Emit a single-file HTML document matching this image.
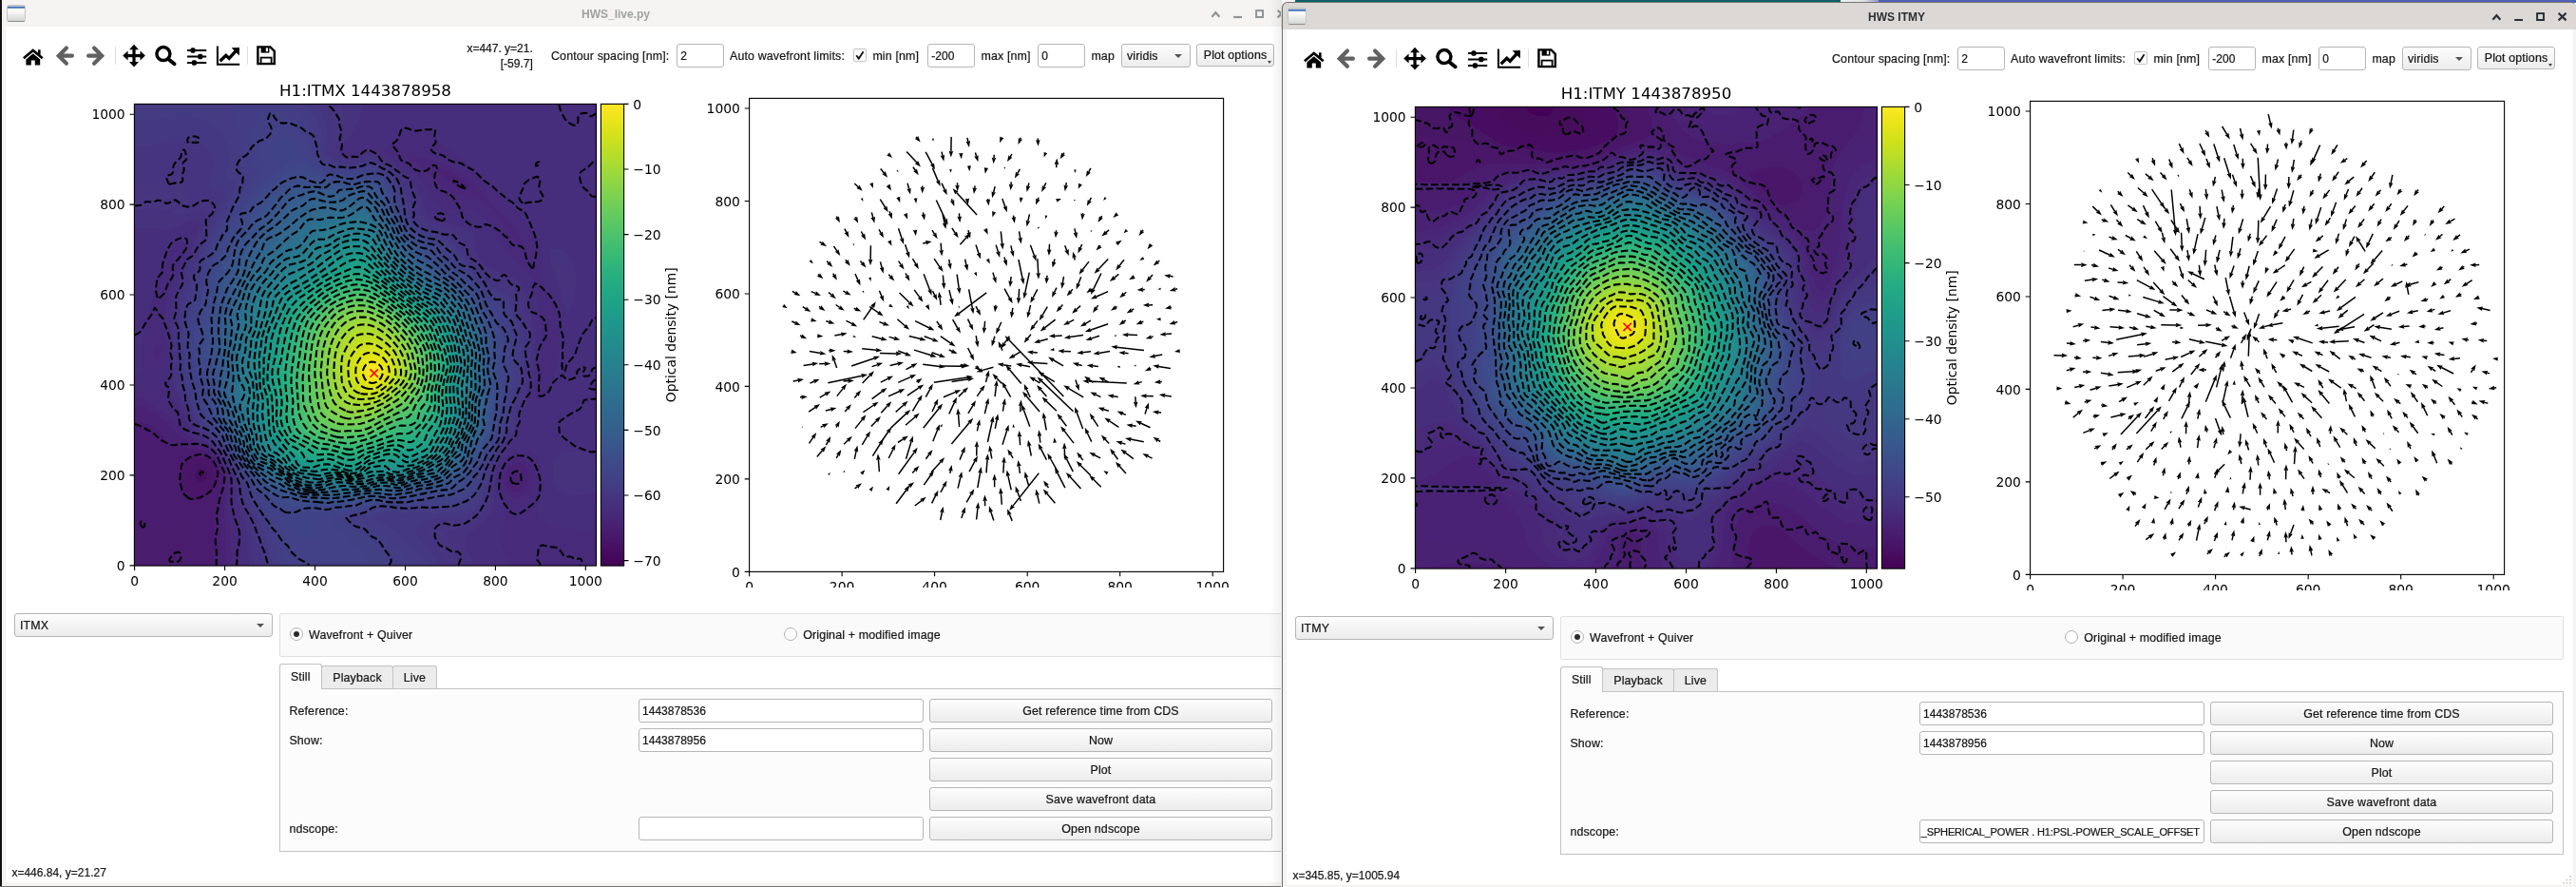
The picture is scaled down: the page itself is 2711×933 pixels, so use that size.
<!DOCTYPE html>
<html><head><meta charset="utf-8"><title>HWS</title><style>
html,body{margin:0;padding:0;}
body{width:2711px;height:933px;overflow:hidden;background:#fff;position:relative;font-family:"Liberation Sans","DejaVu Sans",sans-serif;font-size:12.4px;color:#161616;-webkit-text-stroke:0.22px #161616;}
.abs{position:absolute;}
.win{position:absolute;width:1363px;height:933px;overflow:hidden;background:#f5f4f3;-webkit-mask-image:linear-gradient(#000,#000);mask-image:linear-gradient(#000,#000);}
.tb{position:absolute;left:0;top:0;right:0;height:28px;}
.w1 .tb{background:#f5f4f3;}
.w2 .tb{background:#dbd8d5;}
.w2{border-radius:6px 6px 0 0;}
.ttl{position:absolute;top:5px;height:20px;line-height:20px;left:448px;width:400px;text-align:center;font-weight:bold;font-size:12px;white-space:nowrap;}
.w1 .ttl{color:#a0a2a2;-webkit-text-stroke:0;}
.w2 .ttl{color:#2b3035;-webkit-text-stroke:0;}
.content{position:absolute;left:6px;top:28px;width:1353.5px;height:900px;background:#fff;}
.lbl{position:absolute;white-space:nowrap;line-height:16px;height:16px;letter-spacing:0.15px;}
.inp{position:absolute;box-sizing:border-box;border:1px solid #b6b6b6;border-radius:3px;background:#fff;white-space:nowrap;overflow:hidden;line-height:24px;padding-left:3.3px;letter-spacing:0.15px;}
.btn{position:absolute;box-sizing:border-box;border:1px solid #b6b6b6;border-radius:3px;background:linear-gradient(#fdfdfd,#ececec);text-align:center;white-space:nowrap;line-height:24px;letter-spacing:0.15px;}
.cmb{position:absolute;box-sizing:border-box;border:1px solid #b6b6b6;border-radius:3px;background:linear-gradient(#fdfdfd,#ececec);white-space:nowrap;line-height:24px;padding-left:5px;letter-spacing:0.15px;}
.cmb:after{content:"";position:absolute;right:8px;top:10px;border-left:4px solid transparent;border-right:4px solid transparent;border-top:4.5px solid #555;}
.grp{position:absolute;box-sizing:border-box;border:1px solid #e0e0e0;border-radius:2px;background:#fafafa;}
.radio{position:absolute;box-sizing:border-box;width:14px;height:14px;border-radius:7px;border:1px solid #b0b0b0;background:#fff;}
.radio.on:after{content:"";position:absolute;left:3px;top:3px;width:6px;height:6px;border-radius:3px;background:#2a2a2a;}
.tab{position:absolute;box-sizing:border-box;border:1px solid #c2c2c2;border-bottom:none;border-radius:3px 3px 0 0;text-align:center;white-space:nowrap;letter-spacing:0.15px;}
.tab.off{background:#ececec;}
.tab.on{background:#fcfcfc;z-index:2;}
.num{font-size:12px;letter-spacing:0;}
.panel{position:absolute;box-sizing:border-box;border:1px solid #c2c2c2;background:#fcfcfc;}
</style></head><body>
<div class="abs" style="left:1362px;top:0;width:1349px;height:3px;background:#4f62b8;"></div>
<div class="abs" style="left:1362px;top:0;width:575px;height:3px;background:#0b6268;"></div>
<div class="abs" style="left:1937px;top:0;width:40px;height:3px;background:linear-gradient(90deg,#f0f0f0,#e4e4e6 60%,#8b96c8);"></div>
<div class="win w1" style="left:0px;top:0px;">
<div class="tb">
<svg class="abs" style="left:6px;top:4px" width="22" height="20"><defs><linearGradient id="igw1" x1="0" y1="0" x2="0" y2="1"><stop offset="0.25" stop-color="#fff"/><stop offset="1" stop-color="#d3d6d3"/></linearGradient></defs><rect x="1.5" y="1.5" width="19" height="17" rx="2" fill="url(#igw1)" stroke="#c4c4c4"/><path d="M2.5 18.5 H19.5" stroke="#8c8c8c"/><rect x="2" y="2.6" width="18" height="2.2" fill="#4a74b4"/></svg>
<div class="ttl">HWS_live.py</div>
<svg class="abs" style="left:1268px;top:6px" width="95" height="18" fill="none" stroke="#8f9496" stroke-width="2.2"><path d="M7.4 11.8 L11.4 7.2 L15.4 11.8"/><path d="M30.2 12 H39" /><rect x="54.1" y="5.1" width="6.9" height="6.9" stroke-width="2"/><path d="M76.6 4.8 L84.6 12.4 M84.6 4.8 L76.6 12.4"/></svg>
</div>
<div class="content"></div>
<svg class="abs" style="left:0;top:40px" width="300" height="40" viewBox="0 40 300 40"><path d="M24.9 61.3 L34.8 52.9 L44.7 61.3" fill="none" stroke="#000" stroke-width="2.7" stroke-linejoin="miter"/><rect x="40" y="52.3" width="2.6" height="5.5" fill="#000"/><path d="M34.8 56.2 L27.4 62.4 V68.4 H32.8 V63.6 H36.8 V68.4 H42.2 V62.4 Z" fill="#000"/><path d="M75.9 58.7 H63 M69.9 50.6 L61.8 58.7 L69.9 66.8" fill="none" stroke="#616161" stroke-width="4.2" stroke-linecap="round" stroke-linejoin="miter"/><path d="M93.1 58.7 H106 M99.1 50.6 L107.2 58.7 L99.1 66.8" fill="none" stroke="#616161" stroke-width="4.2" stroke-linecap="round" stroke-linejoin="miter"/><rect x="121" y="49" width="1" height="19" fill="#dcdcdc"/><rect x="260" y="49" width="1" height="19" fill="#dcdcdc"/><g fill="#000"><rect x="132" y="57" width="18" height="3.2"/><rect x="139.4" y="50" width="3.2" height="17.5"/><path d="M141 46.8 L146 52.2 L136 52.2 Z M141 70.4 L146 65 L136 65 Z M129.2 58.6 L134.6 53.6 L134.6 63.6 Z M152.9 58.6 L147.5 53.6 L147.5 63.6 Z"/></g><circle cx="171.9" cy="56.6" r="7" fill="none" stroke="#000" stroke-width="3.5"/><path d="M177.3 62.2 L183.5 67.2" stroke="#000" stroke-width="4" stroke-linecap="round"/><g stroke="#000" stroke-width="2.1"><path d="M197 53 H217.2 M197 59.5 H217.2 M197 66 H217.2"/></g><g fill="#000"><rect x="200.4" y="50.2" width="5.2" height="5.6" rx="1.8"/><rect x="208.2" y="56.7" width="5.2" height="5.6" rx="1.8"/><rect x="201.8" y="63.2" width="5.2" height="5.6" rx="1.8"/></g><path d="M228.9 48.6 V67.7 H252.2" fill="none" stroke="#000" stroke-width="2"/><path d="M231.6 64.2 L237.8 58.2 L241.2 61.4 L248.4 53.4" fill="none" stroke="#000" stroke-width="3.3" stroke-linejoin="miter"/><path d="M243.6 50.2 L252 50 L251.8 58.4 Z" fill="#000"/><path d="M271.4 49.4 H284.4 L288.8 53.8 V67.1 H271.4 Z" fill="none" stroke="#000" stroke-width="2.4"/><rect x="274.6" y="49.4" width="8.8" height="6.2" fill="#000"/><rect x="279.8" y="50.4" width="2.2" height="3.8" fill="#fff"/><rect x="274.6" y="60.6" width="11" height="6.2" fill="none" stroke="#000" stroke-width="1.8"/></svg>
<div class="lbl num" style="left:420px;width:140.8px;text-align:right;top:42.8px;">x=447. y=21.</div>
<div class="lbl num" style="left:420px;width:140.8px;text-align:right;top:58.8px;">[-59.7]</div>
<div class="lbl" style="left:580px;top:50.5px;">Contour spacing [nm]:</div>
<div class="inp num" style="left:712px;top:46px;width:50px;height:25px;">2</div>
<div class="lbl" style="left:768px;top:50.5px;">Auto wavefront limits:</div>
<div class="abs" style="left:898px;top:51px;width:14px;height:14px;box-sizing:border-box;border:1px solid #c4c4c4;border-radius:2px;background:#fff;"></div>
<svg class="abs" style="left:898px;top:51px" width="14" height="14"><path d="M3.2 7.2 L5.8 10.6 L10.6 3.2" fill="none" stroke="#111" stroke-width="1.8"/></svg>
<div class="lbl" style="left:918.4px;top:50.5px;">min [nm]</div>
<div class="inp num" style="left:976px;top:46px;width:50px;height:25px;">-200</div>
<div class="lbl" style="left:1032.5px;top:50.5px;">max [nm]</div>
<div class="inp num" style="left:1092px;top:46px;width:50px;height:25px;">0</div>
<div class="lbl" style="left:1148.4px;top:50.5px;">map</div>
<div class="cmb" style="left:1180px;top:46px;width:73px;height:25px;">viridis</div>
<div class="btn" style="left:1259px;top:46px;width:82px;height:24px;line-height:23.5px;">Plot options</div>
<div class="abs" style="left:1333.5px;top:64px;width:0;height:0;border-left:2.5px solid transparent;border-right:2.5px solid transparent;border-top:3px solid #444;"></div>
<svg class="abs" style="left:6px;top:80px" width="1353" height="538" viewBox="6 80 1353 538" font-family="DejaVu Sans, sans-serif" font-size="13.89px" fill="#000"><defs><filter id="blitmx" x="0" y="0" width="1" height="1" filterUnits="objectBoundingBox"><feGaussianBlur stdDeviation="1.6"/></filter><clipPath id="cpitmx"><rect x="141.4" y="109.4" width="486.1" height="485.7"/></clipPath></defs><g clip-path="url(#cpitmx)"><g filter="url(#blitmx)"><rect x="133.4" y="101.4" width="502.1" height="501.7" fill="#471164"/><path fill="#471365" d="M141.6 594.9l485.7 0 0-485.7-485.7 0 0 485.7zM210 506.7l-2.6-1.6-1.1-1.4-1-2.8 0.1-2.9 1.4-2.8 1.8-1.4 1.4-0.5 2.8 0 2.9 1.6 1.2 1.7 0.5 1.4 0.2 2.9-1.1 2.8-2.2 2.3-1.5 0.7-2.8 0z"/><path fill="#481668" d="M141.6 594.9l485.7 0 0-485.7-485.7 0 0 485.7zM207.1 512.9l-3.2-2.1-2.9-4.2-1.3-4.3 0.2-5.7 1.8-4.3 2.6-2.6 4.3-1.7 4.2 0 4.3 1.8 3.6 4 1.5 4.2-0.3 5.7-1.9 4.3-1.5 1.9-2.8 2.3-4.3 1.4-4.3-0.7z"/><path fill="#48186a" d="M141.6 594.9l485.7 0 0-485.7-485.7 0 0 485.7zM208.6 519.5l-2.9-0.6-2.8-1.4-4.3-4.4-2.9-6.5-0.7-4.3 0-4.3 1.3-5.7 1.7-2.8 2-2.2 2.9-1.8 2.8-0.9 5.7-0.5 4.2 1.1 2.7 1.4 4.4 4.3 1.6 2.9 0.9 2.8 0.3 5.7-1.5 5.7-1.4 2.8-2.6 3.6-2.9 2.5-2.8 1.6-2.9 0.9-2.8 0.1z"/><path fill="#481b6d" d="M141.6 594.9l485.7 0 0-485.7-485.7 0 0 485.7zM202.9 525.5l-2.9-1.6-2.8-2.5-2.6-3.4-2-4.3-1.4-4.3-0.8-5.7-0.1-5.7 0.6-4.2 2.3-5.7 2.5-2.9 2.9-2 2.9-1.2 4.2-1 4.3-0.1 2.8 0.4 4.3 1.5 2.9 1.8 2.8 2.5 2.8 3.8 1.5 3.2 0.9 3.9 0.1 4.3-0.6 4.3-1.4 4.2-2.2 4.3-2.5 3.5-4.3 4.1-2.8 1.8-4.3 1.6-4.3 0.1-2.8-0.7z"/><path fill="#481d6f" d="M206.7 594.9l420.6 0 0-485.7-485.7 0 0 452.2 10-5.5 5.7-2 5.7-1.1 17.1-2 6.1-1.5 9.6-3.1 1.4-0.3 1.4 0.4 2.9 3.5 2.8 5.6 2.8 8.1 1.5 6.6 0.8 7.7-0.1 7.1-0.9 5.7-1.7 4.3zM198.6 541.7l-2.8-3.3-4.3-7.3-2.9-6.3-1.8-5.4-1.5-7.1-0.7-7.2 0-7.1 0.7-5.7 1.4-4.2 1.8-2.9 2.9-2.8 2.2-1.5 3.6-1.5 5.7-1.3 4.2-0.3 4.3 0.4 4.3 1.3 4.3 2.3 3.9 3.4 3.2 4 2.2 4.6 1 4.2 0.2 4.3-0.6 4.7-1.4 5.3-2.8 6.3-2.9 4.5-4.3 5.4-5.7 5.6-5.7 4.4-5.6 3.2-2.9 0z"/><path fill="#481f70" d="M217.3 594.9l410 0 0-485.7-485.7 0 0 348.3 10 2.6 4.4 2.3 2.7 2.8 1.7 2.9 0.9 2.9 0.5 4.2-0.7 4.3-1.1 2.9-7.9 12.8-2 4.2-1 4.3 0.1 2.9 0.8 2.8 1.5 2.9 2.2 2.8 3.6 3.1 2.9 1.6 2.8 0.9 2.8 0.1 2.9-1 2.8-3.1 1.6-4.4 0.9-7.2 0.7-14.2 1.8-5.7 2.2-2.8 2.8-2.2 4.2-2.1 4.4-1.4 5.7-1.2 7.1-0.7 4.2 0.1 4.3 0.7 4.3 1.4 4.3 2.3 4.2 3.7 3.3 3.6 2.6 4.3 1.7 4.3 0.7 4.2 0 5.7-1 5.7-1.6 5.4-9.3 20.3-1.9 7.1-0.5 7.1 1 18.5 0.1 10-0.6 8.5-1.4 7.2z"/><path fill="#482173" d="M224.7 594.9l402.6 0 0-485.7-485.7 0 0 334.1 12.9 2.9 7.2 3.4 5.9 4.3 10.1 11.4 2.4 2.1 2.8 1.7 7.3 1.9 16.9 1 5.7 1.5 4.3 1.9 4.3 3.1 4.3 4 3.4 4.1 2.9 4.3 1.2 2.9 1.1 4.2 0.3 7.1-1.7 10-5.3 17.1-1.7 8.5-0.3 7.2 1 27-0.6 11.4-1.3 8.6z"/><path fill="#482475" d="M230.9 594.9l396.4 0 0-485.7-485.7 0 0 324.8 12.9 3.3 4.2 1.9 5.7 3.3 8.6 6.7 10.7 11.8 4.9 3.8 5.2 1.9 14.8 2.9 4.2 1.5 2.9 1.6 5.7 4.1 5.7 5.5 3.5 4.3 3.6 5.6 1.9 5.8 0.5 7.1-0.9 8.6-3.7 17.1-0.9 7.1 0 7.1 1.4 17.1 0.2 10-0.5 12.8-1.3 10zM540.4 511.5l-2.6-2.1-1.7-2.8-0.6-2.9 0.3-4.3 1.7-3.9 2.9-2.8 2.8-1.1 2.9 0.1 2.8 1.6 2.2 3.3 0.8 4.3-0.6 4.2-1.3 2.9-2.7 2.8-4.1 1.4-2.8-0.7z"/><path fill="#482677" d="M236.5 594.9l390.8 0 0-485.7-485.7 0 0 316.7 10 2.5 8.6 4 7.1 5 7.7 6.5 12.4 12.8 3.4 2.9 5.3 2.8 15.3 5.7 5.7 3.8 5.7 4.5 4.3 4.1 4.3 5.1 3.4 5.3 2.7 5.7 1.1 8.5-3.2 29.9 0.2 7.2 2 17.1 0.5 9.9-0.3 12.8-1.3 12.9zM494.8 199l-12.8-4.1-7.1-3.4-7.1-5.2-11.1-10.1 1.1-0.5 10 2.8 7.1 2.9 5.7 3.1 4.5 3.1 5.4 4.7 4.5 5.2-0.2 1.5zM543.2 518.1l-4.2-1.2-2.3-1.8-2-2.4-1.4-2.8-1-3.3-0.1-5.7 1.7-5.7 2.9-4.3 2.2-1.8 2.8-1.6 4.3-0.7 4.3 1.3 1.9 1.4 2.1 2.8 1.8 5.7 0 5.7-1.4 5.7-3 4.8-4.3 3.1-4.3 0.8z"/><path fill="#482979" d="M241.8 594.9l385.5 0 0-485.7-485.7 0 0 308.6 8.6 2 5.7 2.4 4.3 2.7 17 12.5 5.7 5.1 8.5 10 4.4 4.2 4.1 2.9 10.1 5.6 8.5 6.1 5.7 4.7 7.2 7.7 4.7 7.2 3.4 7.1 0.9 5.7 0 5.7-1.5 22.8 0.5 7.1 2.7 17.1 0.9 10-0.1 14.2-1.1 14.3zM541.8 523.9l-2.8-1-2.9-2-2.6-2.9-1.7-2.8-2.2-7.2-0.2-4.3 0.4-4.3 0.7-2.8 1.9-4.3 2.3-3.3 2.5-2.4 3.2-2.1 2.8-1.2 2.9-0.5 2.8 0 2.9 0.8 2.8 1.8 2.5 2.7 1.5 2.8 1.7 7.1-0.3 8.6-1 4.2-1.5 3.7-2.1 3.5-2.2 2.4-2.8 2.1-2.9 1.2-2.8 0.5-2.9-0.3zM164.4 377.9l-1.4-2-0.6-1.8-0.4-5.7 1-3.9 1.4-1.5 1.4 0 1.5 1.4 1 2.6 0.4 5.5-1.4 4.5-1.5 1.2-1.4-0.3zM548.9 261.2l-6.3-8.1-11.3-17.1-6.3-8.6-6-6.6-5.7-5.1-5.7-4-7.1-3.4-7.1-2.3-15.7-3.6-7.1-3.2-5.7-4.6-16.1-15.6-8.1-6.2-10.4-6.6 0.4-0.7 4.3-0.6 8.6 1 9.9 2.4 11.1 3.6 8.9 3.5 7.1 3.5 7.1 4.4 5.7 4.3 10.3 9.9 12.5 16.6 5.7 6.7 15.6 15.1 5.1 5.8 3.5 5.3 2 4.6 1.6 8.6-0.8 1z"/><path fill="#472a7a" d="M246.8 594.9l380.5 0 0-485.7-485.7 0 0 299.7 7.2 0.9 4.2 1.3 2.9 1.5 5.7 4.3 8.5 4.3 4.3 3 4.3 4 5.7 6.4 13.2 17.9 9.7 8.5 12.7 9.7 5.7 5 7.1 8 4.6 7.2 4.1 8.5 0.7 4.3 0 28.5 1 7.1 3.3 17.1 1.2 11.4 0.1 12.8-1 14.3zM544.7 532.2l-4.3-1-2.9-1.8-2.8-2.6-2.9-3.8-2.5-5-1.7-5.7-0.6-5.7 0.1-4.3 0.7-4.3 1.4-4.2 2.6-5 2.9-3.5 2.8-2.5 4.3-2.5 4.3-1.3 4.3-0.3 2.8 0.5 3.6 1.7 3 2.9 1.8 2.8 1.7 4.3 0.9 4.3 0.4 5.7-0.3 5.7-0.9 5.7-1.3 4.2-1.9 4.3-2.7 4.4-2.9 3-2.8 2.2-2.9 1.3-4.2 0.5zM165.8 397.2l-1.4-0.5-2.8-3-2.9-5.5-2.5-8.4-1.1-9.9 0.4-8.6 1.9-8.5 2.8-6 1.4-1.7 2.8-1.3 1.4 0.3 2.9 2.1 2.8 4.4 1.9 13.6 0.7 9.9-0.2 8.6-0.9 4.3-2.9 6.8-1.4 2-1.4 1.1-1.5 0.3zM557.5 279.4l-16.5-17.8-4.1-5.7-13.7-21.3-5.9-7.2-6-5.7-6.5-4.4-7.1-3.1-8.6-1.8-15.6-1.6-5.7-2.1-4.3-3.6-11.5-14.7-8.5-8.5-11.3-8.7-18.9-11.3-0.2-1.4 2-1.8 2.8-1.3 7.1-1 8.6 0.8 11.4 2.7 17.1 5.9 15.6 6.7 10 5.7 10.7 7.9 9.6 8.6 32.4 31.3 8.5 9.5 5.7 7.8 5 9.8 1.3 4.2 0.7 4.3-0.7 7.1-2.6 10-0.8 0.7z"/><path fill="#472d7b" d="M251.7 594.9l288.5 0-2.7-5.7-8.6-12.9-1.3-3-1.1-4.1-0.2-2.8 0.4-4.3 1.4-4.3 4.1-9.9 0.7-5.7-1-5.7-5.9-18.5-1.2-7.2 0-7.1 0.9-5.7 1.8-5.7 2.9-5.7 2.9-3.8 2.8-2.7 4.3-2.8 4.3-1.8 5.7-1.3 5.7 0.3 2.8 1.1 2.9 1.9 3.6 4.9 2.5 7.1 1.2 9.9-0.4 11.4-0.9 7.2-3.2 14.2-0.7 5.7 0.6 4.3 2.6 4.2 3.2 2.7 4.3 2.3 5.7 2.2 7.1 1.7 11.4 1.5 28.5 1.1 0-448.7-485.7 0 0 287.8 2.9-1.1 2.6-1.8 1.3-1.5 1.3-2.8 0.6-4.3-0.4-18.5 0.7-8.5 1.4-8.6 11-46.2 8.5-26.5 2.9-6.4 2.8-4.9 2.9-3.7 4.3-4.1 4.2-2.6 2.9-0.6 2.8 0.8 1.5 1.6 0 2-5.7 15.9-11.4 29.1-3.4 11.4-1.6 8.6-0.5 14.2 3.1 31.4 0 32.7 0.5 5.7 1.2 4.3 2.6 5.7 8 12.7 8.1 14.3 3.9 5.7 6.1 7.1 16.1 13.3 7.1 7.1 7.1 9.6 5.9 11.3 0.9 2.9 0.5 4.3 0.4 17.1 0.7 8.5 4.9 21.4 1.7 11.4 0.5 14.2-0.8 15.7zM566 421.2l-1.4-1.5-0.3-1.4-0.4-8.6 3.8-19.9 1.6-12.8 0.9-14.3-0.1-14.2-1.2-16-2.7-18.2-2.6-11.4-3.2-8.5-2.9-5-4-5-15.2-14.2-5-5.7-3.7-5.7-10.6-18.8-5.2-6.9-4.7-4.7-7.2-4.8-7.1-2.6-7.1-1-17.1-0.3-4.3-1.1-2.8-1.4-4.3-4.3-7.2-12.5-3.8-5.7-8.8-10-5.8-5.2-5.7-4.2-23.4-14.8-0.9-1.4 0.3-1.4 2.6-3.6 4.3-2.8 7.9-3.6 4.9-4.8 4.3-2.5 5.7-1.9 5.7-0.6 5.7 0.6 5.7 1.8 7.1 4.2 12.2 10.3 10.6 7.9 5.7 5.1 6.3 6.9 16.5 15.1 34.8 33.4 10.9 12.8 4.8 7.1 3.6 6.4 4.2 10.7 2 8.5 0.5 7.2-0.8 12.8 0.9 5.7 2.9 7.1 7.4 12.2 4.2 10.9 2.9 13.2 1.2 15-0.3 9.9-0.9 10.1-1.4 8.5-2.9 11.3-4.3 11.6-4.2 8.5-4.3 6.1-2.9 2.3-1.4 0.1z"/><path fill="#472f7d" d="M256.7 594.9l258.9 0-1.1-4.3-6.3-12.8-1.1-4.3 0-4.3 0.7-2.8 1.7-4.3 11.1-17.1 3-7.1 0.7-7.1-1.6-15.7-0.2-7.1 0.6-7.1 1.8-7.1 2.1-5.7 3.2-5.7 3.1-3.9 4.2-4.1 4.3-2.9 2.9-1.2 11.4-2.6 5.7-0.2 4.2 1.5 2.9 2.7 2.5 5 1.2 4.2 1.1 7.2 1.3 25.6 0.8 7.1 1.6 5.7 2.9 4.3 2.8 2.2 4.3 2 8.5 1.7 8.6 0.1 22.8-1.4 0-82.1-8.6 1-11.4 0.3-8.5-0.3-7.1-1.3-4.7-2-2.9-2.8-1.7-4.3-0.3-4.3 0.9-7.1 2.8-10 5.9-16.1 4.2-10.2 4.3-7.5 10.2-13.2 3.9-5.6 4.3-8.6 5.8-15 1.4-2.5 1.5-0.8 0-84.8-1.5-0.4-1.4-1.5-7.8-14.6-4.6-7.1-4.7-5-4.2-3-4.3-2-4.3-1.1-7.1-0.7-14.3 0.3-4.2-0.8-3.2-2-1.8-2.8-0.8-2.9-0.5-15.6-1-5.7-1.8-4.3-1.8-2.9-4.8-4.7-3.9-2.4-3.7-1.4-3.8-0.7-4.3 0.1-4.2 1.5-2.9 2-2.3 2.8-1.9 3.8-1.5 5.4-0.1 3.6 6.1 7.1 23.1 22.8 7.2 10 5.8 11.4 4.3 11.4 7.2 27 9.1 26.8 2.9 11.7 2 12.8 1 17.1-0.9 18.5-3 18.5-4.3 14.3-2.9 7.1-4.3 8.5-4.4 7.1-4.2 5.7-4.7 5.3-4.3 3.6-2.8 1.4-1.4 0.1-1.5-0.7-1.5-4 0.1-5.7 6.1-21.3 3.9-17.1 2.4-15.7 0.9-14.2-0.4-15.7-1.7-15.7-3.2-18.5-3.9-12.8-4.1-7.7-5.7-6.6-7.1-5.6-13.5-8.6-3.5-2.8-2.4-2.9-2.2-4.2-3.7-12.9-2.3-5.6-3.5-5.7-4.5-5-5.7-3.9-5.7-2.1-5.7-0.9-18.5-0.7-5.7-1.2-4.3-2.1-2.8-2.6-2-2.9-6.5-14.2-4-7.2-5.3-7.1-5.3-5.7-6.4-5.7-6.1-4.4-20-12.6-8.4-4.3-0.6-1.5 1.4-2.8 7.8-7.1 0.7-1.5 1.1-8.5 2.3-7 2.9-5.8 6.7-10 1.6-4.3-274.7 0 0 163 3.4 6.5 1.3 8.6-0.2 11.3-1.7 22.8 0.1 5.7 0.6 4.3 0.8 2.2 1.4-2.2 5.3-22.8 3.9-12.8 8.7-22.8 2.7-5.7 3.5-5.7 4.4-5.7 4.3-4.5 4.7-4 5.3-3.6 4.2-1.9 4.3-0.7 2.9 0.5 2.8 2.2 0 2.1-2.4 7.1-11 29.9-9 22.8-2.9 9.9-1.8 8.6-0.8 7.1-0.1 8.5 2.1 27.1 0.5 24.2 0.8 8.6 1.8 8.5 3.7 10 8.5 17.1 7.4 12.8 6.8 8.5 16.3 14.3 8 8.5 7 10 6.2 12.8 1 5.7 0.8 14.2 1.1 8.6 6.1 22.8 1.8 9.9 1 14.3-0.5 17.1zM368.1 159.4l-4.7-1.7 3.2-3.4 4.3-1.8 2.9-0.4 4.2 0.5 4.3 1.9 1.4 1.7-0.1 1.5-11.3 1.8-4.2-0.1z"/><path fill="#46327e" d="M261.8 594.9l236 0-0.8-4.3-5.3-11.4-1.5-4.3-0.5-4.2 0.5-2.9 1.4-2.8 2.3-2.9 12.3-11 5.7-6 3.4-4.4 2.3-4.2 2-7.1 1-24.3 0.8-5.7 1.9-7.4 2.6-6.8 3.1-5.6 11-14.3 2.5-4.3 1.4-4.3 0.8-5.7 8.1-25.6 5.8-22.8 3.4-21.4 0.8-9.9 0-10-1.6-18.5-4.5-22.8-2.1-7.2-2.9-7-3.6-5.7-3.9-4.3-3.8-3-5.7-3.2-18.5-6.7-4.3-2.8-5.7-5.7-3-4.2-2.7-5.7-0.9-4.3 0.1-10-1.5-4.2-2.3-2.9-3.9-2.6-4.3-1.7-27.1-6-5.6-2.5-2.9-2.3-3.2-4.8-5.5-15.7-5.2-10-7.5-9.9-9-8.6-19.4-12.9-4.3-2.4-4.3-1.6-4.3-0.9-4.2 0-12.9 2.5-4.2 0.2-5.7-1.5-5-3.3-1.1-1.4 2.2-4.3 3.9-4.6 6.2-5.4 5.8-10 2.9-7.1 2.2-7.1 1.2-5.7 0.2-4.3-239.3 0 0 130.3 4.3 0.5 18.5-0.4 5.7 0.7 7.1 2.1 2.9-0.7 12.8-7.2 7.1-2.8 4.3-0.5 2.8 0.5 2.5 1.4 1.3 1.5-0.2 2.8-4.3 12.8-21.5 57-2.6 8.5-1.8 8.6-1.1 8.5-0.2 8.6 1.5 27 0.4 21.4 0.8 8.5 1.8 8.6 3.6 9.9 8.2 17.1 7 12.9 4 5.7 3.8 4.2 15.4 14 7.9 8.8 7.6 11.4 6.3 12.8 0.9 4.3 1.4 14.2 1.2 7.2 7 22.7 2.5 11.4 1.4 15.7-0.1 15.7zM598.6 520.8l7.3 0.1 15.7-1.9 5.7-0.2 0-43.5-5.7 0.3-17.1-0.8-8.6 0.4-5.7 1.7-2.8 1.9-1.8 2.1-2.5 5.7-1.1 7.2 0.1 8.5 1.5 7.1 2.4 4.8 2.8 3.1 4.3 2.3 5.5 1.2zM596.8 328.6l0.6 1.2 4-8.4 2.5-7.1 1.6-7.1 0.8-5.7 0.1-7.1-0.7-7.1-1.2-5.5-1.6-4.5-2.7-5.1-2.6-3.5-3.1-2.7-2.8-1.8-4.3-1.6-4.3-0.6-4.3 0.2-0.7 0.8-0.1 2.9 2.3 10.9 10.8 33.2 4.8 17.1 0.9 1.5z"/><path fill="#463480" d="M267.2 594.9l216.6 0-0.4-2.9-1.7-4.3-11.3-18.5-1.4-4.2 0.2-2.9 1.4-2.1 2.9-1.8 17-5.6 5.7-2.7 5.7-3.6 4.3-3.4 4.3-4.6 2.8-4.2 2.1-4.7 1.5-7.2 2.1-19.9 2.9-12.8 4.3-9.8 11.8-20.1 4.3-10 8-25.6 5.9-25.7 2.7-19.9 0.3-17.1-1.8-15.7-4.5-19.9-2.1-7.1-2.3-5.7-2.4-4.5-3.1-4.1-4-3.7-4.3-2.8-4.3-2.1-12.8-4.7-4.3-2.6-2.8-2.3-5.7-5.9-6.9-8.6-4.7-7.1-6.3-11.4-4.9-5.6-4.2-3-5.5-2.8-19.7-7.1-5.9-4.3-2.1-2.9-1.4-2.8-4.5-15.7-4.7-9.9-6.7-10-8.3-8.6-5.6-4.2-9.7-6.5-8.6-4.3-4.2-1.1-4.3-0.1-15.7 3.1-5.7-0.1-2.8-0.7-3.6-1.7-7.1-5.7-0.4-1.4 0.8-2.9 5.2-10 1.7-7.1 2-15.6 0.1-12.9-219.5 0 0 111.5 5.7 0.3 14.3-1.5 7.1 0.2 10 2.3 4.2 1.8 5.7 3.1 1.5 0.2 4.2-1.1 10-3.6 5.7-1.2 4.7 0.5 2.4 1.5 1.4 1.7 0.3 1.1-0.4 1.4-4.1 10-25.5 68.4-2.8 8.5-2.1 8.6-1.5 9.9-0.5 10 1.3 44.1 0.6 8.6 1.7 8.5 3.3 10 7.8 17.1 7.4 14.2 3.8 5.7 3.5 4.3 15.8 15.2 8.5 10 6.9 10.4 7.1 14.2 0.8 2.9 3.3 19.9 7.9 22.8 2.9 11.4 2.2 15.7 0.6 9.9-0.1 7.2z"/><path fill="#453581" d="M272.8 594.9l199.2 0-0.8-4.3-2.3-4.3-11.4-14.2-3.7-5.7-1.3-4.3 0.3-4.3 1.7-2.8 1.4-1.4 5-2.9 5.4-1.3 12.9-0.9 5.7-0.9 5.6-1.6 5.7-2.4 5.7-3.6 4.1-3.5 3.5-4.3 2.3-4.3 2.2-7.1 3-18.5 3.2-14.2 3.5-8.6 10.4-17.1 4.6-9.9 6.5-20 6.2-25.6 3.5-21.4 0.9-17.1-1.2-15.6-3.4-15.7-3.2-11.4-2.7-7.1-3.5-6.3-4.3-4.9-7.1-5-12.8-5.9-7.1-5.6-15.6-17.9-13.6-18.5-5.9-5.7-4.1-2.8-5-2.5-16.6-6.1-2.6-1.4-3.4-2.9-3-4.2-2.2-4.3-4.5-15.7-5.2-11.4-5.5-8.5-6.8-7.3-11.4-8.5-5.7-3.4-4.3-1.8-4.2-1-4.3-0.1-15.7 3.2-7.1-0.1-4.3-1.3-4.2-2.2-8.7-7.4 0.8-4.3 3.3-10 0.2-4.2-0.6-14.3-2.7-17.1-206 0 0 79.8 2.9 0.7 2.8 0.1 14.3-2.5 8.5-0.8 7.1 0.1 5.7 1 5.7 2.6 4.3 4.2 4.3 7.2 4.8 10.2 0.9 0.6 2.8 0.1 11.4-2.2 4.3-0.1 4.3 1.6 1.4 1.4 1.4 2.8-6.9 12.9-5 11.4-11.6 29.9-12.4 34.1-4.8 15.7-2.2 11.4-1 12.8 0.8 39.9 0.6 10 2 9.9 3.5 10 8.3 18.5 6.6 12.8 6 8.6 16.1 16.4 8.6 10.4 7.4 11.6 7.9 15.7 4.2 19.9 8.9 22.8 3.4 11.4 3.1 18.5 0.8 8.6 0 5.7z"/><path fill="#453882" d="M278.9 594.9l182.5 0-1-4.3-2.6-4.2-13.1-14.3-4.2-5.7-2.3-5.7 0-4.3 1.4-2.8 3.2-2.9 5-2.6 4.3-1.7 10-2.1 21.3-1.5 5.7-1.4 4.3-1.6 5.7-3.1 3.8-3.1 3.3-3.6 2.9-4.5 3.1-9 4.5-22.7 1.9-7.2 1.9-4.7 11.5-19.5 3.9-8.5 5.5-17.1 5.9-24.2 3.6-21.4 1.4-18.5-0.2-8.5-0.8-8.6-3.5-15.7-5.1-15.6-2.8-5.7-3.1-4.3-6.3-5.7-12.9-7.5-5.7-4.7-19.2-22-16.4-20-4.3-3.8-4.7-3.2-18.1-7.1-4.9-2.9-4.9-4.3-1.9-2.8-2.6-5.7-5.5-17.1-5-11.4-4.5-7.1-6.7-7.1-5.4-4.3-7-4.6-4.2-2.1-4.3-1.3-7.1-0.1-11.4 2.6-5.7 0.7-4.3-0.2-4.3-0.9-4.2-1.8-3.8-2.3-8.4-7.1-0.9-1.4 2.6-12.8-0.5-7.2-2.4-11.3-5-14.3-1.1-4.3-194.2 0 0 44.8 4.3 0.4 4.3-0.4 29.9-5.1 12.8-1.2 5.7 0.2 5.7 0.8 4.3 1.3 4.2 1.9 4.3 3 3.7 4.2 2.3 4.3 1.1 4.2 0.2 4.3-0.4 4.3-3.3 15.6-0.4 4.3 1.1 1.4 1.4 0.5 7.1 1.1 4.3 1.6 2.7 2.5 1.5 2.9-1.3 2.8-11.4 19.2-6.5 13.6-12.9 32.7-11.4 32.8-3.1 10-3.1 14.2-1.3 12.8-0.2 15.7 0.9 31.3 1.8 10 3.2 10 9.9 22.7 5.7 11.4 6 8.6 15.2 16.3 8.6 10.7 7.3 11.4 8.9 17.1 5 18.5 9.9 22.8 3.8 11.4 4.3 19.9 1.1 7.2 0.1 5.7z"/><path fill="#443a83" d="M285.6 594.9l164.4 0-0.6-2.9-2.8-4.3-15.1-14.2-15-15.5-7.1-5.1-14.3-6.4-1.9-1.5 10.5-2.7 15.6-2 5.7 0 7.2 1.4 7.1 0.3 19.9-1.9 22.8-1.3 7.1-1.8 5.7-2.4 5.7-3.9 4.3-4.7 2.8-4.9 2.3-6 6.6-28.5 12.7-22.8 5-11.3 4.4-14.3 4.3-18.5 4.3-24.2 1.2-11.4 0.4-10-0.2-8.5-0.8-8.6-1.6-8.5-2.3-8.6-4.5-12.8-2.1-4.2-2.9-4.3-5.4-5.3-11.4-8-5.7-5.2-38.4-44-4.3-3.7-4.3-2.8-19.9-9.4-4.3-3-4.2-4.1-2.8-4.2-3.4-8.6-4.7-14.2-4.2-10-4.5-7.1-6.9-7.1-9.2-6.6-4.2-2.1-4.3-1.3-7.1-0.1-11.4 2.5-5.7 0.7-5.7-0.2-4.3-1-4.9-1.9-4.8-2.8-10.4-8.6-0.1-2.8 1.6-11.4-1.3-6.5-3.8-10.6-8.6-15.7-1.5-4.3-182.7 0 0 21.3 4.3 0.2 4.3-0.5 25.6-6 10-1.7 10-0.5 9.9 1.3 5.7 1.7 5.7 2.6 5.7 3.6 4.3 3.5 4.1 4.4 3.2 4.3 3.1 5.7 2.2 5.7 1.5 7.1 0.1 5.7-0.9 5.7-2.8 10 0.1 1.4 0.9 1.4 1.3 1.1 4.3 2.6 2.4 2 1.8 2.8 0.9 2.9-15.3 22.8-6 10-5 10-13.8 34.1-12.5 37.1-4.3 17.1-2.3 17-0.4 18.6 0.8 25.6 1.8 10 3.2 9.9 10 24.2 5.5 11.4 5.9 8.6 14.5 16.3 8.5 11 7.1 11.1 10.3 18.5 5.6 17.1 10.3 21.4 5 12.8 6.2 22.8 1 5.7 0.2 4.3z"/><path fill="#433d84" d="M293.2 594.9l140.5 0-0.5-2.9-3.2-4.3-21.2-19.9-9-7.1-17.5-11-4.1-3.3 2.7-1.4 11.4-3.9 12.8-2.3 32.8-3.2 11.3 0.6 18.6-0.1 8.5-0.4 5.7-0.7 5.7-1.4 5.7-2.5 4.3-2.7 3.5-3.3 3.6-5 2.9-6.4 2.5-8.6 3.3-15.6 15.2-28.5 3.5-8.5 3-10 5-22.8 3.7-22.8 1.5-18.5-0.5-15.7-1.8-11.4-3.3-12.8-3.7-9.4-4.3-7-4.6-4.9-9.6-8-4.3-4.1-14.2-17.1-29.9-32-7.1-5.1-18.5-9.6-4.3-3.1-3.9-3.6-3.2-4.3-1.5-2.9-8.8-24.2-3.1-7.1-4.6-7.1-6.3-6.3-8.5-5.9-7.1-2.7-5.7-0.3-15.7 2.9-8.5 0.2-4.3-0.7-5.7-1.9-4.8-2.4-5.2-3.5-8.1-6.5-1.1-1.4 1-12.8-0.6-2.9-2.2-5.7-2.9-5.7-3.2-5-12.3-14.9-2.3-4.3-66.2 0-0.8 2.9 0.1 2.8 6.1 20 3.6 18.5 0.5 10-1.5 9.9 0.1 2.9 1.5 2.7 4.9 5.8 1.7 4.3-0.4 1.4-10.4 12.7-6.4 8.7-14.3 22.8-6.9 14.2-12.3 31.3-11.2 35.6-2.8 11.4-2.1 11.4-1.2 10-0.5 10 0.1 17 0.6 11.8 1.4 8.9 2.7 9.3 9.9 25.6 4.9 11.4 6.1 10 14.9 17.7 9.1 12.2 6.3 9.9 12.4 21.4 5.6 14.2 11.5 21.4 5.9 12.8 7.8 22.8 1.4 5.7 0.4 4.3z"/><path fill="#423f85" d="M302.4 594.9l110.6 0-0.2-2.9-2.3-4.3-11.2-12.8-8.4-7.3-20-13.8-5.2-4.5-2.3-2.9 3.6-1.4 20.2-5.7 13.6-2.6 45.6-4.7 21.4 0.8 12.8-1 5.7-1.4 4.2-1.7 3.9-2.2 3.3-2.5 4-4.6 3.2-5.7 2.6-7.1 3.1-14.3 4.8-9.9 10.8-20 3-7.1 2.3-7.1 3.9-17.1 4.5-27.1 1.8-17.1 0.2-14.2-1.1-14.2-2.6-12.9-3.7-11.4-4.7-8.5-3.5-4.3-13-13-15.6-19.2-29.1-30.4-8-6.2-18.5-10.3-4.5-3.5-4.3-4.2-3.1-4.3-2.2-4.3-10.8-28.5-3.4-5.7-4.4-5.2-4.3-3.8-4.3-3-4.2-2.3-4.3-1.3-5.7-0.3-15.7 2.6-8.5 0.3-8.6-1.6-9.2-3.9-16.4-11.4 0.6-11.4-0.6-3.5-4.3-7.9-7.1-8.4-7.1-5.8-8.6-4.8-7.1-2.5-7.1-0.9-4.3 0.5-2.8 0.8-5.7 3.4-4.3 5.3-3.1 8.2-1.6 9.9-1.7 24.3 0.9 2.8 5.5 7.5 1.6 3.9-21.5 25.4-7.2 10-8.5 13.2-4.8 8.4-4.1 8.5-12 29.9-10.5 34.2-5 21.3-2.6 18.6-0.3 21.3 1.1 14.3 2.5 11.4 11 31.3 5.3 12.8 6.2 10 14.6 18.2 7.5 10.3 20.4 32.7 6.3 13 13.8 22.6 8.2 15.7 8.6 19.9 1.4 4.3 0.6 4.3z"/><path fill="#424086" d="M315.7 594.9l72 0 0.3-2.9-0.8-2.8-3.3-5.7-6.7-7.2-13.4-11.4-7.1-6.9-5.7-7.3-2.5-4.3-0.3-1.4 49.2-10 39-3.8 17.1-2.1 15.7 0.5 10-0.9 5.7-1.3 4.2-1.7 4.3-2.5 2.9-2.4 3.7-4.3 3.3-5.7 1.6-4.2 3.4-12.8 15.4-30 3-7.1 2.4-7.1 3.7-17.1 4.3-29.9 1.3-15.7 0.1-14.2-1.3-14.2-2.6-12.9-3.3-9.9-4.8-8.6-11.7-13.7-17.1-21.6-29.9-30.6-8.2-6.7-18.9-11.4-4.3-3.4-4.2-4.3-2.9-3.7-3.2-5.7-11-28.5-3.5-5.7-3.7-4.2-4.2-3.7-4.3-2.8-7.1-2.8-5.7-0.4-15.7 2.3-8.5 0.3-10-1.5-10-3.8-20-11.8 0.4-10-0.7-4.3-2.4-3.9-4.3-4.6-4.3-3.3-5.7-2.9-5.7-1.7-4.3-0.3-4.2 0.6-2.9 1-2.8 1.6-2.6 2.1-4.2 5.7-2.8 7.1-2 8.6-0.6 5.7 1.1 2.8 6.7 8.6 0.7 1.4-0.8 1.4-21.2 22.8-7.1 8.7-7.1 9.8-8.5 12.9-5.9 9.9-4.2 8.5-6.5 15.7-4.8 12.5-3.3 10.3-6.4 22.8-3.7 15.7-2.5 12.8-1.4 9.9-0.7 11.4 0.1 11.4 1.2 12.8 2.6 11.4 11.4 35.6 5.4 12.9 5.6 8.5 19.3 25.6 18 28.2 6.4 8.9 7.8 12.9 25.1 35.5 12.8 21.3 1.8 4.3 0.5 2.9z"/><path fill="#414287" d="M324.3 567.8l2.5 0.6 2.8-0.3 1.4-1 1.2-2.1 0.8-5.7-0.2-14.3 0.3-1.4 2.2-0.8 24.2-3 38.5-6.6 42.7-4.4 18.5-2.5 11.4 0.1 7.1-0.6 5.7-1.3 4.3-1.7 4.3-2.5 2.8-2.3 2.9-3.2 2.8-4.5 4.7-13.7 16.7-32.8 3-7.1 2.2-7.1 3.1-15.7 4.1-34.1 0.9-14.3-0.3-14.2-1.4-14.3-2.7-12.8-3.1-8.5-4.9-8.6-21.5-28.5-9.3-10.4-13.3-12.3-16.6-16.8-6.2-4.6-15.2-9.6-5.7-4.7-4.3-4.4-3-4.1-3.2-5.7-11.3-28.5-2.7-4.2-4-4.7-4.2-3.6-4.3-2.7-2.9-1.2-4.2-1.1-5.7-0.2-14.9 2.1-9.3 0.1-10-1.4-9.5-3-17.6-9-8.5-2.8-1.4-1 0.9-10-0.6-2.8-0.8-1.5-2.4-1.9-4.3-2.2-4.2-1-2.9-0.1-4.3 1-4.5 2.8-3.5 4.3-2.6 5.7 0.4 2.8 0.9 1.5 8.6 8.5-20.6 19.5-10 10.6-8.2 9.8-8.9 12.2-9.9 14.9-4.9 8.5-4.7 9.9-7 17.1-4 11.4-9.3 35.6-3.9 18.5-1.7 11.4-0.8 11.4 0.2 11.4 0.9 8.6 1.6 8.5 10.1 37 4.9 14.3 5.3 10 20.4 28.1 19.9 30.1 19.9 24.8 10 10.7 10 9.1 11.4 8.1 4.3 2.5 4.6 1.9z"/><path fill="#404588" d="M302.5 542.2l4.3 1.2 4.3 0 2.9-0.9 5.7-2.8 18.5-0.5 19.9-1.7 37-5.5 48.5-5.3 21.3-3.2 11.4-0.7 7.1-1.7 6.3-3.1 4.9-4.3 3.1-4.5 4-9.8 17.1-32.7 4.8-11.4 2.3-8.5 1.9-11.4 4.2-45.6-0.6-21.4-2.2-17.1-3.6-12.8-2.6-5.7-3.4-5.7-16.9-24.2-9.3-11-17.6-16-15.8-15.7-5.6-4.3-15.1-10.3-5.7-4.9-4.3-4.6-4.1-5.8-3-5.7-10.1-25.6-2.5-4.3-3.6-4.3-6.6-5.3-7.1-3-7.1-0.5-20 2-11.4-0.7-11.2-2.5-8.1-2.8-12-5.1-4.3-1.3-4.2-0.6-7.2 0.8-7.1 3.2-10 7.2-11.3 10.2-10.8 11.2-9.6 11.4-15.3 21.2-6.4 10.2-4.9 9.5-6.3 14.7-4.4 11.4-3.1 9.9-5.6 22.8-4.2 19.9-2.7 15.7-0.9 11.4 0.5 14.2 2.1 12.9 10 42.7 3.1 10 4 8.5 4.5 7.1 16.2 22.8 16.7 24.9 7.1 9.4 5.7 6.1 15.6 14.2 7.2 5.2 5.6 2.9z"/><path fill="#3f4788" d="M317.6 536.5l16.3 0.2 24.2-1.3 86.9-10.6 15.6-2.2 17.1-3.4 5.7-1.8 4.4-2.3 2.7-2.2 2.9-3.2 8.5-13.9 14.6-27.7 5.3-12.8 2.5-10 1.6-11.4 2.8-35.6 0.4-12.8-1.1-21.3-2.7-17.1-2.1-7.2-2.3-5.7-8.2-14.2-11.8-17.1-8.9-10.2-17.6-15.4-16.1-15.7-20.4-15.3-4.3-3.8-4.8-5.1-3.8-5.1-2.9-4.9-5.1-11.4-5.9-15.6-2.4-4.3-3.6-4.4-2.9-2.7-4.2-2.8-4.3-1.9-2.8-0.7-7.2-0.3-18.5 1.7-9.9-0.3-12.9-2.2-21.3-6.1-7.1-1-7.2 1.1-8.5 4.1-10 7.3-9.9 8.9-9 9.3-9.4 11.4-15.8 21.7-7 11-4.9 10-6.7 15.7-3.1 8.5-2.9 10-5.7 25.6-3.8 19.9-1.9 14.3-0.5 11.4 1.3 14.2 9.2 48.4 4.2 14.3 2.5 5.7 4.1 7.1 33.7 48.9 7.1 9 5.7 5.7 8.5 6.5 11.4 6.3 8.6 2.7 13.6 2.1z"/><path fill="#3e4989" d="M313.9 533.6l11.4 0.8 14.3 0 15.7-0.6 15.6-1.3 82.6-10.5 15.7-3 10-3.2 7.1-3.8 4.2-3.7 4.3-4.8 3.9-5.5 6.1-10.7 10.7-20.6 3.6-8.6 2.5-8.5 1.5-8.5 1.2-12.9 2.1-32.7 0-14.3-1.1-17-1.7-12.9-2.4-9.9-4-10-4.7-8.5-8.3-12.9-5.1-7.1-5.7-6.6-5.7-5.4-16.3-13.6-16.3-15.7-17.2-13.5-8.6-8.2-5.2-6.8-4.1-7.1-4.5-10-5.5-14.2-3.2-5.7-3.1-3.7-4.3-3.5-4.3-2.3-4.2-1.3-5.7-0.5-18.6 1.6-11.3-0.2-11.7-1.5-21.1-4.2-7.1-0.6-5.7 0.6-4.3 1.3-5.7 2.7-5.7 3.6-11.4 9.2-11.4 11.6-9.2 11.4-19.3 26.3-6.8 12.2-7.5 17.1-4.1 11.4-3.6 14.2-4.6 22.8-2.9 17.1-1.6 12.8-0.3 11.4 0.9 11.4 6.7 44.1 2.7 12.8 3.2 10 4.9 10 8.3 12.8 23.3 33.6 5.7 7.5 5.7 6.4 8.5 7.2 10 5.9 11.4 4.2 11.3 2.1z"/><path fill="#3e4c8a" d="M324 532.2l28.4 0.1 27.1-2.1 74-9.7 14.3-2.9 9.9-3.3 5.7-3 5.7-4.4 4.3-4.5 4.3-5.9 7.1-12.3 9.1-17.5 4-10 2.2-8.5 1.9-14.3 2-32.7 0.4-12.8-0.4-12.9-1.4-15.6-1.8-11.4-2.7-10-4.2-9.9-12.3-20-4.2-5.7-5.1-5.7-6-5.5-17.8-14.4-14.9-14.3-18.6-15.5-7-7.2-5.3-7.2-4.1-7.1-4.6-10-5-12.8-3-5.7-3.5-4.2-3.1-2.6-4.3-2.4-4.2-1.4-7.2-0.5-17.1 1.3-9.9 0-10-0.9-22.8-3-8.5-0.1-5.7 1-5.7 2-5.7 2.9-7.1 4.8-10 8.6-9.5 10.2-23.3 30.4-6.3 9.5-7.2 14.2-6.4 15.7-3.8 12.8-3.9 18.5-3.3 18.5-1.9 14.3-0.9 11.4 0.2 11.4 4.7 41.3 2.1 14.2 2.8 12.8 3.7 10 8.2 14.2 19.2 28.1 11.4 15.3 8.5 9.1 4.3 3.5 5.7 3.8 11.4 5.3 11.4 3.1 15.7 1.6z"/><path fill="#3d4d8a" d="M334.5 530.8l16.5 0.1 15.6-0.7 38.5-4.2 51.3-7.6 12.8-2.9 8.5-3.2 5.7-3.2 5.7-4.7 4.4-5 4.9-7.1 9.2-16.4 6-12.1 3.1-8.5 2.3-10 1.6-15.6 1.6-28.5 0.3-12.8-0.5-12.9-1.1-14.2-2-12.8-2.6-10-3.5-8.5-10.8-18.5-5.2-7.2-4.8-5.4-5.7-5.2-20.7-16.4-14.9-14.3-15.7-13.7-7.1-7.3-5.7-7.4-5-8.6-4.7-10-5.1-12.8-3.2-5.7-2.4-2.8-3.8-3.1-4.3-2.2-4.3-1.2-7.1-0.3-22.8 1.3-32.7-2.6-10 0.2-7.1 1.4-7.1 2.9-7.2 4.1-7.1 5.4-8.8 8.3-8.5 10-22.6 29.6-7.1 11.7-7.3 15.7-4.7 12.8-3.9 15.6-4.4 24.3-2.6 19.9-0.7 15.7 0.6 11.3 3.2 34.2 2 15.7 2.3 11.4 3.4 10 4.2 8.5 12.8 19.9 16.5 23.3 8.5 10.3 8.6 7.7 5.7 3.8 5.7 2.9 11.4 4.1 14.2 2.5 17.7 1z"/><path fill="#3c4f8a" d="M337.3 529.4l15.1 0.2 14.2-0.6 35.7-3.6 51.2-7.9 12.8-2.9 10-3.5 5.7-3.2 5.7-4.6 4.7-5.3 5.3-7.6 8.5-14.8 5.8-11.8 3.2-8.5 2.2-10 1.7-17.1 1.5-27 0.2-14.3-0.7-15.6-1.4-14.3-2.1-11.4-2.5-8.5-4.4-10-9.2-15.6-8.5-10.6-7.1-6.5-22.2-17.1-27.7-26.1-7.1-7.3-5.7-7.4-5.6-9.1-5.6-11.4-5.3-12.8-3.4-5.7-2.9-3-3.9-2.7-3.2-1.3-4.3-1-5.7-0.2-21.3 1.2-31.4-1.6-11.4 0.5-7.1 1.5-7.1 2.8-7.1 4.1-7.3 5.4-8.4 8.1-7.6 9-22.8 29.9-8.1 13-6.6 14.1-4.7 12.8-3.8 15.7-4.3 24.2-2.3 19.9-0.6 15.7 0.5 11.4 3 38.4 2 14.3 2.3 9.9 3.1 8.6 5.1 9.9 12.8 20 13.5 18.7 10 11.7 8.5 7.3 10 5.6 7.1 2.8 5.7 1.6 14.2 2.3 19.1 1.3z"/><path fill="#3b518b" d="M335.8 527.9l15.2 0.5 14.2-0.4 14.3-1 21.3-2.4 48.4-7.6 15.7-3.6 10-3.6 5.9-3.2 5.5-4.4 5.7-6.4 5.3-7.7 7.5-12.9 5.7-11.4 3.1-8.5 2.3-10 1.9-18.5 1.3-24.2 0.2-15.7-0.6-15.6-1.5-14.3-2.1-11.4-2.6-8.5-4.3-10-8.3-14.2-4.1-5.7-5.3-5.8-7.1-6.3-16.6-12.1-6.9-5.7-24.9-24.1-7.1-7.4-5.7-7.3-6.1-9.6-5.2-10-6.9-15.7-2.6-4.2-2.5-2.9-3.8-2.7-2.8-1.3-4.3-1-7.1-0.3-21.4 1.1-29.9-0.9-9.9 0.7-7.2 1.6-7.1 2.7-7.1 4.1-7.1 5.3-7.2 6.9-6.8 8-25 32.8-7.9 12.8-6.8 14.2-4.1 11.4-3.7 15.7-3.6 19.9-2.5 20-0.8 17.1 0.4 14.2 2.2 34.2 1.6 14.2 2.3 11.4 2.8 8.6 4.8 9.9 10.5 17.1 13.9 19.5 11.1 13.3 8.8 7.5 10 5.7 5.7 2.2 7.1 2.1 12.8 2.3 19 1.5z"/><path fill="#3a538b" d="M333.2 526.5l14.9 0.7 15.7-0.1 15.7-1.1 18.5-1.9 27-4 22.8-4.1 15.7-3.7 10-3.6 6.3-3.6 5.4-4.2 5.3-6 5.7-8 7.8-13.1 5-10 3.2-8.5 2.3-10 1.9-17.1 1.3-21.3 0.3-17.1-0.6-17.1-1.4-14.2-2.1-11.4-2.9-10-4.2-10-7.7-13.3-4.3-5.7-4.3-4.8-7.1-6.4-17.4-12.5-8.8-7.1-29.3-29.6-6.9-8.9-6.3-9.9-5.3-10-6.4-14.2-2.5-4.3-2.5-2.9-2.9-2.2-2.8-1.5-4.3-1.2-7.1-0.4-21.4 1.2-25.6-0.6-11.4 0.7-7.1 1.5-7.1 2.5-7.2 3.8-6.6 4.8-7.6 7.1-6.1 7.1-26.3 34.2-7.5 11.6-6.3 12.6-4.4 11.4-3.8 14.2-3.6 18.6-2.7 19.9-1.2 18.5 0.1 15.7 1.6 31.3 1.4 15.7 1.9 11.4 2.9 9.9 4.5 10 9.3 15.7 13.1 18.9 11.4 13.8 8.6 7.8 9.9 6 11.4 4.3 12.9 2.7 19.2 2z"/><path fill="#39558c" d="M330.3 525.1l16.4 1 15.7 0 15.6-0.9 18.6-1.8 22.7-3.4 24.3-4.2 17-4.1 10.6-3.7 6.5-3.4 5.7-4.4 5.7-6.1 5.7-7.7 7.1-11.6 5.7-11 3.2-8.5 2.4-10 2-17.1 1.2-19.9 0.3-18.5-0.6-17.1-1.2-12.8-2.3-12.8-2.9-10-4.2-10-7.8-13.2-4.3-5.6-4.3-4.6-7.1-6.1-18.5-13-7.3-5.9-8.4-8-18.5-19.5-7.1-8.7-7.1-10.8-6.4-11.4-6.4-13.6-2.9-5-2.8-3.2-2.9-2.1-5.7-2.1-5.7-0.5-21.3 1.1-25.7-0.3-11.4 0.9-7.1 1.5-7.1 2.5-7 3.7-5.9 4.3-6.2 5.7-6.6 7.5-14.7 19.6-12.6 15.6-7.5 11.4-6.6 12.8-4.5 11.4-3.4 12.8-3.5 17.1-3 21.4-1.2 17.1-0.1 15.6 1.1 28.5 1.3 17.1 1.9 12.8 2.6 10 4.2 10 8.9 15.6 11.7 17.1 11.2 14 5.7 5.8 4.3 3.6 9.9 6.1 10 3.8 12.8 3 17.8 2.2z"/><path fill="#39568c" d="M348.3 525.1l14.1 0.1 15.6-0.8 17.1-1.7 17.1-2.4 24.2-4.2 14.3-3 14.2-4.2 8.7-3.8 7-4.6 6.8-6.7 6.5-8.6 7.9-12.8 5-10 3.2-8.5 2-8.6 1.6-11.4 1.3-17.1 0.6-18.5-0.1-17.1-0.9-14.2-1.8-12.8-2.5-11.4-3.4-10-4.1-8.5-7.3-11.4-7.7-8.7-7.1-6-18-12.4-7.3-5.7-8.9-8.3-12.8-13.8-9.2-10.6-7.1-10-8.5-14.2-8-15.7-2.8-4.7-2.9-3.1-2.8-2-2.9-1.2-4.2-0.9-5.7-0.2-18.5 1.1-24.3-0.1-12.8 1.2-8.5 2.2-7.1 3.1-5.7 3.5-6.7 5.4-9.1 9.9-15.2 20-13.8 17.1-5.8 8.5-5.6 10-5.5 12.8-4.2 14.2-3.4 17.1-3 21.4-1.5 17.1-0.2 17.1 1.2 32.7 2 20 2.1 9.9 3.4 10 4.8 10 7.7 12.8 10 14.4 10.4 12.6 8.2 8 8.5 5.8 11.4 4.9 12.8 3.3 18.5 2.5 18.7 1.2z"/><path fill="#38598c" d="M339.7 523.7l14.1 0.6 14.3-0.2 17.1-1.2 15.6-1.7 25.7-4.2 18.5-3.7 15.6-4.3 10-3.9 7-4.2 5.8-5 6.7-7.8 6.8-10 5.8-10 4.6-10 2.6-8.5 1.9-10 1.5-14.2 1-19.9 0.1-18.6-0.7-15.6-1.5-12.8-2.5-12.9-3.1-9.9-4.5-10-7.3-11.6-8.5-9.5-7.4-6-22.6-15.6-8.2-7.1-7.4-7.8-14.2-16.2-7.2-9.3-10.3-16.6-9.6-17.6-2.8-4.4-2.9-3-2.8-1.8-5.7-1.7-5.7-0.3-17.1 1-24.2 0.1-11.4 1-7.1 1.6-7.2 2.6-7 4-5.8 4.6-10 10.5-15.8 20.5-13 15.7-6.2 8.5-5 8.6-5.5 11.6-3.8 11.1-3.9 17.1-3.2 18.5-2.1 18.6-0.9 17.1 0.4 27 1.2 21.4 1.8 14.2 2.3 10 3.8 10 5.1 9.9 9.7 15.7 10.9 14.5 10 10.9 8.5 6.7 10 5 11.4 3.7 14.3 2.7 20 2.1z"/><path fill="#375b8d" d="M334.2 522.2l15.4 1 14.2 0.2 15.7-0.8 17.1-1.7 24.2-3.7 21.3-4.2 14.3-3.8 11.4-4.3 7.3-4 6.9-5.7 6.4-7.1 6.1-8.6 6.9-11.4 4.1-8.5 2.9-8.6 2.1-9.9 1.6-14.3 1-18.5 0.2-19.9-0.6-15.7-1.6-14.2-2.5-12.9-3.2-9.9-3.8-8.6-7.1-11.4-8.2-9.4-8.6-6.9-23.8-16.4-6.6-5.7-6.6-6.8-14.2-16.6-7.2-9.3-24.2-39.2-4.2-3.8-5.7-2-7.2-0.4-15.6 0.7-20 0.3-14.2 1.3-7.6 1.7-6.6 2.6-5.7 3.2-5.7 4.3-10 10.4-17.7 22.3-12 14.2-5.9 7.9-4.3 6.9-5.4 10.8-4.2 11.4-4 15.7-3.3 17.1-2.4 18.5-1.4 19.9-0.1 17.1 0.9 25.7 1.4 15.6 2 11.4 3.1 10 4.5 9.9 8.2 14.3 9.9 14.2 10.8 12.7 8.5 7.6 10 5.8 11.4 4.2 14.2 3.2 17.4 2.1z"/><path fill="#365d8d" d="M346.9 522.2l14.1 0.4 15.6-0.6 17.1-1.5 14.2-2 22.8-4 15.7-3.5 12.8-3.9 11-4.8 7.5-5.1 6.6-6.3 6.8-8.5 7.4-11.4 4.5-8.6 3.4-8.5 2.3-8.6 1.7-11.4 1.3-15.6 0.5-18.5-0.1-18.6-1-14.2-1.6-11.4-2.5-11.4-3.3-10-4.2-8.5-6.4-10-8.2-9-8.6-6.7-22.8-15.5-11.4-10.2-11.4-13.1-10.8-13.8-24.8-38.7-2.8-3.2-2.9-2-2.8-1.2-4.3-0.9-38.4 0.8-8.6 0.7-7.1 1.1-7.6 2.1-6.6 2.9-6.6 4.2-6.3 5.5-8.5 9.4-28.8 34.9-6.2 8.6-5.7 10-5.6 12.8-4.3 14.2-4 18.5-2.8 20-1.4 18.5-0.5 21.3 0.9 24.3 1.8 18.5 1.9 9.9 3.2 10 5.3 11.4 6.6 11.4 8.9 12.8 9.5 11.4 8.4 7.9 8.5 5.6 11.4 4.8 12.8 3.3 15.7 2.4 18.7 1.6z"/><path fill="#34608d" d="M339 520.8l14.8 0.9 14.3-0.1 17.1-1 14.2-1.6 25.6-4.3 17.1-3.5 12.8-3.7 11.4-4.6 7.2-4.1 7.1-5.9 7.1-8.1 6.8-9.6 5.9-9.9 3.9-8.6 2.7-8.5 2.1-11.4 1.4-15.7 0.7-18.5-0.1-18.5-0.9-15.7-1.7-12.8-2.2-10-3.2-9.9-4.1-8.6-7-10.8-8.6-9.2-8.5-6.6-22-14.7-6.5-5.3-5.7-5.5-8.5-9.8-12.8-16.4-17.1-26.6-7.2-10.2-2.8-3.3-2.9-2.3-2.8-1.5-4.3-1.1-7.1-0.4-28.5 0.9-8.5 0.7-7.2 1.1-7.1 1.9-7.1 2.9-6.2 3.7-6.6 5.5-10 10.8-28.2 33.6-6 8-4.7 7.6-6.1 12.8-4.4 12.9-4.1 17.1-2.9 17-1.9 18.6-0.8 19.9 0.2 22.8 1.2 19.9 1.8 12.8 2.3 10 3.7 10 5.8 11.4 8.9 14.2 9.6 12.3 8.5 9 8.6 6.5 9.9 4.9 11.4 3.7 14.3 2.8 17.9 2.1z"/><path fill="#33638d" d="M342.4 519.4l12.9 0.7 14.2-0.1 17.1-1 14.2-1.7 22.8-3.9 17.1-3.6 12.8-3.9 11.4-4.8 7.6-4.5 6.7-5.7 7.6-8.5 7-10 5.8-10 3.7-8.5 2.4-8.6 1.6-9.9 1.3-15.7 0.6-17.1-0.2-19.9-0.9-14.3-1.5-11.4-2.5-11.4-3.4-9.9-4.2-8.6-6.8-9.9-8.3-8.6-7.9-6.1-23.1-15.2-7.1-5.7-5.8-5.7-6.8-8.1-9.9-13.1-18.5-27.9-8.6-10.6-4.3-3.7-2.8-1.8-4.3-1.6-4.3-0.7-8.5-0.2-19.9 0.5-8.6 0.9-8.5 1.9-8.6 3-7.1 3.7-5.7 4.1-7.1 6.5-34.6 38.5-6.7 8.8-5.7 9.3-6.1 13.2-4.7 14.3-3.9 17.1-2.6 17.1-1.5 18.5-0.6 21.3 0.4 20 1.3 17.1 2 12.8 2.6 10 4.6 11.3 6 11.4 8.5 12.9 9.4 11.4 7.4 7.1 8.5 5.8 10 4.5 11.4 3.4 14.2 2.7 18.5 2.1z"/><path fill="#31678e" d="M344.8 518l13.3 0.6 14.2-0.2 17.1-1.1 12.9-1.6 22.7-4.1 15.7-3.5 12.8-4.1 10.3-4.6 8.2-5.2 7-6.1 7.4-8.6 6.9-10 4.8-8.5 3.7-8.5 2.3-8.6 1.6-11.4 1.1-14.2 0.4-17.1-0.3-20-1-14.2-1.6-11.4-2.4-10-3-8.5-4.2-8.5-7-10.1-8.3-8.5-8.8-6.6-22.8-15-6.8-5.4-5.8-5.7-6-7.1-11.3-15.4-15.6-23.7-7.2-8.6-4.2-3.7-4.3-2.6-4.3-1.7-5.7-1.1-14.2-0.4-12.8 0.7-10 1.8-8.6 2.9-8.5 4.2-7.1 4.8-8.6 7.3-11.4 11.2-18.5 19.5-6.7 7.6-6.3 8.6-5.8 9.9-5.4 12.3-4.7 14.8-3.5 15.6-2.4 17.1-1.4 18.6-0.5 21.3 0.5 18.5 1.6 17.1 2.4 12.8 3.2 11.4 4.9 11.4 5.6 10 7.1 10.4 8.6 10.2 7.1 6.6 8.5 5.7 10 4.4 11.4 3.3 15.7 2.9 18 2.1z"/><path fill="#306a8e" d="M346.3 516.5l13.2 0.6 14.3-0.2 15.6-1 12.9-1.7 22.7-4.1 15.7-3.6 11.4-3.8 10.3-4.7 8.2-5.2 7.1-6.3 7.4-8.4 6.9-10 4.8-8.5 3.5-8.6 2.2-8.5 1.5-11.4 0.9-14.3 0.3-17-0.3-20-1.1-14.2-1.6-10-2.5-10-3.1-8.5-4.5-8.5-6.1-8.6-8.5-8.5-8.3-6.3-23.1-15.1-7.2-5.7-5.3-5.1-10-12.4-21.3-31.7-7.2-8.4-4.2-3.5-4.3-2.4-5.7-2-5.7-1-14.2-0.2-11.4 1.2-10 2.6-10 4.4-9.9 6.2-11.4 9-12.9 11.9-15.6 15.6-7.7 8.7-6.2 8.5-5 8.6-4.7 9.9-4 11.4-3.5 12.9-2.4 12.8-1.8 14.2-1.3 18.5-0.3 20 0.6 18.5 1.5 14.2 2.4 12.8 3.5 12.9 4.8 11.3 5.7 10 7 10 8.5 9.6 7.1 6.2 8.6 5.2 10 4 11.4 3.1 15.6 2.8 16.7 1.8z"/><path fill="#2e6e8e" d="M347.3 515.1l12.2 0.6 14.3-0.2 15.6-1.1 12.9-1.6 21.3-3.9 15.7-3.6 11.4-3.8 9.9-4.5 8.6-5.5 7.1-6.2 7.1-8.1 6.5-9.1 4.9-8.5 3.6-8.6 2.2-8.5 1.5-11.4 0.9-14.3 0.3-14.2-0.3-21.4-1-14.2-1.6-10-2.4-9.9-3.2-8.6-4.4-8.5-7-9.5-7.7-7.6-7.9-6-25.5-16.8-5.9-4.7-5.4-5.3-8-9.9-22.1-32.8-5.8-6.6-4.2-3.5-4.3-2.4-5.7-1.9-5.7-0.9-11.4-0.1-11.4 1.3-10 2.8-9.9 4.7-11.4 7.3-12.8 10-14.3 12.7-14.2 14-7.1 8.3-5.7 8.2-4.9 8.8-4.4 9.9-4 11.4-2.9 11.4-2.1 11.4-1.7 14.3-1.2 17-0.3 18.6 0.6 17.1 1.6 15.6 2.4 12.8 3.9 14.3 4 9.9 5.5 10 7.1 10 7.8 8.7 7.1 6 8.5 5 10 4 11.4 3.1 15.6 2.7 16.3 1.8z"/><path fill="#2c718e" d="M347.8 513.7l13.2 0.6 12.8-0.2 15.6-1.1 12.9-1.6 19.9-3.7 15.7-3.6 11.3-3.7 10-4.6 8.6-5.4 7.1-6.2 7.1-8 6.7-9.5 4.8-8.6 3.4-8.5 1.7-7.1 1.5-11.4 1-14.3 0.2-14.2-0.3-21.4-1-14.2-1.6-10-2.6-9.9-3.3-8.6-3.9-7.1-6.6-9.1-8.5-8.4-8.6-6.4-24.2-15.9-5.7-4.5-5.7-5.3-7.1-8.7-21.4-31.7-5.8-6.8-4.1-3.5-4.3-2.4-5.7-1.9-5.7-0.9-10 0-11.4 1.6-8.5 2.7-9.2 4.4-12.2 7.9-14.2 10.9-15.7 13.5-12.8 12.4-6.7 8-5.9 8.5-4.7 8.5-4.3 10-3.9 11.4-2.5 10-2 11.4-1.7 14.2-1.2 17.1-0.2 17.1 0.7 17.1 1.5 14.2 2.8 14.3 4.3 15.6 3.5 8.6 5.6 9.9 6.3 8.6 7.9 8.5 7.1 5.7 7.6 4.3 10 3.9 11.4 3 15.7 2.8 15.3 1.7z"/><path fill="#2b748e" d="M348 512.3l13 0.6 12.8-0.2 15.6-1.1 12.9-1.7 19.9-3.6 15.7-3.7 9.9-3.3 10-4.6 8.2-5.2 7.5-6.3 7.1-8 6.1-8.5 4.7-8.6 3.4-8.3 2-8.7 1.4-10 0.9-12.8 0.3-14.3-0.4-22.8-0.9-12.8-1.5-9.9-2.5-10-3.4-8.6-3.7-7.1-6.4-8.8-8.6-8.5-9.2-6.9-23.7-15.7-6.9-5.4-4.8-4.5-7-8.6-21-30.8-5.7-6.5-2.8-2.4-4.3-2.4-4.3-1.6-5.7-1.1-10-0.1-9.9 1.5-8.6 2.7-8.5 4.1-10.2 6.7-18.3 13.7-15.7 13.2-11.4 10.8-6.8 7.9-5.1 7.1-5.1 9-4.4 9.5-4 11.4-2.6 10-2.1 11.4-1.7 12.8-1.1 15.7-0.4 17.1 0.6 17.1 1.5 14.2 2.6 14.2 5 18.5 3.4 8.6 4.6 8 6.6 9.1 6.6 7.1 7.2 5.7 8.1 4.5 9.9 3.9 11.4 2.9 14.3 2.6 15.5 1.8z"/><path fill="#2a788e" d="M348 510.8l13 0.7 12.8-0.2 14.2-0.9 14.3-1.9 18.5-3.4 15.6-3.7 10.4-3.4 9.6-4.4 8.5-5.4 6.9-5.8 6.6-7.2 6.2-8.5 4.8-8.6 2.9-7.1 2.2-8.5 1.7-11.4 0.9-12.8 0.3-14.3-0.3-22.8-1-12.8-1.6-9.9-2.2-8.6-3.2-8.4-3.8-7.3-6.1-8.6-8.6-8.5-9.3-7.1-23.6-15.6-7-5.4-4.9-4.6-6.5-7.6-10.9-16.6-9-12.5-6.3-7.4-3.7-2.9-4.2-2.3-4.3-1.4-4.3-0.7-8.5-0.2-8.6 1.3-8.5 2.7-8.6 4.2-9.9 6.7-22.8 17.4-14.3 11.8-9.9 9.5-6.8 8-4.9 7.1-4.8 8.5-4.5 10-3.5 10-2.6 9.9-2.1 11.4-1.4 11.4-1.2 15.7-0.4 15.7 0.5 15.6 1.4 14.3 2.8 15.6 4.5 17.1 3 8.6 4.5 8.5 6 8.6 6.6 7.1 7.1 5.7 7.5 4.2 9.6 3.9 11.4 3.1 14.3 2.6 15.5 1.8z"/><path fill="#297b8e" d="M348.1 509.4l12.9 0.7 12.8-0.2 14.2-1 14.3-1.8 18.1-3.4 14.6-3.4 11.2-3.7 9.1-4.3 8.2-5.1 7.1-6 6.8-7.4 6-8.5 4.5-8.6 2.7-7.1 2.1-8.5 1.6-11.4 0.8-11.4 0.3-14.3-0.3-21.3-0.8-12.8-1.5-10-2.2-8.6-3.2-8.5-4-7.5-7-9.6-8.6-8.3-8.6-6.4-22.8-15.2-7.1-5.4-5-4.6-7.3-8.5-9.2-14.3-5.5-7.7-10-12-2.9-2.4-4.2-2.4-4.3-1.5-4.3-0.7-7.1-0.2-8.5 1.2-8.6 2.9-7.1 3.6-9.3 6.4-27.7 21.4-12.9 10.7-8.5 8.3-5.7 6.7-5.7 8.3-4.8 8.7-3.7 8.6-3.1 8.5-2.7 10-2.2 11.4-1.6 12.8-1.2 15.6-0.2 15.7 0.6 14.3 1.5 14.2 2.9 15.7 4.5 17 3 8.6 4.6 8.5 5.3 7.2 6.7 7.1 7.5 5.6 7.1 3.7 9.2 3.5 10.8 2.8 14.2 2.6 14.2 1.7z"/><path fill="#277f8e" d="M348.2 508l12.8 0.7 12.8-0.2 14.2-1 14.3-1.9 17.8-3.3 14.9-3.6 10-3.3 9.6-4.5 7.5-4.7 7.1-5.9 6-6.5 6.1-8.5 3.8-7.2 3.2-8.5 2.2-8.6 1.7-11.3 1-12.9 0.3-12.8-0.3-21.3-0.9-12.8-1.6-10-2.3-8.6-3.4-8.5-3.8-7.1-6.3-8.6-8.8-8.5-8.3-6.3-24.6-16.5-11-9.2-6.7-7.9-13.2-19.9-7.2-8.7-4.2-4.3-2.9-2.2-4.3-2.3-7.1-1.8-7.1-0.2-8.5 1.5-7.2 2.7-7.1 3.8-8.1 5.8-34.6 27.1-8.6 7.3-6.9 6.9-5.9 7.1-4.8 7.1-4.6 8.6-3.8 8.5-3 8.5-2.7 10-2.2 11.4-1.5 11.4-1.2 15.7-0.2 14.2 0.6 14.3 1.5 14.2 2.6 14.2 4.3 17.1 3.3 10 4.5 8.5 5.2 7.2 6.3 6.3 6.8 5.1 7.4 3.9 8.6 3.2 11.4 3 14.2 2.5 12.9 1.6z"/><path fill="#26828e" d="M348.4 506.6l12.6 0.6 14.2-0.2 14.2-1.1 14.3-2 17.1-3.3 14.2-3.4 10-3.5 8.9-4.2 8.2-5.4 6.9-6 6.2-7.1 4.7-7.2 3.5-7.1 3.5-9.9 2.2-9.9 1.3-10.1 0.9-12.8 0.2-12.8-0.3-20-0.9-11.3-1.7-10-2.4-8.6-2.8-7.1-4.2-7.8-7.1-9.3-7.4-7.1-9.4-7.1-23.3-15.7-7-5.4-4.9-4.5-6.5-7.6-12.8-19.3-9.9-10.9-2.9-2.3-4.3-2.5-4.2-1.4-4.3-0.7-5.7 0-7.1 1.3-7.1 2.8-6.4 3.5-6.5 4.7-38.4 30.2-7.5 6.4-6.8 6.9-5.7 7.2-4.7 7.3-4.4 8.5-3.6 8.6-2.9 8.5-2.6 10-1.8 10-1.5 11.4-1 14.2-0.2 14.2 0.7 14.3 1.4 12.8 2.8 15.7 4 15.6 3.8 11.4 3.7 7.1 5.4 7.2 5.7 5.7 6.6 4.7 7.2 3.7 8.5 3.2 10 2.6 14.2 2.7 13.1 1.6z"/><path fill="#25858e" d="M348.9 505.1l13.5 0.7 12.8-0.3 14.2-1.2 14.3-1.9 17.1-3.3 14.2-3.6 9.2-3.2 8.8-4.2 6.7-4.3 6.8-5.7 6.4-7.1 4.7-7.2 4-8.5 3-8.5 2.1-8.6 1.6-11.4 0.9-11.4 0.3-14.2-0.3-20-0.9-11.3-1.5-8.6-2.3-8.5-3.4-8.6-4-7.1-6.5-8.5-8.5-8.2-8.6-6.5-22.8-15.4-11.9-9.8-7.4-8.6-11.2-17.1-9.3-9.9-7.2-4.9-4.2-1.5-4.3-0.8-5.7 0.1-5.7 1.1-5.7 2.1-7.1 4-45.6 35.4-7.1 6.2-6.5 6.7-5.7 7.1-4.5 7.1-3.7 7.2-3.8 8.7-2.9 8.3-2.6 10-2 10-1.4 11.4-1 14.2-0.2 14.3 0.8 14.2 1.4 12.8 2.6 14.3 3.6 14.2 4.2 12.8 3.6 7.1 4.1 5.7 5.6 5.7 7 5 7.1 3.7 8.5 3.2 10 2.5 14.2 2.7 12.2 1.4z"/><path fill="#23898e" d="M349.9 503.7l12.5 0.6 12.8-0.3 14.2-1.3 13.5-1.8 15.1-2.9 15.6-3.7 9.7-3.4 8.8-4.3 7.1-4.6 6.2-5.3 5.1-5.7 4.7-7.2 4-8.5 3.5-10 2.3-9.9 1.5-11.4 0.8-12.8 0.2-14.3-0.3-15.7-0.9-11.3-1.6-8.6-2.4-8.5-2.9-7.2-3.8-7.1-6.4-8.5-8.6-8.3-8.5-6.5-24.1-16.6-11.5-9.5-6.6-7.5-10.5-16-7.1-7.7-4.3-3.5-4.3-2.7-4.2-1.6-4.3-0.8-5.7 0.1-5.7 1.3-5.7 2.4-5.7 3.5-45.6 35.3-7.1 6.2-5.9 6.2-5.5 7.1-4.5 7.2-4.3 8.5-3.5 8.6-2.8 8.5-2.5 10-3 19.9-0.9 12.8 0 14.3 0.8 14.2 1.5 12.8 2.6 14.3 3.2 12.8 3.8 11.4 4.1 8.5 4.1 5.7 5.7 5.5 5.7 4 7.1 3.7 8.6 3.1 9.9 2.6 14 2.5 12 1.4z"/><path fill="#228d8d" d="M351.5 502.3l12.3 0.5 12.8-0.5 14.5-1.4 15.4-2.4 16.6-3.3 11-2.9 9.5-3.4 8.5-4.3 7.1-4.9 5.7-5.3 4.3-5.1 4.3-7 3.9-8.4 3.3-10 2.3-10 1.5-11.4 0.8-12.8 0.2-15.6-0.3-14.3-1-9.9-1.5-8.6-2.6-8.5-3-7.2-4-7.1-6.6-8.5-7.4-7.1-8.4-6.5-24.2-16.7-11.6-9.6-7.5-8.5-9.4-14.3-5.7-6.1-4.3-3.4-4.3-2.5-4.2-1.7-4.3-0.7-5.7 0.1-4.3 1-5.7 2.5-5.7 3.5-18.3 14.4-25.8 19.4-7.2 6.3-6.8 7.1-4.5 5.9-4.4 6.9-4.4 8.6-3.6 8.5-2.9 8.5-2.5 10-3 19.9-0.9 12.9 0 14.2 0.9 14.2 1.8 14.3 2.7 14.2 3.4 12.8 3.7 10 4.4 8.6 4.7 5.7 4.9 4.2 6.6 4.1 6.6 3.1 8.7 2.8 10.3 2.4 11.4 2 11.9 1.3z"/><path fill="#21908d" d="M354.7 500.9l11.9 0.2 11.4-0.6 14.3-1.6 15.6-2.5 14.3-2.9 12.8-3.4 9.2-3.5 7.9-4.2 5.9-4.3 5.9-5.7 5.2-7.1 3.9-7.2 3.5-8.5 3-10 1.9-9.9 1.3-11.4 0.7-12.8 0.1-14.3-0.3-11.4-1-9.9-1.6-8.6-2.7-8.5-3.1-7.2-4.1-7.1-6.8-8.5-7.5-7-7.7-5.8-22.7-15.7-12.2-10-6.8-7.1-10.4-15.1-5.7-5.9-7.2-4.6-4.2-1.5-4.3-0.8-4.3 0.2-4.3 0.9-5.6 2.4-4.9 3-43.8 32.8-8.2 7.1-6.6 7.1-5.2 7.2-4.3 7.1-4.1 8.5-3.4 8.6-2.7 8.5-2 8.6-2.9 19.9-0.7 12.8 0.2 14.3 1 14.2 1.8 14.2 2.6 12.9 3.4 12.1 3.6 9.2 4.6 8.6 3.3 4.2 5.6 4.9 5.9 3.7 6.9 3.1 8.6 2.7 11.3 2.6 11.4 1.8 12.3 1.2z"/><path fill="#20938c" d="M343 498l12.3 1.1 11.3 0.2 12.9-0.9 14.2-1.7 17.1-2.9 15.7-3.4 9.9-2.9 9-3.7 7.2-4.3 5.3-4.3 5.2-5.7 4.7-6.6 4-7.6 3.3-8.5 2.3-8.6 1.9-10 1.5-12.8 0.7-12.8 0-15.7-0.8-12.8-1.3-8.5-2.2-8.6-3.3-8.5-3.8-7.1-6.6-8.9-8.5-8.2-7.4-5.7-24.4-17.1-12.1-10-6.7-7.1-9.2-12.8-4.3-4.6-5.7-3.9-7.2-2.4-4.2-0.3-4.3 0.6-4.3 1.4-5.7 3-41.3 29.7-7.9 6.4-6.3 6-4.8 5.4-5 7.1-4.1 7.1-3.5 7.1-3.4 8.6-2.7 8.5-3.5 17.1-1.4 12.8-0.6 14.3 0.3 14.2 1.2 14.3 1.8 12.8 2.8 12.8 3.5 11.4 3.7 8.5 4.3 7.2 3.5 4.2 5 4.3 4.7 2.9 6.7 3 8.3 2.7 11.7 2.5 10.5 1.7z"/><path fill="#1f968b" d="M347.3 496.6l10.8 0.7 10-0.1 9.9-0.8 14.3-2 34.2-6.6 9.9-2.9 9.2-4 6.5-4.2 5.7-5 4.4-5 4.7-7.1 3.5-7.1 3.1-8.6 2.5-10 1.7-9.9 1.3-12.8 0.6-12.9-0.1-12.8-0.8-11.4-1.4-8.5-2.2-8.6-3.4-8.5-3.9-7.1-6.6-8.6-7.7-7.3-8.5-6.6-22.8-16-12.2-10-7-7.1-9.3-11.9-3.7-3.7-6.3-4-5.7-1.5-4.2-0.2-4.3 0.8-4.3 1.5-5.7 3.2-38.4 26.6-8.6 6.9-7.1 6.9-4.5 5.3-4.9 7.2-4 7.1-3.9 8.5-5.3 15.7-1.9 8.5-1.6 10-1.2 12.8-0.3 12.8 0.5 15.7 1.4 14.2 2 12.9 2.7 11.4 2.9 8.5 3.9 8.4 4.2 6.6 4.4 4.9 5.6 4.3 5.3 2.9 7.4 2.8 7.2 2 11.5 2.3 10.5 1.4z"/><path fill="#1f9a8a" d="M342 493.8l10.4 1 10 0.2 9.9-0.6 11.4-1.4 20-3.4 21.3-4.5 10-2.8 8.6-3.6 5.6-3.4 5.7-4.5 5.1-5.5 4-5.7 3.8-7.1 2.8-7.2 2.4-8.5 1.9-9.5 1.6-11.9 0.9-12.8 0.2-14.2-0.6-11.4-1.2-8.6-2-8.5-3.1-8.6-3.6-7.1-6-8.5-8.5-8.6-9.1-7.1-22.7-16.1-10.2-8.1-7.7-7.1-10.6-12.1-3.9-3.6-4.7-2.7-4.2-1.3-4.3-0.3-4.3 0.6-4.3 1.4-5.6 3-35.7 23.3-8.5 6.6-7 6.4-5.1 5.7-4.3 5.7-7.2 12.8-6.1 15.7-4 17.1-1.5 11.4-0.9 12.8 0 14.3 0.8 14.2 1.6 14.2 2.1 11.4 2.7 10 3.3 8.5 4 7.2 4.4 5.7 4.5 4.2 5.6 3.8 7.1 3.3 5.7 1.9 10 2.3 9.5 1.6z"/><path fill="#1f9e89" d="M354.1 492.3l9.7 0.1 11.4-0.9 12.8-1.8 16.1-3.1 19.3-4.2 10.2-2.8 7.4-2.9 6.8-3.9 5.7-4.5 4.3-4.5 4.3-5.9 3.6-6.9 2.8-7.1 2.4-8.5 2-10 1.5-11.4 0.9-11.4 0.4-11.4-0.4-10-1-9.9-1.8-8.6-2.3-7.1-3.1-7.1-4.2-7.1-5.6-7.2-6.6-6.3-8.2-6.5-20.3-14.4-10.9-8.4-9.7-8.5-12.2-12-5.7-3.6-5.7-1.4-4.2 0.1-5.7 1.4-11.4 5.9-20 12.3-9.9 6.6-9.8 7.8-7.3 7.1-4.7 5.7-3.9 5.7-3.9 7.1-3.9 8.6-3.1 8.5-2.4 8.6-3.2 18.5-0.9 12.8-0.2 12.8 0.7 15.7 1.4 14.2 1.6 10 2.5 10 3.1 8.5 3.7 7.1 4.2 5.7 4.7 4.6 5.7 4 5.7 2.7 7.1 2.5 10 2.3 10 1.6 10.2 0.8z"/><path fill="#1fa188" d="M348.8 489.5l9.3 0.4 10-0.3 9.9-1 11.4-1.9 17.1-3.5 21.4-5.2 8.5-2.8 7.2-3.3 5.6-3.8 4.8-4.3 4.7-5.7 3.5-5.6 2.7-6.1 2.7-8.2 2.1-8.5 1.9-11.4 1.5-12.8 0.5-11.4-0.1-10-0.9-10-1.5-8.5-2.6-8.6-3-7.1-4.1-7.1-6.8-8.6-9.4-8.5-33-24.2-22.8-19.3-4.2-2.8-5.7-1.9-4.3-0.2-5.7 1.1-5.7 2.2-7.1 3.7-15.7 9.1-10.4 6.7-9.4 7.1-7.2 6.7-5.4 6.1-4.1 5.7-6.9 12.8-5.7 15.7-3.6 17.1-1.3 11.4-0.6 12.8 0.1 14.2 1 15.7 1.3 11.4 2 10 2.5 8.5 3 7.1 3.4 5.7 4.3 5.2 4.3 3.8 5.9 3.8 6.4 2.9 7.6 2.3 10 2.1 10.6 1.3z"/><path fill="#20a486" d="M345.1 486.6l8.7 0.7 10 0 10-0.7 11.4-1.8 17.1-3.6 23.3-6 9.4-2.9 7.1-3.2 5.7-3.7 4.3-3.8 4.3-5 3.5-5.6 2.7-5.7 2.4-7.1 4.1-18.5 1.6-11.4 0.8-11.4 0.1-11.4-0.8-10-1.5-8.5-2.4-8.5-3-7.2-4-7.1-3.5-4.9-4.3-4.9-9.8-8.7-27.3-19.9-24.1-19.1-5.7-3.4-5.7-1.8-4.3-0.1-5.7 1-7.1 2.7-8.6 4.2-12.8 7.2-8.5 5.5-8.6 6.4-6.5 5.9-4.9 5.3-4.2 5.5-6.9 12-3.1 7.1-2.9 8.6-3.7 15.6-1.5 11.4-0.8 12.8-0.1 14.3 0.6 14.2 1 11.4 1.5 10 2.2 8.5 2.6 7.1 2.9 5.7 4.1 5.7 4.3 4.3 5.5 3.9 5.7 2.8 7.1 2.6 8.5 2 9.8 1.5z"/><path fill="#22a785" d="M342.3 483.8l10.1 1 10 0.1 9.9-0.7 10-1.5 12.8-2.6 14.3-3.7 19.9-5.7 10-3.8 5.7-3.4 4.2-3.4 4.3-4.6 3.2-4.5 3-5.7 2.4-6.2 4.2-16.6 1.8-11.3 1.2-11.4 0.3-11.4-0.6-10-1.2-8.5-2.2-8.6-3.3-8.5-3.9-7.2-3.5-4.9-4.2-5-11.4-10-45.6-34-7.1-4.3-5.7-1.9-4.3-0.5-5.7 0.7-7.1 2.2-7.1 3.2-10 5.2-10 6-8.5 6.1-6.9 5.9-9 10-7.1 11.4-5.9 14.2-4.1 15.7-1.7 11.4-0.9 11.4-0.3 12.8 0.2 15.6 0.8 12.9 1.3 9.9 1.8 8.6 2.4 7.1 2.7 5.7 3.9 5.7 4.1 4.3 4.5 3.4 5.7 3.2 5.6 2.3 8.6 2.4 8.4 1.5z"/><path fill="#25ab82" d="M353.9 482.4l8.5 0 9.9-0.7 10-1.5 10-2.2 12.8-3.4 25.4-7.9 7.2-2.9 5-2.8 5.1-4 4.2-4.5 3-4.3 2.8-5.5 2.7-7.3 2-7.2 3.8-19.9 1-10 0.3-9.9-0.5-8.6-1.1-8.5-2.1-8.6-2.6-7.1-3.5-7-3.8-5.8-6-7.1-8-7.1-40.6-30.3-5.7-4-5.7-3.1-4.3-1.7-4.2-0.9-5.7 0-5.7 1.1-7.1 2.5-8.6 4-10 5.5-8.3 5.5-7.3 5.7-6.1 5.7-8.2 10-3.4 5.6-3.5 7.2-2.8 7.1-2.6 8.5-3.3 17.1-1.1 11.4-0.5 12.8 0 15.7 0.7 14.2 0.8 8.6 1.6 8.5 2.1 7.2 2.5 5.6 3.6 5.7 3.8 4.3 5 4 5.7 3.2 7 2.8 7.2 1.9 8.6 1.5 10 0.9z"/><path fill="#28ae80" d="M348.5 479.5l9.6 0.5 8.5-0.3 10-1.1 10-1.9 20.3-5.7 25-8.6 7.4-3.4 4.3-2.8 4.2-3.8 3.5-4.2 3.5-5.7 2.4-5.7 2.3-7.1 3.9-17.1 1.4-10 0.7-10-0.1-8.5-0.8-8.6-1.7-8.5-2.2-7.1-3-7.1-4.2-7.2-4.3-5.7-5.5-5.7-14-11.3-34.6-25.2-7.1-3.7-7.1-2.2-4.3-0.3-5.7 0.6-7.1 2-7.1 3-8.6 4.3-8.5 5.1-7.1 5.1-7.2 6.1-8.5 9.6-3.7 5.5-3.1 5.7-5.6 14.3-3.7 15.6-1.3 10-0.9 12.8 0 31.3 0.6 10 1.1 8.6 1.7 7.1 2.1 5.7 2.8 5.4 3.4 4.5 4.4 4.3 5.1 3.4 5.6 2.8 7.2 2.4 7.1 1.6 8.9 1.2z"/><path fill="#2cb17e" d="M345.5 476.7l9.8 0.7 9.9-0.1 10-1 10-1.9 18.5-5.3 28.5-10.8 5.7-2.7 4.2-2.8 4.3-3.8 2.8-3.4 2.9-4.5 4.7-11.4 3.8-15.1 1.6-9.1 1-10 0.2-10-0.7-8.5-1.6-8.6-2.1-7.1-2.9-7.1-4.1-7.1-4.2-5.7-5.4-5.7-13.7-11.4-32.1-23.2-7.2-3.9-7.1-2.3-4.3-0.4-5.7 0.3-5.7 1.3-7.1 2.6-7.1 3.2-8.5 4.8-7.2 4.8-7 5.7-4.4 4.2-5 5.7-6.5 10-5.5 12.8-3.8 14.3-1.6 9.9-1.1 11.4-0.6 31.3 1.2 20 1.2 7.1 1.8 6.2 2.3 5.2 3.4 5.2 4.3 4.6 4 3 5 2.9 6.6 2.6 7.2 1.8 7.3 1.3z"/><path fill="#31b57b" d="M343.5 473.8l10.3 1.1 10 0 10-0.9 9.9-1.8 17.1-5 34.2-14.3 4.3-2.5 4.3-3.4 2.8-3.1 2.8-4 4.8-10.2 4.1-14.3 1.9-9.9 1.1-10 0.2-8.6-0.6-8.5-1.4-8.5-2-7.2-2.9-7.1-3.9-7.1-4.2-5.7-5.2-5.7-13.5-11.4-29.6-21.4-7.1-3.9-7.2-2.5-4.2-0.6-5.7 0.2-5.7 1-7.1 2.4-7.2 3.1-7.1 3.9-7.1 4.6-5.7 4.4-9 8.8-7.1 10-5.5 11.4-4.2 14.2-1.7 8.6-1.1 9.9-1 28.5 0.5 24.2 0.8 7.1 1.7 7.2 2.2 5.7 2.4 4.2 3.5 4.4 4.3 3.7 4.2 2.8 5.7 2.6 6.9 2.2 7 1.4z"/><path fill="#37b878" d="M355.2 472.4l8.6 0 10-0.9 8.5-1.5 10-2.7 11.4-4.3 15.6-7.6 12.9-5.3 5.7-3.2 3.8-3 2.7-2.8 3-4.3 2.3-4.3 4.7-12.8 3.5-15.7 1-8.5 0.3-7.1-0.4-8.6-1.1-7.1-1.7-7.1-2.6-7.1-2.8-5.7-4.2-6.5-5.3-6.4-7.5-7.1-24.2-18.3-10-6.9-5.7-3.4-5.7-2.5-5.7-1.4-4.3-0.3-5.7 0.4-5.7 1.2-7.1 2.6-7.1 3.3-7.1 4.2-7.1 5-5.5 4.7-4.5 4.6-4.3 5.3-6 10.1-5 12.8-3.2 14.2-1.9 20-0.5 35.6 1 14.2 1.2 5.7 1.9 5.7 3.1 5.7 3.6 4.3 4.4 3.7 4.3 2.6 5.7 2.4 7.1 2.1 7.1 1.3 8.5 0.7z"/><path fill="#3bbb75" d="M351.5 469.5l9.5 0.4 9.9-0.6 8.6-1.3 9.9-2.4 12.2-4.6 16.3-8.7 17.1-8 4.3-3.1 2.8-2.8 5-7.3 4.7-11.4 3.3-12.8 1.4-8.6 0.5-7.1-0.1-8.5-0.8-7.2-1.5-7.1-2.4-7.1-3.3-7.1-3.5-5.7-4.4-5.7-5.6-5.7-7.5-6.5-10.1-7.7-21.2-14.7-7.2-3.5-5.7-1.6-4.2-0.5-5.7 0.2-5.7 1.1-5.7 1.8-6.7 2.9-6.1 3.3-7.2 4.7-5.7 4.6-8.4 8.8-6.6 9.9-4.9 11.4-3.4 12.9-1.5 9.9-0.8 10-0.8 35.6 0.7 15.7 0.9 5.7 1.7 5.7 1.9 4.2 2.9 4.3 4.1 4.2 4.3 3 5.6 2.8 5.8 1.9 13.3 2.3z"/><path fill="#42be71" d="M350.1 466.7l9.4 0.6 10-0.4 10-1.4 9.9-2.5 11.4-4.6 17.1-9.9 15.2-7.4 6.2-4.8 2.8-3.3 2.9-4.4 4.2-9.5 3.6-12.2 1.4-8.6 0.6-7.1-0.1-8.5-0.8-7.2-1.6-7.1-1.8-5.7-3.2-7.1-3.5-5.7-4.3-5.7-5.4-5.7-15.6-12.8-20.5-14.2-7.1-3.7-5.7-1.8-4.3-0.7-5.7 0-5.7 0.9-5.7 1.7-11.4 5.2-11.4 7.8-8.5 8.3-6.8 9.3-4.8 10-3.8 12.8-1.6 8.6-1 9.9-1 32.8 0.4 19.9 0.7 5.7 1.4 5.7 1.7 4.3 2.6 4.3 3.6 4 4.1 3.1 4.5 2.4 5.7 2.2 11.9 2.5z"/><path fill="#48c16e" d="M350 463.8l9.5 0.8 10-0.3 10-1.4 9.9-2.6 10-4.2 17.1-10.5 14.2-7.4 4.3-2.8 2.9-2.6 4.6-6 4.8-10 3.4-11.3 1.3-7.2 0.6-7.1 0-7.1-0.7-7.1-1.4-7.1-2.3-7.2-2.6-5.7-3.5-5.8-4.2-5.6-5.3-5.7-6.3-5.7-9-7.1-10.8-7.7-8.5-5.5-7.1-3.6-5.7-1.8-4.3-0.6-5.7 0-10 2.2-11.4 5.1-9.9 6.7-8.6 8.1-6.3 8.5-5 10-3.9 12.8-2.2 14.2-0.9 18.6-0.2 32.7 0.7 8.6 1.2 5.7 1.5 4.2 2.3 4.3 3.6 4.3 3.5 2.8 4.3 2.5 4.3 1.8 5.7 1.7 6.1 1.1z"/><path fill="#50c46a" d="M350.7 461l13.1 0.9 12.8-1.1 12.8-3.2 5.7-2.3 5.4-2.8 16-10.6 14.2-7.9 5.7-4.6 4.3-5.4 2.9-5.1 2.8-7 2.3-7.9 1.2-7.1 0.6-7.1-0.1-7.1-0.9-7.2-1.7-7.1-2-5.7-2.7-5.7-3.5-5.7-4.4-5.7-5.5-5.7-6.5-5.7-9.1-7.1-10.4-7.2-7.1-4.3-5.7-2.7-5.7-1.8-4.3-0.6-5.7 0.1-10 2.2-9.9 4.5-10 6.8-7.6 7.3-6.3 8.5-4.8 10-3.5 11.4-2.1 14.2-0.8 17.1 0 32.8 0.7 8.5 1.1 5.7 1.6 4.3 2.4 4.3 2.4 2.8 3.3 2.9 3.6 2.3 4.4 1.9 11 2.9z"/><path fill="#58c765" d="M352.3 458.1l11.5 1 12.8-1 7.1-1.5 5.7-1.8 10-4.8 15.7-10.7 14.2-8.5 5.7-4.7 4-5 3.1-5.5 2.4-5.9 2.1-7.1 1.2-7.1 0.5-7.1-0.2-7.2-0.8-5.7-3.3-11.3-2.6-5.7-3.5-5.9-4.3-5.5-5.4-5.7-6.4-5.7-9.1-7.1-9-6.3-7.1-4.2-5.7-2.7-5.7-1.7-8.6-0.6-4.3 0.5-5.7 1.4-9.9 4.4-9.3 6.3-7.3 7.1-6.2 8.6-4.3 8.8-3.4 11.1-2 12.8-0.8 15.7 0.2 34.2 0.6 7.1 1.1 6.2 1.5 4.2 2 3.8 2.2 2.9 3.1 2.8 4.1 2.6 3.6 1.7 10.5 2.8z"/><path fill="#5ec962" d="M354.8 455.3l11.8 0.9 11.4-1.1 10.2-2.6 9.8-4.7 17.1-12 12.8-7.9 5.7-4.8 3.8-4.8 2.5-4.3 2.5-5.7 2.1-7.1 1-5.7 0.6-7.1-0.3-7.2-0.8-5.7-1.4-5.6-2-5.7-2.8-5.7-3.5-5.7-4.6-5.7-5.6-5.7-14.3-11.7-14.2-9.1-5.7-2.6-5.7-1.7-8.6-0.6-8.5 1.6-9.8 4.1-8.7 6-7.1 6.8-6.1 8.6-4.6 10-2.8 9.9-1.8 12.8-0.5 15.7 0.5 31.3 0.6 7.2 1.2 5.7 3 7.1 2.1 2.8 2.9 2.9 4 2.6 3.5 1.7 10.3 2.8z"/><path fill="#67cc5c" d="M358.1 452.5l10 0.7 11.4-1.3 9.9-2.8 8.6-4.4 15.6-11.2 12.9-8.4 5.7-4.9 3.7-4.8 2.5-4.2 2.4-5.7 1.9-7.2 0.9-5.7 0.2-7.1-1.4-11.4-1.6-5.7-2.3-5.7-6-9.9-9-10-14.1-11.5-12.8-8.1-5.7-2.6-5.7-1.6-8.6-0.6-8.5 1.7-8.6 3.7-8.5 5.9-7.1 7.4-4.9 7.1-4.4 10-2.7 10-1.8 14.2-0.1 17.1 0.9 25.6 0.8 7.1 1.3 5.7 1.7 4.3 1.7 2.9 4.6 4.7 7.1 4 10 2.7z"/><path fill="#6ece58" d="M362.6 449.6l9.7 0.3 11.4-1.9 8.6-3.2 8.5-5.1 24.2-17.2 5.7-5 3.8-4.9 2.4-4.3 2.3-5.7 1.7-7.1 0.6-5.7 0-5.7-0.6-5.7-1.2-5.7-3.8-10-6.3-9.9-9.3-10-13.8-10.9-7.1-4.5-5.7-2.9-5.7-2.1-4.3-1-7.1-0.2-8.5 1.7-8.6 4.1-7.8 5.8-6.3 7.1-4.5 7.2-4 9.9-2.4 10-1.2 12.8 0.1 18.5 1.3 21.4 2.1 11.4 3.4 7.1 2.3 2.9 2.8 2.3 7.1 3.8 4.3 1.3 5.9 1.1z"/><path fill="#77d153" d="M360 445.3l9.5 1.3 10-0.7 8.5-2.3 8.6-4.2 25.6-18.2 5.7-4.8 3.3-3.8 2.8-4.3 2.6-5.7 1.6-5.7 1.1-10-0.3-5.7-1-5.7-3.3-9.9-5.8-10-3.9-4.8-5-5.2-12.1-9.9-7.1-4.7-5.7-3.1-5.7-2.3-4.2-1.1-7.2-0.6-8.5 1.6-7.1 3.1-7.1 5-6.1 6.3-4.7 7.2-3.8 8.5-2.4 8.6-1.6 11.3-0.2 14.3 1.2 21.4 2.2 14.2 2.5 7.1 4.2 5.7 5.8 4.3 7.6 2.8z"/><path fill="#81d34d" d="M365.6 442.5l9.6 0.5 8.5-1.2 7.2-2.5 8.5-4.8 21.4-15.5 7-6.4 3.2-4.3 2.3-4.3 1.7-4.4 1.3-5.5 0.6-10-1.6-10-3.9-9.9-5.5-8.6-3.7-4.4-5.6-5.6-11.5-9-11.4-6.5-5.7-2.1-4.3-0.9-7.1-0.2-7.1 1.7-7.1 3.4-6.5 5.1-6 7.1-4 7.1-3.2 8.6-1.9 8.5-1 11.4 0.2 15.7 1.7 17.1 2.4 11.4 3.2 7.1 2.3 3 2.7 2.7 5.8 3.4 7.5 2.3z"/><path fill="#89d548" d="M365.4 438.2l8.4 1.3 8.5-0.7 7.1-2 8.6-4.4 19.6-14.1 7.4-6.6 2.9-3.5 2.6-4.2 1.8-4.2 1.6-5.7 0.7-8.6-1.4-10-3.8-9.9-5.4-8.6-7.9-8.5-11-8.8-10-5.9-5.7-2.4-4.2-1.1-7.2-0.4-7.1 1.5-6.1 2.8-5.7 4.3-5.2 5.7-4.3 7.1-3 7.2-2.2 8.5-1.3 11.4 0.1 12.8 1.4 15.7 2.4 11.4 2.7 7.1 3.8 5.7 5.3 4.3 6.6 2.8z"/><path fill="#93d741" d="M371.7 435.4l4.9 0.4 4.3-0.2 8.5-2 8.6-4.2 11.4-7.9 9.9-7.8 6.4-6.8 3.9-7.1 2.2-8.6 0.2-8.5-1.8-8.6-3.6-8.5-5.8-8.6-8.5-8.5-10-7.6-10-5.2-8.6-2.4-7.1 0.1-5.7 1.5-5.7 3.1-5.7 4.9-4.4 5.6-3.8 7.1-2.8 8.6-1.6 8.5-0.6 11.4 0.7 12.8 1.7 11.4 2.8 10 3.7 7.1 3.9 4.3 6.1 3.8 6.5 1.9z"/><path fill="#9dd93b" d="M371.6 431.1l7.9 1 7.1-0.9 8.5-3.2 8.6-5.3 11.6-8.7 7.2-7.1 4.4-7.1 1.5-4.3 0.9-4.3 0.2-8.5-1.9-8.6-3.9-8.5-5.1-7.1-7.8-7.8-10-7.3-8.5-4.4-8.6-2.2-5.7 0-5.7 1.5-5.6 3.1-4.8 4.2-3.8 5-3.5 6.4-2.5 7.2-1.7 8.5-0.7 10 0.5 11.4 1.7 11.4 2.5 8.5 2.7 5.7 3.9 5.1 4.2 3.5 6.4 2.8z"/><path fill="#a5db36" d="M377.8 428.2l7.4 0 4.2-1 4.3-1.6 8.6-4.7 9.4-6.9 6.3-5.7 4.5-5.7 3.3-7.1 1.3-7.1-0.6-8.6-2.1-7.1-3.8-7.1-5.5-7.1-7.2-6.5-8.5-5.9-8.5-4-7.2-1.6-5.7 0.3-5.7 1.9-4.6 2.9-4.3 4.3-3.9 5.7-3.1 7.1-2 7.2-1.1 8.5-0.1 10 1.1 9.9 1.9 8.6 2.7 7.1 3.5 5.6 4.2 4.1 5.6 3.1 5.6 1.4z"/><path fill="#b0dd2f" d="M376.6 424l7.1 0.8 7.2-1.2 7.1-3 8.2-5.2 7.4-6.1 5.7-6.4 3.3-6 1.8-7.1-0.1-7.1-1.7-7.2-3.3-6.9-4.2-5.9-7.2-6.9-7.1-5-8.5-4.2-7.1-1.8-5.7 0.2-4.3 1.2-4.3 2.4-4.3 3.9-3.3 4.5-2.8 5.7-2.3 7.2-1.2 7.1-0.4 8.5 0.6 8.6 1.3 7.1 2.2 7.1 3 5.7 3.4 4.3 3.8 3.1 5.7 2.6z"/><path fill="#b8de29" d="M381.7 421.1l6.3 0 5.7-1.5 7.1-3.4 7.3-5 6.1-5.7 4.2-5.7 2.4-5.7 1-5.7-0.2-5.7-1.9-7.2-3.2-6.1-4.3-5.5-5.7-5.3-7.1-4.7-7.1-3.1-7.1-1.5-4.3 0.3-5.2 1.7-4.2 2.9-3.4 3.7-3.1 4.8-2.3 5.7-1.8 7.1-0.7 7.2 0.1 7.1 1 7.1 1.9 7.1 2.6 5.7 3 4.3 3.5 3.3 4.3 2.4 5.1 1.4z"/><path fill="#c2df23" d="M380 416.8l5.2 1.1 5.7-0.5 5.7-1.8 7.1-4 5.9-4.7 4.9-5.7 3.1-5.7 1.4-5.7 0-5.7-1.3-5.7-2.6-5.8-4.2-5.6-4.4-4.2-5.7-3.9-7.1-3.2-5.7-1.3-4.3-0.1-4.2 1-4.3 2.3-2.9 2.6-2.8 3.7-2.4 4.5-1.9 5.7-1.1 5.7-0.3 5.7 0.4 7.1 1.1 5.7 1.9 5.7 2.3 4.3 2.8 3.6 4.3 3.4 3.4 1.5z"/><path fill="#cde11d" d="M383.4 414l4.6 0.6 5.7-0.9 5.7-2.3 4.3-2.6 5.4-4.8 3.4-4.2 2.2-4.3 1.5-5.7 0.1-4.3-1.2-5.7-2.7-5.7-3-4.1-4.3-4-4.3-2.8-5.7-2.6-5.7-1.2-4.2 0-2.9 0.6-4.3 2.1-2.8 2.4-2.9 3.6-2.3 4.6-1.4 4.3-1 5.7-0.1 5.7 0.5 5.7 1.1 4.2 1.8 4.8 2.3 3.8 3.4 3.6 3.1 2.1 3.7 1.4z"/><path fill="#d5e21a" d="M386.9 411.2l4 0.1 4.2-0.9 4.3-1.8 4.3-2.8 3.4-3.2 3.3-4.3 2-4.2 0.9-4.3 0-4.3-0.9-4.3-1.9-4.2-2.6-3.6-2.8-2.9-4.3-3-4.2-1.9-5.7-1.3-4.3 0.2-2.9 0.7-3.5 1.8-3.1 2.9-2.1 2.8-2 4.3-1.2 4.2-0.6 4.3 0.5 8.6 1.2 4.2 2 4.3 2 2.9 3 2.8 3.8 2.1 3.2 0.8z"/><path fill="#dfe318" d="M384.7 406.9l3.3 1 4.3 0.2 4.3-1.1 2.8-1.3 5.7-4.6 2.2-2.8 2.1-4.2 0.7-2.9 0.2-4.3-0.8-4.2-1.3-2.9-1.8-2.8-2.7-2.9-2.9-2.1-4.2-2-4.3-0.8-2.9 0-2.8 0.5-2.9 1.2-4.2 3.6-1.7 2.5-1.8 4.2-0.9 4.3-0.2 4.3 1.4 7.1 3.2 5.9 2.8 2.7 2.4 1.4z"/><path fill="#e7e419" d="M387 404l2.4 0.8 2.9 0.2 2.8-0.5 2.9-1.1 4.8-3.6 2.1-2.9 1.4-2.8 0.9-5.7-1.4-5.7-3.5-4.8-2.9-2.1-2.8-1.3-5.7-0.6-4.3 1.2-4.3 3.5-2.8 5.5-0.8 5.7 1 5.7 2.6 4.9 2.3 2.2 2.4 1.4z"/><path fill="#f1e51d" d="M389.4 401.2l4.3 0.5 4.3-1.5 3.5-3.3 2-4.3 0.2-4.2-1.4-4.4-2.9-3.2-4.3-2-4.2 0-2.9 1.1-2.9 2.8-2 4.2-0.4 4.3 1 4.3 2.9 4 2.8 1.7z"/><path fill="#fbe723" d="M389.4 396.9l2.9 1.3 2.8-0.3 2.9-1.8 1.4-2 0.7-2.9-0.4-2.8-1.7-2.8-1.4-1.1-1.5-0.6-2.8-0.1-2.9 1.4-1.5 1.7-1 2.9 0.1 2.8 1 2.7 1.4 1.6z"/></g><path fill="none" stroke="#000" stroke-width="2.08" stroke-dasharray="7.7 3.33" d="M211.4 499.9l-0.7-0.5-0.3-1.4 1-1.5 1.4-0.3 0.8 0.4 0.7 1.5-0.9 1.3-0.6 0.4-1.4 0.1M180.1 590.7l-1.4-0.4-0.5-1.1 0.5-1.5 2.8-4.2 1.4-1.2 1.5-0.7 2.8-0.8 1.4 0.1 0.8 1.1 0.4 1.5 0.3 2.8-0.1 1.4-0.7 1.5-0.7 0.8-1.4 0.8-1.4 0.3-5.7-0.4M150.2 554.6l-1.4-1.2-1.2-2.7 0.3-1.4 0.9-0.8 1.4 0 1.4 1.1 0.5 1.1 0.3 1.4-0.3 1.5-0.5 0.8-1.4 0.2M198.6 524.1l-4.3-3.8-1.7-2.3-1.1-2.7-1.9-7.3-0.4-2.9 0.2-2.8 1.4-11.4 0.8-2.8 1.3-2 2.7-2.3 4.5-2.9 4.2-1.7 4.3-1 2.8-0.2 2.9 0.3 2.8 1 4.3 2.5 2.8 2.6 4.4 7.9 0.6 4.3-0.1 2.8-0.9 4.3-2 5.7-2 4-2.5 3.1-3.2 2.5-4.2 2.7-4.3 1.8-7.1 1.4-1.4 0.1-1.5-0.2-1.4-0.7M540.4 508.3l-1.4-0.9-1.3-2.3-0.3-1.4 0.3-2.8 1.3-2.7 1.4-1.4 1.4-0.8 1.4-0.4 1.5 0.1 1.4 0.7 1.4 1.8 1.1 4.1 0 2.8-1.1 2.3-1.4 1-2.9 0.5-2.8-0.6M141.6 445.7l5.7 2.2 12.9 7 1.4 0.9 5.7 5.3 2.8 2.2 8.6 4.3 1.4 0.4 2.8 0.2 5.7-0.8 11.4-0.2 7.1-0.5 4.3 0.5 5.7 2 4.3 2.5 2.8 2.4 2.9 3.2 1.5 2.2 2.8 7.1 3.4 7.2 1.7 4.2-0.4 7.1-0.7 5.7-1.2 4.3-3.1 10-1.4 8.5-1.8 7.1 0 2.9 1.1 7.1 0.2 2.9-0.4 2.8-1.7 7.1-0.4 4.3 0.2 4.3 0.8 5.7 0.3 4.2-0.4 12.9M487.7 197.9l-4.2-1.8-2.9-2-2.3-2.3-1-1.4 0.4-0.5 4.3 1.8 4.4 3 2.9 2.8-0.2 0.7-1.4-0.3M568.8 594.9l-1-2.9-2.4-2.8-0.5-1.5 0.1-1.4 1-3 0.7-5.5 0.4-1.5 1-1.4 0.8-0.7 1.4-0.7 1.4 0 5.7 1.6 5.7 0.4 2.9 0.8 1.4 0.9 2.2 2 1.2 1.4 2.3 3.7 1.4 1.1 1.4 0.1 2.9-0.3 1.4 0.2 4.3 2.2 1.4 0.3 4.3-0.3 1.4 0.6 0.5 1 0 1.4-0.5 1.6-1.8 2.7M543.2 540.9l-2.8-0.6-1.4-0.6-1.5-1-7.1-9.2-1.4-2.5-2.8-7.7-1-4.2 0-2.8 0.7-10 0.7-4.3 1.6-4.2 2.2-4.3 1.4-2.1 1.9-2.2 3.8-3.2 2.9-1.5 4.3-1.2 4.2-0.1 4.3 0.8 2.9 1.2 1.8 1.2 2.9 2.8 3.2 5.7 2.5 5.7 2 8.5 0.2 4.3-0.5 8.6-0.5 2.8-0.6 1.4-2.5 4.2-1.4 1.8-11.4 9-2.9 1.9-2.8 1.5-1.4 0.3-1.5 0M627.3 475l-4.3 0.4-2.9-0.4-14.2-5.4-2.5-1.5-3.3-2.8-6.2-4.3-1.6-1.4-2.1-2.3-1.1-2-0.5-1.4-0.4-7.1 0-1.5 0.5-1.4 1.4-1.4 8.7-6.2 9.8-5.2 2.1-1.4 1.1-1.5 0.7-1.4 1.4-4.3 0.9-1.4 1.1-0.6 2.8-0.1 5.7-0.7 2.9-0.1M627.3 409.7l-4.3-0.3-1.4-0.3-1.4-0.8 0.3-1.4 0.7-1.4 2.8-4.3 1.8-1.5 1.5-0.3M627.3 386.5l-1.9 0.4-2.1 1.5-0.6 1.4-0.5 2.8-0.6 1.3-1.5 1.1-1.4 0.6-2.8 0.3-1.5-0.5-0.9-1.3-0.2-1.5 0.4-1.4 1.9-2.8 0.2-1.5-1.4-0.6-1.4 0.2-1.4 0.6-2.9 2-1.4 2.1-0.6 4.3-1.1 1.4-4 1.9-2.8 0.7-1.4-0.1-2-1.1-3.7-3.6-1.5 0.6-5.5 4.5-2.9 2.8-1 1.4-1.9 5.7-1.5 2.3-1.4 1.4-2.9 1.9-2.8 1.5-1.4 0.2-1.5-0.8-0.2-0.8-0.2-8.5 0.1-5.7 0.5-4.3 0-2.8-0.5-4.3-2-8.6-0.3-2.8 0.5-2.9 0.9-2.8 0.7-4.3 0.9-2.8 2.5-5.7 3.3-4.3 1.3-2.8 0.2-2.9-0.7-4.3-0.2-4.2-1.1-4.3-2.1-2.9-5-3.6-1.4-0.7-4.3-1.3-1.9-1.5-1.5-2.8-0.8-2.9-0.1-1.4 0.1-1.4 0.8-2.9 2.9-7.1 1.4-7.1 2-3.3 1.1 0.4 1.7 1.3 2.9 1.5 1.4 1.1 2.8 3.1 4.3 3.9 2.9 3.7 4.3 6.8 2.8 6.1 1.3 3.9 1.2 15.6 2.3 7.2 0.5 2.8 0.1 2.9-0.9 8.5 0.3 8.5-0.7 8.6 0.2 2.5 0.3 1.8 1.1 2.6 1.8-1.2 0.8-4.3 1.7-3.5 5.9-6.5 1.9-2.8 2.8-8.5 3.9-10 1.5-2.9 2-2.8 3.8-4.3 0.9-1.4 2.9-6 1.4-1.5 1.4-0.8 1.5-0.3M141.6 352.4l4.3-2 1.4-1.1 1.5-2 5.2-8.8 5.2-7.1 3.3-7.1 0.5-0.5 1.4 1.4 2.3 4.8 4.1 4.2 0.9 1.5 1.3 4.2 2.3 5.7 2.4 7.2 2.8 9.9-0.2 2.9-1.1 4.3 0 1.4 1.6 5.7 0.2 1.4 0 1.4-1.2 5.7 0.6 5.7-0.1 2.9-0.6 1.4-1 1.8-3.3 3.9-1 1.4-0.2 1.4 0.5 1.5 1.1 0.9 1.4 0.7 0.7 1.2 0 2.9-0.8 7.1 0.5 2.8 0.5 1.4 3.4 5.9 2.5 2.7 3.2 2.8 0.6 4.3 1.8 8.6 0.6 1.4 1.2 1.4 2 1.4 6.6 3.2 2.9 0.9 7.1 1.5 5.7 2.2 2.8 1.5 2.9 1.9 2.8 2.8 3.1 4.5 4.1 5.3 1.4 2.5 6.8 15 3.7 10 0.4 5.7-0.3 17.1 0.4 5.7 3.2 14.2 3.4 8.6 1.2 4.2 0.6 4.3-0.4 8.6-0.5 2.8-1.3 4.3-0.5 2.8 0.2 5.7-0.9 8.6M165.8 313.2l-1.4-5.1-0.4-3.8 1.2-9.9 0.4-1.5 0.9-1.4 3.6-4 0.9-1.7 0.2-1.4-0.3-4.3 0.3-2.8 3.8-11.4 2.6-5.7 1.6-2.9 1.1-1.4 2.6-2.1 4-2.2 3.2-1.2 1.4-0.3 2.8 0.3 1.5 0.6 0.5 0.6 0.6 1.5 0.1 1.4-0.3 4.3-0.9 2.8-5 7.1-8.6 10-0.4 1.4-0.1 1.5 0.5 5.7-0.3 2.8-1.3 2.8-2.3 2.9-1.7 2.8-1.2 2.9-1 3.9-1.4 3.2-5.7 5.2-1.5-0.6M560.3 282.2l-1.4-1.4-1.4-1.9-2.9-5.5-1-3.2-1.1-5.7-0.7-1.7-1.4-2-1.5-1.1-1.4-0.7-1.4-0.4-4.3-0.4-1.4-0.3-1.4-0.7-1.2-1.3-1.7-3.2-1.4-1.9-4.4-3.4-2.7-3-1.5-1.3-7.1-4.6-7.1-2.5-1.4 0.1-4.3 2.4-1.4 0.3-2.9-0.3-4.2-1-3.5-1.5-5.2-4.3-1.3-1.4-1.4-2.7-0.8-4.4-0.9-2.9-6.9-11.7-2.8-2.8-3.6-2.6-3-1.4-6.2-2.1-1.5-1.1-1.4-2-1.6-4.8-0.5-4.2 0.6-4.3 2.1-4.3 0.2-1.4-0.2-1.4-0.9-1.5-1.1-0.7-1.4-0.1-1.5 0.3-1.4 0.8-1.3 1.2-1.5 2-1.1 0.8-1.8 0.8-2.8 0.4-4.3-0.4-2.8-0.9-2.2-1.3-5-5.4-1.4-0.8-5.7-2.1-1.4-1.1-1.2-2-1.6-4.3-1.4-2.8-4.4-5.7-1.3-1.4 5.2-4.3 1.1-1.4 1.4-2.9 1.8-5.7 0.8-1.4 1-1 1.4-0.6 2.9 0.1 2.8 1 2.9 1.3 2.8 0.5 2.9-0.1 7.1-1.2 5.7 0.1 4.3-0.6 1.3 0.5 0.5 1.4-0.9 4.3 0 1.4 1.3 5.7-0.3 1.4-3.4 3.8-1.1 1.9 0 1.5 1 1.4 1.6 1.4 2.8 1.4 5.7 1.1 1.4 0.6 5.7 4.2 4.3 2.3 2.9 0.8 4.2 0.4 2.9 1 3.7 2.4 7.7 4.1 4.2 3.6 7.2 7.5 9.5 6.2 5.5 5.7 4.9 3.6 4.3 3.8 6.5 4 4.9 5.4 2.7 1.7 2.9 1.4 1.5 1.2 2.1 3.1 2.7 5.7 6.3 15.7 1.7 7.1 0.6 5.7-0.4 4.3-1.4 7.1-1.6 5.7-0.5 4.3-1 0.6M463.5 231.8l-3.9-1.5-1.5-1.4-0.2-1.5 0.9-1.4 1.8-1.1 1.5-0.5 1.4-0.2 1.4 0.2 1.4 0.8 0.8 0.8 0.7 1.4 0.2 1.5-0.2 1.7-1 1.1-1.9 0.4-1.4-0.3M550.4 213.7l-1.5-1-1.4-1.7-0.9-2.1-0.1-1.4 0.8-2.8 2.8-5.7 1.1-4.3 0.6-1.4 1.4-1.6 2.9-2.2 4.2-1.7 2.9-1.5 1.4-0.4 1.4 0.2 1.4 0.8 0.7 0.7 0.5 1.4-1.1 5.7-0.2 2.8 0.9 2.9 3.2 5.7 0.3 1.4-0.4 1.4-1.1 1.4-1.3 1-1.5 0.5-7.1 1-4.2 0.1-2 0.3-2.3 0.8-1.4-0.3M627.3 206.6l-2.9 0.2-1.4-0.4-0.5-0.3-0.9-0.8-2.9-4-4.5-3.8-1.2-1.7-1.7-4-1.2-4.2-0.2-2.9 0.1-1.4 0.6-1.4 1.1-1.5 7-4.6 1.4-1.2 2.9-3.1 1.4-1 1.4-0.6 1.5-0.1M564.6 174.9l-0.5-0.2-0.3-1.4 0.5-1.4 1.4-1.4 1.7 0 0.8 1.4-0.6 1.4-3 1.6M627.3 119.8l-1.5 0.5-2.8 1.8-1.4 0.3-1.5-0.7-1.4-1.9-1.4-0.8-2.9-0.1-2.8 0.7-1.4 0.7-0.6 0.3-1 1.5-0.2 1.4-0.1 4.3-0.7 2.8-0.3 0.5-1.4 0.9-1.4-0.1-2.9-1.1-2.8-1.6-1.9-1.4-2.5-2.9-2.7-5.1-2.2-4.9-0.8-2.8-0.2-2.9M482.4 594.9l2.5-7.2 0-2.8-0.3-1.4-0.8-1.5-1.8-1.5-1.4-0.3-4.3-0.2-1.4-0.3-1.4-0.7-4.3-3-5.7-1.9-1.4-1.2-3-5.1-1.3-2.8-0.2-1.5 0.1-5.7 0.1-1.4 0.6-1.4 1.3-1.4 1.9-1.5 3.3-1.4 1.4-0.2 3.3 0.2 5.3 1.8 2.8 0.3 4.3-0.5 5.7-1.1 2.8-1.3 8.6-5.6 2.8-2.6 3.1-3.8 5.9-10 2.4-6.1 1.5-5.3 3.5-19.9 1.2-4.3 1.1-2.8 4.1-8.6 2.9-4.7 5.6-6.7 3.6-5.7 4.8-4.2 1.1-1.5 0.6-1.4 0.2-1.4-0.2-4.3 0.3-1.4 2.7-4.3 0.5-1.4 0.1-1.4-0.7-4.3 0-1.4 0.6-2.9 5.2-12.8 1.7-2.8 3.5-4.3 1.1-2.8 0.4-5.7-0.1-4.3-0.5-2.9-1.7-5.7-0.2-5.7-0.6-2.8-1.7-5.7-1.4-11.4 0.3-1.4 0.4-0.8 2.8-3.5 0.7-1.4 0.9-4.3 0.3-4.3-0.4-1.4-0.8-1.4-3.8-4.3-3.1-5.7-5.2-5.7-1-1.4-0.7-1.4-0.3-1.4 0-1.5 1-11.4-0.5-5.7 0.1-1.4 0.7-1.4 2.2-2.6 0.1-1.7-1.5-1.6-4.3-1.1-1.4-0.6-1.5-1-2.2-2.8-2-4.7-1.5-1.7-1.4-0.3-1.4 0.5-1.4 1.4-2 3.4-0.9 0.7-1.4 0.2-4.3-1.6-2.8-1.6-1.4-1.1-4.3-4.3-1.4-1.8-3.2-4.8-2.5-2.8-2.9-2.5-5.2-3.2-1.6-1.4-0.9-1.5-0.5-1.4-1-5.7-0.5-1.4-0.9-1.4-0.8-0.7-4.2-1.9-1.5-0.9-2.1-2.2-3.6-5.1-1.4-0.9-2.8-0.5-4.3 0.1-2.9-0.3-7.1-2.2-7.1-1.1-2.9-0.7-4.2-1.6-2.9-1.4-2.8-1.9-1.7-1.5-2.2-2.9-0.5-1.4-0.3-1.4 0.1-1.4 1.2-2.9-1-4.3-0.2-2.8 0.3-1.9 2.2-5.2 0.3-1.5-0.1-1.4-2.4-4.7-0.9-2.4-1.7-7.1-0.4-4.3-0.4-1.4-1.4-1.4-3.7-1.5-1.5-0.9-4-3.3-4.5-3.1-4.3-3.6-2.8-1.5-4.3-1.7-1.4-0.9-2.3-2-3.4-5.4-1.4-1.5-1.5-1-5.7-3-1.4-0.4-1.4-0.1-1.4 0.4-2.9 1.7-4.3 4.4-1.4 0.7-5.7-0.2-4.3 1-1.4-0.2-1.3-0.7-1.7-1.4-2.7-2.9-0.5-1.4 0.9-5.7 0-2.9-0.6-1.4-1.3-1.4-0.7-1.4 1-2.9 0.9-4.3 0-1.4-1.8-5.7-0.1-4.2-0.6-2.9-4.3-7.2-2.8-3.4-3.8-3.6-0.8-1.5M141.6 216.3l2.9 0 2.8-0.4 1.5-0.5 4.2-3 1.5-0.4 5.7 0.5 1.4-0.2 4.2-1.5 1.5-0.1 2.8 0.7 4.3 2.4 1.4 0.1 2.9-0.8 2.6-1.3 1.6-1.1 1.5-0.3 1.4 0.5 5.7 4.9 1.4 0.7 4.3 1.1 2.8-0.1 1.5-0.3 2.7-1.2 4.4-2.9 2.7-1.3 3-0.7 2.8-0.3 2.9 0.3 1.6 0.7 1.6 1.4 2.5 3.1 0.5 1.2-1.3 4.2-1.5 2.9-1.4 1.4-3.9 2.9-0.9 1.4-0.4 1.4-0.2 1.4 0.6 4.3-0.1 5.7 0.4 5.7-0.6 2.8-1.2 1.7-4.3 3-2.4 2.5-1.9 2.6-2.8 5.7-1.2 1.6-1.6 1.3-2.9 1.6-1.7 1.4-1.1 1.6-1.9 4.1-2.4 4.3-0.5 1.4-0.1 2.9 1.6 7.1-0.1 2.8-0.9 2.7-4.8 8.7-1.3 2.9-0.4 4.2 0.6 10-0.5 2.9-1.7 5.6 0 1.5 0.4 1.4 2.8 5.7 0.9 2.8 0.5 2.9-0.2 8.5 1 7.2 0.3 8.5 1 8.5-0.1 2.9-0.4 4.3 0.1 1.4 2 7.1 0.6 8.6 2.3 7.1 0.5 8.5 3.3 10 0.5 8.5 0.9 2.9 1.7 2.1 3.2 2.2 3.5 1.4 6.1 1.8 5.7 3 2.8 1.9 4.3 3.8 1.8 2.3 8.1 15.7 4.2 7.1 10.5 24.2 1.2 10 1.4 7.1 1.2 4.3 1.8 4.2 5.3 8.6 5.5 11.4 1.9 5.7 3.1 7.1 2.6 8.5 2.7 5.8 3.1 11.3 0.3 2.9M178.7 194l-1.5-1.3-1.9-5.1 0-1.5 0.5-1 0.5-0.4 3.8-1.2 1.4-1.2 0.7-1.9 0.1-4.2 0.1-1.5 0.6-1.4 1.4-2 4.2-4.1 1.5-1.8 0.7-2 0.3-2.9 0.4-1.7 1.4-1.2 1.4 0.3 1 2.6 1 5.7-0.2 1.4-0.3 0.7-2.8 2.2-0.4 1.4 1.1 5.7-0.1 1.4-1.5 4.3-0.3 1.4 0.5 4.3-0.2 1.4-0.6 0.9-0.8 0.5-2.1 0.7-5.7 0.1-1.4 0.3-2.8 1.1M198.6 150.3l-1.3-1.2-0.2-1.4 0.3-1.4 0.8-1.5 1.8-0.9 2.9-0.4 2.8 0 1.4 0.4 1.5 0.9 0.8 1.5 0.3 1.4-0.4 1.4-0.7 0.6-1.5 0.2-4.2-0.1-4.3 0.5M409.6 594.9l2-4.3 0-1.4-0.4-1.5-2.2-4.2-4.6-5.7-2.3-4.3-3.3-4.3-3.3-2.8-4.6-2.1-1.5-1.1-4.1-5.4-1.6-1.3-1.4-0.6-7.1-2-2.9-1.3-1.4-0.9-3.9-3.8-2.4-2.9 2.3-1.4 4-1.3 5.7-1.1 7.1-2.1 2.5-1.2 4.2-2.9 1.9-1 2.8-1 2.9-0.5 4.3-0.1 8.5 0.7 5.7 1 11.4 0.7 8.5-0.6 4.3-0.6 12.8 0.3 21.4-1.1 4.3-1.1 11.3-4.5 4.3-2.6 4.2-3.8 4.4-6.5 2.8-5.1 2.1-5.5 2.2-8.5 4.3-8.5 4.2-6.9 3.9-7.4 1.8-2.4 3.1-3.3 1.2-1.8 1.2-2.5 2.2-5.7 0.8-2.8 0-8.6 4.4-17.1 1.4-3.3 4.2-7.4 2.8-7.8 2.9-4.4 1-2.7 0.1-4.3-1.1-8.5-0.7-2.9-0.8-1.4-1.2-1.4-3-2.9-2.3-2.8-0.7-1.4-0.6-2.9 0.1-2.8 0.5-2.9 3.5-14.2 0-1.4-0.3-1.5-2-4.2-1.6-5.7-1.3-2.9-1.2-1.4-4.9-4.3-1.9-2.8-0.6-2.9 0.1-8.5-0.2-1.4-0.8-1.5-1.4-0.7-5.7 0.1-1.4-0.5-1.5-1.3-4.2-5.6-4.4-9.1-2.8-4.2-3.2-4.3-3.4-5.7-1.1-1.4-1.8-1.4-1.9-0.9-7.1-0.7-2.8-0.8-1.4-0.8-1.4-1.1-1.1-1.4-3-5.7-1.7-2.1-7.1-5.7-6.1-6.5-2.4-2-1.5-1-2.8-1.2-9.6-1.5-4.6-1.7-4.3-2.5-3.9-2.9-3-2.8-1.7-2-1.5-2.3-1.3-2.7-1.3-4.4-0.7-4.3-0.3-4.3-0.9-4.3-0.3-4.2-1.5-5.7-1.2-8.6-1-2.8-2.6-5.7-2.2-2.9-5.1-4.3-2.9-2.1-5.6-2.7-8.6-4.8-2.8-0.9-1.5-0.1-1.4 0.2-5.7 2.8-5.7 1.5-8.5 0.8-2.9 0-5.7-1-7.1 0.2-1.4-0.2-4.3-2-1.4-0.4-4.3 0.2-1.4-0.6-1-0.8-1-1.4-3.5-8.6-0.6-7.1-2.8-10-0.6-1.4-1.1-1.4-2.2-1.4-5.7-2.7-4.3-3.6-2.8-1.5-4.3-1.3-4.3-1.9-2.8-0.3-4.3 0.3-2.4-0.4-1.9-0.8-2.9-2.1-2.2-2.8-2-3.6-1.4-0.9-1.5 0.6-0.5 1-1.4 4.3-0.1 1.4 0.2 1.5 2.8 5.6 0.9 2.9 0 1.4-0.6 1.4-0.8 1.5-3.3 3.9-1.4 1.3-1.4 0.7-4.3 1.3-1.4 0.6-5.7 4.3-1.5 1.5-1.4 1.9-3.3 5.8-1.7 1.5-5 2.9-2.5 2.8-1.6 2.8-1.3 4.3 0.1 1.4 0.4 1.4 0.9 1.4 1.2 1.2 4.3 3.2 0.3 1.3-0.4 1.5-0.1 4.2-0.5 1.5-2.2 4.2-0.4 1.5-0.2 4.2-0.6 2.9-2.1 4.2-3.8 6.6-6.8 16.2-0.3 1.5 0.1 1.4 0.6 4.3-0.3 1.4-1 1.4-2.3 2.4-1.4 1.9-2.6 5.7-1.7 2.2-1.1 2-1.9 5.7-2.4 2.9-3.1 2.5-2.9 1.9-5.7 2.8-1.4 1.1-1.2 1.7-0.4 1.4 0 1.4 0.6 2.9 0.1 1.4-0.4 1.4-1.3 1.4-3.8 2.9-0.9 1.4-0.3 1.4 0.5 2.1 2.4 3.6 0.4 2.4-0.2 6.2-1 4.2-0.3 4.3-0.6 1.4-1.3 1.5-5.1 2.4-1.6 1.8-1 2.9-0.7 2.8-0.9 7.1 0 2.9 1.4 5.3 2.2 6.1 0.6 2.8-0.7 5.7-0.4 7.2 0.4 2.8 1.7 5.7 0 1.4-0.7 5.7 1.1 11.4 1 4.3 0.9 5.7 2.6 7.1 1.5 7.1 0.4 5.7 2.4 7.1 1.4 5.7 1.7 2.9 2.4 2.4 5.7 4.4 7.1 6.3 6.6 8.2 1.4 2.9 1.8 5.7 1.6 3.8 3.7 7.6 8.5 14.2 3.4 8.3 1.2 1.7 3.9 4.3 1.7 2.8 2.8 10 1.8 4.3 5.7 9.6 8.1 11.7 3.3 4.3 3.5 5.7 5.5 5.7 3.8 6.3 1.5 1.9 5.2 4.6 1.3 1.4 2.3 4.3 1.1 1.6 7.2 6.8 8.3 4.4 2 1.4 0.9 1.5M298.5 537.9l1.2 0.6 2.9 0.7 7.1-0.2 2.8-0.8 3.4-1.7 3.5-1.5 8.8-0.8 2.8 0.1 11.4 1.7 2.9-0.1 8.5-2.2 7.2-0.2 7.1-1.4 4.2-0.2 2.9-0.5 7.1-3.2 5.7-1.8 2.9-0.5 7.1 0.2 7.1 1.7 7.1 0.6 15.7 0 8.5-1.9 8.6-0.9 17.1-3.7 4.2-0.7 8.6-0.9 12.8-5.6 2.8-2.2 4.1-4.5 2.1-2.9 2.3-4.2 3.1-2.9 5.5-8.5 1.4-2.9 2-5.7 1.5-2.8 11.3-14.3 1.3-2.8 1.3-15.7 0.7-2.8 1.7-4.3 0.7-2.8 1.5-14.3 1.9-7.1 0.3-10 1.8-4.2 0.2-1.5-0.5-2.8-0.9-2.9-1.1-2.8-2.8-5.7-0.5-2.9 1-6.5 0.7-7.7 0.8-2.8 2.4-4.3 0.4-1.4 0.1-1.5-0.4-1.4-2.1-5.7-1.9-3.5-1.6-2.2-1.2-1.1-4.3-2.9-1.4-1.8-5.4-9.8-4.6-7.6-1.4-3.5-2.4-7.5-1.9-4.3-2.8-4.2-8.6-9.8-3.7-3-9.1-5.1-2.9-2-6.6-7.2-8.2-7.1-2.1-2.8-2.6-4.3-1.8-1.9-2.9-1.4-8.5-1.6-5.7-2.1-7.4-4.4-2.6-2-2-2.3-2.2-3.5-2.4-5-3.8-11.4-3.4-7.1-1-2.9-0.6-2.8-0.3-2.9 0.5-7.1-0.6-2.8-1.1-2.9-4.7-7.1-2.4-2.9-3-1.9-2.9-1.2-2.8-0.5-2.9-0.2-9.9 1.1-4.3 1.1-7.1 3.1-4.3 0.5-2.9-0.1-4.2-0.5-4.3-1.2-4.3-1.8-5.7-1-1.4 0-1.4 0.6-0.8 0.6-0.6 0.7-2.1 3.6-2.2 2.2-1.4 0.9-2.9 0.6-2.8-0.4-5.5-1.9-3.6-1.4-3.7-2.1-1.5-0.5-1.4-0.3-2.8 0-4.3 0.6-2.9 0.8-9.9 4.4-2.9 2.2-4.3 4.3-4.2 2.6-3.8 5.1-6.2 6.1-1.4 1.1-4.3 2.3-2.8 1.9-1.3 1.4-1.6 2.5-1.4 1.4-2.9 1-5.7 0.8-1.4 1.4-0.2 1.4 0.3 1.5 1.5 2.8 0.8 2.9-0.1 2.8-1.2 2.9-1.1 1.5-5.1 5.6-2.8 4.2-2.1 4.8-2.7 5.2-1.5 5.6-0.9 1.5-6.2 6.5-1.5 1-4.2 2.2-1.5 1.1-1.4 1.7-2.8 4.5-1.9 4.4-0.7 2.8-0.2 2.9 0.3 2.8 1.2 4.3 0.3 2.9-1.6 7.1-0.6 5.7-1.1 3.1-2.9 3.2-1.5 2.2-2.5 5.7-0.4 1.4 0.2 2.9 1 4.3 2.9 7.1 1.3 5.7 0.1 1.4-0.3 1.4-3 4.3-0.8 1.4-0.4 1.5-0.1 1.4 0.8 5.7-1 7.1 0.2 1.4 1.6 7.1-0.5 7.2 0.3 2.8 2.4 7.1 0.7 2.9 0.1 2.8-0.8 5.7 0.6 2.9 0.7 1.4 3.8 5.7 6.3 14.2 8.3 10.3 3.6 4 1 1.4 1.2 2.8 1.7 7.2 1 2.2 2.1 3.5 1.9 5.7 1.5 2.8 7.3 10 5.6 8.5 5.3 7.1 3.9 7.2 1.2 1.4 2.6 2.5 6.3 4.6 6.8 8.6 2.5 2.5 1.4 1 4.9 2.1 3.9 2.9M332.8 527.9l9.6 1.1 2.9 0 5.7-1 7.1-0.5 5.7-0.7 21.4-4.3 4.2-0.6 8.6 0.2 9.9 1.8 5.7 0.4 4.3-0.2 11.4-1.5 27.1-5.7 9.9-1.5 4.3-0.3 2.9-0.6 1.8-0.8 1.9-1.4 3.4-3.8 1.4-1.3 5.7-3.5 6.9-7.1 3.9-5.7 3.4-4.3 1.5-2.8 1.8-5.7 1.4-2.9 2.8-4.2 4-4.3 2.8-3.7 1.2-2 0.8-2.9 0.4-4.2 1.2-5.7 0.6-5.7 2.1-8.6 0.2-4.2-0.1-7.2 0.8-7.1-0.1-9.9-0.4-2.9-0.8-2.8-2.6-7.2-0.6-2.8 0-2.9 1.4-5.7 0.4-2.8 0-2.9-0.6-7.1 0.6-5.7-0.2-5.4-1-4.5-4.7-12.9-2.8-5.7-3.5-5.6-2-4.3-0.9-2.9-1.7-7.1-1.1-2.8-1.7-2.9-2-2.2-10-8.9-6-6-2.5-2-5.6-3.7-1.7-1.4-5.5-6.5-8.3-7.7-4.6-5.7-1.4-1.2-2.8-1.4-7.1-1.4-4.3-1.6-2.9-1.7-4.2-3.1-2.9-2.3-2.8-2.8-1.5-1.8-1.6-2.7-5.5-13-5.6-9.8-2.9-8.3-1.5-3.2-1.4-2.2-3-3.3-1-1.5-1-2.8-2-7.1-1.1-1.5-1.8-0.7-2.9-0.2-8.5 0.2-5.7 1-5.7 1.7-2.9 0.3-2.8-0.3-7.1-2.1-2.9-0.5-2.8-0.1-2.9 0.3-2.8 0.7-2.2 1.2-3.5 3.2-1.5 0.6-1.4 0.3-10-0.9-7.1 0.5-4.2-0.1-5.7-1.5-2.9 0.5-2.8 1.1-2.9 1.5-2.1 1.9-2.5 2.8-5.4 4.7-4.6 6.7-9.6 11.5-2.8 2.2-7.2 3.3-4.3 3-2.6 2.8-4.3 5.7-5.9 5.7-2.8 3.4-1.9 3.7-2 5.7-2.3 14.3-0.9 3.4-1.5 3.1-3.4 4.9-7.3 7.1-2 2.8-0.8 2.9-1.6 9.9-2.6 8.6-0.9 8.5-1.7 8.6 0.9 7.1-0.6 5.7 0 1.4 1.3 5.7 0 4.3-1.8 14.2-4.1 17.1-0.3 4.3 0.3 2.8 1.9 7.2 0 2.8-0.5 4.3 0.1 1.4 0.4 1.4 0.9 1.4 4.8 5.6 1.7 3 1.4 4.3 0.4 2.8 0 4.3 0.9 2.8 3.2 5.7 1 1.5 4.2 4.2 1.9 2.9 2 4.2 1.7 5.7 3.1 5.7 0.9 2.9 0.6 2.8 1.3 2.9 9.1 12.8 6.6 7.1 8.4 10.9 2.8 3 2.9 2.1 9.9 6.4 4.3 2.3 2.9 0.6 7.1-0.3 2.8 0.6 5.7 2 2.9 0.7 11.4 1.4 6 0.2M338.9 523.7l5 0.6 9.9-0.4 17.1-2.6 5.7-1.2 11.4-1.3 10 0 8.5 1.2 7.1 0.5 2.9-0.1 5.7-1.1 10-1.3 2.8-0.8 4.8-2.1 2.3-0.7 8.6-0.8 9.9-2.1 8.6-2.1 2.8-1 1.5-1.1 2.7-3.6 1.5-1.4 7.2-3.5 2.8-1.9 1.4-1.4 2.9-3.8 3.5-6.5 0.9-2.8 0.1-4.3 0.3-1.4 3.2-5.7 1-4.3 2.4-6.5 3.1-3.5 0.8-1.4 2.1-5.7 0.4-1.4 0-1.4-1.4-5.7 0.1-2.9 1.2-5.7 0.5-4.3 1.5-5.7 0.9-5.7 3.4-9.9 0.1-1.4-0.1-2.9-2-8.5-0.8-5.7 0.1-4.1 1.1-5.9 0.1-2.9-0.4-2.8-2.2-8.5-0.4-2.9 0-8.5-0.3-2.9-1.7-5.7-5.6-12.8-4.8-12.5-2.4-4.6-2-2.8-2.6-2.9-12.6-12.8-3.2-2.7-4.4-3-3.6-2.8-6.2-6.7-8.6-7.9-4.3-3.1-7.1-2.3-4.2-2.1-4.8-3.6-5.2-5-4.4-5-3-4.2-4.9-11.4-2-3.4-4.4-6.6-1.4-2.8-2.2-5.7-1.5-2.9-1.2-1.4-4.9-4.3-1.2-1.4-1.9-2.8-2.6-5.3-1.4-1.8-1.5-0.9-2.5-0.6-4.6-0.1-2.8 0.6-4.3 1.4-2.9 0.6-14.2 1.1-1.6 0.7-2 2.8-1.3 1.5-2.4 1.4-2.7 0.7-1.4 0-2.8-0.5-10-4.5-2.9-0.4-3.7 0.4-4.8 1.2-4.3 1.7-8.5 2.9-2.9 1.3-2.8 2.1-4.3 4.6-4.8 6.1-10.7 11.4-3 2.7-6.5 4.5-2 1.7-7.4 8.2-6 5.7-2.1 2.9-3 5.7-1.5 4.6-0.7 3.9-0.7 8.6-1 4.2-2.1 4.3-4 6.3-3.7 5.1-1.6 2.8-5.4 14.3-1.2 4.3-0.9 7.1-0.8 4.2-0.6 8.6-0.1 7.1 1.4 14.3 0 2.8-0.5 2.9-2.3 7.1-1.6 7.1-2.3 7.1-0.5 2.9 0 2.8 1.4 7.1-0.4 8.6 1.1 2.8 4.3 5.7 2.1 4.3 2 7.1 0.6 7.1 0.7 2.9 1.2 2 4.4 5.1 5 8.5 1.2 2.9 1.1 4.3 1.9 4.2 1.2 4.3 1.2 2.9 6 9.9 2.2 2.9 6.3 5.7 5.1 5.2 7.1 6.5 4.2 3 8.6 4.4 4.3 1.8 2.8 1 7.1 1.7 8.6 3.2 2.8 0.5 8.6 0.9 12.1 0.3M317.5 519.4l10.7 1.2 10-0.3 7.1 0.5 10-0.5 7.1-1.4 7.1-0.6 5.7-1.1 14.2-1.3 8.6-1.1 17.1 1.5 4.2-0.2 5.7-0.7 5.7-1.1 10.8-3.5 9.2-0.9 8.5-2.2 4.3-1.5 4.3-1.8 2.8-1.8 5.7-5.6 1.4-1.1 4.3-1.9 2.9-1.7 2.8-2.5 1.4-1.7 2.3-4.3 0.8-2.9 0.6-4.2 2.4-7.2 0.7-4.2 3.2-8.9 2.3-5.4 1.3-4.2 1.2-10 0.2-10 0.5-4.3 0.7-2.8 3.7-10 0.9-4.2 0-4.3-1.3-14.3 0.7-9.9 0-2.9-0.5-4.2-2-8.6-0.6-8.5-0.6-2.9-3.7-8.7-4.3-12.6-2.4-5.7-3.3-5.7-6.2-8.6-3.9-4.3-6.9-6.6-10.6-7.6-7.9-6.7-4.3-3.2-2.9-1.6-8.5-4.2-4.3-2.7-4.2-3.4-4.3-4.1-2.9-3.4-7.3-10.6-2.2-4.2-3.3-7.7-7-10.9-3.3-7.1-1.6-2.8-6.9-7.2-5.4-6.5-1.4-1.2-1.4-0.8-1.5-0.5-1.4-0.2-2.8 0.4-10.2 3.2-3 1.4-5.3 4.2-1.5 0.8-4.2 1.1-5.7 0.6-2.9 0-4.3-0.7-8.5-2.4-2.9-0.6-2.8 0.2-1.4 0.5-2.9 1.8-2.8 2.7-2.9 2.2-8.5 3.7-2.9 1.7-5.7 5.6-11 9.9-8.9 6-3.3 2.6-4.1 4.2-4.4 5.7-3.3 5.7-5.9 11.4-1.1 2.9-1.1 7.1-1.2 4.3-2.7 5.4-12.8 23.6-2 5.1-1.6 5.7-0.5 2.9-0.3 4.2 0.7 10-0.6 10 0.1 11.4-0.6 4.3-1.5 8.5-1.1 10-1.9 7.1-0.4 7.1-1.4 8.6 0.1 1.4 0.9 2.8 4.1 7.1 4.6 10 0.7 2.9 0.2 4.2 0.3 1.5 7.3 12.7 2.2 4.3 4.1 14.3 1.3 2.8 4.3 8.6 1.9 2.8 1.9 2.2 11.4 9.2 5.7 4.3 2.8 1.9 5.7 2.9 5.7 2.3 5.7 3.9 7.2 2.1 7.1 3.3 2.1 0.7M326.7 518l4.3 0.1 7.2-0.5 5.7 0.1 5.7-1 5.7-0.1 7.1-1.7 7.1 0.1 17.1-1.3 2.8-0.5 7.2-1.9 2.8-0.4 8.5 0.3 8.6 1.7 2.8 0.3 2.9-0.1 3.4-0.8 8-2.8 7.1-1.6 10-1.2 9.9-3.1 4.3-2.1 3.1-2.1 2.6-2.3 5.7-6.4 2.9-2.1 5.7-3.2 1.4-1.4 1.2-1.6 0.7-1.5 0.9-2.8 2.3-12.8 4.3-10 2.2-4.3 1.5-4.2 0.8-10 0.3-14.3 1-4.2 2.6-7.1 0.8-4.3 0.1-4.3-0.9-15.7 0.2-4.2 0.8-5.7 0-4.3-0.7-4.3-3.2-14.2-3.5-9.5-5.2-16.1-2-5-2.8-4.7-7.1-9.8-3.1-3.3-5.5-5.1-5.7-4-12.8-7.5-9.9-5.2-5.7-3.6-2.9-2.2-10.4-9.5-2.3-2.8-1.8-2.9-7.5-12.8-5.6-11.4-6.8-9.9-3.6-7.2-1.7-2.8-3-3.4-5.7-5.4-2.9-1.8-1.4-0.3-1.4-0.1-1.4 0.3-1.7 0.7-6.9 5.9-4.3 3.3-4.2 2.4-2.9 0.9-2.8 0-9-2.5-5.3-0.6-2.8 0.1-3.6 0.5-7.8 1.9-5.7 3.1-9.1 6.4-6.2 5.7-11.8 9-4.2 2.3-7.2 2.7-2.8 1.8-1.4 1.4-1.4 2.1-1 2-1.9 5.7-6.4 10-2.9 5.7-4.6 10-5.6 9.9-1.9 4.3-3 8.6-5.3 9.9-2.4 5.7-0.9 2.9-0.2 1.4 0.1 2.8 1.6 7.2 0.2 2.8-1.7 17.1-1.7 8.6-0.7 5.6-0.2 4.3 0.6 10 0 4.3-0.8 4.2-3.5 11.4-0.3 2.9 0.2 1.4 0.9 2.8 5.1 10 2.1 5 2.2 6.4 1.3 5.7 0.9 2.9 5.2 9.9 2.5 7.1 0.8 5.7 0.8 2.9 4.8 9.6 1.9 3.2 2.4 2.9 2.8 2.1 5.7 3.3 7.1 3.4 5.1 4 2 1.2 7.2 2.7 4.2 3.9 2.9 1.8 5.7 2.1 8.5 4.1 8.5 1.3M324 515.1l5.6 0.7 4.3-0.2 10-1.3 5.7-1.6 11.4-1.7 2.8 0 5.7 0.7 4.3 0.2 11.4-0.5 2.8-0.4 10-3 4.3-0.5 5.6 0.1 10 2.7 2.9 0.3 1.4-0.1 2.8-0.8 4.3-2.3 2.9-1 7.1-1.5 5.7-0.4 2.8-0.4 5.7-2 4.3-0.9 2.8-1 3.6-2.2 6.4-5.5 7.1-9.2 2.7-2.4 3-1.9 1.5-1.7 0.7-2.1 0.9-7.1 0.8-2.8 3.8-7.2 1.8-4.2 2.3-4.3 0.9-2.8 0.9-10 0.1-11.4 0.3-4.3 0.5-2.8 2.1-7.1 0.5-2.9 0-8.5-0.6-11.4 1.1-12.9-0.1-4.2-0.7-4.3-2.1-7.1-3.3-8.6-2.6-8.5-3-8.6-2-7.1-1.2-2.8-1.8-2.9-3.4-4.2-4.5-6.4-2.8-3.1-2.9-2.6-2.8-2.2-2.9-1.8-10-4.5-4.2-2.1-13.8-8.7-4.7-3.6-11.3-10.6-2.4-2.9-2-3-7.8-14.1-4-8.5-1.7-2.8-2.2-2.8-4.2-4.4-2.4-2.8-1.7-2.9-2.1-4.2-2-2.9-1.8-1.6-1.4-0.8-1.5-0.5-1.4 0-1.4 0.5-1.4 0.7-7.2 5.3-2.8 1.8-2.9 1.4-2.8 0.9-2.8 0.7-4.3 0.4-10-0.4-2.8 0.5-4.3 1.4-2.9 0.5-2.8-0.1-4.3-0.5-2.8 0.1-2.9 0.9-2.2 1.6-2 2.1-3.8 5.1-1.9 2.1-1.5 1.2-7.1 4.5-10.1 9.2-5.8 5.7-1.8 1.5-6.5 4.1-3.1 3-1.6 2.8-1.3 4.3-1.2 2.9-1.3 1.8-4.3 4.3-1.4 1.8-5.7 8.7-1.5 2.5-1.9 5.1-2.3 8.6-3.4 8.5-2.3 7.1-0.2 2.8 1.5 5.7 0 4.3-2.6 10-1.4 9.9-2.4 8.6-0.6 4.2 0.1 4.3 1.4 15.7-0.5 8.5-0.9 7.2 0 2.8 3.2 15.7 0.9 2.8 2.6 5.7 1.8 8.6 3.9 7.1 3.1 8.5 0.4 2.9 0 4.2 0.3 1.5 6.9 12.8 2.2 2.8 1.6 1.2 7.2 3.1 5.6 1.6 1.5 0.9 4.2 4.1 1.5 0.9 5.7 2.2 1.4 0.8 1.4 1.1 3.7 4.1 2 1.4 12.8 5.9 2.9 0.8 2.9 0.4M321.2 512.3l7 0.9 4.3 0 2.8-0.2 3-0.7 9.8-3.3 5.7-1.5 2.9-0.4 8.5 0.8 8.6 1.3 7.1-0.4 4.3 0.1 2.8-0.6 8.6-2.7 2.8-0.5 4.3-0.3 5.7 0.4 9.9 2.7 2.9 0 2.8-1 4.3-2.3 7.1-2.3 2.9-0.7 5.7-0.2 1.9-0.5 3.8-1.9 1.4-0.5 4.3-0.6 2.8-0.8 1.4-0.9 3.7-3.9 4.9-3.1 1.4-1.6 5.7-7.8 4.1-4.6 1.4-2.8 1.6-5.7 4.5-8.6 2-5.6 1.9-4.3 0.9-2.9 1.1-7.1 0.2-17.1 2-11.4 0.2-11.4-0.4-8.5 1-11.4 0.1-7.1-0.4-2.9-1.2-4.2-4.6-11.4-2.8-10-5.9-16.2-1.4-2.3-4.7-5.7-4-5.7-2.5-2.9-1.6-1.4-2.9-2-2.8-1.6-11.4-4.8-5.7-3.4-15.7-11.6-12.5-12.2-2.5-2.8-2.9-4.3-6.3-11.3-4.4-10.1-1.3-1.9-1.4-1.6-2.9-2.2-4.2-2.3-2.9-1.1-7.1-1.7-2.9-0.4-2.8 0-12.8 1.4-4.3 1.2-7.1 3.2-7.1 2.1-4.3 0.8-8.6 0.5-2.8 1-2.9 2.7-5.6 8.5-4.3 4.2-1.8 1.3-2.5 1.3-7.1 1.6-2.9 1.1-2.8 1.8-5.7 4.6-5.7 3.7-1.6 1.6-1.3 1.7-2.7 5.4-1.9 2.8-8.2 8-6.1 9.1-1.5 2.9-1 2.8-3.7 14.3-0.7 5.7 0.8 11.3-0.4 4.3-1 2.9-3 5.7-1 2.8-1.3 10-3 8.5-0.3 4.3 1.3 12.8 1.1 7.1 1.3 3.7 2.9 4.3 1 2 0.5 1.4 0.4 2.9-0.5 3.3-3.2 6.6-1 2.9-0.3 2.8 0.1 1.5 3 7.9 1.6 7.7 3.9 10 1.3 4.3 0.9 4.2 0.1 5.7 0.4 1.5 6 10.4 1.4 1.9 1.5 1.3 2.8 1.4 7.1 2.4 2.9 1.3 1.4 1.1 4.4 4.4 8.4 4.2 1.8 1.5 3.9 4.1 1.4 1 11.4 5.3 3 1M320.5 509.4l2 0.6 2.8 0.5 10-0.2 2.9-0.8 7.1-3.2 8.5-2.2 2.9-0.4 7.1 1.5 10 1.6 11.4-0.9 9.9-2.8 2.9-0.5 4.3-0.2 4.2 0.2 12.8 2.7 2.9 0 2.8-1 4.3-2.2 7.1-2.6 8.6-1.6 4.2-1.8 5.7-2 1.5-0.8 4.4-3.8 5.5-2.8 1.5-1 2.8-3.3 5.4-7.2 0.8-1.4 2.9-7.1 5.2-8.6 1-2.8 1.3-5.7 2.5-7.1 0.9-5.7-0.1-15.7 0.6-8.5 0-7.1 0.7-7.2 0.3-8.5 0.8-8.6-0.3-9.9-1.2-5.7-4.2-11.4-3.3-11.4-2.6-7.1-2.1-4.8-2.4-3.8-4.8-5.7-5.3-7.1-1.8-1.8-4.3-2.9-12.8-5.9-3.7-2.2-9.1-7.3-7.5-5.5-4.8-4.3-11.9-12.2-5.6-7.7-3.4-5.7-4.2-10-1.7-2.8-2.2-2.1-1.4-0.8-2.9-1-14.2-1.8-4.3 0-2.8 0.5-4.3 1.2-11.4 4.3-8.5 4.9-2.9 0.5-5.7 0-2.8 0.7-1.5 0.7-3.3 2.8-8 9.6-2.9 2.4-1.4 0.8-2.9 1.2-2.8 0.6-5.7 0.9-2.9 1.1-4.8 3.4-4.9 4.2-5.9 7.9-7.1 7.3-2.9 3.8-6.1 10.9-2.2 5.7-1.7 5.7-0.9 7.2-0.3 15.6-0.7 2.9-3.7 7.1-0.9 2.8-0.3 2.9-0.1 5.7-0.3 2.8-0.7 2.9-2 6.1-0.4 2.4-0.2 2.9 0.3 5.7 0.9 4.2 1.1 2.9 2.7 4.3 1.2 2.8 1.4 7.1 0.4 4.3-0.2 2.8-2 8.6-0.3 2.8 0.6 10 0.7 5.7 0.8 4.3 2.5 7.1 0.7 2.8 0.9 5.7 0.5 5.7 0.5 1.5 2.7 4.2 1.4 2.9 2.3 3 1.8 1.3 8.1 3.3 2.9 1.6 5.7 5.4 1.4 1.1 7.2 4.2 7.1 5.9 12.2 5.5M322.5 506.6l2.8 0.8 1.5 0.1 8.5 0 1.4-0.3 1.9-0.6 5.3-2.8 11.4-2.5 2.8 0.2 7.1 1.9 8.6 1.1 2.8-0.2 7.1-1.6 5.7-1.8 2.9-0.7 2.8-0.4 7.2-0.3 2.8 0.2 5.7 1.5 8.5 1.5 2.9 0 1.5-0.4 5.6-2.7 4.3-1.7 10.1-2.7 8.4-4 7.1-4.6 5.1-2.8 2-1.7 4.9-5.4 2.3-3.5 2.8-6.9 1.3-2.5 3-4.4 1.5-2.7 0.9-2.8 0.7-5.7 3-8.6 0.5-2.8 0.2-4.3-0.9-12.8-0.5-12.8 0.3-2.9 1.5-8.5 1.2-10 0-5.7-1.5-11.4-0.9-4.2-3.2-9.6-3-10.4-2.2-5.7-1.9-4.3-2.8-4.2-9.2-11.4-2.7-2.9-3.8-2.5-11.4-5.7-4.3-2.5-8.5-7-8.6-6.5-4.9-4.2-6.5-6.9-5.7-5.6-3.7-4.6-4.3-5.7-6.2-10.9-1.4-2-1.4-1.5-1.7-1.3-2.6-1.3-2.9-0.8-5.7-1-4.2 0-4.3 0.9-11.4 3.6-4.3 2.2-5.7 4.2-2.8 1.6-2.9 0.9-7.1 1.1-2.8 1.4-2.9 2.8-4.3 6-1.4 1.4-2.8 1.9-2.9 1.3-4.2 1.4-8.6 1.8-2.8 1.3-4.5 3.5-4.1 4.4-12.8 15.4-2.8 3.8-1.9 3.4-1.4 4.3-2.5 14.3-2.2 8.5-1.2 8.5-0.9 2.9-2.6 5.7-1.1 2.8-0.4 2.9-0.5 8.5-2.3 12.8-0.2 4.3 0.9 4.3 2.8 7.1 1.1 4.3 1.4 15.6-0.1 2.9-1.1 8.5 0.3 15.7 0.7 4.3 2.4 8.5 1.3 10 0.7 2.8 3.9 7.3 0.9 1.3 1.7 1.4 10.2 5.3 10.4 9 9.6 6.8 2.8 1.5 11.4 4.5M332.3 503.7l3 0.6 1.4 0 1.5-0.5 4.2-2.3 1.5-0.5 8.3-1.6 3.1-0.3 2.8 0.3 5.7 1.9 2.8 0.5 5.7 0.6 2.9-0.2 5.7-1.7 7.1-3.5 1.4-0.5 2.9-0.4 11.4-0.3 7.1 2.9 10 1.4 2.8-0.6 7.1-3.4 8.6-2.2 2.8-1 10-5.2 4-2.5 6-4.3 7.1-7.1 1.8-2.8 3.3-8.6 4.1-7.1 0.8-2.8 0.8-5.7 2.3-5.7 1.2-4.3 0.3-2.9-0.1-2.8-1.8-12.8-0.5-10 0.6-5.7 3.3-15.7 0.2-2.8-0.2-2.9-1.6-8.5-1-7.1-1-4.3-5-15.7-1.8-4.2-2.9-5.7-2.9-4.3-7.9-10-2-2.1-4.3-3-8.5-4.3-5.7-3.5-22.8-18.3-12.8-12.9-8.3-10-5.9-7.9-1.9-2.1-2.4-2-2.9-1.8-4.2-1.3-4.3-0.2-4.3 0.4-7.1 1.4-4.3 1.6-3.4 1.9-8 5.8-8.4 4.2-2.4 1.4-2 1.5-6.1 5.7-3.9 2.6-7.1 3.8-14.2 6.2-2.4 1.6-1.9 1.6-2.8 2.9-6.9 8.3-5.8 5.7-1.9 2.9-0.9 2.8-1 8.6-1.8 8.5-3 8.5-2 7.2-2.9 8.5-0.7 2.9-2.1 17-0.3 7.2 0.6 7.1 1.6 10 0.6 9.9 1.3 8.6 0.1 2.8-1 10 0.3 11.4 0.4 2.8 2.8 12.8 0.9 8.6 1 2.8 2.2 4.3 2.3 2.9 3.3 2.3 4.3 1.6 2.9 1.7 6.8 5.8 3.1 3.9 1.5 1.3 5.7 4.2 4.2 2 10 2.9 2.8 0.6 4.3 0.2 2.7 0.5M330.3 499.4l5 0.9 1.4-0.1 4.3-1.5 2.9-0.8 4.2-0.6 5.7-0.3 4.3 0.3 5.7 2 2.8 0.7 4.3 0.3 2.9-0.2 3.1-0.7 3.3-1.4 2.1-1.4 4.3-3.5 2.8-1.5 2.9-0.6 10-1.1 2.8 0.4 1.4 0.7 4.3 3.9 1.4 0.7 2.9 0.7 2.8 0.4 2.9-0.1 1.4-0.3 7.1-3 7.1-1.3 2.9-0.8 5.7-3.1 6.1-2.9 3.8-2.6 5-4.5 5.9-7.1 2-3.5 6.2-13.6 1.9-7.1 2.6-7.2 0.7-2.8 0.3-2.9 0-2.8-1.9-12.8-0.3-11.4 0.9-7.1 3.2-11.4 0.4-2.9 0-2.8-3.3-18.5-0.8-3.2-4.9-13.9-4.3-8.6-2.6-4.3-3.1-4.2-3.6-4.6-2.8-3.1-3-2.3-9.8-5.4-5.7-3.8-22.8-18.3-8.8-8.1-12.6-14.2-5.7-5.9-4.3-3.5-1.4-0.7-2.8-0.9-5.7-0.1-7.2 0.7-4.2 1.1-2.9 1.3-17.1 11.9-9.6 7.5-7.5 4.4-9.9 6.9-11.4 6-4.3 3.3-4 3.6-5.5 5.7-1.7 2.8-0.9 2.9-1.2 5.7-1.1 4.2-2.4 7.1-4.3 11.4-3 10-1 8.6-1.5 8.5-0.3 4.3 0.8 28.5 0.6 4.2 1.9 7.1 0.5 2.9 0.2 4.3-0.6 8.5 0 4.3 2.5 18.5 1.1 5.5 3.3 10.2 0.9 2 1.5 1.4 5.7 2.5 7.1 5.6 1.4 1.5 3.5 5.5 1.2 1.4 2.4 2.2 2.9 2 2.8 1.4 4.3 1.2 13.5 1.7M368.1 498l4.2-0.1 4.3-1.1 2.9-1.6 4.6-4.3 3.9-2.6 4.3-1.6 10-2.4 2.8-0.3 2.8 0.1 2.9 0.3 2.8 0.8 2.4 1.4 3.3 3.5 1.5 0.4 4.2 0 10-1.2 2.9-0.9 4.2-2.2 7.1-3.1 3.2-2.2 3.4-2.8 3.1-4.3 3.9-7.1 3.5-5.3 1-1.8 3.5-8.6 3.6-12.8 0.4-2.8 0.2-4.3-0.3-4.3-1.3-10 0.2-11.3 0.8-5.7 3.3-11.4 0.6-4.3-0.4-4.3-2.9-14.2-1.7-5.7-5.2-12.8-2.1-4.3-5.1-8.6-4.5-6.1-4.3-4.1-10-6.2-6.8-4.9-25.2-20-6.4-5.6-6.9-7.2-5.1-5.7-3.7-3.4-2.8-2.1-2.9-1.6-2.8-0.9-2.9-0.3-4.3 0.1-4.2 0.6-4.3 1.2-4.3 1.8-4.2 2.9-15.6 11.7-15.8 10.6-8.4 5.1-11.5 6.4-2.9 2.1-2.8 2.9-2.1 2.8-2.7 5.7-4.3 11.4-5.4 12.8-2.6 7.9-1.2 4.9-0.6 8.6-1.4 8.5-0.4 4.3 0.1 7.1-0.4 10 0.1 8.5 0.7 4.3 2.5 7.1 0.9 4.3 0.8 10 0.4 9.9 1.1 14.3 0.5 2.8 1 2.9 3 6 1.4 2.2 10 9.3 2.3 2.4 1.8 2.9 1.9 4.2 2.1 2.9 3.3 2.7 2.9 1.6 4.2 1.1 12.8 1 2.9-0.2 7.1-1.7 4.3-0.2 4.3 0.1 5.7 0.6 2.8 0.5 7.1 2.5 2.9 0.5M363.2 493.8l3.4 0.9 2.9 0.3 2.8-0.4 2.7-0.8 3-1.7 7.2-5.9 2.8-1.8 12.9-4.9 5.6-1.6 4.3-0.4 4.3 0.5 2.8 1.4 4.3 3.6 2.8 2 2.9 1.1 2.8 0.2 1.5-0.2 2.8-0.9 5.7-2.7 5.7-2 2.8-1.7 3-2.1 2.2-2.9 5.2-10 4.2-7.1 2.8-5.7 1.8-5.7 1.6-9.9 0.6-5.7-0.2-4.3-1.1-8.6 0.4-9.9 1.2-7.1 3.3-11.4 0.6-4.3-0.2-2.9-0.5-2.8-2.3-10-1.3-4.2-3.8-8.6-4.6-11.4-4-7.1-4.6-6.3-3.9-3.7-17.7-12.8-27.4-21.4-10-8.5-7.9-7.6-1.4-1.1-2.9-1.5-2.8-0.8-2.9-0.4-2.8 0-2.9 0.5-4.3 1.5-4.6 2.3-8.2 5.5-17.1 10.1-9.9 6.7-18.5 11.2-2.9 2.1-2.6 2.8-1.8 2.9-3.5 7.1-7.6 17.1-1.5 4.3-2.4 8.5-0.9 4.3-0.7 10-1.8 9.1-1.1 13.6 0 5.7 0.5 5.7 0.7 2.9 2.5 7.1 0.9 4.3 0.8 11.4 0.3 12.8 0.7 7.1 0.9 4.3 0.9 2.3 1.2 1.9 8.3 11.4 2.4 2.9 5 4.3 2.5 2.8 1.5 2.9 1.4 4.2 0.9 1.5 1.4 1.4 2.5 1.4 2.9 0.6 7.1 0.4 2.8-0.4 5.7-2 7.1-1.1 2.9 0 2.8 0.5 15.1 4.9M363 489.5l5.1 0.8 2.8-0.2 2.9-0.8 4.2-2 2.9-2 4.3-3.6 2.8-1.6 14.3-5.3 4.2-1.3 2.9-0.4 4.2-0.3 2.9 0.2 1.4 0.4 2.9 1.6 4.2 4 1.5 1 2.5 0.9 1.7 0.1 2.9-1 5.7-2.9 7.1-3 2.8-1.8 1.5-1.7 2.8-4.8 5-10.5 3.6-5.9 1.7-4.1 1.9-11.4 0.5-4.2-0.1-4.3-0.8-8.6 0.5-8.5 1.7-8.5 3.1-11.4 0.5-2.9 0-2.8-0.5-2.9-2-8.5-1.3-4.3-4-8.5-3.6-10-1.9-4.3-3.3-5.7-3.8-5-2.9-2.7-11.8-9.4-13.8-10.4-10-7.9-12.8-9.5-15.7-10.6-2.8-1.4-2.9-0.7-4.2 0.2-4.3 1.4-17.1 7.5-10.6 5.8-5.1 3.1-20.8 14-4.9 4.3-4 4.2-2.9 4.3-2.3 4.3-5.3 12.8-1.5 4.3-3.5 17.1-1.4 9.9-2.9 11.4-0.8 5.7 0.1 5.7 0.5 4.3 3.1 11.4 0.9 5.7 0.4 7.1-0.5 14.2 0.4 4.3 0.8 4.3 0.9 2.8 1.3 2.9 8.3 12 2.8 2.5 5.7 2.7 4 2.7 1.5 1.4 2.3 2.9 2.1 4.3 1 1.4 1.9 1.2 2.9 0.4 9.9-1.3 5.7-1.1 4.3-0.2 4.3 1.1 7.9 4.2 4.1 1.4M365.9 483.8l5-0.2 4.3-0.9 2.8-1.4 4.8-3.2 3.8-1.9 8.5-2.5 8.6-3.3 4.2-1.2 7.2-1 4.2 0.2 3.4 1.1 5.2 3.4 1.4 0.5 1.4 0.2 2.9-0.5 4.3-1.9 2.7-1.7 3.6-2.8 1.3-1.4 1.8-2.9 2.5-7.1 1.5-2.8 4.6-5.7 1.9-2.9 1.4-2.7 1.4-4 0.8-3.3 0.5-4.2-0.3-14.3 0.3-5.7 0.8-4.2 3.4-14.3 0.8-5.7-0.1-2.8-0.7-4.3-1.3-5.7-1.2-4.3-3.2-7.1-4-10.8-2.2-4.9-3.5-5.7-3.4-4.2-15-12.8-20.1-15.6-14.2-10.3-5.7-3.3-7.1-3.3-4.3-1.7-4.3-0.7-2.8 0.2-2.9 0.6-11.4 3.6-7.1 3.1-10 5.4-7.3 4.9-9.4 7.1-6.7 5.7-8.5 8.5-2.2 3.2-2 3.9-2.2 5.7-2.7 8.6-4 19.9-1.5 10-3 10-0.4 2.8 0.2 4.3 2.9 17.1 0.9 8.5 0 5.7-1.1 10 0.3 5.7 1 4.3 1.1 2.8 2.9 5.7 2.8 4.3 1.9 2.1 1.4 1.1 10.5 5.3 4.7 2.9 6.2 4.6 4.3 2.2 2.8 0.5 8.6-0.7 4.2 0.4 5.7 1.6 8.6 3.5 3.5 0.7M365.5 478.1l4 0.1 4.3-0.9 11.4-5.1 9.9-2.6 10-3.8 10-2.5 2.8-0.4 2.9 0.1 9.9 2.1 2.9-0.4 1.5-0.9 1.5-1.4 3.6-5.7 3.1-4.2 7.3-8.6 3.6-5.7 2.1-4.3 1-4.2 0.6-4.3 0.2-4.3-0.2-7.1 0.4-4.3 2.9-12.8 0.9-5.7 0-5.7-0.4-7.1-1.1-5.7-1.2-4.3-5.9-14.8-2.4-5.1-3.3-5.6-3.4-4.4-2.8-2.8-11.1-10-18.3-14.1-15.6-11.1-4.3-2.4-5.7-2.2-5.7-1.5-4.3-0.5-2.8 0-2.9 0.5-4.3 0.9-4.2 1.4-11.4 4.9-7.1 3.7-5.7 4-11.1 9.3-4.4 4.3-7.8 8.5-1.9 2.8-1.3 2.9-2.6 7.1-1.7 5.7-4.2 20-3.1 21.3 0.5 15.7 1.8 15.6-1 11.4 0.3 7.2 0.8 4.2 1.4 4.3 1.5 3.8 1.4 2.5 2.1 2.2 2.1 1.5 12.9 6.5 8.6 4.8 1.4 0.6 2.8 0.5 5.7 0.2 4.3 0.6 10 2.6 5.7 1.9 3.1 0.8M364.1 472.4l4 0.5 3.5-0.5 9.3-3.6 14.2-4.2 10-3.9 12.8-4.2 2.9-0.4 5.7 0.3 2.8-0.3 2.9-1.2 5.7-4.2 4.2-3.9 3.4-4.3 3.7-8.6 2.9-5 1.4-3.2 0.9-4.6-0.2-8.5 0.2-2.9 2.5-9.9 0.8-5.7 0.1-4.3-0.5-12.8-0.6-4.3-1.1-4.3-2.8-7.1-3.6-7.4-3.7-6.8-4-5.7-6.8-7.2-5.4-5-17.4-13.5-4-2.8-15.6-10.1-2.9-1.2-4.2-1.2-7.2-1.2-2.8 0-2.9 0.3-8.5 2.1-8.5 3.3-8.6 4.4-5.2 3.6-10.3 8.5-4.2 4.3-6.3 7.1-2 2.9-1.4 2.8-2.6 7.1-1.7 5.7-3.2 17.1-0.8 7.1-1.3 8.6-0.9 7.1-0.4 12.8 2 18.5-0.6 10 0.1 2.9 0.8 5.7 1 4.2 1.4 4.1 1.7 3.1 2.6 2.8 4 2.8 14.5 7.7 2.8 0.8 7.2 0.7 2.8 0.5 17.4 4.6M357.1 465.3l8.1 1.2 2.9 0 2.8-0.5 12.8-3.3 7.2-2.2 5.4-2.4 7.4-3.7 11.4-5 2.8-1 4.3-0.8 7.1 0.1 2.9-0.6 1.4-0.5 2.8-1.7 2.2-2.4 1.3-2.9 1.3-5.7 1.1-2.8 1.8-2.9 3.7-4.3 1.4-2.6 0.5-1.6 0.6-10 2.2-8.5 0.9-5.7 0.3-7.1-0.5-12.9-0.9-5.6-1.5-4.3-2-4.3-5.2-9.5-4-6.2-3.4-4.2-5.1-5.7-4.8-4.3-15.5-11.9-4.3-2.9-15.6-9.3-2.9-1.2-4.3-1.1-4.2-0.5-4.3 0-4.3 0.7-7.1 1.9-5.7 2-4.3 2-5.7 3.2-4.2 3-6.7 5.6-4.7 4.5-5 5.4-3.2 4.3-1.5 2.8-1.7 4.3-2 7.1-1.3 5.7-2 12.9-1.2 9.9-1.4 8.6-1.1 12.8 1 12.8 1.1 17.1 0.7 4.3 1.4 4.2 2.6 5.7 3.6 5.2 3.5 3.4 6.5 4.5 2.8 1.6 2.7 1 5.9 1.1 8.5 2.3 4.7 0.9M354 459.6l4.1 0.5 7.1 0 11.4-1.1 5.7-1 4.3-1.3 3.3-1.4 12.4-7 9.9-4.6 7.1-2.7 2.9-0.7 4.3-0.7 2.8-0.9 1.4-1 2-2.3 5.2-10.4 5.8-8.2 1.3-3.3 3.7-13.7 0.7-5.7 0.2-7.2-0.8-12.8-0.7-4.2-1-2.9-2-4.3-4.8-8.5-3.7-5.7-5.9-7.4-4.2-4.5-17.1-13.4-4.3-2.8-10-5.7-7.1-3.2-4.3-1.2-4.2-0.4-5.7 0.2-4.3 0.8-4.3 1.2-5.7 2.2-7.1 3.3-4 2.4-3.1 2.4-3.6 3.3-6.8 7.1-2.4 2.9-2.9 4.3-2.2 4.2-1.1 2.9-3.2 12.8-3.8 28.5-0.7 9.9 0.5 22.8 0.6 4.2 0.7 2.9 6.4 14.8 2.8 3.8 4.3 4.2 2.8 2.2 2.9 1.4 11.4 4.1 3 0.9M351.3 452.5l4 1 2.8 0.3 8.5-0.6 10 0.1 2.9-0.3 2.8-0.6 4-1.4 3.1-1.3 12.9-7.3 15.6-7.7 7.1-3 2.9-2 1.4-1.5 5.4-8.5 4.6-6.6 2.8-5.4 2.2-6.5 1-5.7 0.3-5.7-0.4-5.7-1.5-12.8-0.8-2.9-1.9-4.2-4.6-8-3.1-4.9-4-5.2-5.6-6.2-8.1-7.1-4.8-3.8-5.7-3.8-8.5-4.8-5.7-2.5-5.7-1.8-2.9-0.5-4.3-0.2-4.2 0.3-4.3 0.7-4.3 1.3-7.1 2.9-4.3 2.1-2.4 1.6-3.3 2.8-4.2 4.6-4.6 5.4-4 5.5-1.7 3-1.9 4.3-2.5 8.6-1.1 5.7-1.5 12.8-1.1 7.1-0.5 8.5 0.1 4.3 0.9 8.6 0.1 12.8 1.1 7.1 4.1 12.8 1.2 2.3 1.4 2 2.8 2.6 4.3 3.1 2.9 1.5 7.4 2.8M354.6 445.3l3.5 0.8 7.1 0.4 10-0.3 4.3-0.5 4.2-1.2 7.2-2.5 17-8.4 14.2-8.2 3.6-2.9 10.9-14.2 2.4-4.3 1.4-4.2 1.1-5.7 0.1-4.3-0.5-4.3-2-12.8-0.7-2.8-1.9-4.3-5.9-10-4.1-5.6-6.6-7.2-7.4-7.1-3.1-2.7-4.8-3-8-4.3-4.3-2-4.3-1.5-2.8-0.6-4.3-0.4-4.3 0-4.3 0.4-4.2 1-4.3 1.4-4 1.7-2.5 1.4-3.5 2.6-2.8 2.6-6.6 7.6-3 4.3-2.5 4.3-1.3 2.8-1.4 4.3-1.8 7.1-1.3 7.2-1.8 18.5 0.2 7.1 1.1 7.1 0.7 10 2 14.2 1.7 5.7 1.2 2.5 1.4 1.8 1.7 1.4 7.1 4.3 2.7 1.4 3.5 1.4M362 439.6l4.6 0.9 4.3-0.3 17.1-3.7 5.7-2.1 12.8-6.5 10-6 2.8-2 2.9-2.7 7.1-7.4 2.9-3.4 2.3-3.8 1.8-4.3 0.7-2.8 0.5-4.3-0.4-4.3-3.2-14.2-0.9-2.8-2-4.3-2.4-4.3-2.9-4.3-9.5-11.4-5.4-5.1-4.2-3.4-4.3-2.7-5.8-3-5.6-2.5-4.3-1.3-4.3-0.5-5.7 0.1-4.3 0.4-2.8 0.7-2.9 1.1-3.8 2-3.3 2-3.2 2.3-2.5 2.3-2.9 3.4-2.8 4.2-3.2 5.7-1.7 4.3-3.3 11.4-0.8 5.7-0.4 7.1-0.9 8.6-0.2 5.7 1.4 8.5 0.6 7.9 2.5 13.5 1.1 2.8 0.8 1.4 2.6 2.9 5.8 3.7 6.3 3.4 3.3 1.4M364.6 432.5l3.5 1 2.8 0.1 15.7-2.5 5.7-1.9 11.4-5.1 10.7-7.3 9.2-7.8 2.2-2.1 2.3-2.9 1.7-2.8 1.9-4.3 0.8-2.8 0.4-2.9-0.3-4.3-3.3-12.8-1.4-3.7-1.4-2.9-4.3-6.6-9.1-11-2.9-2.8-3.7-3-4.2-3.1-4.3-2.4-5.7-2.8-4.3-1.6-2.8-0.5-2.9-0.2-4.3 0.1-2.8 0.4-2.9 0.8-4.2 1.8-2.9 1.5-2.6 1.8-4.5 4.3-2.3 2.9-2 3.1-3.5 6.8-1.7 4.3-1.3 4.3-1.7 9.9-1.2 12.9-0.2 4.2 0.5 5.7 1.4 8.6 1 4.3 2.5 8.5 1.4 2.7 1.4 2.1 2.3 2.3 2 1.4 7.9 4.3M371.4 425.4l6.6 0.6 7.2-0.6 4.2-0.8 5.7-1.5 5.7-2.4 4-2.4 4.6-3.3 11.6-9.5 2.5-2.9 1.5-2.6 1.4-3.1 0.8-2.8 0.4-2.9-0.1-2.8-0.7-4.3-1.4-5.7-2.3-5.7-2.2-4.3-1.8-2.8-8.3-9.8-4.3-4-6.5-4.7-3.4-2.1-4.3-1.9-4.3-1.3-2.8-0.4-2.9-0.1-2.8 0.3-2.9 0.6-4.9 2-2.3 1.4-2.8 2.1-2.2 2.2-2.4 2.9-2.5 3.3-2.3 3.8-2.5 5.7-1.8 7.1-0.9 7.1-0.6 8.6 0 5.7 0.7 5.7 1.4 7.1 0.8 2.8 1.7 4.3 1.5 2.8 2 2.7 1.5 1.4 2.3 1.6 1.9 1.1 2.9 1.1 3.3 0.7M375.9 419.7l5 0.3 8.5-0.6 5.7-1.1 4.3-1.7 7.1-4.8 10.9-9.2 1.9-2.3 1.2-2 1.4-4.2 0.2-2.9-0.2-2.8-1.6-7.2-2.9-7.1-1.5-2.8-1.8-2.9-1.9-2.1-4.3-4.2-5.6-4.5-7.2-4.4-2.8-1.2-2.9-0.8-4.2-0.4-5.7 0.8-4.3 1.4-2.9 1.8-2.8 3-4.2 6.4-3.6 7.1-1.2 2.8-0.7 2.9-0.7 9.9 0.1 7.2 0.6 7.1 1.2 4.7 2.8 5.8 1.4 2.1 1.5 1.6 1.8 1.4 2.4 1.4 2.9 1.1 2.1 0.4M379.4 414l4.3 0.6 7.2-0.2 4.2-0.9 2.9-1.2 5.7-3.8 7.1-6 3.6-4.2 0.8-1.4 1-2.8 0.2-1.5-0.1-2.8-1.3-5.7-2.3-5.7-2.5-4.3-3.7-4-4.2-3.3-5.7-3.4-4.3-1.5-4.3-0.6-4.3 0.2-2.8 0.7-2.9 1.5-2.8 2.6-4.3 5.7-2 3.5-1.4 4.3-0.9 4.3-0.3 4.3 0.7 9.9 0.5 2.9 0.8 2.8 1.4 2.9 2.6 3.4 3.2 2.3 3.9 1.4M384.9 408.3l3.1 0.7 4.3 0 2.8-0.6 2.9-1.3 4.2-3.1 2.9-2.8 3.2-4.3 1.2-2.8 0.3-2.9-0.6-4.3-1.3-3.9-1.7-3.2-2.5-3-2.9-2.3-4.2-2.3-2.9-1-2.8-0.4-4.3 0.4-2.9 1.2-1.4 1.1-2.8 2.9-2.4 3.4-1.4 2.9-0.9 2.8-0.5 4.3 0 4.3 0.6 4.2 1.1 2.9 2 2.8 1.5 1.5 2.8 1.8 2.6 1M389.2 402.6l3.1 0.4 2.1-0.4 2.2-0.9 2.4-1.9 1.3-1.5 0.9-1.4 1.2-2.8 0.3-1.5-0.1-2.8-0.3-1.5-1.4-2.8-1.5-1.6-1.4-1.2-1.4-0.8-2.9-1.1-2.8-0.2-1.5 0.3-2.8 1.5-1.4 1.2-1.5 1.9-1.3 2.9-0.3 1.4-0.2 1.4 0.2 2.9 0.4 1.4 1.2 2.7 1.2 1.6 1.5 1.4 2.8 1.4"/></g><path d="M389.5 388.4l8.4 8.4M389.5 396.8l8.4 -8.4" stroke="#f00" stroke-width="1.6" fill="none"/><rect x="141.4" y="109.4" width="486.1" height="485.7" fill="none" stroke="#000" stroke-width="1.1"/><path d="M141.6 595.1v4.9M236.6 595.1v4.9M331.5 595.1v4.9M426.5 595.1v4.9M521.4 595.1v4.9M616.3 595.1v4.9M141.4 594.9h-4.9M141.4 499.9h-4.9M141.4 405.0h-4.9M141.4 310.0h-4.9M141.4 215.1h-4.9M141.4 120.2h-4.9" stroke="#000" stroke-width="1.1" fill="none"/><text x="141.6" y="615.5" text-anchor="middle">0</text><text x="236.6" y="615.5" text-anchor="middle">200</text><text x="331.5" y="615.5" text-anchor="middle">400</text><text x="426.5" y="615.5" text-anchor="middle">600</text><text x="521.4" y="615.5" text-anchor="middle">800</text><text x="616.3" y="615.5" text-anchor="middle">1000</text><text x="131.7" y="600.0" text-anchor="end">0</text><text x="131.7" y="505.0" text-anchor="end">200</text><text x="131.7" y="410.1" text-anchor="end">400</text><text x="131.7" y="315.1" text-anchor="end">600</text><text x="131.7" y="220.2" text-anchor="end">800</text><text x="131.7" y="125.3" text-anchor="end">1000</text><text x="384.5" y="100.8" text-anchor="middle" font-size="16.67px">H1:ITMX 1443878958</text><defs><linearGradient id="cbitmx" x1="0" y1="0" x2="0" y2="1"><stop offset="0.0000" stop-color="#fde725"/><stop offset="0.0312" stop-color="#ece51b"/><stop offset="0.0625" stop-color="#d8e219"/><stop offset="0.0938" stop-color="#c2df23"/><stop offset="0.1250" stop-color="#addc30"/><stop offset="0.1562" stop-color="#98d83e"/><stop offset="0.1875" stop-color="#84d44b"/><stop offset="0.2188" stop-color="#70cf57"/><stop offset="0.2500" stop-color="#5ec962"/><stop offset="0.2812" stop-color="#4ec36b"/><stop offset="0.3125" stop-color="#3fbc73"/><stop offset="0.3438" stop-color="#32b67a"/><stop offset="0.3750" stop-color="#28ae80"/><stop offset="0.4062" stop-color="#22a785"/><stop offset="0.4375" stop-color="#1fa088"/><stop offset="0.4688" stop-color="#1f988b"/><stop offset="0.5000" stop-color="#21918c"/><stop offset="0.5312" stop-color="#23898e"/><stop offset="0.5625" stop-color="#26828e"/><stop offset="0.5938" stop-color="#297a8e"/><stop offset="0.6250" stop-color="#2c728e"/><stop offset="0.6562" stop-color="#2f6b8e"/><stop offset="0.6875" stop-color="#33638d"/><stop offset="0.7188" stop-color="#375b8d"/><stop offset="0.7500" stop-color="#3b528b"/><stop offset="0.7812" stop-color="#3e4989"/><stop offset="0.8125" stop-color="#424086"/><stop offset="0.8438" stop-color="#453781"/><stop offset="0.8750" stop-color="#472d7b"/><stop offset="0.9062" stop-color="#482374"/><stop offset="0.9375" stop-color="#48186a"/><stop offset="0.9688" stop-color="#470d60"/><stop offset="1.0000" stop-color="#440154"/></linearGradient></defs><rect x="632.4" y="109.4" width="24.2" height="485.7" fill="url(#cbitmx)" stroke="#000" stroke-width="1.1"/><text x="666.3" y="114.5">0</text><text x="666.3" y="183.1">−10</text><text x="666.3" y="251.7">−20</text><text x="666.3" y="320.3">−30</text><text x="666.3" y="388.9">−40</text><text x="666.3" y="457.5">−50</text><text x="666.3" y="526.1">−60</text><text x="666.3" y="594.7">−70</text><path d="M656.6 109.4h4.9M656.6 178.0h4.9M656.6 246.6h4.9M656.6 315.2h4.9M656.6 383.8h4.9M656.6 452.4h4.9M656.6 521.0h4.9M656.6 589.6h4.9" stroke="#000" stroke-width="1.1" fill="none"/><text transform="translate(710.8 352.3) rotate(-90)" text-anchor="middle">Optical density [nm]</text><path d="M989.7 547.0L991.4 538.6M1011.8 545.0L1014.0 538.8M1027.6 546.5L1029.0 534.0M1045.8 547.4L1042.7 537.9M1065.2 547.9L1062.3 540.8M943.1 529.7L953.8 515.5M962.8 532.0L970.1 526.3M980.6 529.4L984.8 520.9M1017.2 528.4L1022.4 519.4M1036.7 532.2L1036.5 526.4M1054.3 530.7L1053.4 518.7M1074.3 526.9L1070.6 516.8M1093.8 529.7L1091.6 520.3M1110.4 529.2L1101.6 519.0M899.6 513.8L902.3 511.8M916.0 516.0L916.3 515.6M933.9 515.5L934.2 515.1M953.3 514.3L957.4 511.0M972.3 510.1L979.6 499.7M989.9 517.8L993.8 510.7M1008.1 513.6L1010.9 501.6M1028.8 513.1L1031.6 496.9M1046.7 512.3L1046.6 504.5M1064.2 515.4L1060.8 500.1M1082.8 511.6L1080.0 501.7M1103.5 513.1L1101.5 510.2M1120.9 513.1L1112.7 497.1M1137.5 514.0L1125.9 501.3M1158.7 512.3L1150.5 503.9M871.9 499.2L872.1 499.0M906.5 498.4L906.9 497.9M925.4 496.3L924.4 483.2M945.6 498.7L962.3 475.6M960.2 497.5L963.3 494.3M980.1 496.7L990.3 485.6M999.8 497.9L1000.5 494.7M1020.1 496.1L1026.2 484.7M1038.0 497.4L1039.1 483.1M1055.8 497.5L1056.5 486.0M1073.4 497.9L1072.3 489.8M1093.3 497.6L1065.8 532.4M1112.9 495.6L1105.2 482.0M1129.3 496.2L1122.4 482.6M1147.8 500.0L1136.9 489.2M1165.7 497.9L1165.3 497.6M1184.9 498.1L1177.9 490.1M859.8 480.4L865.6 473.7M880.2 481.8L882.3 478.2M899.3 482.8L901.1 474.4M918.4 479.6L926.6 466.5M935.2 482.0L940.0 472.5M953.5 482.8L959.1 464.2M974.4 482.8L978.0 477.7M1010.1 483.6L1013.5 475.2M1027.7 479.6L1027.9 469.6M1043.8 482.5L1042.3 474.3M1066.1 481.9L1063.4 477.4M1085.3 479.5L1083.1 468.5M1101.4 483.6L1095.3 471.8M1120.6 482.0L1120.3 471.5M1139.8 484.1L1136.8 480.2M1158.2 481.8L1151.5 478.5M1176.5 483.3L1171.6 476.5M1192.9 482.7L1184.2 476.1M1212.6 482.2L1207.6 479.7M851.5 466.4L855.9 459.9M869.4 468.1L871.5 464.2M888.2 467.3L892.7 462.8M907.3 467.9L913.0 458.4M927.8 464.3L934.9 454.0M944.9 465.5L950.9 461.6M981.8 464.2L986.8 451.8M1001.4 466.9L1020.4 444.3M1039.4 465.0L1044.2 443.4M1055.0 467.8L1059.8 452.4M1073.6 468.2L1073.0 458.8M1094.8 465.7L1094.0 458.2M1110.1 465.7L1110.1 465.2M1130.0 466.1L1119.8 452.9M1148.7 464.6L1144.2 455.2M1167.2 466.5L1162.9 461.9M1184.5 467.1L1180.2 465.9M1203.8 464.7L1189.8 462.1M1221.2 464.5L1218.5 462.9M863.6 449.4L866.6 447.9M880.0 449.5L880.9 447.8M900.0 450.6L907.8 440.9M916.8 448.6L922.9 442.3M937.5 450.1L953.9 434.9M953.0 447.3L963.2 438.5M971.7 450.3L988.4 429.2M990.1 448.7L990.3 448.4M1009.6 449.0L1008.5 435.5M1028.4 453.4L1029.8 446.7M1047.3 450.8L1049.2 441.0M1066.7 449.6L1066.7 449.2M1083.8 448.8L1077.2 430.8M1101.2 452.5L1098.9 439.5M1122.4 448.2L1116.0 439.7M1139.6 451.1L1133.1 433.5M1155.7 448.6L1150.0 439.8M1177.4 449.3L1167.2 442.6M1195.7 448.2L1191.2 447.6M1210.5 449.7L1200.3 445.0M851.1 433.1L858.2 428.4M868.8 431.9L874.7 430.5M889.2 433.0L892.1 429.6M908.4 433.7L919.7 426.0M927.3 434.2L934.3 426.6M942.7 433.4L951.2 425.8M960.4 432.4L967.6 420.3M981.0 433.0L984.8 424.8M998.8 435.4L1004.5 423.1M1018.9 434.8L1024.0 426.3M1036.3 435.2L1039.0 424.3M1055.4 432.6L1056.7 424.9M1073.7 433.3L1074.1 426.4M1094.1 432.9L1079.8 416.3M1111.9 432.2L1100.8 421.6M1129.5 432.7L1095.9 400.6M1166.8 432.3L1161.2 430.5M1184.8 436.4L1181.0 434.8M1205.0 435.5L1207.1 429.0M1222.1 434.1L1218.7 433.7M842.0 417.8L844.0 417.7M862.7 418.2L869.2 414.4M880.8 416.6L887.4 408.4M899.3 418.5L902.3 414.9M917.6 419.6L928.8 411.4M935.0 416.9L946.9 411.5M954.9 416.2L967.4 407.7M974.3 417.7L979.1 408.8M992.9 417.7L1005.8 412.4M1008.9 417.1L1014.8 411.3M1028.3 416.9L1033.2 409.7M1047.1 417.2L1048.4 405.5M1063.6 417.7L1057.3 406.7M1084.2 418.0L1080.1 409.2M1101.4 417.1L1094.9 409.5M1119.4 417.1L1061.7 357.4M1140.2 417.8L1124.3 408.3M1158.4 417.6L1152.7 414.9M1176.7 417.5L1171.3 416.7M1194.8 417.2L1195.2 423.3M1213.8 416.7L1206.0 416.4M1232.8 416.9L1225.5 415.9M834.7 401.0L840.2 400.0M852.4 403.1L857.2 401.0M871.3 402.7L907.3 395.2M887.6 401.0L893.0 400.6M907.6 402.9L915.8 394.5M926.8 402.1L934.8 398.1M945.2 402.4L958.8 396.4M964.6 401.9L965.7 401.2M982.8 402.2L1018.0 396.9M1001.6 401.6L1019.4 398.9M1037.5 402.0L1039.3 395.2M1054.5 403.6L1048.5 397.4M1074.8 403.4L1062.2 388.5M1094.3 402.9L1088.3 399.2M1109.8 401.7L1097.5 394.1M1131.9 399.5L1133.9 405.4M1150.4 402.4L1145.9 399.2M1167.1 402.1L1161.6 399.4M1185.8 403.1L1145.3 401.1M1201.7 401.6L1198.2 402.6M1222.8 401.5L1220.7 401.7M845.6 384.6L855.4 382.9M862.2 382.8L868.4 382.6M880.7 386.9L877.7 378.6M896.1 385.0L920.4 376.7M917.6 385.6L923.5 383.6M936.6 384.5L945.3 382.6M953.5 388.7L960.3 385.0M971.2 383.2L989.0 385.4M989.7 385.1L1012.2 385.3M1010.7 383.8L1014.7 384.3M1026.7 385.4L1027.7 386.3M1045.4 386.2L1033.2 389.6M1064.3 385.1L1055.3 383.7M1084.1 385.7L1074.8 383.9M1102.4 382.5L1086.4 381.5M1119.1 384.8L1108.1 378.5M1138.7 384.5L1134.5 383.4M1155.9 385.4L1149.6 384.8M1178.7 386.1L1178.3 386.0M1211.3 387.3L1210.3 387.8M1231.9 387.6L1219.0 385.4M832.6 369.8L833.3 369.9M851.9 369.6L863.6 371.4M872.1 368.7L873.7 368.7M887.7 369.6L892.1 369.8M907.2 366.8L922.5 368.2M925.9 371.4L943.5 371.9M945.1 368.9L953.6 372.3M962.1 368.1L980.1 373.7M980.6 370.7L989.4 373.9M998.7 368.0L1002.2 369.6M1018.6 366.0L1022.6 374.0M1055.0 368.7L1053.1 364.5M1074.6 369.6L1066.7 374.3M1091.8 371.1L1086.6 370.6M1109.4 367.5L1108.9 367.6M1126.9 369.8L1119.2 369.4M1148.0 369.8L1139.1 370.7M1168.0 369.6L1156.3 371.4M1187.5 371.7L1183.2 371.3M1204.0 368.5L1175.1 365.3M1223.2 373.0L1215.1 374.6M1241.8 369.0L1241.1 369.1M842.0 352.9L843.9 353.8M860.1 353.4L860.8 353.5M878.4 353.0L885.9 351.6M898.0 353.5L898.3 353.7M917.7 353.7L928.1 356.4M935.6 354.4L941.6 356.0M956.7 353.4L969.0 356.6M972.7 353.7L982.3 357.4M989.8 353.7L1000.6 361.1M1027.2 353.2L1028.2 359.6M1046.8 353.8L1045.4 358.8M1062.3 353.7L1056.8 361.7M1084.9 351.8L1081.3 356.2M1102.8 356.5L1093.7 359.0M1117.8 353.0L1109.7 353.4M1140.0 352.6L1125.7 354.6M1157.0 353.2L1148.2 356.1M1197.1 352.5L1186.7 352.1M1213.7 353.9L1211.3 354.6M1233.0 351.0L1226.3 351.5M833.3 338.0L837.2 339.8M853.5 336.5L854.2 336.6M869.3 337.7L872.8 338.7M890.5 337.3L897.0 340.7M908.7 336.4L918.5 322.2M925.4 338.6L930.4 340.5M944.4 335.7L952.7 343.0M963.1 337.6L978.1 345.0M985.8 338.0L989.0 342.6M1002.6 336.2L1008.0 345.5M1018.5 335.6L1021.7 342.3M1036.6 337.8L1035.9 345.3M1053.8 338.7L1050.5 346.0M1092.0 337.4L1087.5 343.3M1110.7 336.2L1099.4 344.9M1130.2 336.3L1124.3 339.3M1147.9 337.2L1142.0 340.6M1166.1 340.8L1147.4 347.2M1184.7 337.0L1182.4 338.5M1203.4 338.1L1201.1 339.0M1221.6 335.7L1221.1 335.7M1239.3 338.6L1236.0 339.5M824.1 321.3L824.6 321.7M844.7 322.7L848.2 324.9M862.0 322.4L863.6 323.6M879.6 320.5L883.9 323.5M898.7 324.3L900.9 325.2M915.1 322.5L924.8 329.1M935.9 320.9L936.4 321.2M954.8 321.6L955.0 322.0M975.6 321.1L975.8 321.6M990.1 320.8L989.0 312.5M1027.0 322.1L1029.4 326.7M1048.0 320.8L1047.7 322.6M1065.8 323.9L1065.1 328.8M1084.6 321.0L1082.6 328.9M1102.3 322.6L1096.7 332.2M1118.4 320.5L1115.6 323.8M1137.1 321.6L1132.5 325.8M1155.7 321.1L1153.5 324.1M1175.5 322.5L1173.8 323.5M1193.3 325.0L1190.7 326.4M1213.1 320.8L1208.7 320.9M1232.9 323.2L1231.7 323.4M833.8 306.3L837.3 308.3M853.7 306.6L858.5 308.6M871.9 307.5L875.4 310.4M887.4 306.2L890.5 307.8M925.4 305.7L928.0 311.9M946.6 308.0L957.4 318.5M962.2 304.9L968.0 312.9M981.6 306.1L983.8 310.8M999.0 305.1L1001.4 315.1M1019.6 304.3L1023.4 324.5M1038.2 307.9L1008.9 329.8M1057.1 303.7L1062.8 314.1M1072.6 303.9L1072.1 313.8M1091.8 304.3L1087.0 313.5M1111.9 302.6L1109.5 307.7M1128.9 304.2L1126.5 306.9M1148.8 304.1L1148.0 304.7M1166.1 306.6L1153.3 312.2M1185.3 307.2L1182.7 309.5M1204.8 304.6L1202.5 304.7M1221.5 303.4L1221.2 303.6M1239.1 303.7L1236.5 304.4M860.8 288.6L861.9 289.5M876.7 287.6L877.9 289.6M900.0 288.0L903.1 295.1M915.5 291.9L915.6 292.3M935.2 288.7L937.4 291.1M953.0 287.4L954.6 290.5M972.2 288.3L978.6 305.3M992.4 289.5L993.1 298.3M1007.1 288.7L1009.2 303.4M1026.4 286.6L1026.6 287.0M1044.9 286.6L1046.7 292.5M1064.1 291.0L1063.5 296.2M1083.3 286.7L1078.7 308.4M1102.0 289.8L1101.7 293.0M1119.5 290.8L1118.3 298.0M1137.7 291.2L1134.7 299.1M1158.9 287.5L1150.5 304.7M1177.3 288.4L1172.5 292.3M1193.7 290.9L1193.1 291.3M1213.0 289.0L1210.0 292.4M1234.6 290.9L1230.9 290.3M852.6 274.0L852.9 274.4M870.1 274.4L872.2 276.7M889.9 273.3L891.2 275.1M905.4 274.6L907.6 277.1M926.5 275.4L928.2 282.0M945.6 274.7L948.3 278.7M960.5 272.1L964.0 278.1M983.1 272.1L989.2 281.1M998.8 272.8L999.6 277.8M1015.6 272.6L1017.0 279.1M1039.4 272.6L1039.6 273.1M1056.9 270.5L1058.0 274.3M1071.9 273.0L1076.2 293.5M1091.9 272.2L1092.7 287.8M1110.0 272.5L1109.1 275.9M1131.3 273.5L1130.5 270.5M1146.0 275.1L1139.1 284.0M1166.2 272.6L1155.7 283.6M1183.0 273.2L1177.8 279.8M1203.5 271.3L1203.0 271.6M1220.4 274.0L1218.3 275.8M862.5 254.4L865.1 256.0M877.4 258.9L881.0 264.1M916.4 258.3L916.1 273.4M935.9 253.2L936.2 253.7M952.6 257.3L955.4 265.8M971.2 256.0L974.9 255.2M990.1 255.6L990.7 263.7M1010.4 257.3L1017.1 249.8M1027.0 257.6L1030.1 267.0M1048.2 257.6L1050.5 265.3M1063.9 258.4L1065.3 264.6M1084.4 257.7L1088.6 269.2M1104.5 256.8L1104.2 263.1M1120.7 258.2L1122.7 263.5M1138.7 257.0L1136.8 261.1M1158.3 258.4L1157.5 259.3M1174.8 256.6L1175.7 256.0M1211.6 257.1L1211.2 257.6M888.9 240.6L890.9 244.6M906.4 243.5L908.4 247.3M925.0 241.3L927.2 245.2M945.5 240.2L949.3 251.4M963.1 241.8L963.2 242.5M981.0 242.1L983.6 246.3M1001.9 240.0L1005.4 245.3M1019.0 242.1L1019.7 245.0M1036.9 240.6L1037.3 241.4M1053.3 243.4L1054.7 256.6M1072.5 243.3L1073.8 250.8M1111.6 242.3L1111.4 244.5M1130.9 240.3L1131.9 245.2M1167.1 241.9L1163.9 244.6M1186.0 242.0L1185.6 242.4M1203.1 241.9L1202.0 243.3M880.4 227.5L881.2 229.1M899.9 228.4L900.5 229.5M917.3 223.4L918.8 229.0M936.2 222.3L937.0 225.0M952.9 224.7L953.1 225.3M971.4 223.4L971.9 226.0M992.1 225.7L994.2 235.3M1009.4 224.4L1009.7 228.3M1028.1 226.0L1006.6 202.5M1046.2 222.7L1046.0 223.3M1066.5 226.6L1066.9 229.1M1083.5 225.3L1081.8 232.7M1101.0 226.6L1100.9 227.0M1139.5 224.1L1139.4 225.5M1159.7 227.2L1158.6 229.0M1175.9 224.8L1175.4 225.3M906.9 208.6L907.1 209.0M926.3 209.7L931.7 218.3M945.3 207.4L945.5 208.1M963.5 208.5L963.6 209.1M985.3 210.5L995.1 231.4M1001.4 209.4L1002.2 211.4M1017.8 209.0L1017.9 209.6M1039.7 209.1L1039.9 210.6M1054.8 209.0L1057.9 217.7M1074.7 207.7L1074.7 208.3M1093.1 207.7L1092.2 210.0M1111.8 211.0L1112.3 210.8M1148.4 207.9L1146.5 211.6M1163.6 207.9L1163.3 208.2M899.3 193.0L903.3 196.8M917.0 192.6L917.2 193.2M934.6 194.7L934.9 195.3M955.1 192.7L956.7 198.9M970.8 195.4L970.8 197.5M991.0 192.6L994.3 199.9M1007.5 192.3L1007.5 195.4M1026.1 195.3L1025.7 198.2M1047.1 196.2L1045.6 202.5M1064.3 191.4L1064.0 194.4M1082.9 192.5L1082.0 196.2M1100.8 192.4L1098.7 196.7M1122.3 192.1L1121.7 195.5M1137.1 193.4L1136.9 194.0M926.7 177.6L930.4 182.1M960.9 175.7L963.4 179.3M981.4 176.6L987.3 190.6M1000.4 178.0L1000.4 178.4M1020.0 174.3L1020.0 174.9M1037.9 176.5L1037.7 177.1M1073.4 177.8L1070.8 182.4M1111.7 176.3L1111.9 172.4M1131.5 178.6L1131.5 179.0M1147.9 176.8L1145.7 180.9M934.6 161.9L935.1 162.3M954.1 159.6L964.9 171.1M974.2 159.8L981.3 173.1M991.0 159.6L992.0 163.9M1011.3 160.9L1011.3 161.6M1026.4 160.5L1027.6 164.5M1046.2 162.8L1046.0 166.4M1064.9 162.1L1063.1 165.1M1100.4 160.5L1100.2 161.0M1119.9 160.6L1118.8 162.3M964.1 144.1L964.9 145.0M981.8 145.7L981.9 146.0M1001.1 144.1L1000.9 159.6M1018.0 144.8L1018.8 149.1M1054.4 144.2L1054.1 144.9M1074.3 144.8L1073.7 146.5M1092.3 145.6L1092.3 147.9" stroke="#000" stroke-width="1.5" fill="none"/><path d="M992.6 532.8L993.5 539.8L991.4 538.6L989.0 538.8zM1015.9 533.2L1015.9 540.2L1014.0 538.8L1011.5 538.7zM1029.6 528.2L1031.2 535.0L1029.0 534.0L1026.6 534.5zM1040.9 532.2L1045.1 537.8L1042.7 537.9L1040.8 539.2zM1060.0 535.3L1064.6 540.5L1062.3 540.8L1060.4 542.3zM957.4 510.8L955.2 517.5L953.8 515.5L951.5 514.7zM974.7 522.7L971.0 528.5L970.1 526.3L968.1 524.9zM987.5 515.7L986.6 522.6L984.8 520.9L982.5 520.5zM1025.3 514.3L1024.0 521.1L1022.4 519.4L1020.0 518.8zM1036.4 520.5L1038.9 527.1L1036.5 526.4L1034.3 527.2zM1052.9 512.8L1055.7 519.2L1053.4 518.7L1051.1 519.5zM1068.6 511.3L1073.0 516.7L1070.6 516.8L1068.7 518.3zM1090.2 514.5L1094.0 520.4L1091.6 520.3L1089.5 521.5zM1097.8 514.6L1103.8 518.1L1101.6 519.0L1100.4 521.1zM907.0 508.3L903.1 514.1L902.3 511.8L900.3 510.4zM919.0 511.5L917.6 517.1L916.3 515.6L914.4 515.0zM936.4 511.0L935.5 516.4L934.2 515.1L932.3 514.7zM962.1 507.3L958.3 513.2L957.4 511.0L955.5 509.6zM983.0 494.9L981.0 501.6L979.6 499.7L977.3 499.0zM996.6 505.5L995.4 512.4L993.8 510.7L991.4 510.3zM1012.3 495.9L1013.0 502.9L1010.9 501.6L1008.5 501.8zM1032.6 491.1L1033.8 498.0L1031.6 496.9L1029.2 497.2zM1046.6 498.6L1048.9 505.2L1046.6 504.5L1044.3 505.2zM1059.6 494.4L1063.2 500.3L1060.8 500.1L1058.7 501.3zM1078.5 496.0L1082.4 501.7L1080.0 501.7L1078.0 502.9zM1098.2 505.4L1103.8 509.5L1101.5 510.2L1100.0 512.1zM1110.0 491.8L1115.0 496.6L1112.7 497.1L1110.9 498.7zM1121.9 496.9L1128.1 500.3L1125.9 501.3L1124.7 503.4zM1146.3 499.7L1152.6 502.8L1150.5 503.9L1149.3 506.0zM874.1 497.1L872.6 500.0L872.1 499.0L871.1 498.4zM889.3 494.7L888.4 497.3L887.8 496.6L887.0 496.2zM910.3 494.3L908.0 499.7L906.9 497.9L905.1 497.1zM923.9 477.3L926.7 483.7L924.4 483.2L922.1 484.1zM965.7 470.8L963.7 477.5L962.3 475.6L960.0 474.8zM967.4 490.0L964.5 496.4L963.3 494.3L961.2 493.2zM994.2 481.2L991.5 487.6L990.3 485.6L988.1 484.5zM1001.6 488.9L1002.6 495.8L1000.5 494.7L998.1 494.9zM1029.0 479.5L1027.9 486.4L1026.2 484.7L1023.8 484.2zM1039.6 477.2L1041.3 483.9L1039.1 483.1L1036.7 483.6zM1056.9 480.2L1058.8 486.9L1056.5 486.0L1054.2 486.6zM1071.4 484.0L1074.7 490.2L1072.3 489.8L1070.1 490.9zM1062.2 537.0L1064.4 530.4L1065.8 532.4L1068.1 533.3zM1102.3 476.8L1107.5 481.5L1105.2 482.0L1103.5 483.7zM1119.7 477.3L1124.8 482.1L1122.4 482.6L1120.7 484.2zM1132.7 485.1L1139.0 488.1L1136.9 489.2L1135.8 491.4zM1161.4 495.0L1166.7 496.4L1165.3 497.6L1164.7 499.4zM1174.0 485.7L1180.1 489.1L1177.9 490.1L1176.6 492.2zM869.4 469.2L866.9 475.7L865.6 473.7L863.4 472.7zM885.3 473.1L883.9 479.9L882.3 478.2L880.0 477.6zM902.4 468.6L903.2 475.6L901.1 474.4L898.7 474.6zM929.7 461.5L928.1 468.4L926.6 466.5L924.2 465.9zM942.6 467.2L941.7 474.1L940.0 472.5L937.6 472.1zM960.9 458.6L961.1 465.6L959.1 464.2L956.7 464.2zM981.5 472.9L979.5 479.6L978.0 477.7L975.8 476.9zM1015.8 469.8L1015.4 476.8L1013.5 475.2L1011.1 475.0zM1028.1 463.7L1030.2 470.4L1027.9 469.6L1025.6 470.3zM1041.2 468.5L1044.7 474.5L1042.3 474.3L1040.2 475.4zM1060.3 472.4L1065.7 476.8L1063.4 477.4L1061.8 479.2zM1082.0 462.7L1085.5 468.8L1083.1 468.5L1081.0 469.7zM1092.6 466.5L1097.7 471.3L1095.3 471.8L1093.6 473.5zM1120.1 465.6L1122.6 472.1L1120.3 471.5L1118.0 472.3zM1133.2 475.5L1139.0 479.4L1136.8 480.2L1135.4 482.1zM1146.2 475.8L1153.2 476.7L1151.5 478.5L1151.1 480.8zM1168.1 471.8L1173.9 475.8L1171.6 476.5L1170.2 478.5zM1179.4 472.6L1186.1 474.7L1184.2 476.1L1183.3 478.4zM1202.3 477.1L1209.2 478.0L1207.6 479.7L1207.2 482.1zM859.2 455.0L857.4 461.8L855.9 459.9L853.6 459.2zM874.2 459.0L873.2 465.9L871.5 464.2L869.1 463.8zM896.9 458.7L893.8 465.0L892.7 462.8L890.6 461.7zM916.1 453.4L914.6 460.2L913.0 458.4L910.7 457.8zM938.3 449.2L936.4 455.9L934.9 454.0L932.6 453.3zM955.9 458.4L951.6 463.9L950.9 461.6L949.1 460.0zM989.1 446.3L988.7 453.3L986.8 451.8L984.5 451.6zM1024.2 439.7L1021.7 446.3L1020.4 444.3L1018.2 443.3zM1045.4 437.6L1046.3 444.5L1044.2 443.4L1041.8 443.6zM1061.6 446.8L1061.8 453.8L1059.8 452.4L1057.4 452.4zM1072.6 452.9L1075.3 459.3L1073.0 458.8L1070.7 459.6zM1093.3 452.3L1096.3 458.6L1094.0 458.2L1091.8 459.1zM1109.6 460.3L1112.0 465.6L1110.1 465.2L1108.2 465.9zM1116.1 448.2L1122.0 452.0L1119.8 452.9L1118.4 454.8zM1141.7 449.8L1146.6 454.8L1144.2 455.2L1142.5 456.8zM1158.9 457.6L1165.1 460.9L1162.9 461.9L1161.7 464.0zM1174.5 464.3L1181.5 463.8L1180.2 465.9L1180.3 468.3zM1184.0 461.0L1190.9 459.9L1189.8 462.1L1190.0 464.5zM1213.4 459.8L1220.2 461.2L1218.5 462.9L1217.9 465.2zM845.2 448.6L844.3 450.1L844.0 449.5L843.5 449.2zM871.8 445.2L867.0 450.3L866.6 447.9L864.9 446.2zM883.9 442.7L882.6 449.6L880.9 447.8L878.6 447.3zM911.5 436.3L909.1 442.9L907.8 440.9L905.5 440.0zM926.9 438.0L924.0 444.4L922.9 442.3L920.7 441.2zM958.3 430.9L955.0 437.1L953.9 434.9L951.9 433.7zM967.7 434.6L964.2 440.7L963.2 438.5L961.2 437.2zM992.1 424.6L989.8 431.2L988.4 429.2L986.2 428.3zM992.0 445.9L991.1 449.4L990.3 448.4L989.2 448.0zM1008.0 429.6L1010.8 436.0L1008.5 435.5L1006.2 436.4zM1031.1 440.9L1031.9 447.8L1029.8 446.7L1027.5 446.9zM1050.3 435.2L1051.3 442.2L1049.2 441.0L1046.8 441.3zM1066.3 446.1L1068.0 449.5L1066.7 449.2L1065.5 449.8zM1075.2 425.2L1079.6 430.6L1077.2 430.8L1075.3 432.2zM1097.9 433.7L1101.3 439.8L1098.9 439.5L1096.7 440.6zM1112.4 435.0L1118.3 438.8L1116.0 439.7L1114.6 441.6zM1131.1 428.0L1135.5 433.4L1133.1 433.5L1131.2 435.0zM1146.8 434.8L1152.3 439.1L1150.0 439.8L1148.5 441.6zM1162.3 439.4L1169.1 441.1L1167.2 442.6L1166.6 444.9zM1185.4 446.7L1192.2 445.4L1191.2 447.6L1191.6 449.9zM1195.0 442.6L1201.9 443.2L1200.3 445.0L1200.0 447.4zM863.1 425.1L858.9 430.7L858.2 428.4L856.4 426.8zM880.4 429.1L874.6 432.9L874.7 430.5L873.5 428.4zM896.0 425.2L893.4 431.6L892.1 429.6L889.9 428.6zM924.6 422.7L920.4 428.3L919.7 426.0L917.8 424.5zM938.3 422.3L935.5 428.7L934.3 426.6L932.2 425.5zM955.6 421.8L952.2 428.0L951.2 425.8L949.1 424.5zM970.6 415.2L969.2 422.0L967.6 420.3L965.3 419.7zM987.3 419.5L986.6 426.4L984.8 424.8L982.4 424.5zM1007.0 417.7L1006.3 424.7L1004.5 423.1L1002.1 422.7zM1027.0 421.3L1025.6 428.1L1024.0 426.3L1021.6 425.8zM1040.4 418.6L1041.0 425.6L1039.0 424.3L1036.6 424.5zM1057.7 419.1L1058.9 426.0L1056.7 424.9L1054.3 425.2zM1074.6 420.5L1076.4 427.3L1074.1 426.4L1071.8 426.9zM1076.0 411.8L1082.0 415.3L1079.8 416.3L1078.5 418.3zM1096.5 417.6L1102.9 420.5L1100.8 421.6L1099.7 423.8zM1091.6 396.5L1098.0 399.4L1095.9 400.6L1094.8 402.7zM1155.6 428.7L1162.6 428.5L1161.2 430.5L1161.2 432.9zM1175.5 432.6L1182.5 433.0L1181.0 434.8L1180.7 437.2zM1208.9 423.4L1209.1 430.4L1207.1 429.0L1204.7 429.0zM1212.8 433.0L1219.7 431.5L1218.7 433.7L1219.1 436.1zM849.9 417.3L843.5 420.0L844.0 417.7L843.2 415.4zM874.4 411.5L869.8 416.8L869.2 414.4L867.5 412.8zM891.0 403.8L888.7 410.4L887.4 408.4L885.1 407.6zM906.2 410.5L903.6 417.0L902.3 414.9L900.1 414.0zM933.5 407.9L929.6 413.6L928.8 411.4L926.8 409.9zM952.3 409.1L947.3 413.9L946.9 411.5L945.4 409.7zM972.3 404.4L968.1 410.0L967.4 407.7L965.5 406.2zM981.8 403.6L980.7 410.5L979.1 408.8L976.7 408.4zM1011.3 410.2L1006.0 414.8L1005.8 412.4L1004.3 410.6zM1019.0 407.2L1015.9 413.4L1014.8 411.3L1012.7 410.2zM1036.6 404.9L1034.7 411.6L1033.2 409.7L1030.9 409.0zM1049.1 399.7L1050.6 406.5L1048.4 405.5L1046.1 406.0zM1054.4 401.6L1059.7 406.1L1057.3 406.7L1055.7 408.4zM1077.7 403.8L1082.5 408.9L1080.1 409.2L1078.3 410.8zM1091.0 405.0L1097.1 408.5L1094.9 409.5L1093.6 411.5zM1057.6 353.2L1063.9 356.3L1061.7 357.4L1060.6 359.5zM1119.2 405.3L1126.1 406.7L1124.3 408.3L1123.7 410.7zM1147.3 412.4L1154.3 413.1L1152.7 414.9L1152.3 417.3zM1165.5 415.8L1172.4 414.5L1171.3 416.7L1171.7 419.0zM1195.6 429.2L1192.8 422.7L1195.2 423.3L1197.4 422.5zM1200.1 416.3L1206.7 414.2L1206.0 416.4L1206.6 418.8zM1219.7 415.1L1226.5 413.7L1225.5 415.9L1225.9 418.3zM846.0 398.9L839.9 402.4L840.2 400.0L839.1 397.8zM862.6 398.7L857.4 403.4L857.2 401.0L855.7 399.2zM913.1 394.0L907.1 397.6L907.3 395.2L906.2 393.1zM898.9 400.3L892.5 403.0L893.0 400.6L892.2 398.4zM919.9 390.3L917.0 396.7L915.8 394.5L913.7 393.4zM940.1 395.4L935.2 400.5L934.8 398.1L933.2 396.3zM964.2 394.0L959.1 398.8L958.8 396.4L957.2 394.5zM970.6 398.0L966.4 403.5L965.7 401.2L963.9 399.7zM1023.9 396.0L1017.7 399.3L1018.0 396.9L1017.0 394.7zM1025.2 398.0L1019.1 401.3L1019.4 398.9L1018.4 396.7zM1040.8 389.5L1041.4 396.5L1039.3 395.2L1036.9 395.3zM1044.4 393.1L1050.6 396.3L1048.5 397.4L1047.3 399.5zM1058.4 384.0L1064.4 387.5L1062.2 388.5L1060.9 390.5zM1083.2 396.2L1090.1 397.6L1088.3 399.2L1087.7 401.6zM1092.5 391.0L1099.3 392.5L1097.5 394.1L1096.9 396.4zM1135.7 411.0L1131.4 405.4L1133.9 405.4L1135.8 404.0zM1141.1 395.8L1147.8 397.7L1145.9 399.2L1145.1 401.5zM1156.4 396.8L1163.3 397.6L1161.6 399.4L1161.3 401.8zM1139.4 400.8L1146.1 398.8L1145.3 401.1L1145.9 403.4zM1192.6 404.3L1198.2 400.2L1198.2 402.6L1199.6 404.6zM1214.8 402.2L1221.2 399.3L1220.7 401.7L1221.6 403.9zM861.2 381.9L855.1 385.3L855.4 382.9L854.4 380.7zM874.3 382.5L867.7 384.9L868.4 382.6L867.6 380.3zM875.6 373.1L880.1 378.5L877.7 378.6L875.8 380.1zM926.0 374.8L920.5 379.1L920.4 376.7L919.0 374.8zM929.1 381.7L923.6 386.0L923.5 383.6L922.1 381.6zM951.0 381.2L945.1 385.0L945.3 382.6L944.1 380.5zM965.5 382.1L960.8 387.3L960.3 385.0L958.6 383.3zM994.8 386.2L988.0 387.6L989.0 385.4L988.6 383.1zM1018.1 385.4L1011.5 387.6L1012.2 385.3L1011.5 383.0zM1020.5 385.1L1013.7 386.5L1014.7 384.3L1014.3 381.9zM1032.3 390.0L1025.7 387.6L1027.7 386.3L1028.7 384.0zM1027.5 391.2L1033.2 387.2L1033.2 389.6L1034.5 391.6zM1049.5 382.8L1056.4 381.5L1055.3 383.7L1055.6 386.1zM1069.0 382.8L1075.9 381.8L1074.8 383.9L1075.0 386.3zM1080.5 381.1L1087.2 379.2L1086.4 381.5L1086.9 383.8zM1103.0 375.6L1109.9 376.9L1108.1 378.5L1107.6 380.9zM1128.8 381.8L1135.8 381.3L1134.5 383.4L1134.6 385.8zM1143.7 384.3L1150.5 382.6L1149.6 384.8L1150.1 387.2zM1175.4 385.3L1179.0 385.0L1178.3 386.0L1178.4 387.3zM1193.1 385.1L1195.4 383.5L1195.4 384.5L1195.9 385.3zM1204.9 390.2L1209.9 385.4L1210.3 387.8L1211.8 389.6zM1213.2 384.4L1220.1 383.3L1219.0 385.4L1219.3 387.8zM838.8 371.1L832.1 371.9L833.3 369.9L833.1 367.6zM869.4 372.4L862.5 373.6L863.6 371.4L863.2 369.1zM879.6 368.7L873.0 371.0L873.7 368.7L873.0 366.4zM898.0 370.1L891.3 372.1L892.1 369.8L891.5 367.5zM928.4 368.8L921.6 370.5L922.5 368.2L922.1 365.9zM949.4 372.1L942.8 374.2L943.5 371.9L942.9 369.6zM959.1 374.5L952.1 374.2L953.6 372.3L953.8 369.9zM985.7 375.5L978.7 375.7L980.1 373.7L980.1 371.3zM995.0 375.9L988.0 375.8L989.4 373.9L989.6 371.5zM1007.6 372.1L1000.6 371.4L1002.2 369.6L1002.6 367.2zM1025.2 379.2L1020.2 374.4L1022.6 374.0L1024.3 372.3zM1050.6 359.1L1055.4 364.1L1053.1 364.5L1051.3 366.1zM1061.6 377.3L1066.1 371.9L1066.7 374.3L1068.5 375.9zM1080.8 370.0L1087.6 368.4L1086.6 370.6L1087.1 373.0zM1104.9 368.3L1109.2 365.9L1108.9 367.6L1109.7 369.1zM1113.3 369.0L1120.0 367.1L1119.2 369.4L1119.7 371.7zM1133.2 371.4L1139.5 368.4L1139.1 370.7L1140.0 373.0zM1150.4 372.3L1156.6 369.0L1156.3 371.4L1157.3 373.6zM1177.3 370.7L1184.1 369.1L1183.2 371.3L1183.7 373.6zM1169.3 364.6L1176.1 363.1L1175.1 365.3L1175.6 367.6zM1209.3 375.8L1215.3 372.2L1215.1 374.6L1216.2 376.7zM1235.9 370.1L1241.4 366.9L1241.1 369.1L1242.2 371.0zM849.2 356.3L842.3 355.6L843.9 353.8L844.2 351.4zM866.5 353.7L860.0 355.6L860.8 353.5L860.2 351.2zM891.7 350.5L885.7 354.0L885.9 351.6L884.8 349.4zM901.1 355.0L897.5 354.6L898.3 353.7L898.5 352.4zM933.8 357.8L926.8 358.4L928.1 356.4L928.0 354.0zM947.3 357.5L940.4 358.1L941.6 356.0L941.6 353.6zM974.7 358.1L967.7 358.6L969.0 356.6L968.9 354.2zM987.8 359.5L980.9 359.3L982.3 357.4L982.5 355.0zM1005.5 364.4L998.7 362.6L1000.6 361.1L1001.3 358.8zM1029.2 365.4L1025.9 359.3L1028.2 359.6L1030.4 358.6zM1043.7 364.4L1043.4 357.4L1045.4 358.8L1047.8 358.7zM1053.5 366.5L1055.3 359.8L1056.8 361.7L1059.1 362.4zM1077.6 360.8L1079.9 354.2L1081.3 356.2L1083.5 357.1zM1088.1 360.6L1093.8 356.6L1093.7 359.0L1095.0 361.1zM1103.8 353.6L1110.3 351.1L1109.7 353.4L1110.5 355.7zM1119.8 355.5L1126.0 352.3L1125.7 354.6L1126.7 356.8zM1142.6 357.9L1148.2 353.7L1148.2 356.1L1149.6 358.1zM1172.2 353.4L1174.8 351.9L1174.6 352.9L1175.1 353.8zM1180.8 351.9L1187.5 349.9L1186.7 352.1L1187.3 354.5zM1205.6 356.2L1211.3 352.2L1211.3 354.6L1212.6 356.6zM1220.4 351.9L1226.8 349.2L1226.3 351.5L1227.1 353.7zM842.6 342.2L835.7 341.6L837.2 339.8L837.6 337.4zM859.7 337.9L853.0 338.6L854.2 336.6L854.0 334.3zM878.4 340.4L871.5 340.7L872.8 338.7L872.8 336.3zM902.2 343.5L895.3 342.4L897.0 340.7L897.4 338.4zM921.8 317.3L920.0 324.0L918.5 322.2L916.2 321.4zM935.9 342.6L928.9 342.4L930.4 340.5L930.6 338.1zM957.1 346.8L950.6 344.2L952.7 343.0L953.7 340.8zM983.4 347.6L976.5 346.8L978.1 345.0L978.5 342.6zM992.3 347.5L986.7 343.4L989.0 342.6L990.5 340.7zM1011.0 350.6L1005.7 346.1L1008.0 345.5L1009.6 343.7zM1024.3 347.6L1019.4 342.7L1021.7 342.3L1023.5 340.7zM1035.3 351.1L1033.7 344.3L1035.9 345.3L1038.2 344.8zM1048.1 351.4L1048.7 344.4L1050.5 346.0L1052.9 346.3zM1084.0 348.0L1086.1 341.4L1087.5 343.3L1089.8 344.1zM1094.7 348.5L1098.5 342.6L1099.4 344.9L1101.3 346.2zM1119.1 342.0L1123.9 336.9L1124.3 339.3L1126.0 341.0zM1136.8 343.5L1141.5 338.2L1142.0 340.6L1143.7 342.2zM1141.8 349.1L1147.3 344.8L1147.4 347.2L1148.8 349.1zM1177.6 341.9L1181.7 336.2L1182.4 338.5L1184.3 340.0zM1195.6 341.2L1200.9 336.6L1201.1 339.0L1202.6 340.9zM1216.9 335.8L1221.5 334.1L1221.1 335.7L1221.6 337.4zM1230.4 341.1L1236.1 337.1L1236.0 339.5L1237.4 341.5zM828.7 324.3L823.1 322.9L824.6 321.7L825.1 319.7zM853.3 328.0L846.4 326.5L848.2 324.9L848.8 322.6zM868.5 327.0L861.8 325.1L863.6 323.6L864.4 321.3zM888.7 326.8L882.0 324.9L883.9 323.5L884.6 321.2zM906.3 327.6L899.4 327.1L900.9 325.2L901.2 322.8zM929.7 332.4L923.0 330.6L924.8 329.1L925.6 326.8zM940.1 323.3L935.1 322.4L936.4 321.2L936.8 319.4zM956.7 325.3L953.5 322.2L955.0 322.0L956.1 320.9zM978.3 326.4L973.7 322.0L975.8 321.6L977.4 320.1zM988.2 306.7L991.3 312.9L989.0 312.5L986.8 313.6zM1009.8 324.4L1008.2 322.6L1009.1 322.5L1009.7 322.0zM1032.1 331.9L1027.0 327.1L1029.4 326.7L1031.1 325.0zM1047.0 328.5L1045.5 321.6L1047.7 322.6L1050.1 322.2zM1064.3 334.6L1062.9 327.8L1065.1 328.8L1067.5 328.4zM1081.1 334.6L1080.6 327.7L1082.6 328.9L1085.0 328.8zM1093.7 337.3L1095.1 330.4L1096.7 332.2L1099.1 332.7zM1111.7 328.3L1114.3 321.8L1115.6 323.8L1117.8 324.7zM1128.1 329.7L1131.5 323.6L1132.5 325.8L1134.6 327.0zM1150.0 328.9L1152.0 322.2L1153.5 324.1L1155.8 324.9zM1168.9 326.7L1173.2 321.2L1173.8 323.5L1175.7 325.1zM1185.6 329.4L1190.2 324.1L1190.7 326.4L1192.5 328.1zM1202.8 320.9L1209.3 318.6L1208.7 320.9L1209.4 323.2zM1226.0 324.6L1232.0 321.0L1231.7 323.4L1232.9 325.5zM842.4 311.2L835.5 309.9L837.3 308.3L837.8 305.9zM864.0 310.9L857.0 310.4L858.5 308.6L858.8 306.2zM879.9 314.2L873.4 311.7L875.4 310.4L876.3 308.2zM895.7 310.6L888.8 309.5L890.5 307.8L890.9 305.5zM909.4 308.3L907.2 306.5L908.1 306.3L908.8 305.5zM930.2 317.4L925.6 312.1L928.0 311.9L929.8 310.4zM961.6 322.6L955.3 319.7L957.4 318.5L958.5 316.4zM971.4 317.7L965.7 313.7L968.0 312.9L969.5 311.0zM986.3 316.1L981.4 311.1L983.8 310.8L985.5 309.1zM1002.8 320.9L999.0 315.0L1001.4 315.1L1003.5 313.9zM1024.4 330.3L1021.0 324.2L1023.4 324.5L1025.5 323.4zM1004.1 333.3L1008.0 327.5L1008.9 329.8L1010.8 331.2zM1065.7 319.2L1060.5 314.6L1062.8 314.1L1064.5 312.4zM1071.7 319.7L1069.8 312.9L1072.1 313.8L1074.4 313.2zM1084.3 318.7L1085.3 311.8L1087.0 313.5L1089.4 313.9zM1107.0 313.0L1107.7 306.1L1109.5 307.7L1111.9 308.0zM1122.7 311.4L1125.2 304.9L1126.5 306.9L1128.7 307.9zM1143.3 308.2L1147.2 302.4L1148.0 304.7L1150.0 306.1zM1147.9 314.5L1153.0 309.8L1153.3 312.2L1154.9 314.0zM1178.2 313.3L1181.7 307.3L1182.7 309.5L1184.7 310.8zM1196.6 304.9L1203.1 302.3L1202.5 304.7L1203.3 306.9zM1218.5 304.7L1221.1 302.4L1221.2 303.6L1221.9 304.5zM1230.8 305.9L1236.6 302.0L1236.5 304.4L1237.8 306.4zM866.4 293.3L859.9 290.8L861.9 289.5L862.9 287.3zM880.9 294.7L875.6 290.2L877.9 289.6L879.5 287.9zM905.5 300.5L900.7 295.3L903.1 295.1L905.0 293.5zM916.4 296.0L914.1 292.2L915.6 292.3L916.9 291.6zM941.4 295.5L935.2 292.2L937.4 291.1L938.6 289.0zM957.4 295.7L952.2 291.0L954.6 290.5L956.3 288.8zM980.6 310.8L976.2 305.5L978.6 305.3L980.5 303.8zM993.6 304.2L990.8 297.8L993.1 298.3L995.4 297.4zM1010.0 309.3L1006.8 303.1L1009.2 303.4L1011.4 302.4zM1028.1 290.7L1024.9 287.2L1026.6 287.0L1027.8 286.0zM1048.4 298.1L1044.3 292.5L1046.7 292.5L1048.7 291.1zM1062.9 302.1L1061.3 295.3L1063.5 296.2L1065.9 295.8zM1077.5 314.2L1076.6 307.3L1078.7 308.4L1081.1 308.2zM1101.1 298.8L1099.5 292.0L1101.7 293.0L1104.0 292.5zM1117.4 303.8L1116.2 296.9L1118.3 298.0L1120.7 297.6zM1132.7 304.6L1132.8 297.7L1134.7 299.1L1137.1 299.3zM1147.9 310.0L1148.8 303.1L1150.5 304.7L1152.9 305.1zM1167.9 296.0L1171.6 290.1L1172.5 292.3L1174.4 293.7zM1188.1 294.2L1192.6 288.9L1193.1 291.3L1194.9 292.9zM1206.1 296.8L1208.8 290.3L1210.0 292.4L1212.2 293.3zM1225.1 289.4L1232.0 288.2L1230.9 290.3L1231.2 292.7zM855.8 277.5L851.4 275.1L852.9 274.4L853.8 272.9zM876.3 281.0L870.1 277.8L872.2 276.7L873.4 274.6zM894.8 279.8L888.9 275.9L891.2 275.1L892.6 273.1zM911.5 281.5L905.4 278.1L907.6 277.1L908.9 275.1zM929.6 287.7L925.8 281.8L928.2 282.0L930.2 280.7zM951.5 283.6L945.9 279.4L948.3 278.7L949.8 276.9zM966.9 283.2L961.6 278.6L964.0 278.1L965.6 276.3zM992.6 286.0L986.9 281.8L989.2 281.1L990.7 279.2zM1000.5 283.6L997.2 277.5L999.6 277.8L1001.7 276.8zM1018.3 284.9L1014.6 279.0L1017.0 279.1L1019.1 278.0zM1041.9 277.4L1037.7 273.5L1039.6 273.1L1041.0 271.7zM1059.7 280.0L1055.6 274.3L1058.0 274.3L1060.0 273.0zM1077.4 299.2L1073.8 293.2L1076.2 293.5L1078.3 292.3zM1093.0 293.7L1090.4 287.2L1092.7 287.8L1095.0 287.0zM1107.6 281.6L1107.0 274.7L1109.1 275.9L1111.5 275.9zM1129.1 264.8L1132.9 270.6L1130.5 270.5L1128.5 271.7zM1135.5 288.7L1137.7 282.0L1139.1 284.0L1141.3 284.8zM1151.6 287.8L1154.5 281.5L1155.7 283.6L1157.8 284.7zM1174.2 284.4L1176.5 277.8L1177.8 279.8L1180.1 280.6zM1199.3 274.1L1202.5 269.9L1203.0 271.6L1204.4 272.8zM1213.7 279.6L1217.4 273.6L1218.3 275.8L1220.3 277.1zM870.1 259.2L863.3 257.6L865.1 256.0L865.7 253.7zM884.3 268.9L878.7 264.8L881.0 264.1L882.5 262.2zM898.8 258.5L897.3 256.5L898.2 256.5L898.9 256.0zM916.0 279.3L913.8 272.6L916.1 273.4L918.4 272.7zM938.5 258.7L934.0 254.0L936.2 253.7L937.8 252.3zM957.2 271.4L953.0 265.9L955.4 265.8L957.3 264.4zM980.7 253.9L974.7 257.6L974.9 255.2L973.7 253.1zM991.2 269.6L988.4 263.2L990.7 263.7L993.0 262.8zM1021.0 245.4L1018.4 251.8L1017.1 249.8L1014.9 248.8zM1032.0 272.6L1027.7 267.0L1030.1 267.0L1032.1 265.6zM1052.2 271.0L1048.1 265.3L1050.5 265.3L1052.5 264.0zM1066.7 270.3L1062.9 264.4L1065.3 264.6L1067.4 263.4zM1090.6 274.7L1086.2 269.3L1088.6 269.2L1090.5 267.7zM1103.9 269.0L1101.9 262.3L1104.2 263.1L1106.5 262.5zM1124.8 269.1L1120.3 263.7L1122.7 263.5L1124.7 262.1zM1134.4 266.4L1135.0 259.5L1136.8 261.1L1139.2 261.4zM1153.5 263.6L1156.3 257.2L1157.5 259.3L1159.7 260.3zM1180.7 252.8L1176.4 258.3L1175.7 256.0L1173.9 254.5zM1207.5 262.2L1209.8 255.7L1211.2 257.6L1213.4 258.5zM893.5 249.9L888.5 245.0L890.9 244.6L892.6 243.0zM911.1 252.5L906.0 247.8L908.4 247.3L910.1 245.6zM930.1 250.3L924.9 245.7L927.2 245.2L928.9 243.4zM951.1 257.0L946.8 251.5L949.3 251.4L951.2 250.0zM963.8 248.2L960.9 242.1L963.2 242.5L965.3 241.6zM986.7 251.3L981.2 246.9L983.6 246.3L985.1 244.5zM1008.7 250.3L1003.1 246.0L1005.4 245.3L1007.0 243.5zM1021.1 250.7L1017.3 244.9L1019.7 245.0L1021.7 243.8zM1039.7 246.7L1034.9 241.7L1037.3 241.4L1039.1 239.8zM1055.4 262.5L1052.4 256.2L1054.7 256.6L1056.9 255.7zM1074.7 256.6L1071.4 250.5L1073.8 250.8L1075.9 249.7zM1094.1 238.6L1092.7 240.9L1092.3 240.0L1091.6 239.5zM1110.9 250.3L1109.2 243.5L1111.4 244.5L1113.8 244.0zM1133.2 251.0L1129.5 245.0L1131.9 245.2L1134.0 244.0zM1147.8 244.5L1147.9 242.0L1148.6 242.5L1149.4 242.5zM1159.3 248.4L1162.9 242.4L1163.9 244.6L1165.9 245.9zM1182.5 245.3L1184.8 240.8L1185.6 242.4L1187.2 243.2zM1198.6 248.1L1200.6 241.4L1202.0 243.3L1204.3 244.1zM884.0 234.3L878.8 229.6L881.2 229.1L882.9 227.4zM903.2 234.7L898.1 229.9L900.5 229.5L902.2 227.8zM920.4 234.7L916.4 228.9L918.8 229.0L920.9 227.7zM938.8 230.6L934.6 225.0L937.0 225.0L939.0 223.6zM955.2 230.7L950.8 225.5L953.1 225.3L955.0 223.9zM973.0 231.8L969.5 225.7L971.9 226.0L974.0 224.9zM995.4 241.1L991.8 235.1L994.2 235.3L996.3 234.1zM1010.2 234.2L1007.4 227.8L1009.7 228.3L1012.0 227.4zM1002.6 198.2L1008.7 201.5L1006.6 202.5L1005.3 204.6zM1044.5 228.6L1044.1 222.1L1046.0 223.3L1048.2 223.3zM1067.8 234.9L1064.5 228.7L1066.9 229.1L1069.0 228.1zM1080.5 238.4L1079.7 231.5L1081.8 232.7L1084.2 232.5zM1100.4 230.4L1099.7 226.4L1100.9 227.0L1102.3 226.8zM1138.9 231.4L1137.2 224.6L1139.4 225.5L1141.8 225.0zM1155.5 234.0L1157.0 227.2L1158.6 229.0L1160.9 229.6zM1171.4 228.9L1174.5 223.3L1175.4 225.3L1177.3 226.4zM908.3 211.9L905.8 209.1L907.1 209.0L908.1 208.1zM934.8 223.3L929.4 218.9L931.7 218.3L933.3 216.5zM947.2 213.2L943.3 208.1L945.5 208.1L947.3 206.8zM964.2 213.9L961.6 208.7L963.6 209.1L965.4 208.3zM997.6 236.7L992.7 231.7L995.1 231.4L996.9 229.8zM1004.4 216.9L999.8 211.6L1002.2 211.4L1004.1 209.9zM1018.9 215.2L1015.6 209.3L1017.9 209.6L1020.0 208.6zM1040.5 216.4L1037.5 210.1L1039.9 210.6L1042.1 209.6zM1059.9 223.2L1055.5 217.8L1057.9 217.7L1059.8 216.2zM1074.0 213.4L1072.8 207.4L1074.7 208.3L1076.7 207.9zM1090.0 215.4L1090.3 208.5L1092.2 210.0L1094.6 210.2zM1117.0 209.1L1112.4 212.8L1112.3 210.8L1111.1 209.1zM1130.9 212.1L1130.2 209.9L1131.0 210.1L1131.7 209.9zM1143.8 216.8L1144.8 209.9L1146.5 211.6L1148.9 212.0zM1161.2 211.0L1162.5 207.0L1163.3 208.2L1164.7 208.7zM907.7 200.8L901.3 198.0L903.3 196.8L904.4 194.6zM919.0 198.0L915.1 193.3L917.2 193.2L918.9 191.9zM938.0 200.4L932.6 195.9L934.9 195.3L936.6 193.6zM958.1 204.6L954.3 198.8L956.7 198.9L958.7 197.7zM970.7 203.4L968.5 196.8L970.8 197.5L973.1 196.8zM996.7 205.2L991.9 200.2L994.3 199.9L996.1 198.3zM1007.7 201.3L1005.2 194.7L1007.5 195.4L1009.8 194.6zM1024.9 204.0L1023.5 197.2L1025.7 198.2L1028.1 197.8zM1044.1 208.2L1043.5 201.2L1045.6 202.5L1048.0 202.3zM1063.6 200.3L1061.8 193.5L1064.0 194.4L1066.4 193.8zM1080.6 202.0L1079.9 195.0L1082.0 196.2L1084.4 196.1zM1096.1 202.1L1097.0 195.1L1098.7 196.7L1101.1 197.1zM1120.7 201.3L1119.5 194.4L1121.7 195.5L1124.1 195.2zM1134.7 198.8L1135.2 192.6L1136.9 194.0L1139.0 194.2zM934.1 186.7L928.1 183.0L930.4 182.1L931.7 180.1zM945.5 181.3L943.3 179.5L944.3 179.3L944.9 178.5zM966.7 184.2L961.1 180.0L963.4 179.3L964.9 177.5zM989.6 196.0L984.9 190.8L987.3 190.6L989.1 189.0zM1000.8 181.8L999.0 178.1L1000.4 178.4L1001.7 177.8zM1020.3 180.2L1017.9 174.4L1020.0 174.9L1022.0 174.2zM1036.8 182.8L1035.7 176.1L1037.7 177.1L1040.1 176.8zM1057.6 178.0L1056.5 175.7L1057.4 175.9L1058.2 175.6zM1067.9 187.5L1069.1 180.6L1070.8 182.4L1073.1 182.9zM1112.3 166.5L1114.2 173.2L1111.9 172.4L1109.6 172.9zM1131.2 182.1L1130.3 178.5L1131.5 179.0L1132.7 178.7zM1142.8 186.1L1144.0 179.2L1145.7 180.9L1148.0 181.4zM939.1 165.9L933.2 163.5L935.1 162.3L936.0 160.3zM968.9 175.4L962.8 172.2L964.9 171.1L966.1 169.0zM984.0 178.3L978.9 173.6L981.3 173.1L983.0 171.4zM993.3 169.7L989.6 163.7L992.0 163.9L994.1 162.7zM1011.7 167.2L1009.1 161.0L1011.3 161.6L1013.5 160.7zM1029.4 170.2L1025.2 164.5L1027.6 164.5L1029.6 163.2zM1045.6 172.3L1043.7 165.6L1046.0 166.4L1048.3 165.8zM1060.0 170.1L1061.5 163.3L1063.1 165.1L1065.4 165.7zM1098.6 165.5L1098.7 159.8L1100.2 161.0L1102.2 161.1zM1115.6 167.3L1117.2 160.5L1118.8 162.3L1121.1 163.0zM968.7 149.6L962.7 146.0L964.9 145.0L966.2 143.0zM982.2 148.7L980.8 145.9L981.9 146.0L982.9 145.6zM1000.8 165.5L998.6 158.8L1000.9 159.6L1003.2 158.9zM1020.0 154.9L1016.5 148.9L1018.8 149.1L1021.0 148.0zM1052.1 150.3L1052.3 143.4L1054.1 144.9L1056.5 145.0zM1071.5 152.0L1071.8 145.0L1073.7 146.5L1076.1 146.7zM1092.6 153.8L1090.0 147.3L1092.3 147.9L1094.6 147.1z" fill="#000"/><rect x="788.6" y="103.4" width="499.0" height="498.0" fill="none" stroke="#000" stroke-width="1.1"/><path d="M788.6 601.4v4.9M886.1 601.4v4.9M983.6 601.4v4.9M1081.2 601.4v4.9M1178.7 601.4v4.9M1276.2 601.4v4.9M788.6 601.4h-4.9M788.6 503.9h-4.9M788.6 406.4h-4.9M788.6 309.0h-4.9M788.6 211.5h-4.9M788.6 114.0h-4.9" stroke="#000" stroke-width="1.1" fill="none"/><text x="788.6" y="621.8" text-anchor="middle">0</text><text x="886.1" y="621.8" text-anchor="middle">200</text><text x="983.6" y="621.8" text-anchor="middle">400</text><text x="1081.2" y="621.8" text-anchor="middle">600</text><text x="1178.7" y="621.8" text-anchor="middle">800</text><text x="1276.2" y="621.8" text-anchor="middle">1000</text><text x="778.9" y="606.5" text-anchor="end">0</text><text x="778.9" y="509.0" text-anchor="end">200</text><text x="778.9" y="411.5" text-anchor="end">400</text><text x="778.9" y="314.1" text-anchor="end">600</text><text x="778.9" y="216.6" text-anchor="end">800</text><text x="778.9" y="119.1" text-anchor="end">1000</text></svg>
<div class="cmb" style="left:15px;top:645px;width:272px;height:25px;">ITMX</div>
<div class="grp" style="left:294px;top:645px;width:1056px;height:46px;"></div>
<div class="radio on" style="left:305px;top:660px;"></div>
<div class="lbl" style="left:325px;top:659.5px;">Wavefront + Quiver</div>
<div class="radio" style="left:825px;top:660px;"></div>
<div class="lbl" style="left:845.2px;top:659.5px;">Original + modified image</div>
<div class="panel" style="left:293.5px;top:724px;width:1056.5px;height:172px;"></div>
<div class="tab on" style="left:293.5px;top:697.5px;width:45.5px;height:27.5px;line-height:26px;">Still</div>
<div class="tab off" style="left:338px;top:699.5px;width:76px;height:24.5px;line-height:25px;">Playback</div>
<div class="tab off" style="left:413px;top:699.5px;width:47px;height:24.5px;line-height:25px;">Live</div>
<div class="lbl" style="left:304.4px;top:739.6px;">Reference:</div>
<div class="lbl" style="left:304.4px;top:770.6px;">Show:</div>
<div class="lbl" style="left:304.4px;top:863.6px;">ndscope:</div>
<div class="inp num" style="left:671.8px;top:735px;width:300px;height:24.6px;">1443878536</div>
<div class="inp num" style="left:671.8px;top:766px;width:300px;height:24.6px;">1443878956</div>
<div class="inp" style="left:671.8px;top:859px;width:300px;height:24.6px;"></div>
<div class="btn" style="left:978px;top:735px;width:361px;height:24.6px;">Get reference time from CDS</div>
<div class="btn" style="left:978px;top:766px;width:361px;height:24.6px;">Now</div>
<div class="btn" style="left:978px;top:797px;width:361px;height:24.6px;">Plot</div>
<div class="btn" style="left:978px;top:828px;width:361px;height:24.6px;">Save wavefront data</div>
<div class="btn" style="left:978px;top:859px;width:361px;height:24.6px;">Open ndscope</div>
<div class="lbl num" style="left:12.4px;top:909.9px;">x=446.84, y=21.27</div>
</div>
<div class="abs" style="left:0;top:0;width:2px;height:933px;background:#111;"></div>
<div class="abs" style="left:0;top:932px;width:1349px;height:1px;background:#777;"></div>
<div class="abs" style="left:1337px;top:0;width:12px;height:933px;background:linear-gradient(90deg,rgba(0,0,0,0),rgba(0,0,0,0.06));"></div>
<div class="win w2" style="left:1348px;top:3px;">
<div class="tb">
<svg class="abs" style="left:6px;top:4px" width="22" height="20"><defs><linearGradient id="igw2" x1="0" y1="0" x2="0" y2="1"><stop offset="0.25" stop-color="#fff"/><stop offset="1" stop-color="#d3d6d3"/></linearGradient></defs><rect x="1.5" y="1.5" width="19" height="17" rx="2" fill="url(#igw2)" stroke="#c4c4c4"/><path d="M2.5 18.5 H19.5" stroke="#8c8c8c"/><rect x="2" y="2.6" width="18" height="2.2" fill="#4a74b4"/></svg>
<div class="ttl">HWS ITMY</div>
<svg class="abs" style="left:1268px;top:6px" width="95" height="18" fill="none" stroke="#2b3035" stroke-width="2.2"><path d="M7.4 11.8 L11.4 7.2 L15.4 11.8"/><path d="M30.2 12 H39" /><rect x="54.1" y="5.1" width="6.9" height="6.9" stroke-width="2"/><path d="M76.6 4.8 L84.6 12.4 M84.6 4.8 L76.6 12.4"/></svg>
</div>
<div class="content"></div>
<svg class="abs" style="left:0;top:40px" width="300" height="40" viewBox="0 40 300 40"><path d="M24.9 61.3 L34.8 52.9 L44.7 61.3" fill="none" stroke="#000" stroke-width="2.7" stroke-linejoin="miter"/><rect x="40" y="52.3" width="2.6" height="5.5" fill="#000"/><path d="M34.8 56.2 L27.4 62.4 V68.4 H32.8 V63.6 H36.8 V68.4 H42.2 V62.4 Z" fill="#000"/><path d="M75.9 58.7 H63 M69.9 50.6 L61.8 58.7 L69.9 66.8" fill="none" stroke="#616161" stroke-width="4.2" stroke-linecap="round" stroke-linejoin="miter"/><path d="M93.1 58.7 H106 M99.1 50.6 L107.2 58.7 L99.1 66.8" fill="none" stroke="#616161" stroke-width="4.2" stroke-linecap="round" stroke-linejoin="miter"/><rect x="121" y="49" width="1" height="19" fill="#dcdcdc"/><rect x="260" y="49" width="1" height="19" fill="#dcdcdc"/><g fill="#000"><rect x="132" y="57" width="18" height="3.2"/><rect x="139.4" y="50" width="3.2" height="17.5"/><path d="M141 46.8 L146 52.2 L136 52.2 Z M141 70.4 L146 65 L136 65 Z M129.2 58.6 L134.6 53.6 L134.6 63.6 Z M152.9 58.6 L147.5 53.6 L147.5 63.6 Z"/></g><circle cx="171.9" cy="56.6" r="7" fill="none" stroke="#000" stroke-width="3.5"/><path d="M177.3 62.2 L183.5 67.2" stroke="#000" stroke-width="4" stroke-linecap="round"/><g stroke="#000" stroke-width="2.1"><path d="M197 53 H217.2 M197 59.5 H217.2 M197 66 H217.2"/></g><g fill="#000"><rect x="200.4" y="50.2" width="5.2" height="5.6" rx="1.8"/><rect x="208.2" y="56.7" width="5.2" height="5.6" rx="1.8"/><rect x="201.8" y="63.2" width="5.2" height="5.6" rx="1.8"/></g><path d="M228.9 48.6 V67.7 H252.2" fill="none" stroke="#000" stroke-width="2"/><path d="M231.6 64.2 L237.8 58.2 L241.2 61.4 L248.4 53.4" fill="none" stroke="#000" stroke-width="3.3" stroke-linejoin="miter"/><path d="M243.6 50.2 L252 50 L251.8 58.4 Z" fill="#000"/><path d="M271.4 49.4 H284.4 L288.8 53.8 V67.1 H271.4 Z" fill="none" stroke="#000" stroke-width="2.4"/><rect x="274.6" y="49.4" width="8.8" height="6.2" fill="#000"/><rect x="279.8" y="50.4" width="2.2" height="3.8" fill="#fff"/><rect x="274.6" y="60.6" width="11" height="6.2" fill="none" stroke="#000" stroke-width="1.8"/></svg>
<div class="lbl" style="left:580px;top:50.5px;">Contour spacing [nm]:</div>
<div class="inp num" style="left:712px;top:46px;width:50px;height:25px;">2</div>
<div class="lbl" style="left:768px;top:50.5px;">Auto wavefront limits:</div>
<div class="abs" style="left:898px;top:51px;width:14px;height:14px;box-sizing:border-box;border:1px solid #c4c4c4;border-radius:2px;background:#fff;"></div>
<svg class="abs" style="left:898px;top:51px" width="14" height="14"><path d="M3.2 7.2 L5.8 10.6 L10.6 3.2" fill="none" stroke="#111" stroke-width="1.8"/></svg>
<div class="lbl" style="left:918.4px;top:50.5px;">min [nm]</div>
<div class="inp num" style="left:976px;top:46px;width:50px;height:25px;">-200</div>
<div class="lbl" style="left:1032.5px;top:50.5px;">max [nm]</div>
<div class="inp num" style="left:1092px;top:46px;width:50px;height:25px;">0</div>
<div class="lbl" style="left:1148.4px;top:50.5px;">map</div>
<div class="cmb" style="left:1180px;top:46px;width:73px;height:25px;">viridis</div>
<div class="btn" style="left:1259px;top:46px;width:82px;height:24px;line-height:23.5px;">Plot options</div>
<div class="abs" style="left:1333.5px;top:64px;width:0;height:0;border-left:2.5px solid transparent;border-right:2.5px solid transparent;border-top:3px solid #444;"></div>
<svg class="abs" style="left:6px;top:80px" width="1353" height="538" viewBox="6 80 1353 538" font-family="DejaVu Sans, sans-serif" font-size="13.89px" fill="#000"><defs><filter id="blitmy" x="0" y="0" width="1" height="1" filterUnits="objectBoundingBox"><feGaussianBlur stdDeviation="1.6"/></filter><clipPath id="cpitmy"><rect x="141.4" y="109.4" width="486.1" height="485.7"/></clipPath></defs><g clip-path="url(#cpitmy)"><g filter="url(#blitmy)"><rect x="133.4" y="101.4" width="502.1" height="501.7" fill="#440256"/><path fill="#450559" d="M141.6 594.9l485.7 0 0-485.7-485.7 0 0 485.7z"/><path fill="#460a5d" d="M141.6 594.9l485.7 0 0-485.7-340.8 0-0.6 4.3-1.9 3.1-1.5 1.2-2.7 1-4.3 0.6-7.1-0.8-5.5-2.2-3.1-2.9-1.8-4.3-116.4 0 0 485.7z"/><path fill="#470d60" d="M141.6 594.9l485.7 0 0-485.7-308.3 0 2.6 15.7-0.5 5.6-1.4 3.6-2.9 3.4-4.3 2.3-4.2 1.1-7.2 0.5-13.2-0.8-26.6-3.7-10-1.9-5.7-1.8-6.3-4-5.1-5.7-4.1-7.1-1.5-4.3-0.5-2.9-86.5 0 0 485.7z"/><path fill="#471063" d="M141.6 594.9l485.7 0 0-485.7-291 0 2.6 14.3 0.3 5.7-1.1 7.1-1.6 4.3-1.6 2.8-2.4 1.9-11.1 3.8-11.7 2.5-8.6 1-7.1-0.8-25.6-4.6-21.4-2.7-5.7-1.3-4.2-1.6-4.3-2.5-3.5-2.8-12.5-12.8-6.8-8.6-1.5-2.8-0.8-2.9-66.1 0 0 485.7z"/><path fill="#471365" d="M141.6 594.9l485.7 0 0-485.7-276.5 0 0.6 4.3 3.2 11.4 0.6 5.7-1.4 5.7-3.8 5.7-15.2 7.1-10.9 3.7-14.2 2.8-21.4 2.2-22.8-3.9-24.2-2.9-5.7-1.4-4.2-1.6-5.7-3.2-14.3-9.7-26.6-15.9-6.7-5.7-2.6-4.3-33.9 0 0 485.7z"/><path fill="#481668" d="M141.6 594.9l485.7 0 0-485.7-263.4 0 0.7 4.3 3.8 11.4 1 5.7-0.6 4.3-1.2 2.8-2.1 2.9-1.9 1.4-28.5 11.4-11.2 3.4-14.2 2.4-29.9 2.9-18.5-2.8-26.8-3.1-7.4-1.8-15.7-6.2-9.9-2.8-18.6-3-28.4-2.8-7.2-1.4-5.7-1.9 0 458.6z"/><path fill="#48186a" d="M141.6 594.9l363.3 0 1.8-7.2 3.8-8.1 2.8-3.3 1.5-0.9 2.8-0.7 2.9 0.2 2.8 0.9 7.1 3.6 15.1 9.8 3.5 2.8 2.3 2.9 76 0 0-485.7-252 0 0.7 4.3 3.3 11.4 0.7 5.7-0.2 2.8-0.9 2.9-3 4.3-2 1.4-3.4 1.4-30.9 12.2-12.8 4.1-15.7 2.7-39.9 3.6-18.5-2.3-19.9-1.4-17.1-1.7-8.6-0.2-11.3 1.5-20 5.1-8.5 1.4-12.8 0.4-12.9-1.4 0 427.5z"/><path fill="#481c6e" d="M141.6 594.9l349.1 0 1.8-14.3 0.6-14.2 0.8-4.3 1.1-2.8 2.7-3.9 4.2-3.3 4.3-1.7 5.7-0.8 7.5 1.1 3.9 1.5 4.3 2.5 5.7 4.3 12.6 11.7 7.3 5.7 10 6.5 16.1 9.1 4 2.9 44 0 0-485.7-241.2 0 0.6 4.3 3.3 11.4 1.2 5.7-0.2 5.7-1.6 3-3.2 2.7-12.4 4-38.5 14.7-9.8 2.7-8.7 1.4-51.3 4.9-24.2-1.5-12.8 0.3-8.5 0.8-8.6 1.9-7.1 2.7-6.8 3.7-11.7 7.4-5.9 2.6-15.5 0.8-22.8-0.5 0 407zM527.6 213.3l-2.9-1.5-7.6-5.7-12.6-11.4-11.5-12.8-0.3-1.5 0.7-1.5 2.8-2 7.2-1.9 11.4-1.5 8.5-0.3 5.7 0.6 5.7 1.5 4.3 2.1 3.7 3 4 5.7 1.9 5.7 0.3 5.7-1.4 5-2.8 4.2-5 3.6-6.4 2.4-5.7 0.6z"/><path fill="#481f70" d="M141.6 594.9l339.5 0 1.9-14.3 0.5-19.9 1.3-5.7 1.5-3.5 4.2-5.9 5.7-4.6 7.2-3.1 8.5-1.3 5.7 0.4 4.3 1 5.7 2.1 4.2 2.3 7.5 5.5 13.9 13.1 7.1 5.7 10 6.3 11.4 5.6 11.4 4 11.4 2.4 9.9 0.6 12.9-0.8 0-475.6-230.2 0 0.7 4.3 1.9 5.7 3.8 8.6 3 5.5 5.7 7.4 4.3 3.7 5.2 3.3-0.9 0.5-2.9 0-21.3-2.3-10 0.4-5.7 1-7.1 2-35.6 13.6-14.3 3.7-11.4 1.5-29.9 2.5-24.2 3-15.7-0.4-12.8 1.3-7.3 1.7-6.9 2.6-5.7 3.2-7.3 5.6-4.4 1.4-22.5 1-34.2 0 0 7.1 39.9 0.1 6.5 0.3 2.1 1.5-2.9 2-4.3 2.1-4.2 1.3-5.7 1-12.8 0.7-18.6-1 0 389.8zM536.1 224.8l-14.2-9.4-10-7.7-9.8-8.7-14.4-14.5-7.1-6.2-8.6-5.8-16.2-9.1-7.3-5.7 2.2-0.4 25.6 3.5 14.2 0.5 12.9-1 29.9-4.5 9.9-0.6 7.2 0.8 2.8 1 2.9 1.8 2.8 3.2 2.1 4.2 1.7 5.7 1.5 7.1 1.3 10 0.6 8.5-0.2 7.2-1.1 5.6-1.6 3.9-2.4 3.3-3.3 2.8-2.5 1.4-3.7 1.5-5.2 1.2-7.1 0.6-2.9-0.2z"/><path fill="#482173" d="M141.6 593.4l0 0.5 1.5 0.4 4.2 0.4 23.8-4.1 11.8-1 11.4-0.2 12.8 0.4 10 1 8.6 1.6 8.5 2.5 116.4 0 3.7-10 2.3-15.7 2.6-7.1 2-2.8 4-1 4.3-0.3 7.6 1.3 1.3 2.8 1 7.1-0.6 15.7 1.8 10 92.3 0 2.9-15.7 1.3-22.8 1.8-7.1 2.5-5.7 4.9-6.7 2.8-2.7 4.3-3.1 8.5-3.8 4.3-1.1 5.7-0.7 7.1 0.3 5.7 1.2 5.7 2 5.7 2.9 8.6 6 15.6 14.2 5.7 4.5 10 6.3 10 4.8 9.9 3.3 10 2 8.5 0.3 12.9-0.9 0-463.2-10.1 0-2.8 2.9-1 2.8-1 8.6-3.1 7.1-3.9 5.7-14.7 18.5-6.2 10-3.4 8.5-1.9 8.6-1 8.5-0.9 19.9-1.7 8.6-2.5 6.4-4.2 7.4-4.3 4.7-4.3 2.1-5.7 0-8.5-2-1.4-0.7-8.4-6.5-23-16-11.1-9.6-17.3-16.8-5.7-4.5-5.7-3.7-10-4.5-24.2-7.6-20-9.4-9.9-4.1-8.6-2.7-7.1-1.3-8.5-0.1-10 1.9-11.4 3.7-25.6 10.1-12.9 3.4-9.9 1.4-28.5 2.2-22.8 2.9-11.4 1.9-10 0.5-8.5 1.2-10 3.2-9.1 5.2-3.8 1.4-19.8 1.6-49.9 0.2 0 5.1 47.8 0.2 13.4 1.4 0.7 1.5-4.9 5.7-4.8 4.2-5.2 3.2-5.7 2.2-8.5 2.1-10 1.3-9.9 0.6-12.9 0 0 375.1zM451.1 147.7l16.7 1.1 17.1-0.3 12.8-1.8 12.8-3.6 11.9-5.4 11.1-7.1 19.7-15.7 2.3-2.8 0.6-2.9-146.8 0 1.3 5.7 3.5 7.2 5 7.1 5.4 5.7 6.2 5 6 3.5 6.9 2.7 7.5 1.6z"/><path fill="#482475" d="M263.3 593.4l1.9 1.5 72.5 0 5.5-10 1.9-4.3 3.9-15.6 1.9-5.7 1.5-1.5 7.1-2.8 5.7-1.2 5.7-0.3 5.7 0.5 4.3 1.1 6.7 2.7 1.1 1.5 0.5 21.3 3.1 14.3 72.9 0 4.4-17.1 1.7-21.4 1-7.1 2-7.1 3.2-7.2 2.9-4.2 3-3.4 4.3-3.7 4.3-2.9 4.2-2.1 5.7-2.1 10-1.9 7.1 0 7.2 1.1 6.6 2.2 6.2 2.9 10.6 7 16.4 14.1 7.1 5.4 8.6 5.3 8.5 4 8.6 2.8 8.5 1.5 7.1 0.3 12.9-1.1 0-411.7-4.3 1.3-5.7 3-5.7 3.8-6.5 5.3-4.9 5.1-3.8 4.9-2.6 4.3-2.8 5.7-3.3 11.4-3.4 25.6-5.3 24.2-2.9 27.1-3 9.6-3 7.5-1.2 1.9-2.9-3.2-2.8-5.3-6.1-17.7-3.2-7.1-3.3-5.7-4.5-5.7-4.3-4.3-5.7-4.8-18.5-12.9-8.5-6.7-8.6-7.7-14.2-14-5.7-4.9-7.1-4.9-8.6-3.8-7.1-2.2-16.3-3.6-8.8-2.8-6.2-2.9-20-10.9-5.7-2.3-5.7-1.7-8.5-1-8.6 0.8-11.4 3.2-26.7 10.5-10.3 3.1-12.8 2-28.5 2.3-29.9 4.2-22.8 4.9-13 4.9-13.3 1.4-16.4 0.7-51.3 0.3 0 3.9 37.1 0 22.8 0.7 10.7 1.5 0.2 1.5-8.1 9.7-4.3 4.4-5.7 4.4-5.7 3-9.9 3.6-12.9 3.3-12.8 2-11.4 0.7 0 334.7 2.9 0.9 4.3 0.4 19.9-1.6 10 0.1 32.7 3.6 8.6 1.5 8.5 2.7 7.1 3.3 27.7 17.7zM451.5 136.3l9.1 0.6 11.4-0.9 11.4-2.2 9.7-3.2 10.3-5.1 9.2-6.3 6-5.7 2-4.3-97 0 1.1 4.3 2.2 4.3 3.8 5.3 4.3 4.6 4.3 3.5 3.7 2.2 3.4 1.6 5.1 1.3z"/><path fill="#482677" d="M285.7 593.4l2 1.5 35.2 0 9.6-9.4 4.2-6.1 3-7.3 4.1-14.3 7.2-4 7.1-2.6 7.1-1.5 7.1-0.4 7.2 0.6 5.7 1.4 7.1 3.1 3.3 2 1.5 1.4-0.1 12.9 0.5 7.1 1.2 5.7 4 11.4 54.4 0 1.2-4.3 3.8-8.6 1.9-7.1 1.1-7.1 1.9-22.8 1.4-7.1 1.5-4.3 7.8-7.6 10-7.7 21.4-13.3 4.2-1.6 7.2-0.1 7.1 1 7.1 2.2 6.5 2.9 12 7.8 18.5 15 7.1 5.2 7.2 4.3 7.1 3.4 8.5 2.7 7.1 1.1 7.2 0.1 11.4-1.2 0-383.7-4.3 1.2-4.3 2-5.7 3.7-4.3 3.6-4.1 4.4-3 4.1-4.6 8.7-2.7 8.6-1.9 9.9-3.1 24.3-1.9 22.7-1.4 8.6-3.1 10-9.8 24.3-1.4 1.8-2.8-0.2-1.5-0.5-2.8-2.6-1.4-2.2-3.2-7.8-7.5-25.7-3.4-7.1-4.8-7.1-3.9-4.3-5.7-5.1-19.9-14.3-7.2-5.7-27-26.2-7.1-5-8.6-4.1-8.5-2.4-18.5-3.7-8.6-2.9-6.6-3.2-17.6-10.4-5.7-2.6-5.7-1.9-8.5-1.1-10 1-10 2.9-24.2 9.8-11.4 3.4-11.4 1.8-27 2.2-31.4 4.7-9.9 2.1-12.8 4.8-5.7 1.2-41.3 1.9-48.5 0.3 0 2.6 52.7 0.4 19 1.1 7.2 1.4-0.3 1.5-15.1 17-5.1 4.5-7.1 4.7-12.8 6-15.7 5.6-12.8 3.2-10 1 0 262.2 4.3-0.3 5.7-2.2 11.4-6.2 24.2-14.8 5.7-2.5 5.7-0.9 2.9 0.4 2.9 1.4 15.5 18.5 5.3 8.5-1.2 1.5-24 1.3-18.5-0.2-39.9-1.6 0 9.6 20.4-0.6 42.3-0.3 15.8 0.3 12.2 1.4 1.8 1.5 7.1 9.9 10.1 15.7 4.3 9.4 4.6 16.2 3.8 7.1 3.6 4.3 4.9 4.3 13.2 8.5zM457.5 117.8l7.4 0.2 7.8-1.6 6.5-2.9 2.8-2.4 1.1-1.9-37.2 0 1.2 2.9 3 2.8 3.4 1.8 4 1.1z"/><path fill="#482979" d="M414.5 594.9l32.5 0 1.1-2.9 6.9-10 3.4-8.5 1.2-5.7 0.7-7.1 0.6-21.4 1.4-2.8 9.2-10 11.9-9.8 15.7-10.5 24.2-14.5 2.9-0.1 7.1 1.7 5.7 2.2 7.1 3.6 10 6.7 24.2 18.9 7.1 4.5 7.1 3.5 7.1 2.5 7.1 1.2 7.2 0 11.4-1.3 0-358.1-2.9 0.6-4.3 1.8-7.1 5.1-5.7 6.3-4.6 8.2-2.9 8.5-1.8 10-0.9 11.4-0.8 24.2-0.9 7.1-1.3 5.7-3.3 8.5-10.5 21.4-5.7 15.4-4.3 2.4-2.9 0.6-2.8-0.8-1.4-1.1-2.6-3.7-1.7-3.9-2.8-10.3-4.9-22.8-3.5-10-5-8.5-3.5-4.3-4.5-4.5-27.1-20.4-7.1-6.7-17.5-18.2-5.3-4.5-5.7-3.9-5.7-2.8-7.1-2.4-21.3-4.1-8.6-2.5-8.5-4.1-17.1-10.5-10-4.3-8.5-1.5-4.3 0-5.7 0.8-11.4 3.2-22.8 9.3-10 3.1-11.3 1.9-28.5 2.4-31.4 5.3-9.9 2.2-11.4 4.3-2.9 0.7-17.1-0.4-35.6 1.6-41.3 0.1 0 0.8 31.4-0.1 19.9 0.6 33.4 1.9 0.8 0.2 1.1 1.2-8.2 8.2-17.1 18.9-8.6 6.1-15.6 8.6-15.7 7.3-11.4 3.6-10 1.3 0 220.8 5.7-0.5 7.2-1.6 11.3-3.1 17.1-5.9 8.6-1.2 8.5 7.1 7 6.7 17.2 20.5 11.5 12.3-1 1.4-1.9 0.2-35.6 0.5-55.6-0.4 0 6 54.2-0.4 32.7 0.4 11.4-0.5 5.6 1.3 21.7 17.1 1.3 1.4 2.7 8.9 4.4 22.5 2.2 5.7 2.7 4.2 4 4.3 5.2 3.6 5.7 2.5 7.2 1.7 5.7 0.2 5.7-0.8 5.7-2.1 4.2-2.6 4.1-3.9 3-4.5 2.9-6.4 3.3-10.5 9.5-5.2 8.9-3.3 11-2.1 11.4-0.3 10 1.6 8.6 3.5 8.4 5.8-0.4 12.8 1.1 8.6 2.2 5.7 5.5 8.5 1.1 2.9z"/><path fill="#472d7b" d="M426.9 587.7l3.8 0.8 2.9-0.1 5.7-1.7 5.7-3.7 4.5-5.2 3.3-7.1 1.8-8.6 0.2-8.5-1.4-11.4 0.5-1.5 3.1-4.2 6.2-7.1 10.7-10 12.4-9.5 28.5-18.5 17-10.4 1.5-0.5 4.2 1.2 5.7 2.5 5.7 3.2 10 6.9 22.8 17.8 7.1 4.6 7.1 3.6 7.2 2.4 7.1 1.1 5.7-0.1 11.4-1.5 0-333.2-5.7 1.8-5.7 4.1-4.3 4.7-3.8 6.5-2.3 7.1-1 6.9-0.2 7.3 0.7 24.2-0.8 7.2-1.8 7.1-3.8 8.5-9.8 15.6-4.3 7.8-4.1 9.4-4.4 12.4-5.7 4.6-4.3 1.5-2.8-0.6-1.4-1-2.9-3.4-1.8-3.5-2.1-5.7-1.8-7.1-4.4-27.1-2.7-10-2.4-5.7-2.4-4.3-3.8-5-4.7-4.9-5.2-4.5-15.7-11.4-6.7-5.5-6.1-6-16.7-18.2-4.9-4.3-5.5-3.9-5.7-2.9-7.1-2.6-22.8-4.4-8.5-2.5-8.6-4.1-19.9-12.2-5.7-2.4-5.7-1.4-8.5-0.4-10 1.9-8.5 2.8-20 8.3-11.4 3.4-9.9 1.5-21.4 1.6-11.4 1.7-32.8 6.3-7.1 2.1-11.3 4.4-11.5 10.5-17.5 19.4-13.8 13.2-22.8 14.7-8.5 4.7-10 3.4-10 1.3 0 185.6 5.7-0.8 14.3-4.3 5.7-1.3 7.1-0.1 7.1 1.7 10.6 11.2 16.9 15.6 19.5 23.1 14.1 14 1 1.4-0.9 0.9-4.2 0.5-12.8-0.4-29.9 0.4-54.2-0.4 0 4.5 85.5 0 7.1-0.4 11.4-1.6 2.8 0.4 2.9 1.7 36.5 28.6 1.1 1.4 0.4 8.5 1 7.2 2.5 7.1 2.6 3.8 2.9 2.5 4.3 2.3 4.2 1 4.3 0 2.9-0.6 5.7-2.9 2.8-2.6 2.8-3.9 1.9-3.9 2.4-7.1 10.9-5.7 6.2-2.7 11.2-3 14.4-1.8 11.4-0.2 8.6 1.4 5.6 2 4.4 2.2 9.4 6.4 1.4 1.4-0.7 5.7-0.1 5.7 0.7 5.7 1.3 4.2 2.2 4 2.8 3.2 4.1 2.8 3.5 1.4zM211.1 194.7l14.6 0.1 2.8-0.5 2-1-6.3-1.2-7.1-0.3-23.5 1.5 17.5 1.4z"/><path fill="#472f7d" d="M428.1 576.3l2.6 1 2.9 0.2 4.3-0.9 4.2-2.9 2.9-3.5 2.7-6.7 0.6-5.7-0.7-5.7-2.8-7.1 7.4-10 8.2-8.5 13.1-11.5 12.8-9.8 32.7-21.9 21.4-13 1.4 0 2.9 1.1 8.5 4.8 8.6 6.2 21.3 17.1 7.1 4.7 5.7 2.9 7.2 2.6 7.1 1.1 5.7-0.2 11.4-1.8 0-307.1-4.3 1.4-4.3 3.1-3.1 4.1-2.3 5.7-0.7 4.3 0 5.7 2 18.5 0.2 7.1-1.1 8.6-2.4 7.1-4.9 8.6-11.9 15.2-5.7 8.5-5.7 11.6-6 15.9-5.4 5.8-2.8 1.9-2.9 1-2.8-0.3-3.7-2.7-3.4-4.8-2.5-5.1-2.4-7.2-2-8.5-3.5-27.1-2.2-9.9-2.1-5.7-2.4-4.5-3.9-5.5-4-4.3-6.4-5.5-14.2-10.5-7.1-5.9-5.7-5.7-15.8-17.9-5.6-5.1-5.7-4-5.7-3-7.1-2.4-21.6-4.1-9.6-2.8-8.7-4.2-14.2-9.2-5.7-3.1-5.7-2.4-5.7-1.3-8.6-0.2-8.5 1.6-8.5 2.8-20 8.3-11.4 3.3-9.6 1.5-18.9 1.4-9.9 1.3-35.6 7.5-11.4 3.8-7.1 3.8-8.6 6.7-19.9 21.6-21.4 22-18.5 15.3-5.7 3.7-5.7 2.3-7.1 1.7-8.6 0.8 0 152.6 2.9-0.4 4.3-1.5 15.6-8.9 4.3-1.9 1.4 0 11.1 20.3 8 11.4 6.4 7.1 17.2 16.8 15.7 18.7 7.1 7.6 8.6 8 11.4 9.1 39.8 29.8 11.4 7.2 7.2 3 7.1 0.2 5.7-1.4 15.6-6.5 11.4-2.7 28.5-3.3 7.1 0 7.2 1.1 4.2 1.3 5.7 2.5 15.9 9.7-1.4 8.6 0.7 7.1 1.1 2.9 1.8 2.8 3.5 2.8zM141.6 512.3l0 0.7 84.1-0.1 8.1-0.6 2-1.5-10.1-1.1-29.9 0.3-54.2-0.3 0 2.6zM206.8 193.3l10.3 0.8 7.3-0.8-7.3-0.7-10.3 0.7z"/><path fill="#46327e" d="M313.9 543.6l4.3 0.7 4.3-0.1 22.8-5.8 21.3-2.2 18.6-2.7 7.1-0.5 7.1 0.4 6.9 1.6 20.2 8.6 4.2 0.5 2.9-0.6 4.3-2.4 14.5-13.2 29.6-24.2 34.2-23.8 31.3-20.5 4.3 1.7 7.1 4.5 26.2 21 6.6 4.5 5.7 3 7.1 2.5 5.7 0.7 5.7-0.4 11.4-2.4 0-226.4-2.9 1.2-2.8 2.5-21.4 21.3-6.9 8.4-3.7 5.7-3.6 7.2-8.6 22.2-4.3 4.8-2.8 2.4-4.3 1.5-2.8-0.5-4.3-3.2-2.8-3.7-2.9-5.1-3.7-8.5-2.3-7.1-1.9-8.6-2.8-27-1.9-10-2-5.7-2.5-4.7-3.8-5.3-4-4.3-6.4-5.5-13.7-10.1-6.3-5.3-5.7-5.8-15.6-18.5-5.7-5.2-5.7-3.9-5.7-2.9-7.1-2.3-20-3.7-8.5-2.3-9.5-4.2-16.1-10.3-7.2-3.8-7.1-2.3-8.5-0.8-7.2 0.9-7.1 2-22.8 9.3-9.9 3.1-10 1.9-21.4 1.7-9.9 1.4-20 5-17.1 3.7-10.4 3.8-9.1 5.7-7.9 7.1-15.3 17.1-20.3 21.4-5.8 7.1-8.1 11.3-7.1 7.3-5.7 3.7-5.7 2.2-8.5 1.8-8.6 0.7 0 123.4 5.7-1.5 17.1-10.2 1.4 0.2 7.3 10.7 11.2 22.7 7.1 11.4 7.2 8.6 18.3 18.5 13.1 15.7 7.1 7.5 8.5 7.9 10 7.9 37 26.1 12.8 8.2 8.5 3.6zM141.6 512.3l25.2 0 29-0.8 28.4 0.9 2.9-0.2 3.7-1.4-6.6-0.4-28.4 0.3-54.2-0.4 0 2z"/><path fill="#463480" d="M316.5 536.5l7.4 0.4 17.1-2.2 22.8-1 8.5-1.2 17.1-3.5 7.2-0.8 5.7 0 5.6 0.6 18.6 3.9 4.2 0 5.7-1.4 8.6-4.2 11.4-7.4 28.5-22.6 28.4-20.4 24.9-17.1 16.4-12.3 4.3 2.3 5.7 4.1 24.2 20.1 5.7 3.8 5.7 2.9 5.7 1.7 5.7 0.4 4.3-0.8 11.4-3.6 0-194-5.7 1.6-8.6 5.1-8.5 6.6-7.1 7-5.7 8-4.3 8.1-4.3 10.7-4.3 13.7-1.4 3.1-2.8 3.5-2.9 2.4-2.8 1.3-2.9 0-4.2-2.1-2.9-2.9-2.8-3.9-5.7-10.4-5-11.7-2.6-8.6-1.6-8.5-1.7-24.2-0.9-7.1-2-7.2-3.6-7.1-4-5.2-4.7-4.8-18.5-14.2-6.7-5.9-5.7-6.2-10.7-13.5-5.4-5.7-6.7-5.4-7.1-4-8.6-2.9-19.9-3.7-8.5-2.4-9.6-4.4-16.1-10.2-7.1-3.7-7.1-2.2-8.6-0.5-5.7 0.7-7.1 1.9-22.8 9.3-9.9 3.1-10 1.8-21.4 1.8-8.5 1.3-22.8 6.2-15.7 3.6-9.9 3.9-8.9 5.8-8.9 8.5-28.7 31.4-7.2 8.5-8 11.4-12.4 22.4-4.3 2.4-5.6 1.6-8.6 1.2-10 0.5 0 96.7 2.9-0.4 4.3-1.7 12.8-8.1 1.4-0.5 8.5 11.8 5 8 3.6 7.2 7.8 18.4 3.8 7.1 3.8 5.7 7 8.6 16.5 17 18.7 21.4 13.6 12 19.9 14.2 31.4 19.6 7.1 3.5 6.8 2z"/><path fill="#453781" d="M344.1 530.8l12.6 0.6 9.9-0.6 8.6-1.7 17.1-4.4 10-1.4 8.5 0.1 15.7 1.7 5.7-0.1 7.1-1.3 7.1-2.6 7.1-3.7 5.7-3.9 24.2-19.7 50.8-37.1 16.7-14.2 10.9-11.5 1.4-0.3 9.9 10.4 12.9 11.3 7.1 5.4 5.2 3.2 6.2 2.4 4.2 0.4 4.3-1 4.3-2.6 7.1-7.5 2.9-2 0-155.4-7.2 1.4-8.5 4.1-8.5 6.1-5.7 5.9-5.7 8.5-5.2 11.5-3.2 10-5.9 22.8-4.3 2.4-4.2 0.2-2.9-1.1-2.8-2-2.9-3-2.8-4.2-7.1-14-8.7-19.6-2.6-8.6-1.6-8.4-1-24.3-0.8-7.1-2.1-7.2-2.9-5.7-4.3-5.7-4.3-4.2-18.4-14.3-6.3-5.7-5.4-6-10.8-13.9-4.9-5.3-5.7-4.7-7.1-4.2-10-3.5-19.2-3.7-9.3-2.6-9.4-4.5-14.8-9.4-7.1-3.8-7.1-2.3-8.6-0.7-5.7 0.7-7.1 1.8-22.8 9.3-9.9 3-11.4 2-22.8 2.1-11.4 2.4-15.7 5-20.7 5.6-7.8 3.7-6.6 4.8-7.6 7.3-25.6 28.3-7.3 8.6-5.4 7.1-7.6 12.8-18.2 37.5-4.4-1.9-5.5-1.3-12.9-0.9 0 69.5 4.3-1 4.3-2.1 5.7-4.2 4.3-4.2 1.4-0.2 9.9 15.6 7.2 12.5 4.9 10.3 8.3 21.4 3.7 7.1 3.6 5.7 6.9 8.5 16.1 17.1 15 17.1 7.3 7.1 9.6 7.9 11.4 8.2 11.4 7.2 20 11.2 11.4 5.6 7.1 2.3 5.7 1 23 0.8z"/><path fill="#443983" d="M348.1 527.9l10 0.9 10-0.7 8.5-2 17.1-5.3 10-1.8 8.5-0.2 17.1 1.2 7.1-0.4 4.3-0.8 5.7-1.8 8.5-4.3 7.2-5 22.8-19.2 40.9-30.4 8.3-7.1 10.3-9.9 8.8-10 6.5-10 5.6-12.8 1.7-5.7 0.9-5.7-0.2-5.7-1.2-4.3-10.4-19.7-7.8-20.1-8.9-20-3.1-8.5-1.6-6.9-0.7-5.9-0.2-21.4-0.8-8.5-2.8-8.6-4.6-7.1-7-7.1-15.2-11.6-6.3-5.5-5.3-5.7-14.1-18.1-4.8-4.7-5.7-4.3-5.3-2.8-7-2.6-22.2-4.5-9.1-2.8-9-4.4-19.5-11.9-7.1-2.8-5.7-1-7.1 0.1-8.6 1.8-24.1 9.6-11.5 3.3-9.9 1.7-21.4 2-10 1.9-19.9 6.8-17.1 4.8-7.1 3.2-5.7 3.7-8.9 8.2-24.3 27-9.4 11.4-6.7 10-5.2 10-5.8 14.2-13.4 37-2.3 10 0.2 7.1 1.7 6.4 17.1 37.9 4.3 10.8 6.6 19 4.5 9.9 4.3 7.2 5.5 7.1 31.2 34.2 10.9 9.9 16.8 12.5 11.4 7 17 8.6 11.4 5 10 3.3 7.1 1.4 24.2 3.5zM592.5 429.7l3.4 0.6 2.9-0.3 4.3-2.4 2.9-3.6 5.3-11.4 3.8-5.7 3-2.9 3.5-2.3 5.7-2 0-94.4-5.7 0.5-7.2 2.2-7.1 3.8-5.7 4.7-4.2 4.9-4.3 6.8-2.9 6.3-2.7 8.3-10.4 52.7-0.9 5.7-0.2 5.7 1.4 7.9 3.3 6.3 5.3 5.2 2.8 1.8 3.7 1.6zM141.6 358.5l0 0.3 1.5-0.2 2.8-1.1 2.9-1.9 2.8-2.9 2.8-4.2 1.2-2.9 1.4-7.1-1.1-6.4-3.1-5-2.6-2.2-2.9-1.5-5.7-1.1 0 36.2z"/><path fill="#433d84" d="M348.2 525.1l9.9 1.2 8.5-0.4 8.6-1.9 17.1-5.9 8.5-2.2 10-1 18.5 1.1 7.1-0.2 8.6-1.7 8.5-3.9 8.6-6 15.6-13.9 10-8.1 32.5-24.1 10.9-9.9 11.3-12.8 8-11.4 4.4-10 2.5-11.4 0.2-7.1-0.9-7.1-8.5-32.8-4-11.4-9.1-19.9-2.7-8.6-1.3-9.9 0.3-20-0.6-8.5-0.9-4.3-1.6-4.3-4.4-7.1-7-7.1-14.9-11.4-6.4-5.7-6.3-7.1-11.8-15.7-5.4-5.3-5.7-4.3-5.7-3.1-5.7-2.2-22.7-4.8-9.7-3.1-8.8-4.2-20-12.1-5.7-2.2-5.7-1.1-7.1 0-7.1 1.3-7.1 2.4-18.6 7.5-11.4 3.3-9.9 1.7-20 1.9-9.9 2-21.4 7.7-17.1 5.3-4.8 2.2-5.2 3.2-4.9 3.9-5 5-19.9 22.1-10.6 12.8-7.7 11.4-5.6 11.4-4.4 12.8-3.8 15.7-2.3 15.6-0.6 11.4 0.4 8.6 3.5 21.3 3.6 15.7 9.9 32.8 3.6 9.9 5.1 10 7.3 10 32.9 35.6 13.6 11.4 16.3 11.5 14.2 7.3 21.4 8.4 11.4 3.4 27.1 6.4zM594.3 396.9l3.1 0.5 2.8-0.7 21.4-9.7 5.7-1.6 0-69.9-5.7 0.2-5.7 1-4.3 1.6-4.3 2.4-4.2 3.5-2.9 3.1-2.9 4.1-2.9 5.7-2.4 7.1-1.8 8.6-1.1 9.9-0.4 11.4 0.3 8.6 1.2 7.9 1.5 3.7 2.6 2.6z"/><path fill="#423f85" d="M354.7 523.7l7.7 0.3 8.5-1.2 7.1-2.2 15.7-5.9 10-2.4 9.9-0.6 18.6 1.2 8.5-0.8 7.1-2.1 7.1-3.7 7.2-5.4 21.3-19.2 12.1-9.3 20.7-15 9.9-9.2 10.2-12.8 8.2-12.9 4-9.9 1.3-5.7 0.7-5.7-0.4-11.4-4.8-32.8-3.4-11.4-9.2-19.9-3-8.5-1-5.7-0.4-5.7 0.6-20-0.3-7.1-0.9-4.3-1.4-4.2-4.2-7.2-6.8-7.1-14.8-11.4-6.4-5.7-5.1-5.7-12.9-17.1-5.5-5.5-5.7-4.2-5.7-3-5.7-2.1-22.8-5-8.5-2.8-9.2-4.4-19.3-11.5-7.1-2.7-5.7-1-7.1 0.2-7.2 1.6-23.5 9.1-12.1 3.5-9.9 1.6-20 2.1-9.9 2.1-7.2 2.5-15.6 6.4-14.3 4.8-8.5 4.4-8.5 7.1-11.4 12.2-15.1 17.4-9.4 12.8-4.9 8.6-4 9.9-3 11.4-1.6 11.4-0.3 8.6 0.6 7.1 3.5 15.6 0.9 5.7-0.1 5.7-1.6 12.9-0.3 7.1 0.5 8.5 1.2 8.6 4.3 18.5 4.5 15.6 4.5 10 6.5 10 7.3 8.5 26.4 28.1 17.7 14.7 12.2 8.7 11.4 5.8 15.7 5.9 41.3 12.8 10.8 2.4zM603.2 375.5l4.1 1.3 4.3-0.3 4.3-1.3 8.5-3.8 2.9-0.7 0-43.1-8.6-0.4-4.3 0.7-2.8 0.9-2.9 1.6-3.1 2.4-2.6 2.9-2.6 4.2-1.7 4.3-1.4 5.7-0.6 5.7 0.2 5.7 0.5 4.3 1.4 4.5 1.4 2.6 3 2.8z"/><path fill="#424186" d="M351.7 520.8l7.8 1 7.1-0.4 8.6-2.1 18.5-7.2 8.6-2.4 9.9-0.9 17.1 1.2 8.6-0.2 8.5-2 7.1-3.5 7.1-5.3 14.3-13.5 8.5-7.4 9.2-7.1 20-14.3 9.4-8.5 7.6-10 9-15.7 4-9.9 1.9-10 0.1-10-1.1-27-0.9-8.6-3.2-11.4-9-18.8-3.3-9.6-1.2-10 0.8-21.4-0.4-7.1-1.8-7.1-4-7.1-6.7-7.2-14.7-11.4-5.7-5.1-5.7-6.3-12.8-17.1-5.7-5.6-5.7-4.2-5.7-3-5.7-2-21.4-4.8-8.5-2.7-9.9-4.7-18.6-11.1-7.1-2.7-5.7-1-7.1 0.1-7.2 1.5-23.4 8.9-12.2 3.5-9.9 1.7-18.5 2-10 2.1-7.1 2.4-15.7 7-14.2 5.3-7.2 3.7-7.1 5.4-9.9 10.1-14.8 16.7-9.6 12.8-5.1 8.5-3.8 8.6-2.5 8.5-1.5 10-0.2 8.5 0.6 7.1 4.8 21.4 1 8.5-0.3 7.4-3.2 22.6 0 8.5 0.7 8.5 2.6 14.3 3.4 12.8 4.1 10 5.1 8.5 8.7 10.7 25 26.3 19.9 17.1 9.6 7.2 8.1 4.4 8.6 3.5 29.9 9.3 21.4 7.6 7.8 2.2z"/><path fill="#414487" d="M356.3 519.4l7.5 0.2 7.1-1.2 7.1-2.4 15.7-6.4 8.6-2.5 9.9-0.8 17.1 1.2 8.6-0.3 8.5-2 7.1-3.6 7.1-5.6 12.9-12.5 8.5-7.6 10-7.7 18.4-12.9 5-4.3 4.2-4.2 7-10 7-14.3 4.1-11.3 1.8-11.4 0.2-17.1 0.9-17.1-0.6-8.6-1.2-5.7-1.8-5.7-9.4-19.7-2.8-8.7-1.1-10 0.9-19.9-0.2-7.2-1.6-7.1-3.8-7.1-6.5-7.1-14.8-11.6-6.1-5.5-5.3-6.1-12.8-17.1-4.3-4.4-5.7-4.4-5.7-3.1-5.7-2.2-22.7-5.4-8.6-2.9-8.6-4.1-19.9-11.5-7.1-2.5-5.7-0.8-5.7 0.2-7.2 1.4-23.3 8.8-10.8 3.1-10 1.8-19.9 2.4-10 2.2-8.7 3.3-15.5 7.4-12.7 5.4-5.3 2.8-7.7 5.9-9.9 9.9-11.4 12.7-8.7 11.4-5.3 8.6-4 8.5-2.6 8.6-1.2 8.5-0.2 5.7 0.5 7.1 4.5 22.8 1.2 14.2-0.4 11.4-3.4 24.2-0.2 7.2 0.6 8.5 1.7 11.4 3 11.4 3.5 8.5 5 8.6 8.8 10.8 23.9 24.8 20.7 18.5 9.6 7.1 7.1 3.8 7.1 2.7 28.5 8.6 25.6 9.8 9.6 2.2z"/><path fill="#404688" d="M352.3 516.5l8.7 1.1 8.5-1 7.1-2.2 18.5-7.7 10-2.4 8.5-0.4 18.6 1.3 8.5-0.8 4.3-1.1 4.2-1.9 7.2-4.6 5.1-4.5 13.4-13.4 7.1-6.2 7.9-6 16.3-11.1 5.7-4.6 5.6-5.7 4.1-5.7 3.2-5.7 3.1-7.1 3.1-8.5 2.3-8.6 1.2-7.1 1.1-17.1 2.3-18.5-0.1-8.5-1.7-8.6-2.6-7.1-7.7-15.7-3-8.5-0.9-5.7-0.3-5.7 1.1-19.9-0.4-7.2-0.8-4.2-1.6-4.3-4.6-7.1-5.7-5.7-13.4-10.5-5.7-5.1-5.6-6.6-12.9-17.1-5-4.9-4.9-3.7-5.7-3-5.7-2.2-21.4-5.2-8.5-2.8-9.4-4.4-19.1-11-7.1-2.6-5.7-0.8-5.7 0.1-7.2 1.4-23.4 8.6-10.7 3.1-10 1.8-19.9 2.5-8.6 2-10 3.9-31.3 15.9-7.1 5.3-10 9.5-9.9 10.7-7.4 9.4-5.4 8.5-4.2 8.6-2.4 7.1-1.5 8.5-0.2 5.7 0.5 7.1 3.8 24.3 0.7 19.9-0.4 14.2-3.2 24.2 0.2 12.9 1.4 9.9 2.1 8.6 3.3 8.5 4.1 7.1 4.1 5.7 4.8 5.7 21 21.5 22.3 21.3 9.1 7.1 5.6 3.3 7.2 3 28.5 8.3 24.2 9.8 8.4 2.6z"/><path fill="#3f4889" d="M355.5 515.1l8.3 0.4 7.1-1.3 7.1-2.4 17.1-7.3 8.6-2.3 8.5-0.5 21.4 1.3 7.1-0.9 5.7-1.7 5.7-3.1 4.7-3.5 16.7-16.7 8.7-7.6 26.4-18.5 5.9-5.7 4.2-5.7 3.8-7.1 3.2-8.5 3.9-15.7 2.3-21.4 3.6-21.3-0.1-8.6-1.5-7.1-2.7-7.1-7.9-16.1-2.6-8.1-1.1-10 1.1-19.9-0.2-7.1-0.7-4.3-1.5-4.3-4.3-7.1-5.7-5.7-13.5-10.7-5.4-5-6-6.9-12.8-17.1-4.6-4.5-5.4-3.9-5.7-3-5.7-2.2-19.9-5-8.5-2.7-9.7-4.5-18.8-10.7-7.1-2.6-5.7-0.9-5.7 0.1-7.2 1.4-23.5 8.4-10.6 3-10 1.9-18.5 2.5-10 2.3-11.4 4.9-27 15-7.2 5.1-9.9 9-8.8 9-6.9 8.5-5.5 8.6-4.1 8.5-2.3 7.2-1.3 8.5 0.3 10 2.7 21.3 0.1 20 1.2 19.9-0.4 5.7-3.5 21.4-0.3 7.1 0.2 7.1 1.1 8.6 1.8 7.1 2.8 7.1 3.9 7.1 5.3 7.1 6.6 7.3 38.3 38.3 4.6 4.3 5.5 4.1 5.7 3.2 5.7 2.4 28.5 8.1 8.5 3.2 17.1 7.4 10.2 2.9z"/><path fill="#3e4c8a" d="M351.6 512.3l5.1 1 4.3 0.3 8.5-1 8.5-2.9 17.1-7.4 10-2.5 8.5-0.3 17.1 1.4 8.6-0.6 4.3-1.2 4.2-1.7 7.1-4.7 5.1-4.6 12-12.6 7.2-6.4 7.1-5.3 15.6-10.2 5.7-4.4 5.3-5.3 4.1-5.7 4-8.5 3.2-11.4 2.1-11.4 2.2-18.5 3.8-17.1 1-7.1-0.2-8.6-1.7-7.1-3-7.1-6.5-13.1-2.9-8.4-1-5.6-0.3-5.7 1.1-18.5-0.3-8.5-0.8-4.3-1.6-4.3-4.7-7.1-5.2-5.1-11.5-9.2-6.3-5.6-5-5.7-14-18.6-4.5-4.3-5.7-4.2-4.3-2.3-5.7-2.3-20.5-5.4-8.6-2.8-9.3-4.3-19.9-11-5.7-2-5.7-0.9-5.7 0-7.2 1.4-23.7 8.2-10.4 3-8.6 1.6-18.5 2.7-7.1 1.5-10 3.5-11.6 6.2-18.5 11.4-6.9 5-11.4 9.8-9.3 9.5-6.6 8.5-4.8 8.5-3.2 8.6-1.8 10-0.1 8.5 1.9 22.8 0 27 2.4 24.3-0.7 7.1-3.4 9-1 8.1-0.1 8.5 0.7 7.1 1.6 7.2 2.6 7.1 2.9 5.7 4.7 6.8 5.7 6.5 21.3 20.9 20 21.2 8.5 7 5.7 3.2 5.7 2.3 28.5 7.8 22.8 9.9 7.7 2.7z"/><path fill="#3d4e8a" d="M353.8 510.8l7.2 0.9 8.5-1.1 8-2.6 16.2-7.2 10-2.8 8.5-0.5 15.7 1.3 5.7 0 5.7-0.7 5.7-1.7 5-2.6 4.9-3.7 15.9-16.3 8.4-7.4 25.6-17.4 5.4-5.1 3.4-4.3 3.2-5.7 2.7-7.1 2.8-12.8 3.1-24.2 4.6-18.5 1.2-7.1 0-7.2-1.4-7.1-2.2-5.9-7.6-15.4-2.8-8.6-1.2-10 1.1-19.9-0.5-8.5-2-7.2-4.5-7.1-5.3-5.3-11.4-9.2-5.9-5.4-5.5-6.2-12.8-17.2-5.1-5.1-4.9-3.7-5.7-3.1-5.7-2.3-19.9-5.4-8.6-2.9-8.5-3.9-19.9-10.8-5.7-2-5.7-1-5.7 0-7.2 1.3-24.2 8.2-11.4 3.1-31.3 5.5-10 3.5-9.4 4.9-17.3 11.4-10.3 7.5-11.4 9.5-8.5 8.5-5.7 7.3-4.8 8.5-3 8.6-1.3 8.5 0 8.6 1.4 22.8-1.3 27 0.8 8.6 2.5 16.1 0.4 6.7-1.1 8.5-4 11.4-0.3 8.5 0.7 7.2 1.3 5.7 2 5.6 2.8 5.7 3.9 5.9 5.7 6.7 21.3 19.9 17.3 20.2 5.5 5.4 4.3 3.4 5.7 3.4 5.7 2.4 28.5 7.6 8.5 3.4 15.7 7.3 8.5 2.7z"/><path fill="#3c508b" d="M356.5 509.4l7.3 0.2 7.1-1.3 7.1-2.5 15.7-6.9 10-2.8 8.5-0.5 15.7 1.2 5.7 0 5.7-0.7 5.7-1.9 5.7-3.3 4.2-3.4 15.7-16.3 6.7-5.9 7.6-5.4 14.1-8.9 5.6-4.2 4.3-4.3 3.3-4.3 3-5.7 2.1-5.7 2.3-11.4 3.1-25.6 5.4-19.9 1.1-7.2-0.2-7.1-1.4-6.3-2-5.1-6.9-14.2-3.2-10-1.2-10 1-19.9-0.4-7.1-1.8-7.1-4.3-7.2-5.4-5.6-11.4-9.3-5.7-5.3-5.7-6.5-12.8-17.2-4.6-4.5-5.4-4-5.6-3.1-5.8-2.2-18.5-5.2-8.6-2.8-8.9-4-19.5-10.5-5.7-2-5.7-1.1-5.7 0-5.7 0.9-34.2 10.8-33 6.1-9.7 3.4-8.6 4.4-11.7 7.9-18.2 13.6-11.4 9.5-6.8 6.8-5.5 7.1-3.9 7.1-2.4 7.2-1.4 8.5-0.2 10 1 18.5-1.9 22.8-0.2 8.5 0.8 8.6 3.1 18.5 0.6 8.5-0.7 7.1-3.8 14.7-0.5 5.3 0.7 5.7 1.4 5.7 2.2 5.7 2.3 4.2 3.8 5.7 4.3 4.9 20.4 17.9 5.2 5.9 13.1 16.9 4 4.3 5.7 4.6 4.3 2.6 5.7 2.6 27.9 7.3 7.7 2.9 18.5 8.7 9.8 2.6z"/><path fill="#3b528b" d="M351.8 506.6l4.9 1 4.3 0.3 8.5-1.1 7.1-2.4 17.1-7.4 10-2.7 8.5-0.6 20 1.2 5.7-0.6 5.7-1.7 5.6-3.1 4.3-3.3 15.7-16.6 6.5-5.8 26.2-17.1 4.5-4.2 3.5-4.3 3.2-5.7 2.1-5.7 2-10 2.6-25.6 6.2-21.3 1.2-7.2-0.2-7.1-1.2-5.7-2.2-5.7-6.7-14.2-3.1-10-1.1-10 0.8-19.9-0.5-7.1-2-7.1-4.6-7.2-4.2-4.2-11.7-9.7-5.6-5.4-5.5-6.3-12.8-17.1-4.5-4.5-5.4-4-4.6-2.6-5.7-2.3-19.9-5.8-8.6-3-7.6-3.4-19.4-10.3-5.7-2-5.7-1.1-5.7 0-7.2 1.1-31.3 9.9-33.6 6.7-9.1 3.1-8.6 4.4-9.8 6.7-22.9 17.7-8.6 7.1-6.6 6.5-4.4 5.7-4 7.1-2.4 7.2-1.4 8.5-0.2 10 0.7 15.6-2.4 24.3-0.3 9.9 0.8 8.6 3.6 19.9 0.6 10-0.8 8.5-2.6 14.3-0.3 5.7 1.2 7 3.8 8.6 3.4 5.1 3 3.5 16.9 14.6 5.7 5.6 5.7 6.9 11.6 15.6 5.5 5.6 4.2 3.4 5.7 3.3 5.7 2.2 20 4.9 8.5 2.7 21.4 9.8 6.5 2.3z"/><path fill="#3a548c" d="M353.7 505.1l7.3 0.9 8.5-1.1 7.1-2.3 17.1-7.4 10-2.6 8.5-0.7 20 1 5.7-0.7 4.4-1.3 5.5-2.8 5.5-4.3 14.5-15.5 6.5-5.9 6.3-4.4 14.2-8.4 6-4.3 4.5-4.2 3.3-4.3 2.4-4.3 2.2-5.7 1.9-10 1.3-18.5 1-7.1 1.6-6.4 4.9-14.9 1.3-7.2 0-5.7-1.4-7.1-8.6-19.9-2.7-8.6-1.4-11.4 0.7-18.5-0.4-7.1-1.9-7.1-1.9-3.6-2.5-3.5-4.1-4.3-11.9-10.2-5.7-5.5-5.7-6.7-11.9-16.1-4.3-4.2-5.1-4-5.6-3.2-5.8-2.4-20-5.9-8.5-3.1-27.1-13.5-5.7-1.8-4.2-0.7-5.7-0.1-7.2 1.1-31.3 9.7-31.3 6.4-9.8 3.2-8.4 4.3-10.4 7.1-25.5 20.3-7.2 5.9-5 5.1-4.5 5.7-3.7 7.2-2.3 7.1-1 7.1 0.1 24.2-2.8 25.7-0.3 9.9 0.8 8.6 3.5 18.5 1.1 9.9-0.2 8.6-2.2 17.1 0.1 5.7 1.5 7.1 2.5 5.7 2.7 4.3 5 5.7 14.7 13 5.7 5.7 5.7 6.9 11.5 15.7 5.4 5.7 4.5 3.4 5.7 3.2 5.7 2.2 18.5 4.6 8.5 2.6 21.4 9.7 8.4 2.7z"/><path fill="#39568c" d="M355.9 503.7l7.9 0.3 7.1-1.3 7.1-2.5 15.7-6.7 10-2.7 8.5-0.6 20 0.7 5.7-0.8 4.2-1.3 4.3-2.2 5.5-4.2 14.4-15.4 6.7-6 6.2-4.3 14.6-8.5 6.7-4.9 3.7-3.7 3.2-4.2 2.2-4.3 2-5.7 1.7-10 0.8-15.6 0.9-7.2 1.7-7.1 5.2-15.6 1.4-8.6-0.2-5.7-1.2-5.7-8.6-20.4-2.8-10.3-0.9-9.2 0.5-18.5-0.9-8.5-2.6-7.1-4-5.7-20-18.6-4.9-5.6-12.8-17.1-4.3-4.4-5.7-4.4-4.7-2.6-5.2-2.3-20-6.1-8.5-3.1-27.1-13.3-5.7-1.8-5.7-0.9-5.7 0.2-7.1 1.2-29.9 9.2-31.3 6.7-8.6 2.9-8.6 4.4-9.9 6.8-27 21.8-5.7 4.8-5.1 5.1-4.4 5.7-3.6 7.1-2 7.1-0.9 7.1-0.2 21.4-3.1 27.1-0.3 9.9 0.9 8.6 3.5 18.5 1.2 9.9 0.1 8.6-1.6 17.1 0.2 5.7 1.6 7.1 2.6 5.7 2.9 4.3 3.7 4.2 14.4 13.2 5.7 5.8 4.4 5.3 12.7 17.3 5.2 5.4 4.8 3.8 4.3 2.4 5.7 2.3 19.9 5.1 7.1 2.3 22.8 10 9.2 2.6z"/><path fill="#375a8c" d="M360.4 502.3l6.2-0.5 5.7-1.3 20-8.2 10-2.9 9.9-0.9 20 0.4 5.7-0.9 4.2-1.5 4.3-2.3 4.3-3.3 14.2-15.1 6.9-6.2 7.4-5 14.2-8.2 5.7-4.2 4-4 3-4.3 2.2-4.2 1.4-4.3 1.6-8.6 0.8-17 0.9-7.2 1.8-7.4 5.1-15.3 1.5-8.6-0.2-5.7-1.2-5.7-8.1-19.9-2.8-10-1-8.5 0.3-20-0.8-7.1-2.4-7.1-3.8-5.7-4.1-4.3-15.3-14-5.7-6.6-12.8-17.1-5.2-5-4.8-3.5-9.9-4.9-20-6.3-8.5-3.2-25.7-12.4-5.7-1.8-5.7-0.9-7.1 0.2-7.1 1.4-27.1 8.3-29.9 6.6-11.4 3.9-7.7 4-7.9 5.4-35.2 28.8-5.4 5.7-3.6 5.1-3 6.3-1.6 5.7-0.7 5.7-0.9 24.2-3.3 28.5 0.4 12.8 4.2 22.8 1.1 8.5 0.1 8.6-1.1 17.1 0.3 5.7 0.8 4.3 1.5 4.2 2.2 4.3 3 4.3 5.2 5.7 16 15 5.7 6.8 12.9 17.4 4.7 4.9 5.2 4 4.3 2.4 5.7 2.2 18.5 4.8 8.5 2.8 24.3 10.4 5.7 1.4 5.1 0.5z"/><path fill="#365c8d" d="M352.3 499.4l8.7 1.1 8.5-1 7.1-2.3 17.1-7 10-2.7 8.5-0.7 18.5 0.3 5.7-0.8 4.3-1.4 4.3-2.2 4.2-3.2 15.1-15.7 6.4-5.7 7-4.7 14.3-8.1 5.7-4.2 3-2.9 3.3-4.3 2.3-4.2 1.5-4.3 1.6-8.6 0.8-17 0.9-7.2 1.7-7.1 5.5-17.1 1.2-7.1-0.2-5.7-1.2-5.7-7.9-19.9-2.6-10-1-10 0.1-18.5-1-7.1-2.7-7.1-3.9-5.6-18.5-17.7-5.7-6.6-11.7-15.7-4-4.3-5.7-4.5-4.4-2.6-6.4-2.8-20.5-6.7-8.5-3.3-24.3-11.7-5.7-1.8-5.7-0.9-7.1 0.2-7.1 1.3-28.5 8.5-28.5 6.6-9.9 3.5-7.2 3.6-7.4 4.9-35.3 28.8-5.4 5.4-3.3 4.3-3.1 5.7-1.9 5.7-1.3 8.5-1.2 22.8-3.2 25.7-0.3 8.5 0.5 7.1 4.3 22.8 1.2 10 0.1 8.5-0.7 14.3 0.4 7.1 0.9 4.3 1.5 4.2 4.3 7.1 5.1 5.7 16.4 15.7 5.7 6.9 12.8 17.3 4.2 4.4 4.3 3.3 8.6 4.4 27 7.7 21.4 9.2 7 2.3z"/><path fill="#355f8d" d="M353.5 498l7.5 0.8 8.5-1.1 7.1-2.2 17.1-6.9 10-2.7 8.5-0.8 18.5 0 4.3-0.6 4.3-1.3 4.6-2.3 5.3-4 13.9-14.5 6.6-5.7 6.6-4.4 14.2-8.2 5.7-4.1 3.4-3.2 3.2-4.3 2.1-4.3 1.4-4.2 1.2-7.2 0.9-17 0.9-7.2 1.6-7.1 5.6-17.1 1.2-7.1-0.2-5.7-1.2-5.7-7.6-19.9-2.6-10-1-10 0-17.1-0.9-7.1-2.6-7.1-3.8-5.7-20.1-19.9-17.1-22-4.2-4.1-4.3-3.2-10-5-28.5-10-24.2-11.4-5.7-1.9-5.7-0.9-7.1 0.1-8.5 1.7-27.1 8-27 6.5-10.7 3.7-7.9 4.2-7.1 4.8-35.6 29.5-4.3 4.3-4 5.6-2.1 4.3-1.7 5.7-1.1 7.1-1.7 22.8-3.2 25.7-0.3 8.5 0.6 7.1 4.2 22.8 1.2 10 0.3 8.5-0.5 14.3 0.3 5.7 2.2 8.5 4 7.1 4.9 5.7 12.6 12 5.7 6.1 17.1 22.4 4.3 4.3 4.2 3.2 8.6 4.3 25.6 7.3 21.4 9 8.2 2.6z"/><path fill="#33638d" d="M356.6 495.2l7.2 0.1 7.1-1.3 7.1-2.3 15.7-6.3 8.6-2.4 8.5-1.1 18.5-0.6 8.6-2 4.2-2.1 4.7-3.4 14.2-14.2 6.8-5.7 6.4-4.3 13.5-7.7 5.7-4.1 2.8-2.7 3.1-4 2.2-4.3 1.4-4.3 1.2-7.1 1-17.1 0.9-7.1 1.7-7.1 5.1-15.7 1.2-7.1-0.1-5.7-1.2-5.7-6.7-18.5-2.6-10-1.2-9.9-0.4-17.1-1-7.1-2.7-7.2-3.8-5.7-18.1-18.5-17.9-22.8-4.5-4.2-3.9-2.9-4.9-2.8-5.7-2.5-27.1-9.8-21.3-10-7.2-2.4-5.7-0.9-8.5 0.2-8.5 1.6-25.7 7.5-24.2 6.2-11.4 4.1-7.1 3.7-7.6 5.1-34.1 28.5-4.3 4.3-3.9 4.9-2.7 5-1.9 5.7-1.3 7.2-1.9 19.9-3.4 27.1-0.2 8.5 0.5 7.1 4.2 22.8 1.2 10 0.3 22.8 0.5 5.7 1 4.2 1.6 4.3 4.4 7.1 4.9 5.5 15.9 15.9 17.8 22.8 7.6 6.6 4.2 2.5 5.7 2.4 22.8 6.7 22.8 9.2 9.9 2.5z"/><path fill="#31688e" d="M351.3 490.9l8.2 1.2 8.6-0.7 7.1-2 17.1-6.6 8.5-2.5 10-1.6 17.1-1.1 8.5-2.2 4.3-2.1 4.3-3.1 14-13.5 5.9-4.9 24.2-15 3.2-2.9 3.5-4.2 2.3-4.3 1.4-4.3 1.3-7.1 0.9-15.7 0.9-7.1 1.6-7.1 4.9-15.7 1.2-7.1 0-5.7-1.1-5.7-6.3-18.5-2.4-10-1.1-8.5-0.8-17.1-0.9-6.3-2.3-6.5-4.5-7.1-17.4-18.6-16.8-21.3-4.3-4.3-4.6-3.4-9.8-5.1-24.4-9.1-22.7-10.3-7.2-2.3-5.7-1-8.5 0.1-10 1.9-44.1 12.3-12.8 4.5-8.6 4.4-7.1 4.9-31.3 26.4-5.5 5.2-3.5 4.3-3.4 5.7-1.9 5.1-1.8 9.1-5.2 41.3-0.4 8.5 0.3 7.2 5.2 32.7 1.3 28.5 2.2 8.6 3.9 7.1 4.6 5.7 16.7 17.1 15.9 20.2 4.3 4.4 4.3 3.4 4.3 2.6 5.7 2.5 22.7 6.9 20 7.9 6 1.9z"/><path fill="#2f6c8e" d="M352.7 488.1l8.3 0.8 7.1-0.8 7.1-1.9 17.1-6.5 8.5-2.5 8.6-1.5 17.1-1.8 8.5-2.3 4.3-2.2 4.3-3 13.5-12.5 6.4-5.2 18.5-11.2 4.9-3.6 3.6-3.5 2.7-3.6 2.9-7.1 1.3-7.1 1.8-21.4 1.6-7.1 4.7-15.7 1.2-7.1 0-5.7-1-5.7-5.8-18.5-2.3-10-1-8.5-1.1-15.7-1-5.7-1.2-4.2-1.9-4.3-5-7.1-15.5-17.1-16-20.2-4.2-4.3-5.3-4-10.4-5.4-21.4-8.2-22.7-10-7.2-2.3-7.1-1.1-8.5 0.3-11.4 2.2-38.5 11-14.2 5.2-7.7 4-8 5.5-28.6 24.4-6.1 5.7-3.7 4.4-3.4 5.6-2.3 5.7-2.3 11.4-4.9 37-0.3 8.5 0.3 7.2 4.9 32.7 1.6 27.1 2.1 8.5 3.9 7.1 4.6 5.7 16.3 17.1 15.1 18.9 4.2 4.4 4.3 3.4 5.4 3.2 6 2.6 19.9 6.2 20 7.6 7.4 2.2z"/><path fill="#2d708e" d="M354.4 485.2l8 0.4 7.1-1 7.1-2 14.3-5.4 8.5-2.6 8.5-1.8 17.1-2.4 7.9-2.3 5-2.5 4.2-2.9 13.1-11.7 6.9-5.3 16.8-10.3 4.5-3.3 2.9-2.6 2.8-3.6 1.9-3.4 1.6-4.2 1.3-7.1 1.2-14.3 1-7.1 5.8-21.4 1.2-7.1 0-5.7-0.8-5.7-5.4-18.5-2.1-9.6-2.3-21.7-1.2-7.2-3.2-8.5-4.9-7.1-14.9-17.1-14.8-18.6-4.3-4.4-5.6-4.5-10-5.4-41.3-17.2-8.6-2.8-7.1-1.1-8.5 0.1-11.4 2.2-26.8 7.5-15.9 5.2-8.6 3.5-7.8 4.2-6.4 4.3-8.6 6.9-24 21.5-5.1 5.7-3.7 5.7-2.8 6.8-1.8 7.5-5.3 37-0.4 8.5 0.3 8.6 4.5 32.7 2 25.7 2.1 8.5 4.3 7.9 5.2 6.3 14.7 15.7 14.3 17.6 4.3 4.4 4.6 3.6 5.3 3.2 7.2 3 18.5 6 18.5 6.9 9.1 2.3z"/><path fill="#2b748e" d="M357.2 482.4l6.6-0.1 7.1-1.2 27.1-9.1 8.5-2 17.1-3 8.6-2.7 8.5-5.2 18.5-15.4 15.7-9.9 5.6-4.1 5.1-5.7 2.1-3.8 1.4-4 1.3-6.5 2.4-19.9 5.6-21.4 1.2-7.1 0.1-4.3-0.6-5.7-6.7-27-3.9-28.5-1.8-5.7-1.8-4.2-5.9-8.6-27-32.8-5.6-5.6-5.6-4.3-11.5-6.2-35.6-15-8.5-2.8-8.6-1.6-8.5 0.1-11.4 2-18.2 4.9-20.3 6.5-8.7 3.5-8.4 4.3-7.1 4.6-8.5 6.8-24.2 22.3-5.3 6.2-3.5 5.7-2.8 7.1-2.1 8.5-3.4 20-1.5 12.8-0.3 8.5 0.4 10 4 31.3 2.2 24.2 2.3 8.8 4.6 8.3 4.6 5.7 14.3 15.7 13.5 16.4 5 4.9 5 3.8 5.7 3.2 7.4 3 33.9 11.7 5.7 1.6 6.2 1z"/><path fill="#2a788e" d="M350.1 478.1l9.4 1.2 10-1.1 7.1-2 21.4-7.2 22.8-4.9 7.1-2.1 5.4-2.4 4.6-2.9 18.5-14.9 18.5-12.4 4.3-3.8 2.5-3.1 3.5-7.1 1.4-5.7 3.2-21.3 4.7-18.5 1.4-7.2 0.2-5.7-0.5-5.7-5.8-25.6-4.5-28.5-1.8-5.7-1.9-4.2-6.7-10-25.7-31.1-5.6-5.6-5.7-4.3-11.4-6.2-29.9-12.8-10-3.5-8.6-1.7-8.5-0.3-11.4 1.7-12.8 3.1-18.5 5.8-11.4 4.2-8.6 4-8.5 5-8.6 6.4-12.4 11.1-11.6 11.4-5.9 6.8-3.8 6-3.1 7.1-2.4 8.5-2.7 14.3-1.8 12.8-0.6 11.4 0.4 11.4 5.5 50.9 2.2 10.3 4.1 8.6 5.4 7.1 12.7 14.2 12.6 15 4.7 5 5.3 4.4 5.7 3.5 7.1 3.2 31.3 10.9 7.7 2.2z"/><path fill="#287c8e" d="M351.5 475.2l9.5 0.8 8.5-1.1 7.1-1.9 21.4-6.9 21.3-5.1 7.2-2.2 5.7-2.7 4.2-2.7 17.6-13.8 18-12.7 3.2-2.9 3.4-4.3 3.3-7.1 1.4-5.7 2.9-17.1 4.9-19.9 1.4-8.6 0.1-5.7-0.8-7.1-4.6-21.4-5-28.5-1.8-5.7-2.8-5.6-3.5-5.7-5.4-7.2-21.3-25.6-6.7-6.4-6.8-5-13.5-7.1-23.8-10.2-11.4-3.8-8.6-1.5-8.5 0-11.4 1.7-12.8 3.1-15.7 5-11 4.3-9 4.2-8.5 5.2-8.5 6.4-10 8.9-10.8 10.9-6.1 7.1-4.7 7.1-3.3 7.1-2.7 8.6-2.8 12.8-1.8 12.8-0.6 11.4 0.5 14.2 4.7 44.2 1.2 7.1 1.5 5.7 2.1 5 2.9 5 5.5 7.1 22.9 26.7 5.7 5.8 5.7 4.5 5.7 3.3 8.6 3.6 25.6 8.9 10.5 2.7z"/><path fill="#26818e" d="M354.2 472.4l8.2 0.1 9.9-1.6 24.3-7.4 21.3-5.5 7.1-2.3 5.7-2.8 5.7-3.6 31.6-23.9 4-3.9 2.6-3.2 3.6-7.1 9.4-41.3 1.4-8.6 0.1-7.1-0.9-7.1-7.1-38.5-1.9-8.5-2.6-7.2-2.9-5.6-9.9-14.3-10.3-12.5-9.1-10.3-6.5-6-7.5-5.4-13.2-7.1-19.2-8.3-11.4-3.8-10-1.8-8.5-0.1-11.4 1.5-11.4 2.7-14.3 4.4-11.3 4.5-10 4.9-8.6 5.2-8.5 6.5-9.5 8.5-9.4 10-6.9 8.5-4.5 7.2-3.3 7.1-3.1 9.9-2.5 11.4-1.5 11.4-0.5 11.4 0.7 17.1 1.4 15.7 2.5 21.3 1.6 8.6 1.6 5.7 2.4 5.7 3.5 5.7 6.5 8.5 18.4 21.4 6.9 7 5.7 4.5 7.1 4.1 10.6 4.3 22.1 7.5 11.8 2.5z"/><path fill="#25848e" d="M348.1 468.1l7.2 1 5.7 0 8.5-1.1 8.5-2 42.8-12.2 9-4.2 9.5-6.5 24.7-19.1 5.2-5.3 3.3-4.7 2.4-5.4 1.7-6 7-29.9 1.6-8.5 0.5-8.6-0.7-8.5-7.7-41.3-2.1-7.2-3-7.1-4.1-7.1-4.9-7.1-9-11.4-10.2-11.4-7.4-7.1-7.4-5.7-12.3-7.1-14.6-6.7-12.9-4.7-9.9-2.2-8.6-0.5-9.9 0.8-11.4 2.2-11.4 3.1-11.4 4.1-11.4 5.2-10 5.7-8.1 5.8-8.3 7.1-8.5 8.5-7.2 8.6-6 8.5-3.8 7.2-3.3 8.5-2.7 10-2.1 11.4-0.8 11.4 0 12.8 0.7 15.6 1.7 17.1 1.9 12.8 1.8 8.6 2.5 7.1 3.7 7.1 7.1 10 14.3 16.9 8.6 9 6.6 5.4 7.1 4.3 9.1 3.9 17 5.9 11.4 3z"/><path fill="#23888e" d="M351.3 465.3l9.7 0.2 12.8-1.9 41.3-11.3 7.3-2.7 6.9-3.5 14.9-10.7 17.5-14.3 4.6-5.1 3.1-4.8 2.5-5.7 2.5-8.6 5.5-22.8 2-11.4 0.3-8.5-0.9-10-3.8-22.8-3.1-14.2-2.8-8.6-3.2-7.1-4.1-7.1-5.9-8.5-9.2-11.2-9.7-10.2-8-7.1-7.9-5.7-11.4-6.4-12.8-5.8-11.4-3.8-10-1.8-8.5-0.4-10 0.9-9.9 1.8-11.4 3.2-11.4 4.2-10 4.7-10 5.8-8.5 6.2-8.1 7-8 8.6-6.9 8.5-5.6 8.6-4.2 8.5-3.2 8.6-2.5 9.9-1.6 10-0.7 11.4 0.2 17.1 0.7 14.2 1.6 14.3 2 11.4 2.4 8.5 2.9 7.1 4.1 7.2 7.3 9.9 11 13 8.6 8.9 7.1 5.8 8.6 4.9 9.9 4.1 15.7 5 11.7 2.5z"/><path fill="#228d8d" d="M345.6 461l8.2 0.9 7.2-0.1 12.8-1.7 11.4-2.5 21.3-5.8 11-3.6 9-4.2 8.5-5.5 11.4-8.8 10-8.5 4.3-4.4 4.2-5.6 2.9-5.7 3-8.6 4.9-18.5 2.3-11.4 0.8-10-0.3-9.9-2.2-15.7-3-15.7-2.7-9.9-3.2-8.6-4.3-8.5-5.4-8.6-7-9.1-10-10.8-9.1-8.6-9.2-7.1-10.2-6.1-11-5.3-10.3-3.6-10-2.3-8.6-0.7-9.9 0.4-10 1.5-10 2.4-10.9 3.8-10.4 4.6-10 5.6-8.5 5.9-8.1 6.6-7 7.2-7.1 8.5-5.9 8.6-4.7 8.5-3.5 8.5-2.6 8.6-2 10-1.1 11.4-0.3 12.8 0.4 15.6 1.2 14.3 1.8 11.4 2.5 9.9 3.2 8.6 3.8 7.1 6.7 10 8.4 10.2 10 10.6 7.4 6.2 6.8 4.4 9.2 4.2 12.2 4.2 11.7 2.9z"/><path fill="#21918c" d="M350.1 458.1l9.4 0.1 14.3-1.7 12.8-2.4 14.2-3.7 11.4-3.5 8.6-3.5 7.1-3.9 8.1-5.6 9-7.1 8-7.1 5.2-5.7 3.9-5.7 3.5-7.1 3.6-10.8 3.5-13.4 2.1-11.4 0.7-10-0.5-11.4-1.9-14.2-2.6-12.8-2.9-10-3.8-10-4.5-8.5-5.5-8.6-7.4-9.3-10-10.2-9.8-9-8.7-6.4-8.5-5.2-10-4.6-10-3.4-9.9-2-8.6-0.5-9.9 0.5-10 1.4-10 2.6-10 3.6-9.9 4.7-10 5.9-8.5 6.1-7.2 6.2-6.4 6.8-6.8 8.6-5.6 8.5-4.5 8.5-3.4 8.6-2.5 8.5-1.8 10-1 11.4-0.3 15.7 0.6 14.2 1.3 12.8 1.9 10 2.4 8.5 3.5 8.6 4.7 8.5 6.9 10 8.5 10 8.2 8.1 8.6 6.7 8.5 4.7 10 4 11.4 3.3 10.5 1.6z"/><path fill="#1f948c" d="M342.9 453.9l8.1 0.8 8.5-0.2 17.1-1.8 11.4-2 12.8-3.3 10.8-3.5 9.2-4 7.8-4.5 9.3-6.7 8.8-7.6 6.8-7 4.3-5.8 3.8-7.1 3.3-8.5 3.5-11.5 2.2-9.9 1.3-10 0.2-11.4-0.9-11.4-2-12.8-2.7-11.4-3.3-10-4.5-9.9-4.8-8.6-6.2-8.5-7.6-8.6-11.8-11.4-10.4-8.4-8.5-5.6-8.6-4.3-8.5-3.2-8.6-2.1-8.5-1.1-10 0-9.9 0.9-8.6 1.7-8.5 2.5-10 4.1-10 5.3-8.5 5.5-8 6.2-7.5 7.1-6.1 7.1-6.1 8.6-5 8.5-3.9 8.5-3 8.6-2 8.5-1.4 10-0.8 12.8 0.1 15.7 0.8 12.8 1.4 10 2.4 9.9 2.9 8.6 4 8.5 6.1 10 6.6 8.5 8.1 8.8 8.5 7.5 7.2 4.8 8.5 4.3 10 3.5 10.4 2.5z"/><path fill="#1f998a" d="M346.9 451l9.8 0.1 18.5-1.6 10-1.3 8.5-1.8 10-2.9 9.9-3.7 8.6-4.1 7.1-4.4 7.9-5.9 7.9-7.1 5.1-5.7 4.7-6.6 4.1-7.7 3.4-8.5 3-10 2.1-9.9 1.1-10 0.2-11.4-0.8-11.4-1.7-10.2-2.7-11.2-3.3-9.9-4.5-10-4.9-8.5-6.2-8.6-7.7-8.5-11.9-11.4-10-8.2-7.2-4.7-8.5-4.4-8.5-3.1-8.6-1.9-8.5-1-10 0-10 1.1-8.5 1.8-8.6 2.7-9.9 4.4-8.6 4.8-8.5 5.7-7.1 5.8-7.2 7.1-6.8 8.4-5.7 8.5-4.7 8.6-3.5 8.5-2.6 8.6-1.8 8.5-1.3 11.4-0.5 14.2 0.4 14.3 1.1 11.4 1.9 9.9 2.6 8.6 3.4 8.5 4.5 8.6 5.9 8.9 7.1 8.6 7.2 7.1 8.5 6.7 8.6 5.1 8.5 3.6 10 2.8 8.7 1.3z"/><path fill="#1e9d89" d="M339.3 446.8l7.4 0.9 7.1 0.1 22.8-1.7 10-1.2 8.5-1.9 10-3 8.5-3.4 8.6-4.4 8.2-5.4 7-5.7 6.2-5.9 5.6-6.9 4.3-6.9 3.6-7.3 3.2-8.6 2.7-10 1.8-9.9 0.8-11.4-0.3-11.4-1.1-10-2.3-11.4-3-9.9-3.9-10-4.4-8.6-5.6-8.5-7-8.5-10.1-10.3-10.9-9.7-7.6-5.6-7.5-4.3-8.2-3.5-8.5-2.5-8.6-1.3-8.5-0.4-10 0.6-8.5 1.3-8.6 2.3-8.5 3.3-8.6 4.3-8.5 5.3-7.1 5.3-7.3 6.6-6.4 7.1-6.3 8.3-4.5 7.4-4.3 8.5-3.2 8.6-2.2 8.5-1.9 11.4-0.9 11.4-0.2 12.8 0.8 12.9 1.3 9.9 2 8.6 2.8 8.5 3.8 8.6 4.7 8.5 6 8.5 7.2 8.1 7.1 6.5 7.5 5.4 8.2 4.5 8.5 3.4 8.3 2.1z"/><path fill="#1fa188" d="M341.5 443.9l6.6 0.6 7.2-0.1 22.7-1.5 10-1.3 8.6-1.9 8.5-2.8 8.5-3.6 7.2-3.8 7.1-4.6 7.1-5.8 5.7-5.6 5.3-6.6 4.5-7.1 4.1-8.6 3.1-8.5 2.2-8.6 1.7-9.9 0.7-10-0.2-11.4-1.1-10-2.1-9.9-2.9-10-3.9-10-4.4-8.5-5.7-8.6-7-8.5-10-10.1-9.9-8.9-7.2-5.3-8.5-4.9-7.1-3-8.6-2.3-8.5-1.2-8.6-0.3-9.9 0.6-8.6 1.5-7.1 2-8.5 3.4-8.3 4.3-7.4 4.7-7.1 5.4-7.1 6.6-6.7 7.5-5.2 7.1-4.4 7.1-4.2 8.6-3.2 8.5-2.6 10-1.5 10-0.9 11.3-0.1 12.9 0.7 11.4 1.5 9.9 2 8.6 3 8.5 3.9 8.6 4.9 8.5 6.3 8.5 6.5 7 7.1 6.1 7.1 4.9 8.5 4.5 8.6 3 7.6 1.6z"/><path fill="#21a585" d="M344.9 441.1l8.9 0.1 21.4-1.2 14.2-1.7 8.6-2 7.1-2.5 8.5-3.8 7.2-4 7-4.9 5.8-4.9 5.7-6.1 4.6-6.1 4.2-7.1 4-8.5 2.9-8.6 2.1-8.5 1.4-10 0.6-10-0.4-9.9-1-8.6-2.1-9.9-3-10-3.5-8.6-4.4-8.5-5.6-8.5-6.9-8.4-10-10.2-9.7-8.5-7.4-5.4-7.1-4-7.1-3-8.6-2.3-8.5-1.1-8.6-0.2-8.5 0.6-8.6 1.5-8.4 2.5-7.2 3-7.8 4.1-7.9 5.3-7.5 6.1-6.7 6.7-6.4 7.6-4.9 7.1-4.4 7.7-3.5 7.9-2.9 8.6-1.9 8.5-1.5 10-0.7 11.4 0 11.4 0.9 11.4 1.7 9.9 2.3 8.6 3.3 8.5 4.2 8.6 5.4 8.5 5.5 7.1 5.7 5.8 7.1 5.9 7.2 4.6 8.5 4.1 8.5 2.6 8.2 1.3z"/><path fill="#23a983" d="M337.5 436.8l6.4 1 8.5 0.3 24.2-1.2 8.6-0.8 7.1-1.3 7.1-2 7.1-2.6 7-3.4 7.3-4.3 7.1-5.4 6.2-5.9 4.7-5.7 4.7-7.2 3.7-7.1 2.9-7.1 2.6-8.6 1.7-8.5 1.1-10 0.2-9.9-0.7-10-1.8-10-2.6-9.9-3.1-8.6-4.1-8.5-5.2-8.6-6.7-8.5-7.9-8.6-10-9.3-7.1-5.6-7.1-4.5-7.1-3.4-7.1-2.3-7.2-1.4-8.5-0.8-8.5 0.2-8.6 1-8.5 2-7.2 2.6-7.1 3.4-7.1 4.3-7.1 5.2-6.6 5.8-6.7 7.1-5.5 7.1-4.6 7.1-4.4 8.6-2.8 7.1-2.6 8.6-1.9 9.9-1.1 10-0.4 11.4 0.4 10 1.2 9.9 1.7 8.6 2.6 8.5 2.9 7.1 4.4 8.6 4.9 7.5 5.3 6.7 6.1 6 7.1 5.6 7.1 4.3 7.1 3.2 7.9 2.3z"/><path fill="#26ad81" d="M339.1 433.9l6.2 0.9 7.1 0.2 24.2-1 8.6-0.9 7.1-1.3 7.1-2 7.1-2.8 5.7-2.8 7.1-4.4 5.7-4.4 6-5.7 4.8-5.7 4.7-7.1 3.7-7.1 2.8-7.1 2.5-8.6 1.7-8.5 1.1-10 0-10-0.7-8.5-1.7-10-2.3-8.5-3.1-8.6-4-8.5-5.2-8.6-6-7.7-8.5-9.3-8.6-8-7.1-5.7-7.1-4.5-7.1-3.4-7.2-2.3-7.1-1.3-8.5-0.7-8.6 0.3-7.1 0.9-7.1 1.6-7.1 2.5-7.2 3.4-7.2 4.3-7 5.2-6.9 6.2-5.9 6.4-5 6.5-5 7.7-4 7.9-2.8 7.1-2.5 8.6-1.8 8.5-1.1 10-0.4 11.4 0.4 10 1.2 9.9 1.9 8.6 2.7 8.5 3 7.1 4.6 8.6 4.8 7.1 5.4 6.4 5.7 5.4 7.1 5.3 7.1 4 7.2 2.8 6.6 1.7z"/><path fill="#2ab07f" d="M340.6 431.1l6.1 0.7 7.1 0.2 22.8-0.9 8.6-0.9 12.8-2.9 7.1-2.8 5.7-2.8 7.1-4.6 5.6-4.5 5.7-5.7 4.6-5.7 3.6-5.7 3.7-7.1 2.8-7.2 2.5-8.5 1.6-8.5 0.9-8.6 0-10-0.7-8.5-1.7-10-2.4-8.5-3.1-8.6-3.4-7.1-5.2-8.5-5.4-7.1-7.8-8.6-9-8.5-6.5-5.3-7.1-4.6-7.2-3.3-7.1-2.2-7.1-1.3-7.1-0.5-8.6 0.2-7.1 0.9-7.1 1.7-7.1 2.6-7.2 3.4-6.5 4.1-7.4 5.7-6 5.6-5.7 6.3-5 6.6-4.5 7.1-3.5 7.1-2.9 7.2-2.5 8.5-1.7 8.6-1.1 9.9-0.3 10 0.5 10 1.1 8.5 1.8 8.5 2.4 7.8 3.3 7.9 3.9 7.3 4.5 7 5.4 6.6 5.7 5.4 5.7 4.4 7.1 4.2 7.2 2.9 8.1 2.1z"/><path fill="#31b57b" d="M341.9 428.2l6.2 0.7 7.2 0.1 28.4-1.4 7.2-1.3 5.7-1.6 7.1-2.7 5.7-2.9 5.7-3.7 5.7-4.5 5.4-5.4 4.5-5.8 3.7-5.6 3.6-7.2 2.8-7.1 2.4-8.5 1.6-8.6 0.7-8.5 0-10-0.9-8.5-1.6-8.6-2.4-8.5-3.2-8.6-3.5-7.1-5.4-8.5-5.6-7.1-7.8-8.5-7.8-7.2-6.5-5-5.7-3.6-7.1-3.2-7.1-2.2-7.1-1.2-7.2-0.5-8.5 0.3-7.1 1.1-7.1 1.9-5.7 2.2-6.1 3.1-6.8 4.2-7.1 5.6-5.7 5.4-5.7 6.4-5 6.8-4.3 7.2-3.4 7.1-2.7 7.1-2.4 8.6-1.5 8.5-0.8 8.5-0.2 10 0.5 8.6 1.2 8.5 1.9 8.5 2.9 8.6 3.1 7.1 4 7.1 4.9 7.2 4.9 5.7 5.5 4.9 5.7 4.1 7.1 3.9 7.1 2.7 6.6 1.4z"/><path fill="#37b878" d="M343.1 425.4l12.2 0.7 19.9-0.6 8.5-0.8 7.2-1.3 5.7-1.7 10.7-4.9 6.3-4.1 5.3-4.4 4.7-4.9 4.3-5.4 3.4-5.4 3.7-7.2 2.7-7 2.4-8.5 1.4-8.6 0.6-8.5-0.1-8.6-0.8-8.5-1.6-8.6-2.4-8.5-2.8-7.1-3.4-7.2-5.4-8.5-5.5-7.1-7.9-8.5-7.1-6.5-6.5-5-6.3-3.7-5.7-2.5-7.1-2.1-7.2-1.1-7.1-0.4-7.1 0.2-7.1 1.1-7.1 2-5.7 2.3-5.7 3-6.3 4.1-6.5 5.2-5.7 5.5-5.6 6.4-4.4 6-4.1 6.8-3.5 7.1-2.7 7.1-2.3 8.6-1.5 8.5-0.8 8.6 0 9.9 0.7 8.6 1.4 8.5 1.8 7.1 3 8.6 3.3 7.1 4.1 7.1 4.1 5.7 5 5.6 5.7 5 5.7 3.9 5.7 3 7.1 2.5 6.4 1.4z"/><path fill="#3dbc74" d="M344.1 422.5l12.6 0.7 18.5-0.5 8.5-0.8 11.4-2.7 5.7-2.3 5.4-2.9 6-4.1 4.3-3.7 4.8-5 4.3-5.7 3.5-5.7 3.4-7.1 2.5-7.2 1.8-7.1 1.2-7.1 0.7-8.5-0.1-8.6-0.9-8.5-1.6-8.6-2.4-8.5-2.8-7.1-3.6-7.2-4.5-7.1-5.6-7.1-6.5-7.1-7.8-7.1-6.3-4.8-5.7-3.3-5.7-2.5-7.2-2-7.1-1.1-7.1-0.4-7.1 0.4-5.7 1-7.1 2.1-5.7 2.4-5.7 3.2-5.7 3.8-5.7 4.7-5.7 5.5-5.7 6.6-4.3 6-4 6.8-3.1 6.8-2.7 7.5-1.9 7.1-1.4 8.5-0.7 8.6 0 8.5 0.8 8.6 1.5 8.5 1.9 7.1 2.6 7.2 3.3 7.1 3.7 6.3 4.3 5.9 4.3 4.9 5.7 5 5.6 3.9 5.7 3 6.5 2.3 6.6 1.4z"/><path fill="#46c06f" d="M345 419.7l13.1 0.7 15.7-0.4 8.5-0.8 11.4-2.7 10-4.5 5.4-3.7 5-4.3 4-4.2 4.4-5.7 3.5-5.7 3.3-7.2 2.5-7.1 1.8-7.1 1.1-7.1 0.6-8.6-0.2-7.1-0.8-8.5-1.6-8.6-2.1-7.1-2.7-7.1-3.5-7.1-4.5-7.2-5.5-7.1-6.6-7.1-7-6.3-5.7-4.2-5.7-3.3-5.7-2.4-7.1-2-5.7-0.9-7.1-0.4-7.1 0.4-5.7 1-5.7 1.6-5.7 2.4-5.7 3.1-5.7 3.9-5.7 4.6-5.7 5.6-5.7 6.7-4 5.9-3.3 5.7-3.3 7.1-2.6 7.1-1.8 7.1-1.2 7.1-0.7 8.6 0 8.5 0.7 7.2 1.5 8.5 1.9 7.1 2.6 7.1 3.3 7.2 4.1 6.7 4.2 5.7 4.3 4.7 5 4.2 5 3.4 5.7 3 5.7 2.1 6.8 1.5z"/><path fill="#4ec36b" d="M346.1 416.8l13.4 0.7 12.8-0.3 8.6-0.7 11.4-2.6 10-4.7 5.3-3.7 4.6-4.2 4.3-4.8 3.8-5.3 3.3-5.7 2.9-6.4 2.1-6.4 1.8-7.1 1-7.1 0.4-8.6-0.2-7.1-1-8.6-1.4-7.1-2-7.1-2.9-7.1-3.5-7-4.3-6.6-5-6.4-6.4-6.8-5.7-5.1-5.7-4.2-5.7-3.3-5.7-2.4-7.1-1.9-5.7-0.9-7.1-0.3-5.7 0.4-5.7 1-5.7 1.8-5.7 2.5-5.7 3.2-5.7 4.1-5.7 4.8-5.5 5.7-4.5 5.5-3.9 5.9-3.2 5.7-3.2 7.1-2.4 7.2-1.6 7.1-1.1 7.1-0.4 7.1 0.2 7.4 0.9 8.3 1.4 7.1 2 7.1 5.6 12.9 3.4 5.6 4.2 5.7 3.9 4.3 5.6 4.9 4.3 2.9 5.7 2.9 5.7 2.1 6.5 1.4z"/><path fill="#56c667" d="M347.4 414l6.4 0.6 10 0 17.1-1 10-2.5 5.7-2.4 4.2-2.4 5-3.7 4.6-4.3 3.6-4.2 3.9-5.7 3.2-5.7 2.4-5.7 3.6-12.8 1-7.2 0.3-7.1-0.2-7.1-1-8.6-1.4-7.1-2.1-7.1-2.9-7.1-3-5.7-4.2-6.4-5-6.4-6.3-6.6-5.6-4.8-5.8-4.1-5.7-3-5.7-2.2-5.7-1.4-11.4-1.1-5.7 0.4-5.7 1.1-5.7 1.8-5.7 2.7-5.7 3.4-5.7 4.2-5.7 5.1-4.3 4.6-4.4 5.6-3.7 5.7-3.3 6.1-2.8 6.7-3.4 12.8-1 7.1-0.3 7.1 0.3 7.2 0.9 7.1 3.5 13.4 2.6 6.5 3.1 6.2 3.2 5.2 4.4 5.7 4.1 4.3 5.2 4.3 4.4 2.9 5.7 2.7 5.7 1.9 5 1z"/><path fill="#60ca60" d="M349.3 411.2l15.9 0.5 14.3-1 9.9-2.5 5.7-2.5 4.3-2.5 4.5-3.4 4.3-4.3 4-4.9 3.3-5.1 5.3-11.4 1.8-5.7 1.4-7.1 0.8-7.1 0.1-7.1-0.5-8.6-1.1-7.1-3.7-12.8-5.6-11.4-3.8-5.7-5.1-6.2-5.7-5.7-5.7-4.7-5.7-3.7-5.7-2.8-5.7-1.9-5.7-1.2-5.7-0.6-5.7 0-9.9 1.8-5.7 2.2-5.7 2.9-10 7.1-4.6 4.2-5.1 5.7-7.4 11-5.2 11.8-3.1 12.8-0.8 12.9 0.5 7.1 1.1 7.1 3.8 12.8 5.6 11.4 3.8 5.7 3.5 4.3 4.4 4.3 4.9 3.8 5.6 3.3 4.4 1.9 9.7 2.4z"/><path fill="#69cd5b" d="M353.2 408.3l16.3 0.1 11.4-1.3 5.7-1.5 4.3-1.6 8.5-5.2 7.7-7.6 3.7-5 3-5 4.7-11.3 1.4-5.7 1.2-7.2 0.4-7.1-0.1-7.1-0.8-7.1-1.3-7.1-3.8-11.4-2.7-5.7-3.5-5.7-4.3-5.7-5.3-5.7-4.8-4.3-5.5-4-4.2-2.5-5.7-2.5-5.7-1.6-5.7-1-5.7-0.3-5.7 0.3-10 2.6-10 5.1-9.9 7.8-8.6 9.7-6.4 10.6-4.4 11.4-2.3 11.4-0.3 12.8 2 12.8 4.3 12.6 5.7 10.3 7.1 8.8 4.3 3.9 4.3 3.1 4.6 2.6 5.3 2.2 5.7 1.5 5.1 0.6z"/><path fill="#73d056" d="M347.8 404l11.7 1.1 15.7-0.6 10-2.2 8.3-4 4.5-3.2 4.1-3.9 6.5-8.5 5-10 3.3-11.4 1.3-12.8-0.9-12.8-1.4-7.1-1.7-5.7-4.8-10.8-3.1-4.9-4.4-5.7-4-4.3-5.6-4.8-4.3-3-5.7-3.1-10-3.3-9.9-1.1-5.7 0.4-4.3 0.8-4.4 1.3-5.6 2.4-8.5 5.3-8.8 8-7.6 9.9-5.2 10-3.5 11.4-1.3 11.4 0.6 11.4 2.6 11.4 4.7 11.4 6.4 9.9 7.8 8 8.6 5.7 4.6 2 5 1.4z"/><path fill="#7fd34e" d="M355.8 401.2l13.7-0.1 10-1.3 8.5-3 7.1-4.6 7.2-7.2 6-9.5 2.5-5.6 1.8-5.7 1.9-11.4 0-12.9-2-11.3-3.5-10-5.7-10-3.9-4.9-4.3-4.4-8.5-6.6-4.9-2.6-5.1-2-10-2.1-9.9 0.1-8.6 2.1-5.7 2.5-4.2 2.4-8.6 6.7-7.1 8.1-5.7 9.3-4 9.9-2.3 11.4 0 11.4 2 11.4 4.3 11.4 5.7 9.5 7.1 7.9 4.3 3.5 4.3 2.7 8.5 3.5 9.1 1.4z"/><path fill="#89d548" d="M354.5 396.9l13.6 0 9.9-1.2 7.2-2.4 7.1-4.3 7.1-7 5.7-8.8 4.1-10.5 1.9-9.9 0.2-11.4-1.8-11.4-3.5-10-5.2-9-7.1-8.3-8.5-6.5-8.6-4.1-10-2.1-8.5-0.1-8.5 1.7-8.6 3.8-8.5 6.1-7.2 7.6-6 9.5-3.9 10-2 9.9-0.1 10 2 11.4 3.8 10 4.8 8.3 7.1 8.1 7.2 5.4 8.4 3.8 7.9 1.4z"/><path fill="#93d741" d="M347.8 391.2l8.9 1.4 12.8-0.4 8.5-1.4 7.2-2.7 7.1-4.9 5.7-6.2 5.1-8.6 3-8.5 1.7-10-0.2-11.4-1.9-9.9-4.1-10-5-7.7-7.2-7.3-8.5-5.5-8.6-3.2-8.5-1.2-8.5 0.4-8.6 2.4-7.1 3.8-7.1 5.6-7.1 8.4-4.8 8.6-2.9 8.5-1.4 8.5 0.2 10 2.1 10 3.5 8.5 4.7 7.6 6 6.7 6.8 5 8.2 3.5z"/><path fill="#a0da39" d="M349.7 386.9l8.4 1.1 11.4-0.5 8.5-1.7 7.1-3.1 5.8-4.3 5.7-6.7 4.1-7.5 2.3-7.2 1.4-8.5-0.1-10-2.1-9.9-3.7-8.6-4.8-7.1-5.7-5.8-7.1-4.8-8.6-3.3-8.5-1.4-8.5 0.4-7.2 2-7.1 3.5-7.1 5.6-5.7 6.6-4.3 7.2-3.1 8.5-1.5 8.5 0.2 8.6 1.6 8.5 3.4 8.6 5.1 8 5.7 5.9 7.1 4.8 7.3 2.6z"/><path fill="#aadc32" d="M352.4 382.7l8.6 0.5 9.9-0.8 7.1-1.9 5.7-2.7 5.7-4.4 5.2-6.4 3.6-7.1 2-7.1 0.9-8.6-0.7-8.5-2.4-8.6-3.5-7.1-5.1-6.6-5.7-4.9-7.1-4-7.1-2.2-8.5-0.8-7.2 0.7-7.1 2.3-5.7 3.2-6.2 5.2-5.2 6.4-4.1 7.8-2.2 7.1-0.9 7.2 0.5 8.5 2.2 8.6 3.5 7.1 4.1 5.7 6.1 5.7 6.5 3.6 7.1 2.1z"/><path fill="#b5de2b" d="M357.2 378.4l8-0.2 8.6-1.5 5.7-2.1 5.7-3.6 5.2-5.4 3.3-5.5 2.3-5.9 1.3-7.1 0-8.6-1.5-7.1-2.9-7.1-3.5-5.3-4.3-4.7-5.9-4.3-6.9-2.9-7.1-1.5-7.1-0.1-7.1 1.4-5.7 2.4-5.7 3.9-5.3 5.4-3.8 5.7-3.1 7.1-1.5 7.1-0.1 7.1 1.2 7.2 2.7 7.1 4.2 6.7 4.3 4.4 5.7 3.9 5.7 2.3 7.6 1.2z"/><path fill="#c2df23" d="M350.9 372.7l5.8 0.9 7.1 0 7.1-1.1 5.7-1.9 4.3-2.3 4.9-4.1 3.6-4.9 2.4-5.1 1.5-5.7 0.5-7.1-0.9-7.2-2-5.9-3.1-5.4-4.1-4.8-5.7-4.3-5.7-2.6-5.7-1.4-7.1-0.4-5.7 0.7-5.7 2-5.7 3.4-4.8 4.5-4 5.7-2.6 5.7-1.4 5.7-0.4 7.1 1.1 7.1 2.2 5.7 3.5 5.7 4 4.3 5.3 3.6 5.6 2.1z"/><path fill="#cde11d" d="M352.9 368.4l5.2 0.7 5.7-0.1 5.7-0.9 5.7-1.9 4.3-2.5 4.1-3.8 3-4.2 1.9-4.4 1.3-5.7 0.1-5.7-0.9-5.7-2.2-5.6-3.1-4.8-3.6-3.8-4.1-2.8-5.1-2.3-5.7-1.3-5.7-0.3-5.7 0.9-4.3 1.5-4.8 2.9-4.7 4.3-3.3 4.6-2.4 5.3-1.3 5.7-0.1 5.7 1 5.7 2.3 5.7 3.4 4.9 3.9 3.7 4.6 2.7 4.8 1.5z"/><path fill="#d8e219" d="M355 364.2l4.5 0.4 5.7-0.3 4.3-0.9 4.3-1.7 4.2-2.7 2.9-2.9 2.3-3.3 1.8-4.3 0.8-4.3 0-5.7-0.9-4.3-1.8-4.2-3-4.3-2.9-2.8-3.4-2.4-4.3-1.9-4.3-1-5.7-0.2-5.7 1-3.9 1.6-4.3 2.9-2.9 2.8-2.9 4.3-1.9 4.2-0.9 4.3-0.1 5.7 0.8 4.3 1.9 4.5 2.8 4 3 2.9 4.2 2.5 5.4 1.8z"/><path fill="#e5e419" d="M358.1 359.9l4.3 0.1 4.2-0.7 4.3-1.5 2.9-1.6 2.4-2 2.4-2.9 1.5-2.8 1.2-4.3 0.3-2.8-0.5-4.3-1.4-4.3-1.7-2.8-2.4-2.9-3.3-2.4-3.7-1.8-3.4-0.9-4.2-0.4-4.3 0.5-4.3 1.5-2.8 1.6-2.9 2.5-2.8 3.7-1.5 3-1.1 4.1-0.1 4.3 0.4 2.8 1.6 4.3 1.8 2.9 2.7 2.8 3.3 2.2 2.8 1.2 4.3 0.9z"/><path fill="#efe51c" d="M356.1 354.2l6.3 0.7 5.7-1.4 4.2-2.9 2.9-4 1.3-5.2-1-5.7-3.2-4.8-4.2-3-5.7-1.5-5.8 0.7-2.8 1.2-2.8 2.1-2.1 2.4-1.6 2.9-0.8 2.8-0.3 2.9 0.4 2.8 1 2.9 3.4 4.3 5.1 2.8z"/><path fill="#f8e621" d="M356.9 347.1l2.6 0.9 2.9 0.2 3.3-1.1 2.4-2.2 1.1-2.1 0.3-2.9-0.8-2.8-2.1-2.4-2.8-1.5-2.8-0.3-2.9 0.7-2.9 2.1-1.6 2.8-0.3 2.9 0.9 2.8 2.7 2.9z"/></g><path fill="none" stroke="#000" stroke-width="2.08" stroke-dasharray="7.7 3.33" d="M299.7 138l-1.4-0.6-0.9-1.1-0.6-1.4-0.1-1.5 0.6-4.2-0.4-0.5-1.5-0.1-1.6-0.8-0.4-1.5 0.1-1.4 0.5-1 0.8-0.4 3.5-0.6 2.8-1.8 1.5-0.5 1.4 0.1 2.8 0.8 1.5 0.6 1.4 1.2 2.8 3.2 3.9 2.7 1 1.4 0.8 3.3 0.2 2.4-1.6 1.3-1.4 0-1.4-0.3-5.7-2.4-1.5 0-4.2 2.8-1.5 0.3-1.4 0M157.3 168.8l-1.4-1.4-0.9-2.6 0.1-1.4 1-4.3-0.5-5.7 0.3-1.4 0.9-1.5 1.9-0.8 1.5 0 1.4 0.4 3 1.9 1.7 1.4 0.6 1.4-2.5 3.5-1.1 2.2-1.2 5.7-0.5 0.9-1.4 1.2-1.5 0.5-1.4 0M205.7 167.7l0.7-1.5 0.7-0.8 1.5 0 0.6 0.8 0.2 1.4-0.8 1-1.5 0.3-1.4-1.2M175.8 161l-1.4-1.2-2.9-3.4-2.3-1.6-0.4-1.4 1.4-1.4 1.3-0.6 1.5 0 4.2 0.4 2.9 0 1.4 0.5 0.8 1.1 0.7 2.8 0 2.9-0.4 1.4-1.1 1.1-1.4 0.2-2.9-0.3-1.4-0.5M144.5 151.1l-0.6-0.6 1.4-1.4 3.5-1.9 1.4-0.6 1.6 1.1-0.1 1.4-1.2 1.4-1.7 0.9-1.5 0.3-1.4 0-1.4-0.6M198.6 109.2l0 4.4 0.9 4.2 0.5 1.2 1.5-1.4 1.2-4.1 0.1-4.3M350.2 109.2l0.8 1.8 2.8 2 1.5 1.5 2.8 5 1.4 1.6 1.5 1 3.3 1.4 0.6 1.4-1.6 2.9-0.3 1.4 0.5 5.7-0.9 1.4-3.1 1.6-4.6 1.2-2.3 1.5-1.6 1.6-4.3 3.2-4.3 4.1-3.1 2.5-1.1 1.4-1.6 2.8-1.3 1.5-2.8 1.4-7.2 2.9-2.8 0.9-5.7 0.1-2.8-0.7-2.9-1.4-1.4-0.5-1.4 0-4.3 0.9-7.1 1.1-4.3 1.3-2.9 0.5-4.2 1.5-4.3 2.1-1.4 0.2-1.4-0.5-3.9-2.7-1.8-0.9-1.5-0.3-4.2 0-1.5-0.7-0.9-1-0.6-1.4-0.1-1.4 1.1-4.3 0.1-1.4-0.3-1.4-1-1.5-1.1-0.7-1.4-0.4-2.9 0.2-4.3 1.2-2.8 1.4-2.9 1.9-2.8 1.2-5.7 0.5-2.8 0.7-1.5 0.5-2.8 1.8-1.4 0.5-1.1-1.6-0.6-2.9-1.2-1.4-1.4-0.7-4.3-0.9-1.4-0.6-2.9-2.4-1.4-0.8-1.4-0.3-1.4 0.1-4.3 1.2-1.4-0.1-1.5-0.6-1.4-1-1.4-1.4-1.6-2.5-1.2-2.8-0.2-1.5 0.3-2.8-0.1-1.7-0.4-1.2-2.7-4.2-0.5-1.4-0.2-1.5 0.1-1.4 0.8-3.4 1.1-2.3-1.1-0.4-1.4 0.2-2.9-0.4-5.7-2.3-4.2-1.3-1.5 0-1.4 0.3-1.7 1.1-1.9 1.4-0.5 1.4 0.8 2.9 1.8 4.2 0.4 1.5-0.2 1.4-1.4 1.4-2.5 1.4-1.1 1.4-0.1 1.5-0.7 1.4-1.4-0.8-0.7-2.1-1-1.4-1.2-0.4-2.8-0.1-4.3 0.7-2.8-0.4-2.3-1.2-2-2.5-1.4-1.2-7.2-2.5-5.7-1.1M198.2 594.9l0.5-1.5-0.5-1.4-3.9-0.8-4.2-0.4-1.5-0.4-1.5-1.2-0.6-1.5 0.1-1.4 0.6-1 1.4-0.9 2.9-0.4 1.4-0.5 5.8-2.9 2.8-1.7 1.4-0.2 1.8 0.5 2.1 1.4 1.9 2.9 3.6 1.4 3.4 1.1 1.4 0.1 2.9-0.8 1.4 0.1 1.5 0.9 2.3 2.9 6.2 4.2 0.9 1.5M340.4 594.9l1.1-2.9 1.2-1.4 3.1-2.9 0.8-1.4 0.7-4.3 0.8-1.4 2.5-2.8 0.4-1.5-0.5-2.8-2.4-4.1-0.3-1.6 0.3-1.4 1.1-1.4 2.7-1.5 4.8-1.8 4.5-1 2.1-2.9 3-1.4 4.6-1.4 2.9-0.5 1.4 0.1 4.3 1 7.1-0.8 0.7 0.2 0.9 1.4-0.3 1.4-1.3 2.1-1.4 1.2-4.3 2-4.3 2.7-2.8 0.9-1.5 0.1-1.4-0.2-1.4-0.7-4.3-2.7-1.4-0.1-0.8 1.9-1 4.2-1.6 4.3 0 1.4 0.3 1.4 1.5 2.9-0.3 1.4-2.2 4.3-1.1 1.4-3.6 2.9-0.7 1.4 0.2 1.4 1.1 2.9M367.7 594.9l-0.3-4.3 1.2-5.7-0.3-1.4-1.7-2.9-0.6-1.4 1.1-1.4 1-0.7 1.4-0.7 1.4-0.2 2.9 0.4 3.2 1.2 1 0.9 1.6 3.3 1.1 1.5 1.6 1.4 1.4 1.9 0.7 2.4-0.2 1.4-1.6 4.3M490 594.9l4.9-5.7 0.7-1.5 0-1.4-1-1.4-2.6-1.3-5.7-0.8-5.7-1.9-2-1.7-1.1-1.4-0.7-1.5-0.2-1.4 0.1-1.4 2.7-11.4-1-2.8-3.2-5.7-0.6-1.5-0.2-2.8 0.6-5.7 1-2.9 1.7-2.9 2.9-2.9 2.8-2.1 1.5-0.5 1.4 0.2 3.1 1.1 4 1.9 1.4 0.2 1.4-0.4 1.5-1.4 1.4-2.1 1.4-1.4 4.3-1.1 1.4-0.8 2.9-3.4 1.4-0.6 1.4 1.1 0.4 0.9 0.4 4.3 2.1 8.7 1.4 1.7 1.4 0.5 4.3-0.5 1.4 0.2 1.4 0.8 1 1.4 0.8 4.3 0.6 1.4 1.9 2.7 1.4 1.3 1.4 0.5 1.5 0.2 5.7 0 7.1-2.5 2.8-0.6 1.5 0.6 1.4 1.8 1.4 4.1 1.4 1.7 1.5 0.1 1.4-0.4 4.3-2 1.4 0.1 1.4 1 0.8 1.4 1.1 2.8 0.9 0.7 2.9 0.6 1.4 0.5 1.6 1.1 1.3 1.4 1.3 2.8 0.6 5.7 0.8 1.4 1.5 1.1 4.3 1.2 4.3 2.3 0.7-4.6-0.1-1.4-0.7-2.8-0.1-1.4 1-1.5 2-0.4 5.7 0.4 1.5 0.5 1.4 0.8 3 3 2.3 2.8 1.8 2.7 0.5 0.2 0.9 0.3 1.4-0.6 4.3-2.6 1.4-0.5 1 0.5 0.4 1.5 0.6 4.2-0.3 5.7 0.7 7.2M591.7 587.7l1.4 1.1 1.4-0.6 0.3-0.5 0.7-1.4 0.1-1.4-1.1-1.4-2.8-0.5-1.7 0.5 1.7 4.2M217.1 526.5l-1.5-1.4-0.6-1.4-0.2-1.5 0.4-1.4 1-1.4 0.9-0.7 4.3-1.5 1.4 0.3 1.4 0.8 1.5 1.3 0.8 1.2 0.6 1.4 0.1 1.5-0.5 1.4-1.1 1.4-1.4 0.8-1.4 0.5-1.4 0.1-1.4-0.2-2.9-1.2M141.6 526.1l0.8 0.4 1 1.4-0.3 0.5-1.5 1M141.6 195.7l22.8-0.2 31.4 0.2 4.3 0.4 5.1 1.4 0.8 1.5-1 2.8-0.9 1.4-1.2 1.1-1.4 0.6-4.3 0.5-2.7 0.7-1.3 1.4-0.2 2.8-0.4 1.5-3.1 4.2-1.1 4.3-1.2 1.6-1.4 0.4-1.4-0.2-4.3-2.1-1.4-0.2-1.5 0.4-1.4 0.8-2.8 2.6-1.5 0.7-4.2 0.9-1.5 0.5-4.2 3.3-1.4 0.6-1.5 0.1-1.4-0.6-1.6-1.7-1.5-2.8-0.2-1.4 0.2-2.9-1.2-1.2-1.4 0-2.8 0.8-1.5-0.5-1.4-5-1.4-1.1-2.9-0.2M562.8 190.4l0.4 0.2 1.4-0.1 4.3-4.5 1.8-1.3 1-1.5-1.4-0.7-2.9 1.4-6.5 0.8-0.6 0.3-1.3 1.1 0.8 1.5 3 2.8M557.5 144.9l-0.5-1.5 0.5-0.5 1.4 0.1 0.5 0.4 0.5 1.4-1 0.9-1.4-0.8M553.2 126.4l-1.4-1.5-0.3-1.4 0.5-1.4 1.2-1.6 2.9-1.8 1.4-0.7 1.4-0.3 1.4 0.3 1.8 1.2 0.9 1.4 0.2 1.5-0.9 1.4-6.2 2.9-1.5 0.4-1.4-0.4M435 120.2l-1.3-1 0.7-1.4 1.5-1.4 6.2-5 1.5-0.8 1.4 0.7 0.3 0.8-0.3 1.4-5.7 6.2-1.4 0.7-1.5 0.2-1.4-0.4M396.9 109.2l-0.4 1.5-2 2.8 0 1.4 0.6 1.2 1.5-0.2 1.4-0.7 1.4-0.1 1.4 0.5 2.9 1.7 1.4 0.5 1.4 0.1 1.4-0.4 1.5-0.8 2.1-1.8 2.1-2.5 1.5-0.9 1.4 0.3 2.8 1 1 0.7 1.9 3 1.4 1.5 1.4 0.2 2.9-0.1 3.6 1.1 0.8 1.4-0.6 4.3-0.4 1.4-1.3 2.9-0.4 1.4 0.8 1.4 0.3 0.2 1.5-0.6 1.1-1 1.7-0.9 1.4-0.3 1.5 0.3 1.4 1 3.8 4.2 0.9 1.4 1.5 4.3 5.2 10.5 1.4 1.8 2.4 1.9 0.6 1.4-1.6 0.9-1.4 1.2-2.9 3.9-1.4 1.5-1.4 0.6-4.3 0.6-1.4 0.5-1.4 0.7-5.7 4.2-2.9 1.2-2.8 0.7-1.4 0.1-1.6-0.4-2-1.4-5.6-5.7-3.7-6.4-1.7-2.2 0.4-1.4 1.3-1.3 0.1-1.5-4.3-2.4-3.5-3.3-2.7-1.5-0.5-1.4-0.1-4.3-1-2.8-2.2-3.6-0.7-0.7-0.7-0.5-1.4-0.2-1.5 0.3-1.4 0.8-2.5 2.5-0.8 1.4 0.5 1.5 1.6 1.3 6.9 4.3 1.4 1.4-1.1 1.5-0.2 1.4 0.4 2.8-0.5 1.8-1.4 1.3-1.4 0.2-1.5-0.4-2.8-1.8-4.3 0-2.8-0.3-4.3-1.3-1.4-0.3-1.2 0.8 0.1 1.5 2.5 3.4 0.3 0.8-0.1 1.5-1.2 1.4-5.6 4.3-3.4 1.2-1.7 0.2-2.6-0.1-7.1-2.4-4.6-0.4-1.1-0.3-1.4-0.9-2.8-2.6-1.5-0.5-1.4 0.7-4.3 4.6-2.8 2.1-4.3 1.8-10 3.6-5.6 1-5.7 0.3-7.2 2.2-2.8-0.3-2.9-1.3-1.4-0.3-1.4 0.1-4.3 2-1.4 0.4-4.3 0.1-1.4 0.3-5.7 3.2-2.8 0.9-2.9 0.6-2.8 0-2.9-0.6-3.4-1.4-2.3-1.3-1.4-0.3-4.4 0.2-4.5 1.4-5.4 1.2-2.8 0-4.3-0.6-1.4 0.1-2.7 0.7-8.7 3.3-1.4 1-2.9 3.1-1.4 1.2-2.8 0.6-2.3 0.8-3.4 0.5-2.9 0.4-7.1 0.1-7.1 1-4.3 0.3-39.9-0.1-11.4-0.5M513.5 109.2l0.5 2.9 0.5 1.4 0.3 0.6 1.4 1.5 1.4 0.1 2.9-1 1.4-0.3 1.4 0.1 0.9 0.4 0.5 0.6 1.3 3.7 1.6 1.4 1.4 0.7 2.8 0.8 5.7 0.2 2.9 0.4 1.9 0.8 2 1.4 1.1 1.4 0.2 1.5-0.6 4.2 0.4 1.4 1.1 1.5 4.5 4.2 1.1 1.5 0.5 1.4-0.5 4.3 0.2 7.1 0.9 3.7 1.4 1.8 1.5-0.2 1.4-0.8 1.4-1.3 1.3-1.8 0.7-1.4 0.9-4.8 1.1-0.9 1.7-0.3 2.8-0.2 2.9 0.3 5.7 2.7 4.3 0.5 1.8 1.3 1.2 1.4 0.8 1.4-0.2 1.4-0.8 0.4-2.8 0.3-1.1 0.8-0.4 4.5-0.4 1.2-1 1.2-1.4 0.5-1.4-0.5-1.1-2.7-1.8-1.3-1.4-0.1-1.4 0.5-1.2 0.9-0.3 1.5 1.3 1.4 3.3 1.4 0.6 1.4-1.5 2.9-0.5 1.4 0.1 1.4 1.2 2.9 1.2 1.4 1.5 0.5 2.8 0 1.4 0.3 1.5 1.1 1.4 2.4 0.8 2.8 0.1 1.4-0.6 4.3 0.9 4.3-0.1 1.4-1.1 1.4-2.9 1.6-1.4 1.2-0.9 1.5-0.7 5.7 0.2 6-0.8 4 0.2 1.4 0.9 1.4 3.3 2.9 1.2 1.4 0.5 1.4 0 1.4-0.4 1.5-1 1.4-3.9 2.8-1.4 1.5-2.9 4.3-2.8 5.2-2.5 3.3-0.6 1.4-0.1 1.4 0.7 4.3-0.1 1.4-0.3 0.5-2.8 1.5-1.1 0.9-0.7 1.4 0.3 1.4 0.9 1.4 2 1.7 1.4 0.4 1.4-0.1 2.9-0.7 1.4 0.6 1.4 1.4 0.7 1 0.4 1.4-0.1 1.5-0.8 2.8-0.2 1.4 0.1 1.5 1.9 4.2 0.3 1.5-0.9 1.4-4.2 1.4-2.9-0.8-2.8-1.8-1.9-1.7-0.9-1.4-0.5-1.4-0.5-5.7-0.5-1.4-1.4-2.6-3.4-4.6-1.5-4.2 0-1.5 1.3-1.4 0.7-1.4 0-1.4-0.4-1.5-1.3-2.8-1.1-1.2-2.8-1.2-1.5-1.1-2.5-3.6-1.6-1.4-3-2.2-2.8-1.3-0.9-0.8-1.1-1.4-1.3-4.3-0.7-1.4-3.2-4.6-1.4-1.5-1.4-1-4.3-2.2-1.4-1.5-2.1-3.5-5-6.1-1.4-2.4-2.9-9.5-1.4-2.6-2.9-1.9-2.8-1.2-4.3 0.1-4.3-1.4-7.1-1.8-1.4-0.6-1.4-1-3.1-2.9-1.2-0.7-4.3-1.1-1-1.1-1.9-5.7-0.2-1.4 0.2-1.4 0.7-1.4 3.2-2.9 0.5-0.8 0.2-0.6-0.4-1.4-2.7-1.8-6.9-2.5-0.9-1.4 3.1-1.4 9-1.5 5.7-2.5 2.8-0.9 8.6-0.1 3.3-0.7 0.9-1.5-0.4-2.8-1.2-4.3 0.6-4.3-0.5-4.2 0.1-1.5 0.6-1.4 1.1-1.4 2.6-1.7 2.8-0.5 2.9 0.3 1.2-0.9 1.4-5.7 0.1-1.5-1.3-0.8-4.3-0.9-1.4-0.7-5.9-7.5-0.6-1.5M546.8 109.2l-0.7 1-1.4 0.1-1-1.1M439.7 594.9l0.4-5.7 0.3-1.5 0.7-1.4 1-1.1 2.9-1.6 2.5-4.4 1.5-1.4 4.3-2.9 1.1-1.4 0.6-1.4 1-4.3-0.1-1.4-1.8-4.3-0.3-1.4 0.2-1.4 1.1-4.3-1.6-8.6 0-2.8 0.3-1.4 0.7-1.5 3.3-4.3 1.4-1.6 4.3-2.7 1.4-1.3 2.8-4.3 3.1-2.8 2.7-2 2.8-1.6 1.4-0.3 4.3-0.3 1.4-0.5 1.6-1 2.7-2.7 2.8-1.4 1.8-1.6 2.5-4.7 1.4-1.6 1.5-0.5 4.2 0.1 1.5-0.4 4.2-2.9 4.3-1.9 1.4-1 2.9-2.7 1.4-0.7 5.7-1.2 2.9-1.1 1.4 0.2 2.8 1.6 1.4 0.3 1.5 0 5.7-2 4.2-2.7 2.4-1.6 1.4-1.4 0.5-1.5-0.8-1.4-2-1.5-1.2-1.3-0.6-1.5-0.2-1.4 0.3-1.4 1.7-1.4 2.2 0 3.5 1.2 1.3 1.6 0.8 1.4 0.7 0.7 2.9 1.4 1.1 0.8 0.8 1.4 0.9 3.3 1.6 3.8 0.1 1.5-0.8 1.4-2.3 1.6-1.4 0.4-1.5 0-2.8-0.6-1.4 0.1-2.8 1.3-1.9 1.4-0.4 1.5 0.9 1.4 1.8 1.4 2.4 0.7 4.2-0.4 1.5 0.5 2.5 2.1 3.2 3.2 1.4 1 1.4 0.4 4.3 0.2 4.2-0.2 2.9 2.2 2.8-0.1 1.9 0.4 1 0.6 0.6 0.8 0.5 1.4 0.4 4.3 1 1.4 1.8 1.1 5.7 2.5 1.4-0.1 1.4-0.9 1.1-1.1 0.7-1.5-0.5-5.7 0.4-1.4 0.7-1.4 0.5-0.6 1.4-0.8 4.3-0.8 2.8 0.5 2.9 1.7 4.2 6.9 1.4 1.4 1.5 0.8 2.8 0.5 4.3 0 4.3 0.4M617 543.6l1.7 0.5 1.4 0 0.8-0.5 0.9-1.4-0.1-5.7 0.7-2.9 0.1-1.4-0.7-1.4-1.7-0.7-2.8 0.1-1.4 0.6-1.7 1.4-0.8 1.4-0.3 1.4 0.1 2.9 0.7 2.8 1 1.5 2.1 1.4M570.2 523.7l1.5 0.5 1.4-0.4 2.4-1.6 1.1-1.4-0.1-1.4-0.5-1.1-1.4-1.4-1.5 0.9-1.4 2-1.5 2.4 0 1.5M141.6 514.3l14.3-0.9 21.3 0.3 8.6-0.3 8.5 0.2 14.3-0.4 11.4-0.8 11.4 0.1 2.8-0.2 2-1.5-4.8-0.7-11.4 0.2-10-0.9-7.1-0.3-18.5 0.4-10-0.8-14.2 0.1-10-0.5-8.6 0M208.4 485.2l1.6 0 0.6-1.4 0.2-2.9-0.8-0.3-1.4 1.9-0.4 1.3 0.2 1.4M141.6 471.3l4.3 0.9 1.4 0.2 1.5-0.3 1.4-0.8 2.8-2.5 2.9-0.8 1.4-0.7 1.3-2 0.4-1.5-0.1-1.4-0.6-1.4-2.4-2.5-1-1.8-0.2-1.4 0.3-1.4 0.9-1.5 4.3-1.7 5.6-3.6 1.5-0.4 1.4 0.5 1.3 1 0.7 1.4-0.2 1.4-1.8 1.4-0.6 1.5 0.1 1.4 0.5 1 1.4 1.2 1.4 0 1-0.8 1.3-2.8 0.6-0.4 1.4-0.3 2.9 0.4 2.8 0.8 4.3 2 2.5 3.2 1.8 1.4 5.7 2.4 2.8 2.2 2 1.1 2.3 0.7 2.8 0.5 1.4 0 2.9-0.4 1.4 0.2 0.5 0.4 0.5 1.4-1.2 2.9-0.3 1.4 0 5.7 0.5 1 1.2-1 1.7-0.4 1.4 0.3 1.4 0.8 7.1 6.9 1.5 1.7 2.8 6.3 1.4 2.3 1.5 1 1.4 0.3 9.9 1.1 2.9 0.7 10 5.3 2.5 2.2 1.6 2.8-0.3 1.5-1.5 2.8-0.4 1.4 0.3 1.5 0.6 0.4 1.4 0.4 2.9-0.2 2.8 0.5 1.5 0.7 0.7 1 0.7 2 0.5 3.7-0.6 4.3 0.1 1.4 1.4 3.6 1.4 1.6 4.3 2.7 4.3 3.5 2.8 1.6 5.7 2.1 5.7 4.4 1.4 0.3 1.5-0.3 2.8-1.4 1.4-0.1 1.1 0.5-0.2 1.4-2.1 2.9 1.2 1.4 1.5 0.8 2.8 2.3 1.4 0.9 2.9 1.1 0.7 0.6 0.6 1.4 0 1.5-0.5 1.4-0.8 0.7-5.7 2-1.4 0.2-1.5-0.4-2.8-2.3-1.4-0.7-1.5-0.2-1.4 0.5-1.2 1.6-0.2 1.4 0.3 1.5 1.3 2.8 1.2 1.2 1.5 0.6 1.4 0.2 2.8-0.1 4.3-1 1.4-0.1 1.5 0.3 4.2 2.3 1.5 0 1.2-0.6 1.7-1.4 1.6-2.8 1.3-1.4 6.2-4.3 0.6-1.4-0.5-1.5-1.5-2.8-0.2-1.4 0.9-1 2.9-2.2 1.4-0.5 4.3 0.7 4.3-0.2 1.4-0.5 1.4-1 3.6-3.9 2.1-1.5 2.9-1.2 2.8-0.3 4.3 0.1 8.5-0.8 1.4-0.4 4.3-1.8 4.3-1.2 5.7-2.1 1.4 0 1.4 0.4 4.3 2.7 1.4 0.5 2.9 0 14.2-1.5 1.4 0.1 2.9 0.9 0.8 0.4 1.3 1.4 2.1 2.9 0.7 1.4 0.2 1.4-0.4 1.5-2.3 2.8-0.6 1.4-0.1 1.5 1.6 5.7 0.8 4.2 1 2.9-0.1 1.4-0.7 1.2-1.5 0.3-0.8-1.5-0.1-1.4-0.5-0.7-1.4-0.7-1.4 0.4-1 1 0.2 1.4 1.1 2.8-0.4 1.5-0.8 1.4-1.4 1.4-1.9 1.4-0.9 1.5 0.6 1.4 3 1.8 1.1 1 3.8 7.2M143.1 273l-0.5-1.4 0.2-2.9-0.2-1.4-0.7-1.4 0-1.4 4-1 1.4 0.2 1.5 1.6 0.2 0.6 0.3 1.4-0.1 1.4-0.4 1.5-1.5 2.3-1.4 1.1-1.4 0.3-1.4-0.9M222.4 196.1l1.8 0.2 4.3-0.3 2.9-0.7 0.8-0.6 0.4-1.4-2.7-1.4-1.4-0.2-4.3-0.3-4.2 0.1-5.7 0.9-8.6 0.2-4.8 0.7 4.8 0.7 8.6 0.4 4.2 1.1 3.9 0.6M627.3 183.5l-2.9 1.2-1.6 1.4-3.3 4.3-1.3 1.4-2.3 1.3-4 1.6-1.9 1.4-1.3 1.9-2.9 6.7-1.3 2.1-3 3.5-0.7 1.5-0.5 1.4-1.3 7.1 0.2 1.4 1.3 4.3 0.2 1.4-0.3 1.5-2 2.8-0.7 1.4-0.1 1.5 0.1 1.4 0.6 1.4 1 1.4 3 2.9 1 1.4 0.7 1.4 0.4 1.5 0.1 1.4-0.5 1.4-0.9 1.1-4.3 2-1.4 1.2-1.4 2.8-0.4 2.9 0.3 1.7 2.1 4 0 1.4-1 2.8 0.1 1.5 0.6 1.4 2 2.8 0.4 1.5-0.2 1.4-1.1 2.8-0.9 1.5-3.4 3.2-2.6 3.9-5.9 5.5-1.5 2-0.7 2.4-0.5 4.3-0.3 1.4-0.6 1.5-2.7 4.2-1.1 2.9-1.2 7.1-1.3 5.7-1 7.1-0.6 1.4-4.2 4.1-1.4 1.9-1.5 0.2-4.2-1.2-1.6-0.7-4.1-2.5-5.7-1.5-2.9-2-2-2.5-0.4-1.4-0.1-1.5 0.4-1.4 2.2-5.7 0.9-5.7 0.6-1.4 2.4-2.9 0.8-1.4 0.1-1.4-0.6-1.5-2.9-2.8-0.9-1.4-0.1-1.4 0.5-1.5 1.6-2.8 0.2-1.4-0.5-1.5-1.8-2.8-2-4.3-1.7-2.8-0.9-2.9-0.3-4.2 0.8-5.7 0-1.5-1.3-5.7-1.5-2.8-4.1-4.3-1-1.4-2.6-4.3-1.7-1.4-4-2.3-1.9-2-2.2-5.7-1.6-2.7-1.4-1.6-4.3-3.6-1.9-2-0.9-1.6-1.2-4.1-1.1-2.9-4.9-7.2-1.4-1.8-1.4-1.3-2.9-1.7-2.8-0.7-2.9 0.2-1.4-0.2-1.4-0.7-7.5-6.5-5-2.9-4.6-1.6-1.4-0.8-2.9-2.7-1.4-0.8-1.4-0.1-4.3 0.9-1.4 0-1.8-0.6-2.1-1.4-1.8-3-1.4-1.5-1.5-0.8-7.1-2.4-5.7-3.2-1.4-0.3-8.5-0.2-4.3 0.3-4.3-0.5-5.7 0.2-1.4-0.2-1.4-0.6-1.5-1.3-0.4-0.7-0.5-1.5-0.3-4.2-0.4-1.4-1.2-2.1-1.4-1.5-1.5-0.8-4.2-1.5-1.4-0.3-1.5 0.3-2.8 1.2-1.4 0.2-1.5-0.3-4.2-1.9-2.9-0.4-2.8 0.6-5.7 3.5-4.3 1.3-10 0.5-4.2-0.2-2.9 0.1-3.7 1.3-6.3 3.4-2.6 0.8-3.1 0.2-4.2-0.9-1.5 0.2-1.4 0.6-2.3 2.8-2 1-8.5 0.4-10 2.7-2.8 0.6-5.7-0.2-1.4 0.2-1.5 0.6-4.2 2.9-1.5 0.4-5.7-0.9-1.4 0.6-2.7 3.1-1.6 0.7-1.4 0.1-2.8-0.4-8.6-2.3-2.8-0.3-8.6 0.4-2.8 0.6-1.4 0.7-1.5 1.2-4.2 5-4.3 3.1-2.9 1.1-9.9 1.8-1.4 0.5-1.5 0.9-2.4 2.5-0.8 1.5-1.5 4.2-0.8 1.4-4.1 4.3-1.9 4.3-1.9 1.4-3.7 1.9-1.4 1.1-1.1 1.3-3.5 5.7-1.1 1.4-1.4 1.2-1.4 0.7-4.3 0.9-1.4 0.8-4.3 4-1.4 1-1.4 0.6-3.8 0.8-1.9 1.1-4.3 3.3-1.2 1.3-1.7 2.8-1.1 1.4-6 5.6-1.4 0.5-1.4 0.1-1.5-0.1-2.8-1-1.4-1-2.9-3.3-1.4-1-1.4-0.3-2.5 0.5-4.6 2-1.5 0.2-5.7-0.1M319.7 527.5l-1.4-1-0.3-1.4 0.5-1.4 0.9-1.5 1.7-1.5 1.4-0.6 2.8-0.2 2.8 0.9 1.1 1.4 0.2 1.5-1.2 1.1-2.9 0.9-2.8 1.4-1.4 0.4-1.4 0M627.3 465.4l-2.9-0.3-1.4-0.4-2.9-1.3-1.4-0.2-1.4 0.9-3.3 2.6-1.1 1.4-0.3 1.4 0.3 2.9 1 1.4 2 1.2 1.4 0.1 1.4-0.4 1.3-0.9 1.7-2.8 1.3-1.6 1.4-0.5 2.9 0.1M141.6 377.2l4.5-1.7 2.8-1.4 0.9-1.4 0.6-2.8 0.6-1.5 3.5-4.6 1.4-1.1 1.4 0 2.9 0.7 1.5-0.7 1-1.4 0.5-1.4 0.1-4.3 0.5-1.4 2.5-2.9 0.5-1.4-1.1-1.4-2.2-1.4-0.8-1.5 0.2-1.4 1-2.8 2.7-5.7-1.2-1.5-3.8-0.8-2.9-0.1-1.4 0.4-1.4 1-2.9 4.4-1.4 0.9-1.4 0-4.3-1.4-4.3 0.2M147.8 332.8l1 0.2 1.4-0.7 1.1-0.9 0.8-1.4-0.2-1.4-0.3-0.4-1.4-0.4-1.7 0.8-1.2 1.4-0.3 1.4 0.3 1.2 0.5 0.2M149.7 311.5l1.9 0.8 1.4-0.3 0.7-0.5-0.3-1.5-0.4-0.3-1.4-0.2-1.4 0.4-0.3 0.1-0.2 1.5M627.3 279.3l-1.5 0.7-1.4 1.5-2.8 4-2.7 1.8-1.5 1.4-1.6 2.8-2.5 2.9-3.1 4.2-3.9 2.9-1.3 1.4-1.7 4.3-1.6 2.8-2.3 2.9-3 2.8-0.7 1.5-0.4 2.8-0.6 1.4-4.5 4.4-0.6 1.3-0.2 1.5 0.5 8.5-0.5 2.8-0.6 1.5-1 1.4-1.5 1.4-3.2 2.6-2.7 1.7-1 1.4-0.1 1.4 1.8 8.6 0.2 2.8-0.3 1.5-2.6 4.2-0.4 1.5-0.1 5.6-0.8 2.9-1.6 2.8-1.5 1.5-5.1 3.2-1.5-0.3-1.5-2.9-2.9-4.3-0.6-1.4-0.7-4.3-0.6-1.4-4.7-5.7-0.4-1.4 0.3-4.3-0.2-1.4-1.2-2.9-3.1-5.9-1.4-1.9-2.9-2.3-0.9-1.3-2-4.3-3.6-4.2-1.8-2.9-1.4-2.8-0.5-1.4-0.4-4.3-0.8-2-1.4-1.5-1.4-0.8-1.6-1.4 0-1.4 1-2.9 0.1-1.4-0.7-5.7 0.4-2.9 0.4-1.4 0.8-1.4 1-1 2.8-1.7 1.2-1.6 0-1.4-1.3-4.3 0-2.8 0.5-4.3-0.1-2.8-0.7-2.9-0.6-1.4-0.4-0.7-1.4-1.3-4.3-1.4-1.4-0.7-2.8-3.1-1.9-2.8-1-2.2-1.3-7.8-1.5-2.5-1.5-1-1.4-0.6-4.3-0.5-1.4-0.6-5.7-3.9-4-2.2-3.2-1.5-1.3-1.1-1-1.7-0.7-2.9 0.2-1.4 0.7-1.4 5-7.1 3-2.9 0.6-1.4 0-1.4-0.3-1.5-0.6-1.4-1.2-2-1.5-1.4-1.4-0.8-1.4-0.5-8.6-0.7-4.2-2.2-4.3-0.8-1.4-1.3-1.3-4.5-1.6-1.8-11.4-3.7-4.7-3.1-7.6-4.2-3.3-3-1.5-0.7-1.4-0.4-4.2-0.2-1.5-0.4-1.5-1-2.7-2.5-1.5-0.7-2.8-0.2-5.7 0.9-4.3 0.1-5.7 1.1-2.8 0-1.5-0.3-1.4-0.6-1.4-1.3-1.4-2.3-1.4-4.2-0.7-5.7-0.6-1.4-1.6-1.4-2.8-0.5-4.3 0.7-2.9 0.1-2.8-0.6-4.3-1.5-1.4-0.1-1.4 0.3-4.3 2.5-2.9 0.8-2.8 0.1-5.7-0.5-2.9 0.4-5.3 1.1-2.7 1.4-3.3 2.8-1.5 0.7-2.3 0.8-11.9 2.7-4.3 2.5-1.4 0.5-1.4 0.2-5.7-0.8-1.5 0.1-2.4 0.5-6.1 1.9-2.8 0.6-4.3 0.7-5.7 0.1-1.4 0.5-4.3 2.9-7.1 3.6-2.5 1.1-1.8 0.5-2.9 0.4-1.4-0.1-5.7-1.4-2.8-0.3-2.9 0-2.8 0.5-11.4 4-7.9 4.9-6.4 2.1-4.2 2.1-2.1 1.5-2.2 2.4-3.6 4.7-3.5 5.8-5.7 5.6-2.6 4.3-3.1 3.2-1.4 2-2.5 4.8-3 8.5-3.4 5.7-4.4 10-1 1.4-4.2 2.1-0.9 0.8 0.2 2.8-0.2 1.4-0.5 1.5-2.6 4.2-1.2 2.9-0.8 1.4-2 1.4-4.9 1.9-4.2 2.6-1.5 0.5-1.4 0.1-2.8-0.1-1.5 0.2-0.8 0.5-1 1.4-0.4 1.5-0.3 2.8 0.3 2.9 0.7 1.4 1.5 1.7 1.5 2.2 2.9 7.5-0.8 1.4-2.3 1.4-1.4 1.5-1.7 5.7-0.2 1.4 0.3 1.4 2.5 4.3 0.6 1.4 0.3 1.4-0.4 5.7-1.8 5.7-0.1 1.4 0.6 1 0.9 3.3-0.5 5.7 1.1 4.8 0.3 3.8-0.5 2.8-1.8 4.3-0.4 2.8 0.5 1.4 2.1 2.9 0.5 1.4 0.9 4.3 1 1.4 1.6 1.5 1.1 1.4 0.6 1.4 0.1 1.4-0.3 1.4-0.9 1.5-0.6 0.9-1.4 1.2-1.9 0.7-0.5 1.4 1 2.1 1.4 1.3 2 0.9 0.9 0.9 1.1 2 3.1 2.6 1.5 1.5 1.8 3 3.9 4.8 0.4 0.9 0.1 1.4 0 4.3 0.7 7.1-0.1 4.3 0.3 1.4 1 1.4 1.6 1.4 8.8 6.5 4.2 4.9 1.5 0.8 4.2 1.2 1.5 0.8 1.4 1.4 4.9 8.6 4.7 7.2 4.6 7.9 0.9 2 1.3 4.3 0.7 1.5 1.4 1.8 1.4 1.1 1.5 0.7 2.8 0.7 10 0.2 7.1-0.8 2.8 0.5 2.9 1.3 2.8 2.3 2.9 3.5 3.8 7.1 3.3 4.8 2.9 3 2.8 2.1 1.4 1.4 2.9 4.4 1.4 1.4 4.3 2.5 5.7 2 1.1 1.2 0.3 1.5 0.8 1.4 1.8 1.4 5.9 3.7 4.3 1.3 1.4 1 1.5 1.5 1.4 0.8 1.4-0.4 4.3-2.7 4.9-2.4 0.8-0.6 0.6-0.8 2.2-5.4 1.4-2 1.5-0.2 4.2 0.4 4.3-0.9 1.4 0 1.5 0.5 4.2 1.9 8.6 2.5 2.8 1.8 2.9 2.6 1.4 0.9 1.4 0.4 1.4 0 4.3-1.1 4.3-0.3 1.4-0.4 1.6-0.7 4.1-2.8 1.4-0.6 1.5-0.2 1.4 0.2 1.4 0.6 4.3 3.5 1.4 0.7 1.4 0.1 7.2-0.7 5.6-1.5 1.5 0.1 5.7 2 5.7 1.3 1.4-0.1 5.7-2 4.3-0.3 1.4-0.4 7.1-5.1 1.4-1.8 0.5-1.5 0.4-2.9 0.6-7.4 1-2.5 1.6-1.5 1.6-0.2 2.9 0.5 2.8 0.1 8.6-0.8 4.2-0.7 4.3 0.7 1.4-0.5 1.5-1 4.2-4.4 5.1-3.6 1.1-1.5 2.3-4.2 1.5-1.5 1.4-0.9 2.9-1.2 2.8-0.5 6-0.2 1.1-0.3 2.1-1.1 0.8-1.4-0.1-1.5-1.6-2.8 0-1.4 1-1.5 2.7-2.8 2.4-4.3 1.1-1.4 1.5-1.4 3-2 2.8-1 4.3-0.5 1.4-0.5 1.4-1.1 0.8-2.1 0.9-9.9 0.9-2.9 0.8-1.4 1.2-1.4 1.9-1.4 4.9-2 1.3-0.9 1.2-1.4 1.8-2.9 3.8-4.2 1.9-3.2 1.4-1.2 4.3-2 2.4-2.2 1-1.4 1.3-2.9 0.1-4.2 0.4-1.5 0.5-0.7 1.4-0.7 1.4 0.7 1.5 1.8 0.9 1.8 1.4 1.4 1.9 0.9 1.4 0.2 2.9-0.3 1.4-0.8 1.4-1.6 2.9-4.4 1.4 0 1.4 0.6 5.7 4.2 1.5 0.3 1.4-0.2 1.4-0.6 1.7-1.1 2.6-2.9 1.4 0 4.3 2.7 0.8 1.6 0.1 4.3 0.2 1.4 0.6 1.4 1.1 1.4 3 2.9 0.7 1.4 0.1 1.4-1.3 5.7-1 2-1.5 0.8-4.2 0.5-1.5 1 1.4 4.3 0.7 1.4 1.2 1.4 2.4 1.6 2.9 1 7.1 1 1.4-0.8 2.1-4.2 0.1-1.4-1.2-4.3-0.1-1.4 0.8-2.9 3.7-8.5-0.1-1.4-2.4-2.5-0.7-1.8 0.2-1.4 0.6-1.5 3.9-5.7 0.5-1.4 0-2.8-1.4-4.3 0.1-1.4 1.1-1.4 1.8-1.5 3.8-2.4 1.5-0.6M405.3 522.2l1.2 0.3 1.1-0.3 1.8-1.2 1.4-1.6 2.8-4.6 1.5-1.3 1.4-0.2 1.4 0.3 2.9 1.3 2.1 1.6 0.7 1.5 0.5 2.8 0.5 1.4 0.4 0.5 1.5 0.5 2.8 0.1 2.9-0.6 1.4-0.6 1.4-1.2 0.9-1.5 2.4-10 1-2 1.4-1.8 3.6-3.3 3.4-4.3 4.4-3.2 1.4-2 1.5-3.3 1.4-1 2.8-0.4 7.1 1.5 5.7 0 1.5-0.3 5.7-3.1 4.2-3.6 4.3-1.2 1.4-0.7 1.4-1.3 5.6-8.4 1.3-2.9 1.4-4.3 0.8-1.4 1.7-1.4 4.1-1.4 2.2-1.5 2.9-3.8 3-3.3 2.8-4.2 1.2-1.5 1.5-1.2 7.2-3.4 5.6-3.4 1.5-1 1.4-1.5 1.4-2.3 0.7-2.8 0.5-4.3 0.1-5.7 0.2-1.4 0.7-1.5 1.4-1.4 3.5-1.9 2.4-2.3 2.5-4.3 0.8-2.9 0.2-4.2 1.3-5.2 0.2-2-0.2-1.7-1.6-4-0.7-2.8-0.4-5.7-0.9-5.7 0.3-5.7 1.6-5.7 0.2-1.4-0.2-1.4-1.2-2-4.3-3.7-1.4-1.6-1.6-2.7-1.2-3.1-1.5-2-1.4-1-4.3-0.6-7.1-2.8-1.4-1.2-1.2-2.1-0.5-2.9 0.1-4.2-0.8-4.3-0.2-2.9 0.2-4.2 1.2-8.6 1.1-2.8 1.7-2.9 4.7-5.7 1.8-2.8 0.8-2.9 0.1-2.8-0.3-1.4-0.7-1.5-0.9-1.1-4.2-3.8-4.3-5-2.1-4.3-6.6-10-1.3-1.2-2.3-1.6-7.7-4.4-7.1-5.7-2.5-2.7-4.6-7-1.3-3-0.2-1.4 0.1-1.9 0.7-2.4 0.7-1.1 3-3.2 0.3-1.4-0.5-1.8-1.4-0.8-2.8-0.4-2.9-1.1-6.6-4.5-1.8-1.4-2.8-4.3-1.3-1.4-3.1-2.4-1.5-0.6-4.4-1.2-2.3-1.5-2.7-2.8-2-1.5-4.2-1.7-4.3-2.5-4.3-1.7-5.7-2.8-1.4-0.4-2.8 0.1-6.9 1.9-3.1 3.2-1.4 0.8-1.5 0-9-2.5-3.8-2.9-2.9-2.8-0.6-1.5 0-1.4 0.5-2.8-0.2-2.9-1.4-2.8-1.1-1.2-1.4-0.8-1.4-0.4-2.9 0.1-8 2.3-4.8 1-2.8-0.2-4.3-1.2-2.9-0.6-2.8-0.2-1.4 0.1-2.9 0.9-1.4 0.7-2.8 2.4-2.9 1.8-7.1 2.3-10.4 4.4-2.4 0.8-1.5 0.2-2.8-0.1-5.7-1.3-1.4 0-1.7 0.4-5.4 3.6-1.5 0.7-1.4 0.4-1.4 0-5.7-0.9-2.9 0.3-4.2 1.3-3.4 1.7-3.8 3.5-1.4 1-1.4 0.6-5.7 0.4-4.3 1.7-1.4 0.3-1.4-0.1-5.7-1.1-2.9 0-2.8 0.5-1.4 0.7-2.9 2.4-1.4 0.8-5.7 1.3-2.3 0.8-9.8 5.7-3.6 2.7-1.4 1.4-3.7 4.4-4.8 5.1-1.8 2.1-1.9 2.8-3.5 8-2.5 4.8-1.9 5.7-0.9 1.4-3.2 3.4-2.3 3.8-1.2 2.8-1.7 5.7-5.9 11.4-1.9 5.7-3 7.1-0.3 1.4-0.2 5.7-1.3 5.7 0.2 2.9 0.6 1.4 1.3 2 4.3 4 1.4 2.3 0.4 3.1-0.4 3.9-0.4 1.8-2 4.3-0.9 2.8-0.7 1.4-1.1 1.5-2 1.8-1.4 0.8-1.4 0.5-2.9 0.3-1.4 0.5-1.4 1.4-1.5 2-1.4 2.6-0.2 2.9 1.6 5.6 1.5 2.4 3 3.4 1.3 2.8 0.2 1.5-0.7 7.1-0.6 1.4-3.2 1.9-1.5 1.2-1.8 2.6-0.6 1.4-0.2 1.4 0.2 1.5 0.6 1.4 3.3 4.4 0.3 1.3 0.6 5.7 1 2.8 1.3 2.9 3.9 6.7 3.3 4.7 2.5 5.7 4.1 5.8 1.1 2.7 1 5.7 0.8 2 6.2 8 2.6 2.8 4.8 4.3 1.3 1.4 5 7.2 1.5 1.4 2.8 1.4 1.4 1.1 2.9 4.8 1.4 1.2 10 5 4.2 0.1 1.5 0.7 0.9 1.3 1.1 2.9 1.5 1.4 2.2 1.4 1.4 1.3 2.4 3 4.4 4.3 1.7 2.3 2.9 4.7 1.4 1.7 5.7 4.9 11.4 7.7 2.8 1.3 2.9 0.7 2.8-0.2 4.3-1 1.4 0.1 7.2 1.4 1.4-0.1 1.4-0.5 2.9-1.4 1.4-0.4 2.8-0.1 4.3 0.6 2.8-0.1 1.5-0.5 1.9-1.2 5.2-4.3 4.3-1.2 2.8-0.2 1.4 0.2 5.7 1.8 4.3 0.1 2.9 0.6 8.5 4.6 8.5 3.1 2.9 0.6 1.4 0 4.3-0.7 1.4 0 3.5 1.1 3.6 2.2 1.5 0.2 1.4-0.5 4.3-3.9 1.4-0.4 1.4 0.9 0.6 1.5 0 2.9-1.2 2.8 0.8 1.4M608.4 362.7l0.3 0.3 0.5-0.3-0.1-1.4-0.4-1.4-1.4-2.4-1.4-1.8-1.4-0.5-0.7 0.4-0.7 0.6-0.5 0.8-0.1 1.5 0.6 0.9 5.3 3.3M627.3 322.7l-5.7-0.3-1.5 0.1-1.4 0.5-4.3 2.2-1.6 0.5-1.2 0.7-0.6 0.7 0.1 1.5 0.5 0.7 1.4 0.9 2.9 0.4 1.4 0.6 1.4 1.5 1.4 2.3 1.5 1.5 1.4 0.4 1.4-0.2 2.9-1M385.1 508l4.3 0.5 3.3-0.5 2.1-1.4 1.8-3.3 1.4-1.4 1.4-0.5 2.9-0.2 2.8-1.1 2.7-2.1 3-3.2 1.4-1.1 1.4-0.4 1.5 0 4.2 1.4 5.7 0.5 1.5 0.7 4.2 2.9 1.5 0.3 4.2-0.6 2.9-1 5.7-4 1.4-1.2 1-1.4 0.4-1.4 0.1-4.3 0.6-1.4 0.7-0.7 1.5-0.5 1.4-0.1 1.4 0.1 4.6 1.2 2.5 0.3 2.9-0.3 1.4-0.7 5.3-5 0.8-1.4 0.1-1.5-0.9-4.2 0.3-1.5 1.1-1.4 1.9-1.1 1.4-0.4 1.4 0 1.4 0.5 2.9 2 1.4 0.4 1.4-0.2 1.7-1.2 0.2-1.4-1.1-4.3 0.1-1.4 0.7-1.4 1.3-1.7 1.4-1.2 3-1.4 7-2.5 12.8-11.6 1.4-0.8 5.6-2.2 1.5-1.3 3.9-5.8 3.3-2.4 1.2-1.9 1.5-10 0.2-2.8-0.2-1.4-0.5-1.4-0.8-1.2-2.4-1.7-1.4-1.4-0.2-1.4 1.3-4.3 0.6-4.3 0.8-2.8 1.3-2.1 1.4-1.2 2.8-1.7 0.7-0.7 0.8-1.5 1.8-5.7 0.8-5.7 0.9-4.2 3.1-10-0.2-1.4-0.7-1.4-1.5-1.3-2.8-1.4-1.4-1-1.4-2-1.4-2.9-1.5-1.4-1.4-0.4-2.9-0.2-1.4-0.6-1.4-1.6-3.8-5.8-1.5-2.8-1.3-4.3-1.2-5.7-0.4-4.2 0.6-4.3-0.1-1.4-1.1-4.3-0.1-1.4 0.2-1.5 1.4-2.8 5.6-7.1 2.7-4.3 3.5-2.9 0.7-1.4 0-1.4-0.7-1.4-3.1-3.1-5.1-6.9-2.7-5.7-6.4-7.1-4.3-4.3-2.9-2.3-8.5-5-1.4-1.4-5.2-6.9-4.8-7.2-4.1-8.5 0-1.4 0.8-2.9 0-1.4-0.4-1.4-0.8-1.5-1.2-1.2-2.8-1.7-5.7-2.2-1.5-0.8-1.4-1.7-1.2-2.3-1.3-1.5-5.8-2.8-3.1-2.7-1.4-0.9-1.4-0.3-5.7 0.6-2.9 0-1.4-1 0.4-2.8-0.1-1.4-0.6-1.5-1.1-1.5-1.4-1.1-1.5-0.6-1.4-0.1-1.4 0.4-2 1.5-2.7 2.9-1.6 2.8-1.2 1.4-1.1 0.7-1.4 0.8-1.4 0.3-1.4 0-1.5-0.5-4.9-4.1-5-1.5-2.5-1.4-13.4-9.9-4.1-4.3-2.8-0.6-10 0.3-8.5-0.5-2.9 0.4-7.1 3.1-4.3 0.9-6.2 2.1-6.6 2.9-7.1 2.7-2.9 0.4-5.7 0.4-5.4 2.1-1.7 0.4-2.8-0.3-4.3-1.3-1.4-0.2-2.9 0.3-4.2 1.1-2.5 1.5-3.2 3.3-2.9 2.3-1.4 0.8-4.3 1.5-4.3 0.8-2.8 0.1-5.7-0.3-2.8 0.6-4.3 2.6-4.3 1.5-2.2 1-1.6 1.4-1.9 2.7-1.4 1.4-4.3 2-4.3 2.7-7.1 3.5-2.8 1.9-1.5 1.5-3 4.3-1.2 2.3-0.7 1.9-0.6 2.9 0.4 5.7-0.5 1.4-4.7 7.1-1.5 1.4-3.8 2.5-2.2 1.8-1.2 1.4-0.6 1.5-0.5 5.7-1.6 7.1 0 2.8 0.9 4.3 0.1 2.9-0.6 2.8-2.1 4.3-0.4 1.4-0.1 1.4 1.8 5.7 0.8 1.4 0.5 2.9 0 2.8 1.4 5.7-0.2 2.9-3.1 5.7-0.7 2.8 0.1 1.5 0.6 1 1.9 1.8 0.9 1.3 0 1.5-0.9 1.5-2.4 2.8-0.8 1.4 0.1 1.5 1.2 3.6 1.4 6.3 0 1.5-0.9 4.2 1.1 2.9 0.3 1.4-0.1 1.4-0.5 1.5-1.2 1.4-4.4 3.5-3.2 3.6-4 5.7-1.5 2.8 0.2 0.6 3.1 3.7 0.5 1.4-0.2 1.5-1.8 2.8-0.2 1.4 0.3 2.9 0.9 2.8 1 1.5 4.9 5 4 3.5 1 1.4 0.7 2.1 1 6.5 0.7 2.8 1.2 2.9 2.4 4.2 3.2 4 3.8 6 3.5 4.3 4.1 6 8.5 8.2 1.5 1 2.8 0.8 1.5 0 4.2-1 1.5 0 1.4 0.4 1.4 1.1 1.2 2 1.3 5.7 3.3 5.7 2 7.1 1 2.9 1.2 1.8 3.8 3.9 3.3 4.3 1.4 1.4 4.5 2.8 2.6 2 2.9 1.4 5.7 0.9 1.4 0 4.3-0.6 1.4 0.1 2.9 0.8 4.2 2.2 1.5 0.4 1.4-0.1 3.4-1.4 2.3-0.4 7.1 0.8 4.3 0.2 1.3-0.6 1.3-1.4 3-1.5 5.8-1 2.8-0.2 10 1.3 5.7 1.1 5.7 1.7 7.1 1.6 2.8 1.1 4.3 2.1 1.4 0.3 7.1 0.6M385.9 502.3l2.1 0.1 1.4-0.3 1.5-0.9 4.2-4.1 1.5-0.9 1.4-0.7 5.7-1.4 1.4-0.6 3.3-2.6 3.8-3.5 1.4-0.6 1.5 0.1 5.7 2.5 5.7 1.4 4.2 2.2 1.5 0.4 1.4 0 2.8-1 4.3-2.3 1.4-1.1 0.6-0.9 0.3-1.5 0.5-4.2 0.8-1.5 2.1-1.8 4.6-2.4 2-1.5 3.4-3.9 1.4-0.2 0.3 1.3 0 2.8 1.1 2 1.4 1.1 1.5 0.2 1.4-0.7 1-1.1 0.4-1.5-0.3-1.4-1.6-2.8-0.3-1.5 1-1.4 3-2.8 6.8-5.1 2.8-3.9 1.2-1 4.5-1.7 5.6-4 1.4-1.4 2.1-2.9 0.9-0.9 1.4-0.6 1.4-0.1 4.3 0.7 1.4 0 1.4-0.5 2-1.4 2.5-2.9 2.7-4.1 1.4-1.7 6.3-5.6 1-1.4 0.6-1.4 1.3-7.1-0.6-1.5-1.5-1.7-0.7-1.1-2.7-7.1-2.5-4.3-0.5-1.4-0.5-2.9 0.1-2.8 0.5-1.4 2.4-4.3 1.8-5.7 0.8-1.4 1.3-1.5 1.4-1.2 2.8-1.6 1.5-1.2 1-1.7 1.2-4.2 0.4-4.3-0.2-1.4-1.5-4.3-0.5-5.7-0.8-1.4-2.4-2.3-1.5-1.8-1.9-4.5-3-4.2-1.3-2.9-5.2-24.2-0.1-2.8 1.1-2.9 7.2-10 1.4-2.8 0.9-2.9 0.5-2.8-0.5-4.3-1.2-2.8-0.9-1.4-6.9-7.9-6.7-9.2-3.3-3-1.4-0.8-4.7-1.9-2.5-1.8-15.5-18.2-5-4.2-0.9-1.5-1.6-4.2-1.2-1.7-3.1-2.6-4.5-5.7-5.2-3.8-8.5-3.2-1.4 0.1-2.9 1.2-1.4 0.4-1.4 0-2.9-0.4-5.7-1.8-1.4-0.1-4.3 0.3-2.8-0.4-2.9-1.4-7.1-4.7-11.4-5.9-4.3-3.7-2.8-1.7-5.7-2-2.9-1.4-2.8-1.1-2.9-0.5-11.4-0.5-2.8 0.5-4.3 1.6-5.7 0.6-2.8 0.8-7.1 3.6-4.3 1.8-5.7 3-2.9 1.1-2.8 0.4-10 0.7-2.8-0.1-4.3-0.9-1.4 0-1.4 0.4-2.2 1.4-2.8 2.9-1.8 1.4-5.6 4.3-3.3 2.1-2.9 1.1-4.2 0.8-4.3 1.4-1.4 0.1-4.3-0.7-1.4 0.1-7.1 2.1-1.5 1.3-2.6 4.5-1.6 1.5-2.7 1.3-4.5 1.6-1.4 0.8-4.3 3.3-1.4 0.4-4.3 0.1-1.5 1-0.9 1.4-0.5 2.8 0.3 4.3 1.2 7.1 0 2.9-0.4 1.4-0.8 1.4-4.5 4.7-2.7 5.3-4.4 4.3-1.7 2.8-0.4 1.4-1.3 11.4-2.9 10-0.1 2.8 2.3 10 0.7 5.7-0.3 4.3 0.4 11.4-1.7 9.9-0.5 5.7 0 2.9 1.2 7.9 0.4 6.3 1 4.3 0.4 2.9 0.2 5.6-0.1 5.7 0.6 7.2 0.2 8.5 0.5 2.9 1.6 4.2 1.4 7.2 0.9 2.8-0.7 5.7 0.3 1.4 0.9 1.4 3.6 2.9 0.9 1.4 0.4 1.4 0 1.5-0.5 4.2 0.4 1.5 6.7 7.1 0.9 0.7 1.4 0.7 8.5 1.9 2.9 0.4 1.4 0.3 1.4 0.7 2.9 2.4 4.3 5.2 0.8 1.9 0.3 1.4 0.1 5.7 1 5.7 0.3 7.2 0.5 2.8 1.1 2.9 5.8 7 2.5 1.5 3.2 1.1 7.1 1.1 2.9 1 1.4 0.3 4.3-0.2 1.4 0.3 4.1 2.1 1.6 0.4 1.4 0.1 1.5-0.4 2.8-1.3 2.9-0.6 1.4 0 4.3 1.5 1.4 0.2 1.4-0.2 4.3-1.3 11.4-2.7 2.8 0 5.7 2.2 4.3 1 5.7 1.9 5.7 1.1 7.1 1 5.7 0.3 5.7 2.1 5 0.4M360.9 495.2l8.6 0.7 5.7-0.4 7.1 0.3 2.9-0.4 2.8-1.5 2.9-2.2 1.4-0.8 4.1-1.4 2.9-1.4 2.1-1.5 2.4-2.8 1.7-1.4 2.4-1.5 4.3-1.8 1.4-0.2 2.5 0.6 4.7 2.9 4.2 2.1 4.3 0.7 2.9-0.2 1.4-0.6 1.4-1.2 2.9-3.7 1.5-1.4 7-4.3 1.4-1.5 2.9-4.2 1.4-1.1 2.8-1.2 7.2-2.2 2.8-1.5 2.9-2.2 1.5-1.8 0.7-1.4 0.6-2.8 0.7-1.4 1.8-1.5 7.8-4.2 1.9-1.5 1-1.4 1.5-4.3 0.7-1.4 1.7-2 1.4-1.1 1.9-1.2 2.4-0.9 1.4-0.2 1.4 0.2 2.3 0.9 1.2 1.5-0.2 1.4 0.5 1.4 0.5 0.3 0.4-0.3 0.3-1.4-0.2-1.4 0.2-1.5 0.7-1.9 0.6-2.3 0.5-1.5 3-4.2 0.5-1.5 0.3-1.4-0.5-5.7 0.8-5.7-0.2-1.4-2.2-4.3-1-2.8-0.2-2.9 0.3-4.2 0.7-2.9 1.2-2.8 0.8-5.7 1.1-1.8 3.2-2.5 1.1-1.3 2.9-4.4 0.8-2.8 0.8-5.7-0.7-8.6-0.5-2.8-1.8-5.7-2.9-4.5-1.3-2.7-3-15.4-2.3-7.3-0.6-4.3 0.4-4.3 0.9-2.8 3.9-5.7 1.7-4.3 2.8-5.7 0.8-2.8-0.2-1.5-0.6-1.4-4.2-4.3-9.7-13.6-2.9-2.3-4.2-1.6-2.9-1.6-1.4-1.3-2.8-3.4-1.9-1.8-3.8-3.2-5.7-3.9-7.2-7.5-4.2-6-5-2.2-3.6-3.1-7.1-4.2-5.7-2.6-4.3-2.6-2.8-1.2-5.7-1-7.1 0.2-1.5-0.3-1.7-0.9-6.8-4.8-4.3-2.7-8.5-4.3-4.9-3.8-2.2-1.4-5.7-2.1-5.7-2.8-3.6-0.8-7.8-1.1-2.9 0.2-1.4 0.5-5.7 2.7-4.3 1.4-5.7 2.5-5.7 1.7-2.8 1.5-4.3 2.8-2.8 1.1-17.1 1.9-5.7 1.6-5.7 2.7-7.1 4.5-5.8 3-5.6 4.4-2.9 1.6-2.8 0.4-5.7-0.1-4.3 1.2-1.4 0.8-1.4 1.3-5.7 6.7-1.5 0.8-4.2 0.7-1.5 0.7-1.4 1.5-0.7 1.4-0.1 1.4 0.8 1.5 2.9 2 0.6 0.8 0 1.4-0.6 1.4-2.6 4.3-3.1 6-2.5 4-1.8 1.8-4.3 3.2-3.7 6.4-2 2.9-1.3 2.8-1.8 5.7-3.9 7.1-0.5 1.4-0.4 2.8 0.1 2.9 0.5 2.8 2.7 7.2 0.9 4.2-0.6 11.4-0.4 2.9-1.1 4.2-0.3 2.9 0.6 8.5-0.7 8.6 0.3 10 1.1 5.7 2.1 7.1-0.3 2.8-1.5 4.3-0.1 2.8 0.5 2.9 3.2 8.5 1.6 10 0.8 2.4 1 1.9 8.9 12.4 3.5 6.1 1.1 1.4 1.6 1.4 6.6 3.4 6.4 5.2 1.4 1.4 2.8 4.3 2.8 2.8 1 1.5 0.9 2.8 0.3 4.3-0.8 8.5 0.1 2.9 0.8 2.3 2.2 3.4 0.5 1.4 0.8 5.7 0.8 1.9 1.4 1.1 1.4 0.3 2.9-0.2 1.4-0.4 4.3-3.4 1.4-0.4 1.4 0 2.9 1 2.8 1.9 4.3 2.2 2.8 0.9 2.9 0 4.3-1 2.8-0.1 1.8 0.5 3.9 1.9 2.8 0.7 2.9-0.3 7.1-1.4 4.3-0.1 2.8 0.3 2.9 0.7 11.4 4.5 4.2 0.8M356.8 490.9l4.2 1 4.2 0.2 10-0.8 2.4-0.4 4.7-2.2 5.7-4.1 1.4-0.6 4.3-0.9 1.4-0.5 7.2-3.9 7.1-2.6 2.8-0.7 1.4-0.1 2.9 0.4 7.1 2.2 1.4 0.1 2.9-0.5 2.8-1.4 4.2-3.7 1.5-1 4.3-1.8 1.4-0.9 3.3-3.4 1.9-1.5 7.1-2.8 6.2-2.9 2.2-1.4 0.9-1.4 1.4-4.3 0.9-1.4 1.8-1.5 4.2-2.4 5.9-4.6 1.3-1.5 3.2-5.7 3.9-4.2 5.2-4.3 1.2-1.4 2.1-3.7 4.3-5.1 1.8-2.6 0.6-1.4 0.2-1.5-0.1-1.4-2.2-5.7-0.6-2.8 0.5-14.3 0.6-2.8 2.6-5.7 1-4.3 0.5-1.4 3.6-5.7 1.3-2.9 0.8-4.2-0.2-2.9-1.7-8.5-2.6-5.7-0.7-2.9-2-14.2-3.1-7.1-0.8-2.9-0.2-1.4 1.8-20 0.4-1.4 0.9-1.4 2.8-2.8 0.5-1.5-0.4-1.4-1.5-2.8-5.2-7-1.5-1.1-4.2-2.4-6.4-5.2-1.2-1.4-3.2-5.7-2.7-2.9-2.2-1.5-4.3-2.1-2.8-1.7-10-9.6-7.1-4.3-7.1-5.9-10-7.1-2.8-1-11.4-1.2-2.9-0.7-2.8-1.5-10-6.3-7.1-3.4-4.3-3-4.3-3.4-2.4-1.4-10.4-3.6-4.3-0.8-5.7-0.8-2.8 0.6-17.1 8.4-1.4 1-4.3 3.8-2.8 1.6-2.9 1-4.3 0.7-5.7-0.9-2.8 0-8.5 1.1-5.7 1.8-3.4 1.8-5.2 4.3-7.1 4.1-7.1 5.2-4.3 2-5.7 1.7-2.2 1.2-2.1 2.3-2.8 5.6-2.9 3.8-4.3 6.8-3.7 7.1-1.9 3.2-2.9 3.6-5.7 6-1.4 1.8-1.3 2.5-1.8 5.7-1.2 2.6-1.4 1.7-2.8 2.5-1.5 2.2-0.7 2.4-1.3 7.1 0.5 2.9 2.2 5.7 0.7 4.2-1.4 13.5-1.5 7.9 0.3 2.8 1.1 4.3 0.3 2.9-1 9.9 0.1 4.3 0.9 4.3 1.9 4.3 0.9 2.8 0.7 4.3-0.2 2.8-2 5.7 0 2.9 3 8.5 0.6 5.7 0.6 2.9 1.4 2.8 3.6 5.7 6.1 8.5 5.9 7.2 1.8 1.4 4.7 2.8 6.4 5.2 8.7 9.1 1.3 1.7 1.4 2.6 3.6 11.3 1.3 2.9 2.7 2.8 5.2 4.2 7.2 3.5 1.4 0.4 5.1 0.5 4.9 3.1 5.7 1.5 5.6 2.4 2.9 0.5 7.1-0.4 8.6 0.8 2.8 0.8 10.1 4.1M357.4 486.6l2.1 0.8 2.9 0.5 2.8-0.1 2.9-0.4 8.5-2.5 1.4-0.8 4.3-3.6 2.9-1.4 2.8-0.7 5.7-0.6 1.4-0.4 4.3-2.2 2.9-1.1 7.1-1.8 2.8-0.4 2.9 0 5.7 0.5 2.8-0.4 7.1-3.8 4.3-3.1 7.1-3.1 12.8-7.9 4.3-4.5 4.9-4.3 6.8-4.2 2.5-2.9 2.5-4.3 5.6-5.7 3.5-4.2 1.4-2.9 1.5-4.3 1.2-1.6 3.9-4 0.7-1.5 0.1-1.4-0.3-4.3 1.5-9.9 0.1-8.6 0.3-2.8 0.4-1.5 2.4-5.7 1.3-5.6 2.5-7.2 1-4.2 0.2-2.9-0.2-4.3-0.7-2.8-3.9-7.1-1-2.9-0.2-2.8 1.1-7.1 0-2.9-0.8-2.8-3.3-5.7-1.2-2.9-0.3-1.4 0.1-2.9 0.8-4.2-0.1-2.9-1.1-7.1-1.8-4.3-0.8-2.8 0-4.3-0.5-1.4-1.6-1.3-4.3-1.7-1.4-0.9-1.7-1.8-1.2-2.9-0.8-5.7-1.1-4.2-1.1-2.9-1.2-2-1.4-1.4-5.7-3-3.1-2.1-1.6-1.5-4.6-5.6-2.1-1.9-7.2-3.8-4.2-3.1-5.7-3.1-5.7-3.6-2.9-1.3-7.1-2.4-7.1-2.9-8.6-4.2-5.6-3.1-4.3-1.8-4.3-2.7-7.1-5.6-2.9-1.5-9.9-2.8-5.7-0.7-2.9 0.3-1.4 0.5-4.4 2.4-4.5 2.8-5.3 3.8-6 4.7-4.8 2.9-3.5 1.5-2.8 0.6-2.9 0-5.7-1.9-2.8-0.3-2.9 0.7-4.2 2-5.7 0.7-1.5 0.5-5.7 4-5.7 3-7.1 4.8-11.4 6.6-1.7 2-1.7 4.3-0.9 1.4-11.7 15.7-5.3 9.7-5.3 5.9-4.1 10-0.9 1.4-3.6 4.3-0.9 1.4-1 2.9-0.4 2.8 1.2 8.6 0.3 4.2-1.6 18.5 0.1 2.9 1.2 5.7 0.4 2.8-0.2 2.9-1 7.1 0 2.9 0.5 2.8 0.6 1.4 2.7 4.3 1.1 2.9 1.2 7.1 0 2.8-0.9 7.1 0.3 4.3 1.5 7.1 2.9 7.2 1.3 5.7 1.4 2.8 1.7 2.4 2.9 3.1 5.8 4.5 4.2 4.2 7.1 6.4 7.7 6.5 3.7 3.7 1.9 3.4 3.8 11.1 1.3 3.1 2 2.9 2.4 2.1 3.9 2.1 3.2 1.4 4.3 0.6 2.8 1 7.1 4.6 2.9 1.4 4.2 1.4 4.3 1 7.1-0.2 8.6 0.7 8.5 3.4 3.6 1.8M362.4 482.4l1.4 0.3 2.8 0.2 2.9-0.6 7.1-3.2 5.7-4 4.3-1.9 8.5-1.5 7.2-2.8 4.2-1.1 11.4-1.1 4.3-1 3.4-1.9 6.6-4.8 2.8-1 5.7-1.2 2.9-1.4 4.2-3.8 4.3-3.3 8.6-7.2 1.5-1.5 4.1-5.1 5.7-6.2 4.6-4.3 0.7-1.5 0.8-5.7 1.1-3.6 1.4-2.2 4-4.1 2-4.3 2.7-4.3 1-2.8 0.4-2.9 0.2-8.5 0.4-2.9 2.3-7.1 2-9.9 2-5.7 0.4-2.9-0.4-2.8-1-2.9-3.8-7.1-1.2-2.9-0.3-2.8 1-7.1 0-4.3-0.9-2.8-2.7-4.3-1.2-2.9-2.5-9.9-0.3-5.7-0.2-1.5-1.9-5.7-1.2-2.8-6.5-9.1-2.3-3.7-1.3-2.9-2.4-8.5-1.1-2.6-1.2-1.7-2.9-2.8-5.2-4.3-3.4-4.3-1.6-1.4-1.4-0.9-7.8-3.4-7.9-5.7-7.1-3.6-13.6-7.8-4.9-2.1-6.8-2.1-3.2-1.4-8.5-4.3-7.1-4.9-2.9-0.7-7.1-0.7-7.1-2-1.5-0.2-2.8 0.3-2.8 1.2-8.6 5.4-7.1 5.1-5.7 2.9-2.9 1-5.7 0.8-2.8 0-4.3-0.6-1.4 0.1-7.1 2.7-7.1 0.9-1.5 0.6-5.8 3.7-7 3.7-8.5 4.9-1.7 1.4-5.4 6.6-3.5 4.8-3.7 6.3-7.1 8.2-1.4 2.6-2.2 5.7-0.9 1.4-6.9 8.7-2.6 5.5-3.9 5.7-0.7 1.5-0.9 2.8-0.4 4.3 0.6 15.7-0.6 9.9 1 11.4-0.2 10 0.2 2.8 1.3 4.3 3.1 5.7 1.5 4.3 1.4 9.9-0.3 8.6 0.2 2.8 2.4 8.6 1.1 8.5 1.1 2.5 1.8 1.8 5.3 3.1 2.9 2.2 4.6 6.1 2.6 2.8 4.2 3.8 5.6 4.3 4.8 4.8 3 4.2 2.2 6.1 1.4 2.8 3.7 5.4 3.5 3.4 1.4 0.8 1.4 0.5 4.3 0.6 1.4 0.6 10 8 2.8 1.4 4.3 1.1 2.8 0.5 7.2-0.7 7.1 0.2 11.4 3.4 5.7 3M365.6 473.8l3.9 1 2.8-0.2 1.5-0.4 2.8-1.6 2.9-2.3 2.8-1.4 4.3-1.1 8.5-1.8 5.7-2.5 2.9-0.9 7.1-1 2.8-0.9 8.6-3.7 8.5-4.6 2.9-1 4.3-0.8 2.8-1 5.7-5.4 4.3-2.8 5.7-4.7 3.9-4.2 0.9-1.4 2.3-5 4-5 3.1-4.9 5.8-10.7 3.1-7.2 4.5-5.7 0.5-1.4 1.1-7.1 2.6-8.6 2-12.8 0.3-2.8-1-10-2.6-7.1-0.7-2.9-0.1-2.8 1-7.1-0.4-2.9-0.9-2.8-7-15.7-0.7-2.8-0.3-7.2-0.7-2.8-1.1-2.9-1.6-2.8-5.7-8.5-5.2-11.3-4.7-7.3-5.3-4.9-2.8-3.4-1.5-1.2-12.8-6.7-7.1-2-1.4-0.6-1.5-1.1-4.7-5.7-6.6-5.2-3-1.9-4.2-1.7-5.6-1.2-2.9-1-10-4.6-2.8-1.1-10-2.7-2.8-0.5-4.3-0.3-4.3 0.2-7.1 1-1.4 0.5-2.9 1.4-7.1 5-4.3 2.1-4.2 1.2-5.7 0.8-8.6 1.9-11.3 3.3-5.8 2.2-5.7 3.1-5.7 2.2-2.8 1.6-4.3 2.9-6.5 6.5-2.3 2.8-1.6 2.9-2.3 5.7-1.5 2.8-5.7 7.4-4.3 10-1.4 1.8-4.1 3.6-1.1 1.4-3.1 5.7-4.2 5.7-1.1 2.9-0.2 2.8 0.3 8.6 1.1 5.7 0.4 4.2-0.1 4.3-0.9 5.7-0.5 5.7 0.2 7.1 2.2 10 3 5.7 1.7 5.7 1.6 11.4 0.1 5.7 0.3 4.2 2 8.6 0.6 5.7 0.5 1.4 0.9 1.4 1.7 1.5 4.4 3 2.8 2.5 8.7 10.1 1.4 1.4 5.6 4.5 9.4 9.8 1.8 2.8 1.6 4.1 0.9 1.6 2 2.5 1.4 1.2 2.8 1.7 5.7 1.7 1.5 0.9 1.4 1.2 2.8 3.8 2.9 2.2 4.2 2.1 5.7 2.1 11.4 0.4 8.6-0.3 7.1 0.4 2.9 0.8 4.6 2.1M362.8 465.3l3.8 0.8 5.7-0.4 5.7-2.1 7.2-1.1 6.3-1.5 9.3-4.2 2.9-0.6 4.2-0.3 2.9-0.7 5.7-3.3 5.9-2.3 6.1-2.8 3.7-2.4 5.7-4.8 8.5-3.7 2.8-1.7 1.5-1.1 1.8-2 2.1-2.9 5.7-8.5 0.8-1.4 2.4-6 4.3-7.7 2.8-7.3 5.1-10.4 1.5-4.2 3.7-8.6 1.7-5.7 0.7-5.7-0.6-11.4-1.6-9.9-0.4-5.7 0.4-5.7-0.7-4.3-1-2.8-5.7-12.9-0.6-2.8-1.1-8.6-1-2.8-4.6-8.5-3.9-5.7-3.5-7.2-5.5-8-1.4-1.3-4.3-2.9-5.8-4.9-5.6-3.9-2.8-1.3-5.7-1.7-2.9-1.3-1.4-1-2.2-2.1-3.3-4.3-2.7-2.9-3.2-2.8-2.8-1.8-2.9-1-5.7-1.5-16.1-5.7-5.2-1.6-4.3-0.6-11.4-0.8-2.8 0.1-2.9 0.6-2.8 1.2-7.2 4.1-2.8 1.4-12.8 3.4-17.1 6.7-11.4 6.1-5.7 1.2-1.4 0.5-5.7 3.6-2.9 2.6-2.8 3.5-2.9 4.4-4.2 9.1-4.4 7.2-3.2 7.1-6.7 8.2-4.3 8.7-2.8 3.1-1.1 1.4-0.6 1.4-0.3 1.4-0.6 7.2 0.4 2.8 1.4 5.7 0.2 4.3-0.5 4.2-2 7.2-0.4 2.8 0.2 2.9 0.7 2.8 2.1 7.1 2.4 5.7 0.7 2.9 3.1 22.3 1.2 6.2 3.5 11.4 1.7 2.8 1.2 1.4 7.3 7.1 4.8 5.7 5.9 5.8 4.9 5.6 6.7 5.7 2.3 2.9 3.2 4.8 2.1 2.3 3.6 2.5 6.1 3.2 5.3 3.9 2.8 1.1 5.7 1.6 5.7 2.2 2.9 0.7 2.8 0.3 4.3-0.1 8.6-1.6 2.8 0.3 4.7 1.6M346.4 459.6l3.2-0.5 4.2-1.8 2.9-0.7 2.8 0 7.1 2.1 2.9 0 18.5-3.3 2.9-1.4 4.2-2.7 3.4-1.7 3.8-1.3 5.6-1.1 2.9-0.8 10-4.7 7.1-2.4 2.8-1.8 4.3-3.4 2.9-1.9 5.7-2.1 2.8-1.6 2.8-3.1 5.2-8.6 1.8-4.2 3.1-10 4.3-7.1 2.3-8.6 3.2-7.1 2.8-8.5 0.4-2.9-0.2-4.2 0.4-4.3 0.5-2.9 2-7.1 0.6-10 0-8.5-0.3-2.8-0.3-1.5-4.1-9.9-2.8-5.7-1.8-5.7-2.7-7.2-4.4-8.1-2.3-3.2-0.7-1.5-1.5-5.7-4.5-7.1-2.4-2.1-4.2-2.2-2-1.4-5.2-5.8-2.8-2.5-5.7-2.5-7-4.9-7.3-7-5.7-4.5-2.6-1.3-11.6-4.2-7.1-2.1-7.1-2.7-2.9-0.7-4.3-0.7-7.1-0.5-2.8 0.3-1.4 0.4-14.3 5.6-14.2 4.8-8.6 3.9-10.7 5.9-2.2 1.4-4.2 3.4-2.8 1.1-5.7 1.6-4.3 2.7-4.3 3.6-1.4 1.4-1.4 1.9-3.3 8.5-7.1 14.3-2 2.8-4.7 4.3-1.4 1.9-1.1 2.4-1.1 4.2-0.7 1.4-3.3 4.3-0.5 1.5-1.3 7.1 0 1.4 0.9 5.7 0.2 7.1-2.1 11.4 0.1 4.3 1.2 5.7 2.1 7.1 0.9 4.3 0.8 5.7 0.5 5.7 0.5 2.6 3.3 8.8 0.7 2.8 0.6 4.3 0.7 2.8 3 7.2 2 2.8 5.5 5.7 4.2 5.7 5.7 5.7 4.7 5.7 6.5 5.7 5.9 6.5 4.2 4.2 2.9 1.8 7.1 3.6 5.7 2.5 10 2.9 8.2 1.3M335.3 452.5l2.9 0.7 1.4 0.2 7.1-0.1 1.4-0.4 7.2-3.7 2.8-0.8 1.4-0.1 2.9 0.5 4.2 1.6 2.9 0.7 4.3 0.3 2.8-0.6 14.3-4.7 5.3-2.2 4.6-2.4 7.1-1.7 5.7-3.4 7.2-3.7 7.1-1.9 7.1-4.1 5.7-1.9 1.6-0.8 1.3-1.1 1.4-1.9 3.9-7 2.8-5.7 0.9-2.8 0.7-4.3 0.5-1.4 3.4-7.2 3.4-10.7 4.3-9.3 0.7-2.7 1.2-10 2.4-8.6 0.8-12.8-0.2-4.3-0.9-4.2-4-10.5-3.3-6.6-2.5-7.1-2.3-5.7-2.2-4.3-3.9-4.7-1.6-2.4-0.9-2.9-0.9-4.2-0.9-1.9-1.4-2-1.9-1.8-5.2-3.9-5.7-5.5-2.9-2-4.3-2.5-2.8-2.1-2.9-2.6-5.7-5.9-7.1-5.4-2.8-1.6-8.6-3.4-7.1-1.9-8.5-3.2-7.2-1.5-7.1-0.4-4.2 0.7-5.7 2.1-5.7 3.6-4.3 2-2.9 0.8-7.1 1.2-5.7 2.3-4.3 1.3-1.7 0.8-2 1.4-4.8 5.1-1.4 1.1-4.3 2.4-5.7 3.8-8.5 3.2-2.9 1.8-1.1 1.1-0.9 1.5-3 7.1-5.6 10-3.6 8.8-3.4 5.4-2.7 5.7-3.9 5.7-1.1 2.8-1.6 7.2-0.3 2.8 0 7.1-0.5 10-1 8.5 0.3 4.3 2.3 10 1.7 11.4 3.1 6.6 1.2 3.3 0.8 2.9 1.2 7.1 2.5 5.7 2.8 4.3 15.7 18.4 2.8 3 6.1 5.6 3.9 4.8 2.4 2.4 3.3 2.4 4.3 2.3 15.6 6.7M339.1 448.2l3.3-0.5 7.2-3.5 8.5-2.1 4.3-0.3 7.1 0.3 5.7 1.1 2.8 0.2 11.4-2.3 2.9-1.1 7.1-3.9 4.3-1.2 2.4-1 9.9-5.7 13.3-5.2 9-4.7 2.2-1.5 1.4-1.4 1-1.4 3.9-7.1 0.8-2.9 0.8-4.2 0.8-2.9 4.3-9.9 3.6-11.5 2.7-5.6 0.6-2.9 0.7-8.5 1.9-7.2 0.8-9.9-0.3-4.9-0.7-2.3-2.9-5.6-2.7-7.2-0.8-2.8-1.4-7.1-0.9-2.9-4.8-10-6.1-8.5-7.3-11.4-7-7.1-8.5-5.7-2.5-1.9-2.3-2.4-3.2-4.3-1.6-1.3-4.9-2.9-6.1-4.3-3.2-1.5-2.9-0.8-8.5-0.9-2.9-1-5.7-2.7-4.3-1.4-2.8-0.6-5.7-0.1-4.3 0.9-2.8 1.8-4.3 3.8-4.8 2.5-3.7 1.4-5.7 1.3-5.7 1.9-4.3 0.5-2.9 0.8-2.8 2.1-4.6 4.8-5.4 3.7-2.8 2.4-2.9 1.6-4.2 1.6-1.5 0.7-1.4 1.3-1 1.5-2.6 4.3-3.1 4.3-5.6 8.5-1.1 2.9-1.5 5.7-3.8 8.5-1.2 2.2-2.9 3.5-1.8 2.9-1.7 5.7-0.9 4.2-0.1 8.6-1.3 7.1-0.9 7.1-0.3 2.9 0.3 2.8 3 8.6 1.3 8.5 1.1 4.3 2.7 8.5 2.1 5.7 1.6 5.7 2 4.3 4.3 5.8 6.4 7 5 7.6 3.8 3.8 6.2 5.6 4.3 5 1.4 1.1 4.3 2.4 2.8 1.2 4.3 1.4 7.1 4.7 2.8 1.1 2.4 0.3M336 441.1l2.2 0.7 2.8-0.2 7.1-3.1 2.9-0.9 11.4-1.9 9.9-0.6 2.9 0.2 5.7 0.9 2.8 0.1 5.7-1.1 14.3-5.8 8.5-5.2 5.7-2.3 5.7-3.1 4.6-2 4.5-2.8 3.5-2.8 1.1-1.5 3.7-7.1 2.6-5.8 2.3-7 3.6-8.6 1.9-8.5 3.1-7.1 2.3-11.4 0.6-5.7 0.1-4.3-1.1-7.1-1-2.9-2.7-4.2-0.6-1.4-2.3-11.4-3.4-9-2.5-8.1-2.3-4.3-2.9-4.3-5.7-5.7-3.2-4.2-1.9-2.2-5.7-3.9-4.3-3.7-5.7-4.5-7.1-6.9-8.4-5.9-3-1.1-5.7-0.3-1.4-0.3-8.6-3.1-7.1-3.8-2.8-0.9-2.9 0-3.6 1-2.1 1.1-4.2 3.3-2.9 1.5-15.7 6.1-7.1 1.9-2.8 1.2-2.9 2-5.7 5.3-9.9 6.6-2.9 2.2-12.7 15.7-0.9 1.5-0.7 1.4-1.8 7.1-5.3 11.2-3.7 5.9-1.1 2.9-1 4.2-0.3 2.9-0.1 7.1-2.2 10-0.1 4.2 0.6 2.9 2.9 8.5 0.5 2.9 0.5 7.1 1.6 7.1 1 2.9 2.8 5.7 3.3 8.5 8.5 11.4 6.3 10 4.8 5.3 8.5 6.9 2.9 2 4.2 2.3 5.7 2 6.4 4.3M338.2 432.5l2.8 0.6 2.9 0.1 5.7-1.4 11.4-1.9 7.1-0.1 7.1-0.6 10 0.3 2.8-0.2 2.9-0.5 2.8-0.9 10-4.4 10.5-5.2 10.1-5.7 1.9-1.4 1.3-1.5 4-5.7 3.3-5.7 4.7-7.1 0.9-2.8 1.1-7.2 2.9-9.9 4.3-10 0.9-2.8 0.6-2.9 1-8.5-0.4-4.3-4.6-11.4-1.3-11.4-2.8-7.1-2.6-10-1.7-4.3-2.6-4.2-6.3-5.7-5.3-5.5-7.1-5.8-5.7-4.3-4.4-2.9-4.1-3.3-5.7-3.6-4.1-3.1-3.1-1.1-5.7-0.9-5.7-1.5-9.9-4.4-1.5-0.2-1.4 0.2-7.1 3.2-8.5 2.3-2.9 1-7.1 3.5-10 3.6-2.8 1.6-2.9 1.9-4.2 3.8-11.4 8.8-2.2 2.4-3.7 5.7-4.1 5-1.4 2.1-2.8 7.1-3.1 7.2-5 9.9-2.4 8.6-0.7 12.8-1.5 8.5 0.3 2.9 2.3 8.5 2.4 12.8 7.3 18.6 4.2 5.7 3.2 5.3 4.3 6.5 3.7 5.2 2.6 2.9 9.4 7.1 4.2 2.6 5.7 2.1 7.2 1M333.6 425.4l8.8 1.2 5.7-0.8 7.2-0.6 7.1-1.2 11.4-0.3 5.7 0.4 2.8 0 5.7-0.9 10-3.1 7.1-3.7 5.7-1.9 2.8-1.3 7.2-4.9 1.4-1.4 1-1.4 2.8-5.7 7-10 1.4-2.9 3.4-11.4 1.5-7.2 3.4-8.4 0.7-2.9 0-1.4-0.4-5.7 0-10-2.1-7.1-0.5-5.7-0.6-2.8-1.1-2.9-2.2-4.2-0.9-2.9-1-8.5-0.8-2.9-1.3-2.8-1.8-2.5-5.7-4.9-4.6-5.4-2.9-2.9-3.9-2.8-9.9-6-10-7.3-4.3-2.4-1.4-0.4-5.7-0.7-8.5-3.3-4.3-1-2.9-0.1-9.9 1.1-4.3 0.7-2.8 0.9-2.7 1.4-4 2.8-1.9 1.1-7.1 2.5-7.1 2.9-2.9 1.5-4.4 3.4-4.5 4.3-2.4 2.8-5 7.1-5.1 5.7-2.4 4.3-4.7 11.4-3.5 7.1-3.8 17.1-1.3 11.4-0.1 2.9 0.6 2.8 4.6 17.1 6.3 18.5 1.6 2.9 5.5 8.5 5.2 7.1 3.5 4.2 4.2 4.3 2.9 2 5.7 2.4 4.2 2.1 2.6 0.7M338.2 419.7l2.8 0.8 2.9 0.2 7.1-1 7.1 0 10-0.4 5.7-0.6 7.1-0.2 4.3-0.4 2.8-0.7 8.6-2.8 5.7-3.7 2.8-1.3 7.1-2.7 1.8-1.4 1.1-1.5 3.6-5.7 7.5-8.5 3-4.3 1.2-2.8 0.9-4.3 2-5.7 2.4-10 0.7-4.2-0.2-8.6 0.8-7.1-0.4-2.9-2.6-7.1-1-7.1-3.2-7.1-0.8-5.7-0.8-2.9-2.5-5.7-1.7-2.8-12.2-14.2-10.8-7.2-5.5-4.2-3.2-2-2.9-1.4-7.1-1.7-5.7-2.5-2.8-0.8-2.9-0.6-2.8-0.3-10 0.3-4.3 0.9-4.2 1.9-5.7 3.4-5.7 2.1-7.2 3.4-5.7 2.1-2.8 2-4.3 4.6-4.8 7.1-6.6 6.8-2.9 4.6-2.5 5.7-3.4 9.9-1.4 8.6-2.7 7.1-0.8 2.8-1.2 10 0 2.9 0.5 2.8 2.6 8.6 2.5 9.9 1.7 5.7 3.4 9 1.2 2.4 8.7 10.5 4.3 6.1 4.3 3.9 2.8 2.1 7.1 3.8 1.6 0.7 5.6 1.4M352.7 414l6.8 0.9 4.3 0 5.7-0.5 8.5-2.4 1.5-0.1 5.7 0.6 1.4-0.3 2.6-1 7.4-4 9.1-6 4.2-5.7 1.9-1.4 5.1-2.9 2.4-2.2 2.9-3.2 1.8-3.1 1.6-7.2 2.9-5.6 1.1-4.3 0.2-8.6 0.6-7.1-0.4-8.5-2.8-8.6-1.5-7.1-2.3-5.7-1.5-10-1.1-3-11.4-13.5-3.3-3.4-3.8-3.1-12.9-8-8.5-2.8-5.7-2.3-5.7-1.2-1.4 0-5.7 0.8-5.7-0.1-4.3 1.1-11.4 4.9-5.7 3.1-7.1 3-2.7 1.8-1.6 1.4-2.4 2.8-4.3 5.7-6.6 7.1-1.8 2.9-1.5 2.8-1.1 2.9-1.9 7.1-0.9 7.1-0.6 2.9-2.8 7.1-1.8 5.7-0.6 2.8-0.2 4.3 0.7 8.6 3.9 15.6 1.4 4.3 1.9 4.3 4.5 7.1 7 8 8.5 7.9 2.9 2.1 14.2 5.3 10.3 0.9M359.7 409.7l4.1 0.3 4.3-0.8 9.9-3.6 7.2-1.3 4.2-1.2 2.9-1.2 2.8-1.8 7.2-5.8 6.3-7.4 5-3.2 2.5-2.5 0.9-1.4 0.9-2.5 1.2-6 3.2-5.7 0.8-2.9 0.8-4.2-0.1-2.9-1.7-15.7-0.8-2.8-2.1-5.7-1.3-5.9-2-5.5-0.4-8.5-0.5-1.5-0.9-1.4-3.9-5.7-3.6-4.3-2.9-3-4.3-3.4-3.5-2.1-16.4-8-4.3-1.5-4.3-0.7-4.3 0-9.9 0.8-2.9 0.3-2.8 0.7-7.1 3.2-7.2 3.8-5.7 1.7-1.9 1.1-3.8 3.4-8.5 9.4-3.9 7.2-3.6 11.4-2.2 8.5-3.1 10-0.8 2.8-0.4 2.9 0.2 4.2-0.3 7.2 0.4 2.8 5.5 15.7 5.4 8.9 1.8 2.5 2.4 2.2 5.7 4.2 4.3 4.4 1.4 1.2 7.1 3.8 4.3 1.7 7.1 1.9 2.9 0.5 4.3 0.3 4.4 1.1M358.1 402.6l2.9 0.8 1.4 0.2 2.8 0 2.9-0.4 2.8-1.1 8.6-4.9 1.4-0.5 4.3-0.6 1.9-0.6 2.3-1.4 1.5-1.2 5.7-5.4 4.2-2.7 2.7-2.1 2.7-2.9 2.4-4.3 2.4-7.1 3.1-7.1 1.8-7.1 0.4-2.9-0.2-2.8-3.2-14.3-1.6-5.6-2.2-5.7-1.2-8.6-2.7-7.1-2.9-4.3-3-2.8-14.1-7.8-2.9-1.2-7.1-1.8-4.3-1.6-2.8-0.5-8.6 0.3-2.8 0.3-10 2.9-4.3 1.8-4.2 2.3-11.8 8.1-2.5 2.7-2.8 3.6-2.7 5.1-3.8 10-1.3 5.7-4 11.4-0.6 2.8-0.1 5.7-0.7 5.7-0.1 1.4 0.5 2.5 2.2 6.1 3.8 8.5 1.5 2.9 2.4 3.2 2.9 2.8 5.7 4.3 5.7 6.9 1.6 1.3 2.3 1.4 3.2 1.5 4.3 1.4 4.2 0.9 5.7 0.4 4.3 1.5M365.1 395.5l1.5-0.1 1.5-0.5 1.4-0.9 3.3-2.8 2.4-1.4 2.8-0.9 4.3-0.3 1.4-0.4 1.5-0.9 5.4-4.6 6-3.7 2.3-2 2-2.9 2.9-7.1 0.7-2.8 0.9-5.7 1.8-5.7 0.2-2.9-0.3-2.8-1.1-5.7-0.6-5.7-2.2-7.1-0.3-8.6-0.4-2.8-1.5-2.9-3-4.3-2.9-2.9-7.1-5-2.8-1.5-4.7-2-3.9-0.9-5.7-0.1-5.7-1.7-5.7-0.2-7.1 0.7-2.8 0.5-7.2 3-4.2 2.5-6.4 4.8-1.5 1.4-2.1 2.6-4.3 6.2-3.3 6.9-1.4 5.7-2.5 7.1-1 4.3-1.1 11.4 0.1 2.8 0.6 4.3 1.3 4.3 1.6 3.5 2.9 5.2 1.4 1.7 4.7 3.8 8.1 7.9 2.9 2 2.8 1.4 10 1.7 5.7 1.4 7.1 2.4 1.3 0.3M355.3 382.7l2.8 0.4 1.4-0.2 2.9-0.8 4.2-1.9 2.9-0.9 2.8-0.5 5.7-0.6 1.5-0.4 5.6-3.7 7.2-3.2 2.8-2.7 1.8-2.6 1.1-2.5 2.1-8.9-0.2-8.6-0.9-8.5-1.6-7.1-0.5-5.7-0.6-2.9-1.6-4.2-2.4-3.4-2.6-2.3-3.1-2.3-4.3-2.1-2.8-0.8-2.9-0.4-8.5 0.5-7.1-1.8-4.3-0.3-2.9 0.4-4.9 2.5-5 1.9-2.9 1.5-2.8 1.9-3.8 3.2-3.4 5.3-4.2 5.7-2.7 6.1-2.3 7.1-0.5 4.3 0.1 11.4 0.7 2.9 1.4 2.8 4.7 6.9 1.4 1.7 4.8 4.2 8 4.8 2.9 1 6.1 1.3 3.9 1.5M356.2 372.7l3.3 1.1 1.5 0.3 1.4-0.2 5.7-2.2 6.6-1.8 7.6-4.3 1.4-1.1 2.9-2.5 3.3-2.1 1-0.9 1.1-2 0.5-2.8-0.1-5.7 0.4-4.3-0.4-5.7-0.1-5.7-0.6-2.8-2.3-8-1.4-3.4-1.2-1.4-1.6-1.4-4.3-2.2-2.9-0.9-2.8-0.3-7.1 1.1-2.9-0.1-9.9-1.2-2.9 0.2-2.8 0.7-2.5 1.2-2.3 1.4-3.8 3.1-1.4 1.5-4.3 6.1-4 5-1.7 2.9-1.4 4.2-0.4 2.9 0.4 4.2 0 6.1 0.6 2.5 0.8 1.6 2.9 3.2 7.1 6.4 4.3 4.2 1.4 1.1 1.4 0.8 2.9 0.8 4.2 0 2.4 0.4M354.4 362.7l6.6 0.5 2.8 0 2.8-0.5 4.2-1.4 3-1.4 1.4-1.1 5.7-5.2 1.4-1.7 0.9-2 0.4-2.8 0.5-11.4-0.2-1.5-3.5-8.5-0.9-1.5-1.5-1.2-8.6-3-2.8-0.6-7.1 0.1-5.7-0.3-1.4 0.1-1.9 0.7-2.4 1.6-4.1 4.1-3 4-2.9 6-0.9 2.8 0 1.4 1.2 4.3 0.5 4.3 4.7 8.5 2.6 2.9 1.9 1.3 1.5 0.6 4.8 0.9M356.7 351.3l1.4 0.9 1.4 0.4 1.5 0 2.8-1 6.3-3.1 1.3-1.4 0.7-2.9 0.4-4.3 0-2.8-0.4-2.9-1.2-2.2-1.4-1.3-2.9-1.3-4.2-1.7-2.9-0.7-2.8 0.2-2.1 1.4-1.1 1.4-2.2 4.2-0.8 2.9 0 1.4 0.8 2.9 2.3 4.2 1.7 3.9 1.4 1.8"/></g><path d="M360.5 336.7l8.4 8.4M360.5 345.1l8.4 -8.4" stroke="#f00" stroke-width="1.6" fill="none"/><rect x="141.4" y="109.4" width="486.1" height="485.7" fill="none" stroke="#000" stroke-width="1.1"/><path d="M141.6 595.1v4.9M236.6 595.1v4.9M331.5 595.1v4.9M426.5 595.1v4.9M521.4 595.1v4.9M616.3 595.1v4.9M141.4 594.9h-4.9M141.4 499.9h-4.9M141.4 405.0h-4.9M141.4 310.0h-4.9M141.4 215.1h-4.9M141.4 120.2h-4.9" stroke="#000" stroke-width="1.1" fill="none"/><text x="141.6" y="615.5" text-anchor="middle">0</text><text x="236.6" y="615.5" text-anchor="middle">200</text><text x="331.5" y="615.5" text-anchor="middle">400</text><text x="426.5" y="615.5" text-anchor="middle">600</text><text x="521.4" y="615.5" text-anchor="middle">800</text><text x="616.3" y="615.5" text-anchor="middle">1000</text><text x="131.7" y="600.0" text-anchor="end">0</text><text x="131.7" y="505.0" text-anchor="end">200</text><text x="131.7" y="410.1" text-anchor="end">400</text><text x="131.7" y="315.1" text-anchor="end">600</text><text x="131.7" y="220.2" text-anchor="end">800</text><text x="131.7" y="125.3" text-anchor="end">1000</text><text x="384.5" y="100.8" text-anchor="middle" font-size="16.67px">H1:ITMY 1443878950</text><defs><linearGradient id="cbitmy" x1="0" y1="0" x2="0" y2="1"><stop offset="0.0000" stop-color="#fde725"/><stop offset="0.0312" stop-color="#ece51b"/><stop offset="0.0625" stop-color="#d8e219"/><stop offset="0.0938" stop-color="#c2df23"/><stop offset="0.1250" stop-color="#addc30"/><stop offset="0.1562" stop-color="#98d83e"/><stop offset="0.1875" stop-color="#84d44b"/><stop offset="0.2188" stop-color="#70cf57"/><stop offset="0.2500" stop-color="#5ec962"/><stop offset="0.2812" stop-color="#4ec36b"/><stop offset="0.3125" stop-color="#3fbc73"/><stop offset="0.3438" stop-color="#32b67a"/><stop offset="0.3750" stop-color="#28ae80"/><stop offset="0.4062" stop-color="#22a785"/><stop offset="0.4375" stop-color="#1fa088"/><stop offset="0.4688" stop-color="#1f988b"/><stop offset="0.5000" stop-color="#21918c"/><stop offset="0.5312" stop-color="#23898e"/><stop offset="0.5625" stop-color="#26828e"/><stop offset="0.5938" stop-color="#297a8e"/><stop offset="0.6250" stop-color="#2c728e"/><stop offset="0.6562" stop-color="#2f6b8e"/><stop offset="0.6875" stop-color="#33638d"/><stop offset="0.7188" stop-color="#375b8d"/><stop offset="0.7500" stop-color="#3b528b"/><stop offset="0.7812" stop-color="#3e4989"/><stop offset="0.8125" stop-color="#424086"/><stop offset="0.8438" stop-color="#453781"/><stop offset="0.8750" stop-color="#472d7b"/><stop offset="0.9062" stop-color="#482374"/><stop offset="0.9375" stop-color="#48186a"/><stop offset="0.9688" stop-color="#470d60"/><stop offset="1.0000" stop-color="#440154"/></linearGradient></defs><rect x="632.4" y="109.4" width="24.2" height="485.7" fill="url(#cbitmy)" stroke="#000" stroke-width="1.1"/><text x="666.3" y="114.5">0</text><text x="666.3" y="196.6">−10</text><text x="666.3" y="278.7">−20</text><text x="666.3" y="360.8">−30</text><text x="666.3" y="442.8">−40</text><text x="666.3" y="524.9">−50</text><path d="M656.6 109.4h4.9M656.6 191.5h4.9M656.6 273.6h4.9M656.6 355.7h4.9M656.6 437.7h4.9M656.6 519.8h4.9" stroke="#000" stroke-width="1.1" fill="none"/><text transform="translate(710.8 352.3) rotate(-90)" text-anchor="middle">Optical density [nm]</text><path d="M937.2 581.4L937.7 581.0M974.8 579.8L976.7 578.0M992.6 582.8L994.5 581.2M1010.5 581.4L1010.8 581.0M1029.8 582.0L1030.8 579.5M1050.1 580.0L1050.1 579.7M1064.0 580.5L1063.7 577.1M1084.9 581.3L1083.9 575.9M1105.5 581.6L1104.9 580.3M910.4 564.7L914.5 561.7M929.5 564.6L929.9 563.0M945.1 565.3L947.1 562.2M963.5 565.6L966.0 553.5M982.4 565.9L983.9 562.0M1001.0 565.4L1002.1 560.2M1022.3 567.1L1022.5 566.3M1038.4 565.2L1039.5 560.8M1057.9 567.3L1057.7 562.0M1075.1 564.0L1075.1 563.4M1093.7 564.7L1093.5 564.0M1113.0 566.2L1112.7 565.7M1131.2 563.3L1130.9 562.8M1151.1 563.6L1150.6 563.1M899.0 550.6L901.0 547.9M918.0 547.5L918.1 546.8M937.2 549.1L937.6 547.4M955.1 550.5L955.7 549.1M971.8 548.1L973.3 545.1M993.9 549.3L994.0 548.9M1011.6 547.6L1011.9 546.4M1029.9 549.1L1029.9 548.8M1048.2 549.4L1047.1 546.0M1066.0 549.1L1062.5 558.6M1086.5 548.5L1085.2 546.9M1103.9 550.0L1103.4 549.3M1122.6 550.3L1121.3 546.2M1140.1 549.0L1138.2 547.0M1160.7 549.2L1160.2 548.7M891.1 534.1L891.3 533.5M907.7 531.7L908.0 531.2M930.1 532.9L933.6 526.6M944.9 532.2L948.1 527.2M965.4 530.5L967.3 525.0M982.6 534.1L984.4 529.6M1002.5 533.4L1002.9 530.5M1020.7 533.0L1013.8 531.2M1038.2 533.5L1038.9 531.7M1057.3 533.2L1056.6 527.4M1075.3 534.3L1075.4 533.6M1094.2 533.6L1094.1 533.0M1114.4 533.4L1114.0 532.2M1131.6 532.3L1130.1 530.7M1148.2 534.3L1146.3 532.3M1169.9 534.8L1166.8 530.3M881.9 518.7L882.5 518.3M899.6 517.3L898.5 516.4M919.0 520.0L919.6 520.1M953.1 516.8L954.1 513.5M972.9 516.5L972.8 515.9M996.0 515.1L996.1 514.4M1012.2 516.3L1013.4 509.9M1030.6 517.8L1030.6 510.3M1046.3 516.3L1046.2 515.6M1065.1 519.0L1064.2 515.7M1086.1 517.1L1086.0 513.7M1103.9 515.5L1100.5 513.7M1122.5 515.5L1117.1 506.9M1140.6 516.5L1137.5 513.1M1157.8 517.2L1156.6 515.2M1178.2 516.9L1177.9 516.5M1197.4 518.3L1196.7 516.8M872.2 500.5L877.9 496.2M890.8 501.1L891.6 500.5M928.4 497.3L929.0 494.3M944.3 501.1L945.0 498.9M964.4 500.3L964.5 499.6M982.8 499.7L984.1 495.5M1020.0 501.8L1020.5 493.2M1040.5 501.3L1039.9 497.4M1057.6 501.3L1057.8 491.4M1077.0 500.7L1073.3 495.3M1094.4 499.1L1093.6 496.3M1114.0 500.3L1113.5 499.1M1129.9 499.8L1123.3 494.2M1148.0 500.6L1146.8 498.3M1168.3 504.1L1166.7 502.2M1205.9 502.5L1205.0 501.7M863.0 485.2L864.1 484.7M882.6 485.1L883.1 484.8M901.3 483.2L904.9 477.9M918.7 486.4L919.8 483.2M955.6 485.5L955.9 482.4M993.2 485.3L986.4 491.9M1010.8 485.0L1009.8 480.5M1028.7 486.5L1028.1 480.6M1045.6 483.7L1041.0 473.7M1066.5 485.1L1067.4 471.8M1086.1 484.5L1084.3 481.1M1119.8 483.4L1118.5 481.8M1141.2 484.9L1140.4 483.4M1160.9 487.2L1156.6 483.0M1177.7 484.7L1177.4 484.2M1195.9 482.4L1195.5 481.9M1216.7 484.2L1213.4 476.0M1232.4 485.4L1231.3 484.1M856.1 468.9L858.2 467.8M874.9 470.0L876.3 468.0M890.0 469.8L892.2 468.0M910.2 469.7L915.2 465.1M926.7 469.5L930.2 466.0M947.0 467.7L945.9 462.0M964.6 468.1L965.7 459.7M981.9 468.3L983.5 462.6M999.8 470.9L999.4 471.4M1018.6 470.5L1016.7 464.6M1037.3 467.6L1035.9 463.4M1058.5 471.1L1057.8 468.2M1076.7 469.4L1070.0 462.0M1093.7 466.9L1092.1 462.5M1114.7 467.7L1110.4 460.4M1132.0 466.1L1130.8 462.7M1151.8 468.7L1145.8 463.1M1189.0 469.0L1187.7 466.3M1242.8 469.4L1242.5 469.2M844.3 452.4L851.4 449.6M865.0 454.4L865.7 454.2M883.9 454.0L901.9 434.8M900.4 453.0L922.8 428.7M915.8 450.7L918.8 445.6M952.5 453.2L952.7 445.6M974.6 451.7L974.1 449.5M991.8 454.0L991.3 450.7M1010.1 453.3L1009.3 461.9M1027.7 452.7L1025.1 447.1M1049.2 452.5L1049.4 444.6M1066.0 451.9L1064.1 448.0M1084.0 456.1L1081.7 452.0M1104.4 453.2L1104.6 449.8M1122.4 454.2L1118.5 450.5M1141.3 451.3L1140.1 449.2M1176.6 451.7L1173.7 448.7M1196.7 452.7L1191.2 445.3M1214.2 454.3L1213.7 454.1M1232.8 454.5L1230.6 450.8M1249.1 453.8L1248.7 453.5M833.8 436.1L839.4 431.5M854.7 435.2L856.4 434.8M873.4 436.0L883.9 433.4M891.8 437.6L893.3 436.5M909.6 437.0L915.7 429.0M928.7 437.9L930.9 434.1M947.9 437.3L954.3 424.4M964.8 437.6L965.9 432.5M983.5 437.1L988.2 450.0M999.4 436.6L992.8 423.1M1018.0 435.7L1014.1 419.8M1037.5 438.0L1034.8 434.8M1056.9 435.4L1053.4 430.9M1076.5 437.8L1073.9 435.0M1095.5 436.8L1088.1 428.4M1130.4 435.4L1126.3 427.1M1149.4 435.2L1148.7 433.7M1169.2 437.4L1166.8 432.9M1185.9 436.6L1184.0 434.3M1206.7 434.2L1202.5 425.4M1224.7 436.8L1223.8 436.1M1243.3 435.6L1240.9 432.4M1259.6 438.0L1257.6 436.4M825.0 420.3L825.8 420.5M845.8 419.9L847.8 419.4M863.3 423.1L864.6 423.3M882.1 419.7L885.9 417.5M897.9 422.4L898.4 422.2M920.1 420.0L920.5 419.3M934.5 418.9L940.0 409.4M955.5 420.9L956.2 414.4M973.3 419.7L982.8 396.4M991.4 420.2L995.2 402.6M1011.4 422.0L1012.0 412.6M1029.1 420.8L1027.5 417.5M1046.9 421.4L1042.7 416.4M1064.5 420.4L1057.2 407.2M1085.1 420.8L1077.9 414.1M1103.4 421.4L1095.1 411.4M1121.4 419.2L1119.9 411.6M1140.5 418.7L1136.5 413.8M1160.1 419.3L1154.9 414.0M1178.3 421.6L1175.7 419.7M1196.4 419.8L1192.3 413.9M1215.9 421.5L1214.5 420.3M1235.4 422.7L1232.1 418.4M1253.3 419.7L1254.3 420.1M1270.3 421.2L1266.3 420.1M816.4 405.7L817.0 405.7M835.2 404.5L840.7 403.2M851.6 407.3L858.1 405.2M871.4 403.0L881.0 401.4M890.3 404.6L900.6 400.1M907.8 402.2L913.4 396.7M927.4 406.8L927.8 406.0M945.5 404.4L948.4 398.5M962.1 404.9L962.6 404.2M984.6 404.4L989.4 385.4M1003.1 401.8L1003.2 401.3M1020.2 403.9L1016.1 397.2M1035.0 404.4L1031.5 398.5M1056.8 406.5L1052.4 402.2M1077.0 404.4L1071.4 401.8M1096.8 405.1L1094.4 401.1M1115.7 405.1L1106.9 398.8M1131.7 405.6L1127.6 403.3M1151.6 405.7L1148.4 396.9M1167.9 403.3L1164.4 398.4M1189.4 403.7L1188.8 403.4M1206.8 405.1L1205.6 404.2M1222.3 403.5L1215.9 399.2M1242.0 407.6L1241.5 407.3M1258.9 405.6L1258.3 405.4M1279.2 404.7L1276.7 405.1M826.8 386.8L830.8 385.6M844.0 388.2L847.5 388.1M862.9 389.2L871.0 390.6M880.7 388.8L896.8 387.8M898.4 387.8L900.6 387.2M920.7 387.3L926.2 385.3M938.2 388.1L945.9 382.3M957.8 391.0L963.6 383.6M974.0 386.1L971.2 386.1M991.5 387.6L992.3 382.3M1011.9 386.0L1011.3 381.7M1030.4 389.9L1028.9 388.2M1047.7 389.2L1045.0 384.3M1085.3 387.5L1076.9 382.5M1103.2 388.0L1093.6 382.8M1139.7 387.7L1137.8 386.8M1158.4 387.7L1153.5 384.6M1194.9 390.9L1192.4 389.2M1215.2 387.3L1211.5 385.0M1234.1 390.0L1221.4 383.5M1252.5 388.9L1254.6 385.4M1272.2 389.9L1269.2 389.1M813.5 370.7L822.3 370.9M835.0 372.9L837.1 373.2M854.4 373.2L858.6 373.5M871.1 371.4L875.9 369.9M891.8 372.1L904.1 371.0M908.1 372.4L917.8 369.2M930.6 375.3L939.4 373.5M947.2 372.5L957.2 367.9M966.4 372.2L971.0 368.0M983.5 373.3L985.5 370.7M999.5 373.7L1002.9 364.2M1018.3 371.7L1019.1 350.3M1038.1 374.3L1036.1 369.0M1056.4 372.3L1055.5 371.7M1074.9 371.2L1069.5 368.9M1096.6 370.6L1092.8 369.0M1114.7 374.7L1108.0 369.4M1130.8 375.0L1128.4 373.6M1147.5 373.3L1139.7 370.7M1167.9 373.2L1164.2 372.5M1188.8 372.7L1183.9 372.1M1206.5 373.4L1205.8 373.2M1224.5 370.6L1219.5 369.8M1241.0 373.8L1234.5 374.4M1280.9 374.7L1280.3 374.7M826.9 357.9L831.0 358.3M844.1 355.5L846.5 355.3M862.9 356.6L871.1 357.5M879.2 354.3L906.1 348.7M901.1 359.7L910.5 358.7M938.1 356.7L941.6 357.0M955.8 353.8L967.3 356.6M973.2 356.3L990.7 359.8M990.1 355.4L994.1 353.1M1010.6 358.0L1013.2 353.2M1029.5 356.8L1026.7 354.3M1048.4 354.5L1044.5 354.4M1065.8 356.5L1065.2 356.2M1085.7 357.9L1070.5 352.7M1102.1 357.2L1097.8 356.8M1123.8 355.8L1108.8 356.5M1140.5 357.5L1133.6 355.0M1158.1 355.9L1150.6 352.3M1177.5 357.2L1172.7 358.4M1197.9 356.2L1197.4 356.3M1213.6 357.5L1212.1 357.5M1234.2 358.4L1233.6 358.2M1249.8 354.7L1248.2 354.4M1269.3 355.5L1265.4 355.2M833.7 340.8L839.7 339.1M852.5 341.1L856.7 341.6M872.6 340.8L882.2 341.6M892.9 341.2L897.3 342.2M910.4 340.2L915.9 341.2M926.3 338.7L942.4 339.0M946.5 341.8L946.9 341.8M965.1 339.2L974.0 338.9M984.0 342.0L985.5 342.9M1000.5 339.7L1002.4 340.5M1020.9 342.8L1018.6 349.9M1039.1 339.4L1034.5 340.9M1054.4 336.7L1043.2 338.8M1091.6 338.8L1091.2 339.0M1113.6 340.3L1095.6 342.2M1130.0 340.7L1117.4 342.9M1150.5 338.7L1144.5 342.5M1168.9 343.2L1156.2 341.2M1187.6 340.0L1181.6 340.6M1204.6 340.1L1203.0 340.2M1223.4 341.8L1219.5 342.7M1259.0 337.1L1257.3 337.3M826.6 324.2L827.3 324.1M864.4 323.5L872.6 322.6M881.1 323.2L890.1 324.3M901.0 326.7L910.4 329.5M918.8 323.4L925.9 327.5M935.4 322.9L943.6 323.1M954.1 325.9L957.0 327.1M974.0 323.0L979.9 325.4M992.1 324.7L994.7 326.4M1013.7 325.6L1017.0 334.0M1029.6 326.9L1025.9 337.5M1050.3 323.0L1047.7 327.4M1063.1 322.3L1059.4 323.1M1083.1 324.1L1080.6 325.3M1104.1 324.0L1097.9 325.5M1122.8 323.1L1116.9 328.1M1140.1 327.3L1112.8 344.9M1160.0 325.8L1151.2 331.5M1177.1 324.2L1168.3 327.6M1196.8 323.8L1190.6 325.1M1214.4 322.4L1211.2 323.4M1231.0 323.7L1223.1 326.1M1272.6 323.4L1264.0 321.6M835.7 307.1L836.5 307.3M851.5 309.3L856.8 311.1M871.6 308.3L877.0 310.3M892.1 307.6L892.5 307.6M907.3 309.5L924.2 314.6M928.5 308.6L938.7 316.1M947.9 307.6L952.4 313.0M981.1 308.5L983.6 313.9M998.5 308.7L1003.2 325.3M1022.3 308.6L1021.4 312.0M1056.3 309.0L1055.5 309.7M1075.5 306.8L1072.1 313.5M1095.0 307.3L1089.9 312.0M1113.4 308.5L1113.1 308.8M1131.0 309.3L1115.5 320.7M1167.6 309.3L1166.0 310.6M1186.8 306.8L1185.3 298.8M1207.2 311.7L1205.1 312.3M1224.1 308.5L1223.6 308.8M1242.3 306.3L1241.1 307.0M1261.1 309.5L1260.4 309.8M845.9 292.3L854.4 291.1M864.2 291.1L866.9 291.9M880.5 293.9L886.5 294.3M900.8 291.6L915.3 299.3M918.2 294.0L926.3 302.9M938.0 292.7L940.0 294.8M954.7 291.5L959.7 296.0M971.9 290.7L959.3 284.7M994.2 289.0L996.8 302.2M1012.3 292.2L1012.2 294.9M1029.2 292.4L1025.6 300.4M1048.1 293.3L1040.5 304.8M1066.1 291.4L1061.2 299.7M1084.4 293.3L1079.0 296.4M1102.1 291.8L1095.2 300.9M1120.7 291.0L1111.8 300.4M1140.5 290.7L1135.4 295.3M1160.0 290.1L1154.7 294.5M1180.3 292.9L1173.2 296.2M1197.4 293.7L1188.4 296.2M1214.9 294.6L1214.4 295.1M1231.3 290.7L1228.5 292.8M1253.7 291.6L1247.7 295.6M834.8 275.5L842.8 275.6M853.1 275.6L855.4 276.2M871.1 279.0L876.0 280.4M893.1 275.7L895.5 278.4M908.1 277.9L910.9 282.1M927.8 277.4L928.0 278.0M945.5 277.0L948.2 285.4M966.4 275.8L967.0 282.1M982.7 275.5L984.1 281.8M1003.1 276.5L1000.3 284.6M1019.2 276.8L1016.9 286.0M1038.2 278.6L1037.8 279.6M1056.8 275.8L1048.5 281.5M1076.7 277.7L1074.5 282.1M1096.5 277.5L1089.3 284.8M1113.1 277.7L1110.5 281.0M1134.9 274.4L1133.5 276.5M1150.0 273.8L1143.0 281.0M1185.4 274.9L1182.9 275.5M1222.5 277.9L1221.0 278.8M1245.3 277.4L1244.1 278.2M1261.2 275.6L1257.0 275.7M861.1 260.0L872.5 265.2M881.0 259.4L884.3 261.7M900.3 261.3L904.0 267.0M919.2 260.7L927.8 270.7M936.1 258.8L942.5 267.2M954.0 260.2L954.9 266.2M973.6 259.7L972.8 271.4M988.1 259.9L986.2 268.0M1010.0 258.3L1008.4 263.7M1028.3 261.1L1025.0 271.0M1048.0 261.4L1047.5 261.9M1066.7 258.9L1060.2 267.9M1086.0 260.6L1086.6 260.6M1102.7 259.9L1092.4 266.0M1123.1 258.9L1122.4 261.2M1141.1 261.4L1134.2 250.3M1159.2 260.6L1150.4 270.7M1195.5 262.9L1194.8 263.6M1214.3 259.3L1213.8 259.5M1233.6 259.9L1233.4 260.1M1251.0 259.1L1246.7 261.0M854.2 244.2L854.6 244.1M871.6 246.2L875.2 247.4M888.8 244.5L894.7 247.7M907.9 245.7L908.4 245.9M927.5 241.9L928.8 247.4M947.6 241.8L948.2 255.9M965.0 243.1L961.5 259.2M983.9 244.5L982.6 249.5M1001.9 246.1L1000.0 261.7M1020.2 242.8L1019.3 245.9M1037.5 244.8L1032.5 251.4M1057.0 245.9L1052.5 254.3M1096.7 244.9L1093.3 247.8M1113.5 242.6L1111.7 248.5M1129.9 245.7L1126.7 251.7M1149.3 242.9L1144.5 252.9M1169.0 246.7L1167.1 248.0M1187.5 244.8L1185.8 246.6M1222.5 243.3L1219.4 246.0M1241.0 243.9L1237.9 246.3M843.9 230.6L844.5 230.7M863.8 228.0L865.7 228.6M879.4 228.3L882.2 231.3M901.2 227.7L905.9 230.5M920.3 229.6L924.7 237.1M936.8 228.3L942.8 237.5M953.2 227.2L955.0 237.1M972.8 225.9L969.3 238.0M992.9 226.8L992.5 232.0M1012.6 227.3L1009.5 237.7M1028.9 228.6L1028.2 247.5M1048.1 227.9L1044.8 235.6M1065.8 226.8L1065.0 233.3M1085.0 227.5L1083.7 233.8M1104.5 226.1L1101.9 229.9M1121.4 227.5L1119.6 233.6M1140.1 227.4L1136.6 232.2M1158.0 227.5L1156.5 230.4M1177.0 229.0L1174.0 233.9M1194.3 228.2L1193.7 229.4M1212.9 228.5L1212.0 229.9M1235.5 227.2L1230.3 230.2M854.3 214.1L859.7 219.4M873.4 212.4L877.8 219.5M891.4 212.9L896.9 216.8M907.5 213.1L911.3 221.1M927.8 212.8L931.5 217.6M946.4 211.0L948.4 215.1M967.1 213.8L967.5 221.9M984.9 214.1L986.8 223.4M1002.4 212.8L1001.9 215.9M1041.5 214.1L1033.9 226.7M1057.0 212.0L1056.0 215.3M1076.9 213.9L1076.4 216.9M1094.7 215.0L1090.6 227.6M1110.6 209.7L1107.0 219.6M1130.8 213.4L1127.0 218.0M1150.6 211.2L1147.9 214.7M1168.7 211.3L1165.8 215.4M1186.0 213.4L1181.4 219.3M1224.2 213.9L1221.5 216.9M861.7 196.6L862.0 197.0M880.7 198.2L882.2 199.8M901.9 194.5L908.4 200.3M916.7 196.2L926.9 211.3M937.2 196.5L941.2 239.3M956.3 196.3L957.6 200.2M973.4 195.8L974.0 201.6M990.2 196.7L991.6 204.2M1011.6 196.6L1011.6 201.2M1029.3 195.3L1028.6 199.8M1048.5 195.5L1044.9 206.2M1065.8 197.3L1062.5 209.1M1086.5 196.8L1085.2 199.2M1103.6 196.9L1099.9 201.8M1123.5 196.0L1120.9 202.3M1138.0 194.8L1134.9 199.2M1157.5 196.7L1155.4 199.2M1179.0 196.3L1178.1 197.4M1197.0 196.5L1195.6 198.5M891.3 178.4L894.7 181.9M909.9 179.9L914.1 183.4M925.5 178.4L928.7 182.0M983.4 183.0L982.3 187.7M1001.5 180.8L1004.1 188.5M1020.5 182.1L1023.5 189.1M1036.4 180.4L1036.2 191.4M1060.9 182.9L1060.7 190.1M1074.0 180.8L1072.8 182.5M1094.3 179.6L1093.4 183.0M1113.2 177.8L1109.6 182.9M1129.2 183.2L1123.8 187.7M1151.3 178.2L1147.7 183.3M1169.9 180.9L1168.1 189.8M900.7 163.6L901.0 164.2M917.1 163.2L918.1 166.1M934.8 164.4L936.5 169.0M953.9 162.9L956.6 167.1M974.0 163.9L975.8 168.8M992.7 163.3L998.0 180.0M1012.3 163.8L1012.4 169.3M1028.2 162.8L1030.4 202.1M1049.5 164.5L1047.9 170.8M1066.3 165.0L1065.0 173.2M1086.5 164.0L1085.5 166.2M1122.3 163.7L1119.6 165.5M1142.7 165.9L1140.0 169.1M945.3 148.1L948.0 153.6M966.9 148.0L970.6 156.0M981.8 148.6L986.3 162.2M1002.8 149.0L1006.0 159.5M1020.6 147.8L1024.5 154.2M1038.5 148.5L1038.2 153.3M1057.8 146.9L1057.9 148.7M1074.0 144.9L1073.2 147.7M1093.6 149.6L1087.2 163.9M1111.9 149.5L1108.4 155.1M973.2 134.1L974.5 136.5M990.6 130.0L995.7 138.4M1009.5 132.0L1011.1 138.6M1028.9 134.2L1029.0 134.8M1049.3 131.8L1049.8 133.8M1065.8 133.6L1064.5 143.2M1085.3 131.9L1084.5 133.4M1039.2 117.1L1041.5 126.8" stroke="#000" stroke-width="1.5" fill="none"/><path d="M942.1 577.5L938.6 583.1L937.7 581.0L935.9 579.7zM981.0 573.9L977.8 580.1L976.7 578.0L974.6 576.8zM999.0 577.5L995.4 583.4L994.5 581.2L992.5 579.9zM1013.8 577.3L1011.9 582.5L1010.8 581.0L1009.1 580.2zM1032.9 574.0L1032.7 581.0L1030.8 579.5L1028.4 579.4zM1050.4 577.0L1051.2 580.1L1050.1 579.7L1049.0 579.9zM1063.2 571.2L1066.0 577.6L1063.7 577.1L1061.4 578.0zM1082.7 570.1L1086.3 576.1L1083.9 575.9L1081.7 577.0zM1102.4 575.0L1107.3 580.0L1104.9 580.3L1103.1 582.0zM919.3 558.1L915.3 563.9L914.5 561.7L912.6 560.2zM931.3 557.3L932.0 564.3L929.9 563.0L927.5 563.2zM950.3 557.3L948.7 564.1L947.1 562.2L944.8 561.6zM967.2 547.7L968.1 554.7L966.0 553.5L963.6 553.7zM986.1 556.6L985.8 563.6L983.9 562.0L981.5 561.8zM1003.3 554.4L1004.2 561.3L1002.1 560.2L999.7 560.4zM1024.4 560.7L1024.5 567.7L1022.5 566.3L1020.1 566.3zM1040.9 555.1L1041.6 562.1L1039.5 560.8L1037.1 561.0zM1057.4 556.1L1060.0 562.6L1057.7 562.0L1055.4 562.8zM1074.6 558.9L1076.9 563.8L1075.1 563.4L1073.4 564.2zM1092.3 558.7L1095.8 564.2L1093.5 564.0L1091.6 565.1zM1111.0 561.7L1114.5 565.5L1112.7 565.7L1111.4 566.9zM1128.6 558.2L1133.0 562.4L1130.9 562.8L1129.5 564.2zM1146.2 559.3L1152.6 561.9L1150.6 563.1L1149.6 565.3zM904.5 543.1L902.4 549.8L901.0 547.9L898.7 547.1zM918.9 541.4L920.1 547.8L918.1 546.8L915.9 547.1zM938.8 541.6L939.7 548.6L937.6 547.4L935.2 547.6zM958.3 543.8L957.5 550.8L955.7 549.1L953.4 548.8zM975.9 539.8L975.1 546.7L973.3 545.1L970.9 544.7zM994.8 545.2L995.3 549.6L994.0 548.9L992.4 549.0zM1013.4 540.7L1013.9 547.7L1011.9 546.4L1009.5 546.5zM1029.5 546.1L1031.0 549.0L1029.9 548.8L1028.8 549.3zM1045.3 540.4L1049.5 545.9L1047.1 546.0L1045.1 547.3zM1060.5 564.1L1060.6 557.2L1062.5 558.6L1064.9 558.7zM1081.5 542.4L1087.5 546.0L1085.2 546.9L1083.9 548.9zM1100.2 544.4L1105.7 548.6L1103.4 549.3L1101.9 551.1zM1119.5 540.6L1123.7 546.2L1121.3 546.2L1119.3 547.6zM1134.1 542.7L1140.3 545.9L1138.2 547.0L1137.0 549.1zM1156.5 544.3L1162.4 547.7L1160.2 548.7L1159.0 550.6zM893.3 528.7L893.0 534.9L891.3 533.5L889.2 533.3zM910.6 526.2L909.6 532.7L908.0 531.2L905.8 530.7zM936.5 521.5L935.3 528.4L933.6 526.6L931.2 526.1zM951.3 522.2L949.7 529.0L948.1 527.2L945.8 526.5zM969.3 519.5L969.2 526.5L967.3 525.0L964.9 524.9zM986.6 524.1L986.3 531.1L984.4 529.6L982.0 529.4zM1003.7 524.6L1005.1 531.5L1002.9 530.5L1000.5 530.9zM1008.1 529.8L1015.0 529.2L1013.8 531.2L1013.9 533.6zM1041.1 526.2L1040.8 533.2L1038.9 531.7L1036.5 531.5zM1056.0 521.5L1059.0 527.8L1056.6 527.4L1054.4 528.3zM1076.0 528.0L1077.5 534.5L1075.4 533.6L1073.2 534.0zM1092.6 527.6L1096.3 533.1L1094.1 533.0L1092.1 534.2zM1112.0 526.6L1116.4 532.1L1114.0 532.2L1112.0 533.6zM1126.2 526.4L1132.3 529.7L1130.1 530.7L1128.9 532.8zM1142.1 528.1L1148.4 531.2L1146.3 532.3L1145.1 534.4zM1163.5 525.4L1169.1 529.5L1166.8 530.3L1165.3 532.1zM887.4 515.0L883.3 520.6L882.5 518.3L880.7 516.8zM893.7 512.9L900.4 515.0L898.5 516.4L897.6 518.7zM924.5 520.8L918.7 521.9L919.6 520.1L919.3 518.1zM937.0 513.4L937.6 515.8L936.8 515.5L936.0 515.6zM955.9 507.8L956.1 514.8L954.1 513.5L951.7 513.4zM971.9 511.1L974.8 516.1L972.8 515.9L971.1 516.8zM996.9 508.6L998.3 515.4L996.1 514.4L993.8 514.7zM1014.6 504.1L1015.6 511.1L1013.4 509.9L1011.0 510.2zM1030.5 504.4L1032.9 511.0L1030.6 510.3L1028.3 511.0zM1044.6 510.1L1048.5 515.7L1046.2 515.6L1044.2 516.9zM1062.6 510.0L1066.6 515.8L1064.2 515.7L1062.2 517.0zM1086.0 507.8L1088.3 514.4L1086.0 513.7L1083.7 514.4zM1095.3 510.9L1102.2 512.0L1100.5 513.7L1100.1 516.1zM1114.0 501.9L1119.4 506.2L1117.1 506.9L1115.5 508.7zM1133.6 508.7L1139.7 512.1L1137.5 513.1L1136.3 515.2zM1153.6 510.1L1159.0 514.7L1156.6 515.2L1155.0 517.0zM1176.0 513.1L1179.5 516.1L1177.9 516.5L1176.8 517.6zM1194.1 511.5L1199.0 516.4L1196.7 516.8L1194.9 518.4zM882.6 492.7L878.7 498.5L877.9 496.2L876.0 494.8zM896.0 496.6L892.6 502.7L891.6 500.5L889.5 499.2zM930.3 488.6L931.1 495.5L929.0 494.3L926.7 494.5zM946.9 493.3L947.0 500.3L945.0 498.9L942.6 498.9zM965.4 493.8L966.7 500.6L964.5 499.6L962.1 499.9zM985.9 489.9L986.1 496.9L984.1 495.5L981.7 495.5zM999.4 498.6L1000.4 501.4L999.5 501.1L998.5 501.4zM1020.8 487.3L1022.7 494.0L1020.5 493.2L1018.1 493.7zM1039.1 491.5L1042.3 497.7L1039.9 497.4L1037.8 498.4zM1058.0 485.5L1060.1 492.1L1057.8 491.4L1055.5 492.0zM1070.1 490.4L1075.6 494.6L1073.3 495.3L1071.8 497.2zM1092.0 490.6L1096.0 496.3L1093.6 496.3L1091.6 497.6zM1111.4 493.6L1115.9 498.9L1113.5 499.1L1111.7 500.6zM1118.8 490.4L1125.4 492.9L1123.3 494.2L1122.4 496.4zM1144.0 493.1L1149.1 497.9L1146.8 498.3L1145.1 500.0zM1163.0 497.6L1168.9 501.3L1166.7 502.2L1165.3 504.2zM1200.5 497.7L1207.0 500.4L1205.0 501.7L1203.9 503.8zM869.4 482.2L864.4 487.0L864.1 484.7L862.5 482.9zM886.9 481.9L883.7 486.6L883.1 484.8L881.5 483.6zM908.2 473.0L906.5 479.8L904.9 477.9L902.6 477.2zM921.5 477.6L921.7 484.6L919.8 483.2L917.4 483.2zM956.3 476.5L958.1 483.3L955.9 482.4L953.5 482.9zM982.2 496.0L985.3 489.7L986.4 491.9L988.5 493.0zM1008.5 474.7L1012.2 480.6L1009.8 480.5L1007.7 481.7zM1027.5 474.8L1030.5 481.1L1028.1 480.6L1025.9 481.6zM1038.5 468.4L1043.4 473.4L1041.0 473.7L1039.2 475.3zM1067.8 465.9L1069.6 472.7L1067.4 471.8L1065.0 472.4zM1081.4 476.0L1086.6 480.6L1084.3 481.1L1082.6 482.8zM1101.5 483.8L1103.5 485.4L1102.6 485.6L1102.1 486.3zM1114.8 477.2L1120.7 480.9L1118.5 481.8L1117.1 483.8zM1137.5 478.3L1142.8 482.9L1140.4 483.4L1138.7 485.2zM1152.4 478.9L1158.7 481.8L1156.6 483.0L1155.5 485.1zM1174.3 479.6L1179.5 483.5L1177.4 484.2L1175.9 485.9zM1192.4 477.1L1197.7 481.2L1195.5 481.9L1194.0 483.6zM1211.1 470.5L1215.8 475.8L1213.4 476.0L1211.5 477.5zM1227.6 479.5L1233.6 483.2L1231.3 484.1L1230.0 486.1zM863.4 465.2L858.6 470.2L858.2 467.8L856.5 466.1zM879.8 463.3L877.8 470.0L876.3 468.0L874.0 467.3zM896.8 464.4L893.1 470.3L892.2 468.0L890.2 466.7zM919.5 461.1L916.3 467.3L915.2 465.1L913.1 463.9zM934.3 461.8L931.3 468.1L930.2 466.0L928.1 464.9zM944.9 456.2L948.3 462.3L945.9 462.0L943.8 463.1zM966.5 453.9L967.9 460.7L965.7 459.7L963.3 460.1zM985.1 456.9L985.5 463.9L983.5 462.6L981.1 462.7zM996.3 475.4L998.3 469.7L999.4 471.4L1001.4 472.2zM1015.0 458.9L1019.1 464.6L1016.7 464.6L1014.8 465.9zM1034.0 457.8L1038.3 463.3L1035.9 463.4L1034.0 464.8zM1056.4 462.5L1060.2 468.4L1057.8 468.2L1055.7 469.4zM1066.1 457.6L1072.2 461.0L1070.0 462.0L1068.8 464.0zM1090.2 456.9L1094.5 462.4L1092.1 462.5L1090.2 463.9zM1107.5 455.3L1112.8 459.9L1110.4 460.4L1108.8 462.2zM1128.8 457.1L1133.2 462.5L1130.8 462.7L1128.9 464.1zM1141.5 459.0L1147.9 461.9L1145.8 463.1L1144.8 465.2zM1166.7 468.2L1168.5 469.6L1167.7 469.8L1167.2 470.4zM1185.1 460.9L1190.1 465.9L1187.7 466.3L1185.9 467.9zM1240.7 467.3L1243.5 468.7L1242.5 469.2L1242.0 470.1zM856.9 447.4L851.6 452.0L851.4 449.6L849.9 447.7zM870.9 452.2L865.8 456.5L865.7 454.2L864.3 452.4zM906.0 430.5L903.1 436.9L901.9 434.8L899.8 433.8zM926.8 424.3L924.0 430.7L922.8 428.7L920.6 427.6zM921.8 440.5L920.4 447.4L918.8 445.6L916.5 445.0zM937.9 450.2L936.7 452.9L936.2 452.1L935.3 451.6zM952.8 439.7L954.9 446.4L952.7 445.6L950.3 446.3zM972.8 443.8L976.5 449.7L974.1 449.5L972.0 450.7zM990.4 444.9L993.7 451.1L991.3 450.7L989.1 451.8zM1008.7 467.7L1007.1 460.9L1009.3 461.9L1011.7 461.4zM1022.7 441.7L1027.5 446.8L1025.1 447.1L1023.3 448.7zM1049.5 438.7L1051.7 445.3L1049.4 444.6L1047.1 445.2zM1061.4 442.7L1066.4 447.6L1064.1 448.0L1062.3 449.7zM1078.9 446.8L1084.1 451.5L1081.7 452.0L1080.0 453.7zM1104.9 443.9L1106.8 450.7L1104.6 449.8L1102.2 450.4zM1114.2 446.4L1120.6 449.3L1118.5 450.5L1117.4 452.6zM1137.4 443.9L1142.5 448.7L1140.1 449.2L1138.4 450.9zM1160.0 452.1L1161.5 453.2L1160.9 453.4L1160.5 453.9zM1169.8 444.3L1175.9 447.6L1173.7 448.7L1172.5 450.7zM1187.7 440.6L1193.5 444.5L1191.2 445.3L1189.8 447.3zM1210.2 453.0L1214.6 452.9L1213.7 454.1L1213.7 455.6zM1227.6 445.7L1232.9 450.2L1230.6 450.8L1229.0 452.5zM1245.1 451.5L1249.9 452.4L1248.7 453.5L1248.3 455.2zM844.0 427.7L840.4 433.7L839.4 431.5L837.4 430.1zM862.1 433.4L856.3 437.2L856.4 434.8L855.1 432.8zM889.7 432.0L883.8 435.8L883.9 433.4L882.7 431.3zM898.1 433.1L894.1 438.8L893.3 436.5L891.4 435.1zM919.2 424.3L917.1 431.0L915.7 429.0L913.4 428.2zM933.8 429.0L932.5 435.8L930.9 434.1L928.5 433.6zM956.9 419.1L956.0 426.0L954.3 424.4L951.9 424.0zM967.1 426.8L968.0 433.7L965.9 432.5L963.5 432.7zM990.2 455.6L985.8 450.2L988.2 450.0L990.1 448.6zM990.2 417.8L995.2 422.7L992.8 423.1L991.1 424.8zM1012.7 414.1L1016.5 419.9L1014.1 419.8L1012.0 421.0zM1031.1 430.2L1037.0 433.9L1034.8 434.8L1033.5 436.8zM1049.7 426.3L1055.6 430.0L1053.4 430.9L1052.0 432.9zM1069.8 430.7L1076.0 434.0L1073.9 435.0L1072.7 437.1zM1084.2 424.0L1090.3 427.4L1088.1 428.4L1086.8 430.4zM1123.7 421.8L1128.7 426.7L1126.3 427.1L1124.6 428.7zM1146.4 428.3L1151.1 433.5L1148.7 433.7L1146.9 435.3zM1164.1 427.7L1169.2 432.5L1166.8 432.9L1165.1 434.6zM1180.2 429.7L1186.2 433.4L1184.0 434.3L1182.6 436.3zM1200.0 420.1L1204.9 425.1L1202.5 425.4L1200.7 427.0zM1219.4 432.1L1225.9 434.8L1223.8 436.1L1222.8 438.2zM1237.4 427.6L1243.2 431.6L1240.9 432.4L1239.5 434.3zM1253.0 432.7L1259.6 435.0L1257.6 436.4L1256.7 438.6zM831.6 421.9L824.6 422.5L825.8 420.5L825.7 418.1zM853.5 417.8L847.8 421.8L847.8 419.4L846.5 417.3zM870.4 424.2L863.6 425.5L864.6 423.3L864.3 420.9zM891.0 414.6L886.4 419.9L885.9 417.5L884.1 415.8zM902.8 420.1L898.7 424.1L898.4 422.2L897.1 420.7zM923.1 414.0L922.2 420.9L920.5 419.3L918.1 418.9zM942.9 404.3L941.6 411.2L940.0 409.4L937.6 408.9zM956.8 408.5L958.4 415.3L956.2 414.4L953.8 414.8zM985.0 390.9L984.6 397.9L982.8 396.4L980.4 396.2zM996.5 396.9L997.3 403.8L995.2 402.6L992.8 402.8zM1012.3 406.7L1014.2 413.5L1012.0 412.6L1009.7 413.2zM1025.0 412.1L1029.9 417.1L1027.5 417.5L1025.7 419.1zM1038.9 411.9L1044.9 415.5L1042.7 416.4L1041.3 418.4zM1054.3 402.0L1059.6 406.7L1057.2 407.2L1055.5 408.9zM1073.5 410.1L1079.9 412.9L1077.9 414.1L1076.8 416.3zM1091.4 406.9L1097.4 410.5L1095.1 411.4L1093.8 413.4zM1118.7 405.8L1122.3 411.8L1119.9 411.6L1117.7 412.7zM1132.7 409.3L1138.7 412.9L1136.5 413.8L1135.1 415.8zM1150.8 409.8L1157.0 412.9L1154.9 414.0L1153.8 416.1zM1171.0 416.1L1177.7 418.3L1175.7 419.7L1174.9 421.9zM1188.9 409.1L1194.6 413.2L1192.3 413.9L1190.8 415.8zM1210.0 416.4L1216.5 419.0L1214.5 420.3L1213.5 422.5zM1228.4 413.8L1234.3 417.6L1232.1 418.4L1230.7 420.4zM1259.7 422.4L1252.8 422.0L1254.3 420.1L1254.5 417.7zM1260.5 418.6L1267.5 418.1L1266.3 420.1L1266.4 422.5zM822.4 405.5L816.4 407.8L817.0 405.7L816.3 403.6zM846.4 401.9L840.5 405.6L840.7 403.2L839.5 401.1zM863.7 403.4L858.1 407.6L858.1 405.2L856.7 403.2zM886.8 400.5L880.7 403.8L881.0 401.4L879.9 399.3zM906.0 397.7L900.8 402.5L900.6 400.1L899.0 398.3zM917.6 392.5L914.6 398.8L913.4 396.7L911.3 395.5zM930.4 400.7L929.6 407.6L927.8 406.0L925.5 405.6zM951.0 393.2L950.2 400.2L948.4 398.5L946.0 398.1zM966.3 399.6L964.0 406.2L962.6 404.2L960.4 403.4zM990.9 379.6L991.5 386.6L989.4 385.4L987.0 385.5zM1003.5 397.1L1004.8 402.0L1003.2 401.3L1001.5 401.7zM1013.1 392.1L1018.5 396.6L1016.1 397.2L1014.5 399.0zM1028.5 393.4L1033.8 397.9L1031.5 398.5L1029.9 400.2zM1048.2 398.0L1054.5 401.0L1052.4 402.2L1051.3 404.3zM1066.0 399.3L1073.0 400.0L1071.4 401.8L1071.1 404.2zM1091.4 396.0L1096.7 400.5L1094.4 401.1L1092.8 402.9zM1102.1 395.4L1108.8 397.3L1106.9 398.8L1106.1 401.1zM1122.5 400.4L1129.3 401.6L1127.6 403.3L1127.1 405.7zM1146.3 391.4L1150.8 396.8L1148.4 396.9L1146.5 398.4zM1160.9 393.7L1166.7 397.7L1164.4 398.4L1162.9 400.4zM1183.5 400.9L1190.4 401.6L1188.8 403.4L1188.5 405.7zM1200.9 400.7L1207.6 402.8L1205.6 404.2L1204.8 406.5zM1211.1 395.8L1217.8 397.7L1215.9 399.2L1215.2 401.5zM1237.4 405.3L1242.7 406.0L1241.5 407.3L1241.2 409.2zM1253.8 403.7L1259.6 403.9L1258.3 405.4L1258.2 407.4zM1270.8 406.1L1277.0 402.8L1276.7 405.1L1277.7 407.3zM836.5 384.0L830.8 388.0L830.8 385.6L829.5 383.6zM853.4 388.0L846.9 390.5L847.5 388.1L846.8 385.9zM876.8 391.7L869.9 392.8L871.0 390.6L870.7 388.3zM902.7 387.5L896.2 390.2L896.8 387.8L896.0 385.6zM906.3 385.7L900.5 389.6L900.6 387.2L899.3 385.2zM931.7 383.2L926.3 387.7L926.2 385.3L924.7 383.4zM950.6 378.8L946.7 384.6L945.9 382.3L944.0 380.9zM967.3 379.0L965.0 385.6L963.6 383.6L961.4 382.8zM965.3 385.9L971.9 383.8L971.2 386.1L971.8 388.4zM993.2 376.5L994.5 383.3L992.3 382.3L989.9 382.7zM1010.6 375.9L1013.7 382.1L1011.3 381.7L1009.1 382.7zM1025.0 383.7L1031.1 387.2L1028.9 388.2L1027.6 390.2zM1042.3 379.1L1047.4 383.8L1045.0 384.3L1043.3 386.0zM1071.8 379.6L1078.6 380.9L1076.9 382.5L1076.3 384.9zM1088.4 379.9L1095.3 381.1L1093.6 382.8L1093.1 385.1zM1132.4 384.4L1139.3 385.0L1137.8 386.8L1137.4 389.2zM1148.5 381.5L1155.3 383.0L1153.5 384.6L1152.9 386.9zM1174.9 390.0L1177.0 390.6L1176.4 391.0L1176.2 391.7zM1187.6 385.8L1194.3 387.6L1192.4 389.2L1191.7 391.4zM1206.5 381.8L1213.3 383.4L1211.5 385.0L1210.8 387.3zM1216.1 380.8L1223.0 381.8L1221.4 383.5L1220.9 385.9zM1257.7 380.4L1256.2 387.2L1254.6 385.4L1252.3 384.8zM1263.5 387.5L1270.5 387.1L1269.2 389.1L1269.2 391.5zM828.2 371.1L821.5 373.2L822.3 370.9L821.7 368.6zM842.9 373.9L836.1 375.4L837.1 373.2L836.7 370.8zM864.5 373.8L857.7 375.7L858.6 373.5L858.0 371.1zM881.5 368.0L875.9 372.3L875.9 369.9L874.5 367.9zM910.0 370.5L903.6 373.4L904.1 371.0L903.2 368.8zM923.4 367.3L917.9 371.6L917.8 369.2L916.4 367.2zM945.2 372.3L939.2 375.9L939.4 373.5L938.3 371.4zM962.5 365.4L957.5 370.2L957.2 367.9L955.6 366.1zM975.4 364.1L972.0 370.2L971.0 368.0L968.9 366.8zM989.2 366.1L986.9 372.7L985.5 370.7L983.3 369.9zM1004.9 358.7L1004.8 365.7L1002.9 364.2L1000.5 364.1zM1019.4 344.4L1021.4 351.1L1019.1 350.3L1016.8 350.9zM1034.0 363.4L1038.5 368.8L1036.1 369.0L1034.2 370.4zM1050.7 368.2L1057.4 370.2L1055.5 371.7L1054.7 374.0zM1064.1 366.6L1071.1 367.1L1069.5 368.9L1069.3 371.3zM1087.4 366.6L1094.4 367.2L1092.8 369.0L1092.5 371.4zM1103.4 365.8L1110.0 368.0L1108.0 369.4L1107.1 371.6zM1123.2 370.8L1130.1 372.0L1128.4 373.6L1127.9 376.0zM1134.0 368.9L1141.0 368.7L1139.7 370.7L1139.6 373.1zM1158.4 371.4L1165.3 370.4L1164.2 372.5L1164.5 374.9zM1178.0 371.4L1184.8 369.9L1183.9 372.1L1184.3 374.5zM1200.4 371.7L1207.1 371.3L1205.8 373.2L1205.9 375.5zM1213.7 368.8L1220.6 367.6L1219.5 369.8L1219.8 372.1zM1228.7 375.0L1235.0 372.1L1234.5 374.4L1235.4 376.6zM1275.0 374.1L1281.1 372.7L1280.3 374.7L1280.7 376.8zM836.9 358.9L830.1 360.6L831.0 358.3L830.5 356.0zM852.3 354.7L846.0 357.6L846.5 355.3L845.6 353.1zM876.9 358.1L870.1 359.7L871.1 357.5L870.6 355.1zM911.9 347.5L905.9 351.1L906.1 348.7L905.0 346.6zM916.4 358.1L910.1 361.1L910.5 358.7L909.6 356.5zM947.5 357.4L940.7 359.2L941.6 357.0L941.1 354.6zM973.1 358.0L966.1 358.7L967.3 356.6L967.2 354.2zM996.5 361.0L989.5 361.9L990.7 359.8L990.5 357.4zM999.2 350.2L994.6 355.4L994.1 353.1L992.4 351.5zM1016.1 348.0L1014.9 354.9L1013.2 353.2L1010.9 352.7zM1022.3 350.5L1028.8 353.1L1026.7 354.3L1025.7 356.5zM1038.6 354.1L1045.3 352.1L1044.5 354.4L1045.1 356.7zM1059.8 354.1L1066.7 354.4L1065.2 356.2L1065.0 358.6zM1064.9 350.9L1071.9 350.8L1070.5 352.7L1070.4 355.1zM1091.9 356.3L1098.7 354.6L1097.8 356.8L1098.3 359.1zM1103.0 356.7L1109.4 354.1L1108.8 356.5L1109.7 358.7zM1128.0 353.1L1135.0 353.1L1133.6 355.0L1133.5 357.4zM1145.3 349.7L1152.2 350.5L1150.6 352.3L1150.2 354.7zM1166.9 359.8L1172.8 356.0L1172.7 358.4L1173.9 360.4zM1192.9 357.2L1197.6 354.4L1197.4 356.3L1198.3 357.9zM1206.2 357.7L1212.7 355.2L1212.1 357.5L1212.8 359.8zM1228.6 356.5L1234.9 356.5L1233.6 358.2L1233.5 360.4zM1242.4 353.3L1249.3 352.2L1248.2 354.4L1248.4 356.8zM1259.6 354.6L1266.3 352.9L1265.4 355.2L1265.9 357.5zM845.3 337.6L839.6 341.5L839.7 339.1L838.4 337.1zM862.5 342.4L855.7 343.8L856.7 341.6L856.3 339.3zM888.1 342.0L881.4 343.8L882.2 341.6L881.7 339.2zM903.1 343.5L896.2 344.3L897.3 342.2L897.2 339.8zM921.7 342.3L914.7 343.3L915.9 341.2L915.6 338.8zM948.3 339.1L941.6 341.3L942.4 339.0L941.7 336.7zM950.4 341.9L946.4 343.2L946.9 341.8L946.5 340.5zM979.9 338.8L973.4 341.3L974.0 338.9L973.3 336.7zM990.7 345.8L983.8 344.5L985.5 342.9L986.1 340.5zM1007.9 342.7L1000.9 342.3L1002.4 340.5L1002.7 338.1zM1016.7 355.5L1016.6 348.5L1018.6 349.9L1021.0 349.9zM1028.9 342.7L1034.4 338.5L1034.5 340.9L1035.8 342.8zM1037.4 339.9L1043.5 336.4L1043.2 338.8L1044.3 341.0zM1087.7 340.0L1091.2 337.5L1091.2 339.0L1092.0 340.2zM1089.8 342.8L1096.1 339.9L1095.6 342.2L1096.6 344.4zM1111.6 344.0L1117.7 340.5L1117.4 342.9L1118.5 345.1zM1139.6 345.7L1143.9 340.2L1144.5 342.5L1146.4 344.1zM1150.4 340.2L1157.3 339.0L1156.2 341.2L1156.5 343.5zM1175.7 341.1L1182.1 338.2L1181.6 340.6L1182.5 342.8zM1197.1 340.7L1203.5 337.9L1203.0 340.2L1203.9 342.5zM1213.8 344.0L1219.7 340.3L1219.5 342.7L1220.7 344.8zM1251.4 338.1L1257.7 334.9L1257.3 337.3L1258.3 339.5zM832.6 323.7L826.8 326.3L827.3 324.1L826.4 322.1zM878.5 321.9L872.2 325.0L872.6 322.6L871.7 320.4zM895.9 325.0L889.1 326.5L890.1 324.3L889.7 321.9zM916.1 331.1L909.1 331.5L910.4 329.5L910.4 327.1zM931.0 330.5L924.1 329.1L925.9 327.5L926.4 325.2zM949.5 323.2L942.8 325.4L943.6 323.1L942.9 320.8zM962.5 329.4L955.5 328.9L957.0 327.1L957.3 324.7zM985.4 327.7L978.4 327.3L979.9 325.4L980.1 323.0zM999.6 329.6L992.8 327.9L994.7 326.4L995.3 324.1zM1019.2 339.5L1014.6 334.2L1017.0 334.0L1018.9 332.5zM1023.9 343.1L1023.9 336.1L1025.9 337.5L1028.3 337.6zM1044.7 332.4L1046.1 325.6L1047.7 327.4L1050.0 327.9zM1053.6 324.5L1059.5 320.7L1059.4 323.1L1060.6 325.2zM1075.3 327.9L1080.2 323.0L1080.6 325.3L1082.2 327.1zM1092.2 326.8L1098.1 323.1L1097.9 325.5L1099.1 327.5zM1112.4 332.0L1115.9 325.9L1116.9 328.1L1118.9 329.4zM1107.8 348.1L1112.1 342.6L1112.8 344.9L1114.6 346.5zM1146.3 334.7L1150.5 329.2L1151.2 331.5L1153.0 333.1zM1162.8 329.7L1168.1 325.2L1168.3 327.6L1169.8 329.5zM1184.9 326.4L1190.8 322.7L1190.6 325.1L1191.8 327.2zM1205.6 325.1L1211.2 321.0L1211.2 323.4L1212.5 325.4zM1217.4 327.8L1223.1 323.7L1223.1 326.1L1224.4 328.1zM1258.3 320.4L1265.2 319.5L1264.0 321.6L1264.2 324.0zM842.2 308.7L835.2 309.4L836.5 307.3L836.3 304.9zM862.3 313.0L855.4 313.0L856.8 311.1L856.9 308.7zM882.6 312.3L875.6 312.2L877.0 310.3L877.2 307.9zM895.1 308.1L891.9 308.6L892.5 307.6L892.4 306.5zM929.8 316.3L922.9 316.6L924.2 314.6L924.2 312.2zM943.5 319.6L936.8 317.6L938.7 316.1L939.5 313.9zM956.2 317.5L950.2 313.9L952.4 313.0L953.8 311.0zM986.0 319.3L981.2 314.3L983.6 313.9L985.4 312.4zM1004.8 330.9L1000.8 325.2L1003.2 325.3L1005.2 324.0zM1019.8 317.7L1019.3 310.7L1021.4 312.0L1023.8 311.9zM1051.2 313.7L1054.5 307.5L1055.5 309.7L1057.6 310.9zM1069.4 318.8L1070.3 311.8L1072.1 313.5L1074.4 313.9zM1085.6 316.1L1088.9 309.9L1089.9 312.0L1092.0 313.2zM1110.1 311.5L1112.4 307.3L1113.1 308.8L1114.5 309.6zM1110.8 324.2L1114.7 318.5L1115.5 320.7L1117.5 322.1zM1161.4 314.2L1165.1 308.3L1166.0 310.6L1168.0 311.9zM1184.3 293.0L1187.7 299.1L1185.3 298.8L1183.2 299.9zM1199.4 313.9L1205.1 309.9L1205.1 312.3L1206.4 314.3zM1219.2 311.4L1223.1 306.8L1223.6 308.8L1225.1 310.2zM1235.9 309.8L1240.6 304.6L1241.1 307.0L1242.8 308.7zM1254.9 312.0L1260.2 307.4L1260.4 309.8L1261.9 311.7zM860.2 290.2L854.0 293.4L854.4 291.1L853.4 288.9zM872.6 293.6L865.6 293.9L866.9 291.9L866.9 289.5zM892.3 294.7L885.6 296.6L886.5 294.3L885.9 292.0zM920.5 302.1L913.6 301.0L915.3 299.3L915.8 297.0zM930.3 307.2L924.1 303.9L926.3 302.9L927.5 300.8zM944.2 299.0L937.9 295.9L940.0 294.8L941.1 292.7zM964.1 299.9L957.6 297.2L959.7 296.0L960.7 293.8zM954.0 282.2L960.9 283.0L959.3 284.7L959.0 287.1zM997.9 308.0L994.4 301.9L996.8 302.2L998.9 301.0zM1012.0 300.8L1009.9 294.1L1012.2 294.9L1014.5 294.2zM1023.2 305.8L1023.8 298.8L1025.6 300.4L1028.0 300.7zM1037.3 309.7L1039.0 303.0L1040.5 304.8L1042.8 305.5zM1058.3 304.8L1059.6 298.0L1061.2 299.7L1063.6 300.3zM1073.9 299.3L1078.5 294.0L1079.0 296.4L1080.8 298.0zM1091.7 305.6L1093.8 298.9L1095.2 300.9L1097.5 301.7zM1107.7 304.6L1110.6 298.3L1111.8 300.4L1113.9 301.5zM1131.0 299.2L1134.4 293.1L1135.4 295.3L1137.4 296.6zM1150.1 298.2L1153.8 292.3L1154.7 294.5L1156.7 295.8zM1167.8 298.7L1172.8 293.8L1173.2 296.2L1174.8 298.0zM1182.7 297.7L1188.5 293.8L1188.4 296.2L1189.7 298.2zM1210.3 299.1L1213.3 293.0L1214.4 295.1L1216.5 296.2zM1223.7 296.2L1227.7 290.5L1228.5 292.8L1230.4 294.2zM1242.7 298.8L1247.0 293.3L1247.7 295.6L1249.5 297.1zM848.7 275.7L842.0 277.9L842.8 275.6L842.1 273.3zM861.1 277.6L854.1 278.2L855.4 276.2L855.2 273.8zM881.6 282.1L874.6 282.4L876.0 280.4L875.9 278.0zM899.4 282.8L893.3 279.4L895.5 278.4L896.7 276.3zM914.1 287.0L908.6 282.8L910.9 282.1L912.4 280.3zM929.5 282.7L925.9 278.0L928.0 278.0L929.6 276.8zM950.1 291.0L945.8 285.4L948.2 285.4L950.2 284.0zM967.7 288.0L964.7 281.6L967.0 282.1L969.3 281.2zM985.5 287.5L981.7 281.6L984.1 281.8L986.2 280.6zM998.4 290.2L998.4 283.2L1000.3 284.6L1002.7 284.7zM1015.5 291.7L1014.9 284.7L1016.9 286.0L1019.3 285.8zM1035.7 285.1L1035.9 278.1L1037.8 279.6L1040.2 279.8zM1043.6 284.8L1047.8 279.2L1048.5 281.5L1050.4 283.0zM1071.9 287.4L1072.8 280.5L1074.5 282.1L1076.9 282.5zM1085.1 289.0L1088.1 282.7L1089.3 284.8L1091.4 286.0zM1106.8 285.7L1109.1 279.1L1110.5 281.0L1112.7 281.9zM1130.3 281.5L1131.9 274.7L1133.5 276.5L1135.8 277.1zM1138.9 285.3L1141.8 278.9L1143.0 281.0L1145.1 282.1zM1168.2 276.8L1169.8 274.7L1170.0 275.6L1170.7 276.1zM1177.1 276.9L1183.0 273.1L1182.9 275.5L1184.1 277.6zM1215.8 281.6L1220.5 276.4L1221.0 278.8L1222.7 280.5zM1239.1 281.5L1243.4 275.9L1244.1 278.2L1245.9 279.8zM1251.1 275.8L1257.6 273.4L1257.0 275.7L1257.7 278.0zM846.4 261.3L844.6 261.6L844.9 261.0L844.8 260.4zM877.9 267.6L871.0 267.0L872.5 265.2L872.9 262.8zM889.0 265.2L882.3 263.2L884.3 261.7L885.0 259.5zM907.3 272.0L901.7 267.7L904.0 267.0L905.6 265.2zM931.7 275.1L925.6 271.6L927.8 270.7L929.1 268.6zM946.0 271.9L940.2 268.0L942.5 267.2L943.9 265.3zM955.8 272.0L952.5 265.8L954.9 266.2L957.1 265.2zM972.3 277.2L970.5 270.5L972.8 271.4L975.1 270.8zM984.9 273.8L984.1 266.8L986.2 268.0L988.6 267.9zM1006.7 269.4L1006.4 262.4L1008.4 263.7L1010.8 263.7zM1023.1 276.6L1023.0 269.6L1025.0 271.0L1027.4 271.1zM1043.8 266.5L1046.2 259.9L1047.5 261.9L1049.7 262.8zM1056.8 272.7L1058.7 266.0L1060.2 267.9L1062.5 268.7zM1091.7 261.2L1085.7 262.6L1086.6 260.6L1086.2 258.6zM1087.3 269.0L1091.8 263.7L1092.4 266.0L1094.2 267.6zM1120.8 266.9L1120.4 259.9L1122.4 261.2L1124.8 261.2zM1131.1 245.3L1136.6 249.7L1134.2 250.3L1132.6 252.1zM1146.5 275.1L1149.1 268.6L1150.4 270.7L1152.6 271.7zM1190.5 267.6L1193.7 261.4L1194.8 263.6L1196.9 264.7zM1209.6 262.0L1213.3 257.6L1213.8 259.5L1215.2 260.9zM1231.2 261.8L1232.9 259.0L1233.4 260.1L1234.3 260.7zM1241.3 263.4L1246.4 258.6L1246.7 261.0L1248.3 262.8zM857.6 243.3L854.5 245.4L854.6 244.1L853.9 243.1zM880.8 249.3L873.8 249.4L875.2 247.4L875.3 245.0zM899.8 250.5L892.9 249.4L894.7 247.7L895.2 245.3zM912.1 248.1L907.1 247.1L908.4 245.9L908.8 244.2zM930.2 253.2L926.4 247.3L928.8 247.4L930.9 246.2zM948.5 261.8L945.9 255.3L948.2 255.9L950.5 255.1zM960.3 265.0L959.4 258.0L961.5 259.2L963.9 259.0zM981.1 255.2L980.5 248.3L982.6 249.5L985.0 249.4zM999.3 267.6L997.8 260.7L1000.0 261.7L1002.4 261.3zM1017.8 251.6L1017.3 244.6L1019.3 245.9L1021.7 245.8zM1029.0 256.1L1031.1 249.5L1032.5 251.4L1034.8 252.2zM1049.8 259.6L1050.8 252.7L1052.5 254.3L1054.9 254.8zM1088.7 251.6L1092.3 245.6L1093.3 247.8L1095.3 249.1zM1110.0 254.1L1109.7 247.2L1111.7 248.5L1114.1 248.5zM1123.9 256.9L1125.0 250.0L1126.7 251.7L1129.0 252.2zM1142.0 258.2L1142.7 251.3L1144.5 252.9L1146.9 253.3zM1162.3 251.3L1166.4 245.7L1167.1 248.0L1169.0 249.5zM1181.8 251.0L1184.6 244.5L1185.8 246.6L1188.0 247.7zM1203.3 245.1L1204.1 242.8L1204.6 243.5L1205.4 243.8zM1215.0 249.8L1218.5 243.8L1219.4 246.0L1221.5 247.2zM1233.2 249.9L1237.1 244.0L1237.9 246.3L1239.9 247.7zM849.5 231.5L843.6 232.6L844.5 230.7L844.2 228.6zM871.3 230.6L864.3 230.6L865.7 228.6L865.8 226.2zM886.2 235.7L880.1 232.4L882.2 231.3L883.4 229.3zM910.9 233.5L904.1 232.1L905.9 230.5L906.4 228.1zM927.7 242.2L922.4 237.7L924.7 237.1L926.4 235.4zM946.0 242.5L940.5 238.2L942.8 237.5L944.3 235.7zM956.0 242.9L952.6 236.9L955.0 237.1L957.1 236.0zM967.6 243.6L967.3 236.7L969.3 238.0L971.7 238.0zM992.0 237.9L990.2 231.1L992.5 232.0L994.8 231.5zM1007.8 243.3L1007.5 236.3L1009.5 237.7L1011.9 237.7zM1027.9 253.4L1025.9 246.8L1028.2 247.5L1030.5 246.9zM1042.5 241.0L1043.0 234.1L1044.8 235.6L1047.2 235.9zM1064.3 239.1L1062.8 232.3L1065.0 233.3L1067.4 232.8zM1082.4 239.6L1081.6 232.7L1083.7 233.8L1086.1 233.6zM1098.6 234.8L1100.4 228.0L1101.9 229.9L1104.2 230.6zM1117.8 239.2L1117.6 232.2L1119.6 233.6L1122.0 233.6zM1133.2 237.0L1135.2 230.3L1136.6 232.2L1138.9 233.0zM1153.7 235.6L1154.8 228.7L1156.5 230.4L1158.8 230.9zM1170.8 238.8L1172.4 232.0L1174.0 233.9L1176.3 234.5zM1191.2 234.7L1192.0 227.8L1193.7 229.4L1196.1 229.7zM1208.7 234.9L1210.5 228.1L1212.0 229.9L1214.3 230.6zM1225.2 233.1L1229.8 227.8L1230.3 230.2L1232.1 231.8zM863.9 223.5L857.6 220.5L859.7 219.4L860.8 217.3zM880.9 224.5L875.5 220.1L877.8 219.5L879.4 217.7zM901.8 220.2L895.0 218.3L896.9 216.8L897.7 214.5zM913.8 226.4L908.9 221.4L911.3 221.1L913.1 219.5zM935.2 222.3L929.3 218.5L931.5 217.6L932.9 215.7zM951.1 220.3L946.1 215.5L948.4 215.1L950.2 213.4zM967.9 227.8L965.2 221.4L967.5 221.9L969.8 221.1zM988.0 229.2L984.4 223.2L986.8 223.4L988.9 222.2zM1001.0 221.8L999.8 214.9L1001.9 215.9L1004.3 215.6zM1030.8 231.7L1032.3 224.9L1033.9 226.7L1036.2 227.3zM1054.3 220.9L1054.0 213.9L1056.0 215.3L1058.4 215.3zM1075.6 222.7L1074.3 215.8L1076.4 216.9L1078.8 216.5zM1088.8 233.2L1088.6 226.2L1090.6 227.6L1093.0 227.6zM1105.0 225.2L1105.1 218.2L1107.0 219.6L1109.4 219.8zM1123.3 222.6L1125.7 216.0L1127.0 218.0L1129.2 218.9zM1144.2 219.4L1146.5 212.8L1147.9 214.7L1150.1 215.6zM1162.3 220.1L1164.3 213.4L1165.8 215.4L1168.0 216.2zM1177.8 224.0L1180.0 217.4L1181.4 219.3L1183.6 220.2zM1217.5 221.3L1220.2 214.9L1221.5 216.9L1223.7 217.9zM864.3 199.7L860.7 197.5L862.0 197.0L862.8 195.7zM886.5 203.9L880.1 200.9L882.2 199.8L883.3 197.7zM912.7 204.3L906.3 201.5L908.4 200.3L909.4 198.1zM930.2 216.2L924.6 212.0L926.9 211.3L928.4 209.5zM941.7 245.2L938.8 238.8L941.2 239.3L943.4 238.4zM959.5 205.8L955.2 200.3L957.6 200.2L959.6 198.8zM974.6 207.4L971.7 201.1L974.0 201.6L976.2 200.6zM992.6 210.0L989.2 203.9L991.6 204.2L993.7 203.1zM1011.7 207.1L1009.3 200.5L1011.6 201.2L1013.9 200.5zM1027.7 205.6L1026.4 198.7L1028.6 199.8L1030.9 199.4zM1043.1 211.8L1043.0 204.8L1044.9 206.2L1047.3 206.2zM1060.9 214.8L1060.4 207.8L1062.5 209.1L1064.9 209.0zM1082.4 204.4L1083.6 197.5L1085.2 199.2L1087.6 199.7zM1096.3 206.5L1098.5 199.8L1099.9 201.8L1102.1 202.6zM1118.7 207.7L1119.1 200.7L1120.9 202.3L1123.3 202.5zM1131.4 204.0L1133.4 197.3L1134.9 199.2L1137.1 200.0zM1151.6 203.7L1154.1 197.2L1155.4 199.2L1157.6 200.1zM1174.6 202.2L1176.7 195.5L1178.1 197.4L1180.4 198.3zM1192.2 203.3L1194.1 196.6L1195.6 198.5L1197.9 199.3zM898.9 186.0L892.6 183.0L894.7 181.9L895.9 179.7zM918.7 187.2L912.1 184.7L914.1 183.4L915.1 181.2zM932.6 186.4L926.5 183.0L928.7 182.0L930.0 180.0zM945.3 183.4L943.2 181.3L944.2 181.2L945.0 180.5zM980.9 193.4L980.2 186.4L982.3 187.7L984.7 187.5zM1006.0 194.1L1001.7 188.6L1004.1 188.5L1006.1 187.1zM1025.8 194.6L1021.1 189.4L1023.5 189.1L1025.3 187.6zM1036.0 197.3L1033.9 190.6L1036.2 191.4L1038.5 190.7zM1060.6 196.0L1058.4 189.4L1060.7 190.1L1063.0 189.5zM1069.2 187.2L1071.4 180.5L1072.8 182.5L1075.0 183.3zM1091.8 188.7L1091.3 181.8L1093.4 183.0L1095.8 183.0zM1106.2 187.8L1108.1 181.0L1109.6 182.9L1111.9 183.7zM1119.3 191.5L1122.9 185.5L1123.8 187.7L1125.8 189.0zM1144.3 188.2L1146.2 181.4L1147.7 183.3L1150.0 184.1zM1167.0 195.6L1166.0 188.7L1168.1 189.8L1170.5 189.6zM903.2 168.8L898.9 164.5L901.0 164.2L902.5 162.8zM920.1 171.7L915.7 166.3L918.1 166.1L920.1 164.7zM938.5 174.6L934.1 169.2L936.5 169.0L938.4 167.6zM959.7 172.1L954.2 167.8L956.6 167.1L958.1 165.3zM977.9 174.3L973.4 168.9L975.8 168.8L977.7 167.3zM999.9 185.7L995.6 180.1L998.0 180.0L1000.0 178.7zM1012.5 175.2L1010.1 168.6L1012.4 169.3L1014.7 168.5zM1030.8 208.0L1028.1 201.5L1030.4 202.1L1032.7 201.2zM1046.4 176.5L1045.8 169.6L1047.9 170.8L1050.3 170.7zM1064.0 179.0L1062.8 172.1L1065.0 173.2L1067.3 172.8zM1083.1 171.6L1083.7 164.6L1085.5 166.2L1087.9 166.5zM1114.7 168.8L1118.9 163.2L1119.6 165.5L1121.5 167.0zM1136.1 173.5L1138.7 167.0L1140.0 169.1L1142.2 170.0zM950.6 158.9L945.6 154.0L948.0 153.6L949.7 151.9zM973.1 161.4L968.2 156.4L970.6 156.0L972.4 154.4zM988.2 167.8L983.9 162.2L986.3 162.2L988.3 160.8zM1007.8 165.1L1003.6 159.5L1006.0 159.5L1008.0 158.2zM1027.6 159.2L1022.2 154.8L1024.5 154.2L1026.1 152.4zM1037.8 159.1L1036.0 152.4L1038.2 153.3L1040.6 152.7zM1058.2 154.6L1055.5 148.1L1057.9 148.7L1060.1 147.9zM1071.6 153.3L1071.2 146.4L1073.2 147.7L1075.6 147.6zM1084.8 169.3L1085.4 162.3L1087.2 163.9L1089.6 164.2zM1105.3 160.1L1106.8 153.2L1108.4 155.1L1110.7 155.7zM977.3 141.7L972.1 137.0L974.5 136.5L976.2 134.8zM998.8 143.4L993.4 139.0L995.7 138.4L997.3 136.6zM1012.5 144.4L1008.7 138.5L1011.1 138.6L1013.2 137.4zM1030.0 140.0L1026.9 134.6L1029.0 134.8L1030.9 133.8zM1051.4 139.5L1047.4 133.7L1049.8 133.8L1051.9 132.5zM1063.7 149.1L1062.3 142.2L1064.5 143.2L1066.9 142.9zM1082.1 138.8L1082.8 131.8L1084.5 133.4L1086.9 133.8zM1042.8 132.6L1039.1 126.7L1041.5 126.8L1043.5 125.6z" fill="#000"/><rect x="788.6" y="103.4" width="499.0" height="498.0" fill="none" stroke="#000" stroke-width="1.1"/><path d="M788.6 601.4v4.9M886.1 601.4v4.9M983.6 601.4v4.9M1081.2 601.4v4.9M1178.7 601.4v4.9M1276.2 601.4v4.9M788.6 601.4h-4.9M788.6 503.9h-4.9M788.6 406.4h-4.9M788.6 309.0h-4.9M788.6 211.5h-4.9M788.6 114.0h-4.9" stroke="#000" stroke-width="1.1" fill="none"/><text x="788.6" y="621.8" text-anchor="middle">0</text><text x="886.1" y="621.8" text-anchor="middle">200</text><text x="983.6" y="621.8" text-anchor="middle">400</text><text x="1081.2" y="621.8" text-anchor="middle">600</text><text x="1178.7" y="621.8" text-anchor="middle">800</text><text x="1276.2" y="621.8" text-anchor="middle">1000</text><text x="778.9" y="606.5" text-anchor="end">0</text><text x="778.9" y="509.0" text-anchor="end">200</text><text x="778.9" y="411.5" text-anchor="end">400</text><text x="778.9" y="314.1" text-anchor="end">600</text><text x="778.9" y="216.6" text-anchor="end">800</text><text x="778.9" y="119.1" text-anchor="end">1000</text></svg>
<div class="cmb" style="left:15px;top:645px;width:272px;height:25px;">ITMY</div>
<div class="grp" style="left:294px;top:645px;width:1056px;height:46px;"></div>
<div class="radio on" style="left:305px;top:660px;"></div>
<div class="lbl" style="left:325px;top:659.5px;">Wavefront + Quiver</div>
<div class="radio" style="left:825px;top:660px;"></div>
<div class="lbl" style="left:845.2px;top:659.5px;">Original + modified image</div>
<div class="panel" style="left:293.5px;top:724px;width:1056.5px;height:172px;"></div>
<div class="tab on" style="left:293.5px;top:697.5px;width:45.5px;height:27.5px;line-height:26px;">Still</div>
<div class="tab off" style="left:338px;top:699.5px;width:76px;height:24.5px;line-height:25px;">Playback</div>
<div class="tab off" style="left:413px;top:699.5px;width:47px;height:24.5px;line-height:25px;">Live</div>
<div class="lbl" style="left:304.4px;top:739.6px;">Reference:</div>
<div class="lbl" style="left:304.4px;top:770.6px;">Show:</div>
<div class="lbl" style="left:304.4px;top:863.6px;">ndscope:</div>
<div class="inp num" style="left:671.8px;top:735px;width:300px;height:24.6px;">1443878536</div>
<div class="inp num" style="left:671.8px;top:766px;width:300px;height:24.6px;">1443878956</div>
<div class="inp" style="left:671.8px;top:859px;width:300px;height:24.6px;padding-left:1px;font-size:11.05px;letter-spacing:-0.19px;">_SPHERICAL_POWER . H1:PSL-POWER_SCALE_OFFSET</div>
<div class="btn" style="left:978px;top:735px;width:361px;height:24.6px;">Get reference time from CDS</div>
<div class="btn" style="left:978px;top:766px;width:361px;height:24.6px;">Now</div>
<div class="btn" style="left:978px;top:797px;width:361px;height:24.6px;">Plot</div>
<div class="btn" style="left:978px;top:828px;width:361px;height:24.6px;">Save wavefront data</div>
<div class="btn" style="left:978px;top:859px;width:361px;height:24.6px;">Open ndscope</div>
<div class="lbl num" style="left:12.4px;top:909.9px;">x=345.85, y=1005.94</div>
</div>
<div class="abs" style="left:1349px;top:2px;width:1362px;height:931px;box-sizing:border-box;border-left:1px solid #6c6c6c;border-top:1px solid #77756f;border-radius:6px 6px 0 0;"></div>
<svg class="abs" style="left:2692px;top:916px" width="16" height="16" fill="#c8c8c8"><circle cx="13" cy="13" r="0.9"/><circle cx="9.5" cy="13" r="0.9"/><circle cx="13" cy="9.5" r="0.9"/><circle cx="6" cy="13" r="0.9"/><circle cx="9.5" cy="9.5" r="0.9"/><circle cx="13" cy="6" r="0.9"/></svg>
</body></html>
